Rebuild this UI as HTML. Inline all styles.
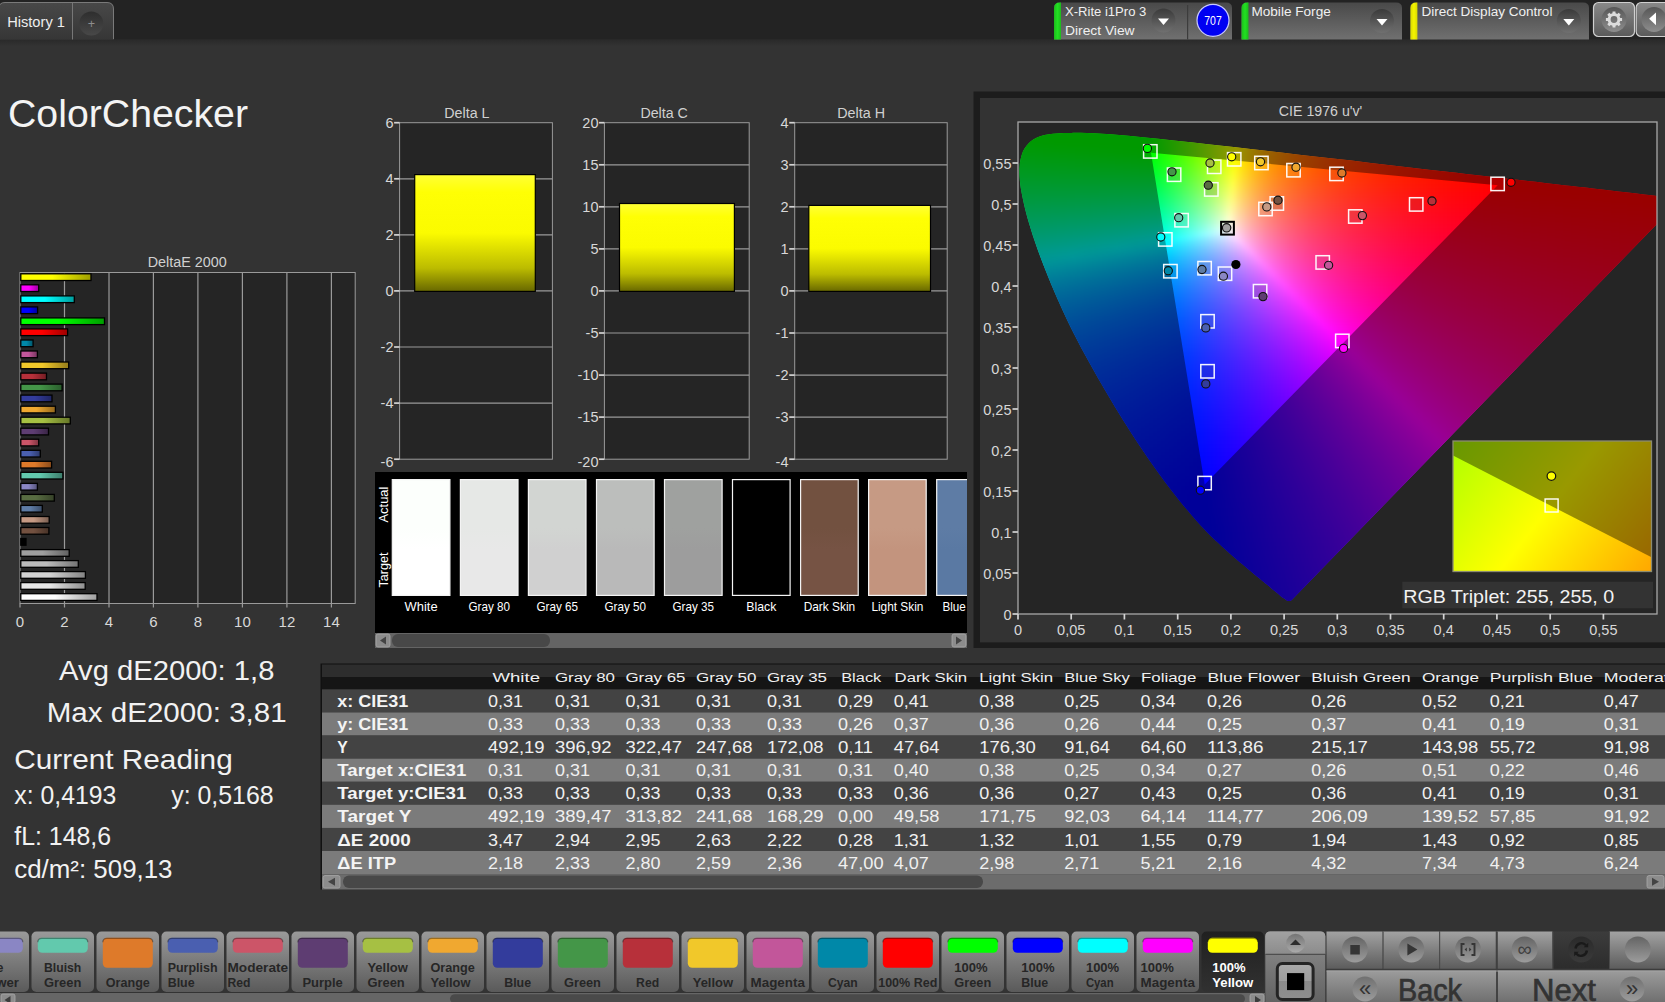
<!DOCTYPE html>
<html lang="en"><head><meta charset="utf-8"><title>ColorChecker</title>
<style>
html,body{margin:0;padding:0;background:#333;overflow:hidden}
body{width:1665px;height:1002px;position:relative;font-family:'Liberation Sans', sans-serif}
svg{display:block;position:absolute;left:0;top:0}
svg text{font-family:'Liberation Sans', sans-serif}
.cfo rect{width:9px;height:9px}
.cfi rect{width:5px;height:5px}
</style></head><body>
<svg width="1665" height="1002" viewBox="0 0 1665 1002">
<defs>
<linearGradient id="g1" x1="0" y1="0" x2="0" y2="1"><stop offset="0" stop-color="#484848"/><stop offset="1" stop-color="#363636"/></linearGradient>
<linearGradient id="g2" x1="0" y1="0" x2="0" y2="1"><stop offset="0" stop-color="#292929"/><stop offset="1" stop-color="#333"/></linearGradient>
<linearGradient id="g3" x1="0" y1="0" x2="0" y2="1"><stop offset="0" stop-color="#2e2e2e"/><stop offset="1" stop-color="#484848"/></linearGradient>
<linearGradient id="g4" x1="0" y1="0" x2="0" y2="1"><stop offset="0" stop-color="#494949"/><stop offset="1" stop-color="#707070"/></linearGradient>
<linearGradient id="g5" x1="0" y1="0" x2="0" y2="1"><stop offset="0" stop-color="#3a3a3a"/><stop offset="1" stop-color="#707070"/></linearGradient>
<linearGradient id="g6" x1="0" y1="0" x2="1" y2="0"><stop offset="0" stop-color="#1dbb1d"/><stop offset="0.5" stop-color="#22e022"/><stop offset="1" stop-color="#1dbb1d"/></linearGradient>
<linearGradient id="g7" x1="0" y1="0" x2="1" y2="0"><stop offset="0" stop-color="#1dbb1d"/><stop offset="0.5" stop-color="#22e022"/><stop offset="1" stop-color="#1dbb1d"/></linearGradient>
<linearGradient id="g8" x1="0" y1="0" x2="1" y2="0"><stop offset="0" stop-color="#d8d800"/><stop offset="0.5" stop-color="#f4f400"/><stop offset="1" stop-color="#d8d800"/></linearGradient>
<linearGradient id="g9" x1="0" y1="0" x2="0" y2="1"><stop offset="0" stop-color="#888888"/><stop offset="1" stop-color="#5a5a5a"/></linearGradient>
<linearGradient id="g10" x1="0" y1="0" x2="0" y2="1"><stop offset="0" stop-color="#565656"/><stop offset="1" stop-color="#8e8e8e"/></linearGradient>
<linearGradient id="g11" x1="0" y1="0" x2="1" y2="0"><stop offset="0" stop-color="#ffff00"/><stop offset="0.45" stop-color="#ffff00"/><stop offset="1" stop-color="#9e9e00"/></linearGradient>
<linearGradient id="g12" x1="0" y1="0" x2="1" y2="0"><stop offset="0" stop-color="#ff00ff"/><stop offset="0.45" stop-color="#ff00ff"/><stop offset="1" stop-color="#9e009e"/></linearGradient>
<linearGradient id="g13" x1="0" y1="0" x2="1" y2="0"><stop offset="0" stop-color="#00ffff"/><stop offset="0.45" stop-color="#00ffff"/><stop offset="1" stop-color="#009e9e"/></linearGradient>
<linearGradient id="g14" x1="0" y1="0" x2="1" y2="0"><stop offset="0" stop-color="#0000ff"/><stop offset="0.45" stop-color="#0000ff"/><stop offset="1" stop-color="#00009e"/></linearGradient>
<linearGradient id="g15" x1="0" y1="0" x2="1" y2="0"><stop offset="0" stop-color="#00ff00"/><stop offset="0.45" stop-color="#00ff00"/><stop offset="1" stop-color="#009e00"/></linearGradient>
<linearGradient id="g16" x1="0" y1="0" x2="1" y2="0"><stop offset="0" stop-color="#ff0000"/><stop offset="0.45" stop-color="#ff0000"/><stop offset="1" stop-color="#9e0000"/></linearGradient>
<linearGradient id="g17" x1="0" y1="0" x2="1" y2="0"><stop offset="0" stop-color="#0088a8"/><stop offset="0.45" stop-color="#0088a8"/><stop offset="1" stop-color="#005468"/></linearGradient>
<linearGradient id="g18" x1="0" y1="0" x2="1" y2="0"><stop offset="0" stop-color="#c2569a"/><stop offset="0.45" stop-color="#c2569a"/><stop offset="1" stop-color="#78355f"/></linearGradient>
<linearGradient id="g19" x1="0" y1="0" x2="1" y2="0"><stop offset="0" stop-color="#f1c82a"/><stop offset="0.45" stop-color="#f1c82a"/><stop offset="1" stop-color="#957c1a"/></linearGradient>
<linearGradient id="g20" x1="0" y1="0" x2="1" y2="0"><stop offset="0" stop-color="#b7303a"/><stop offset="0.45" stop-color="#b7303a"/><stop offset="1" stop-color="#711d23"/></linearGradient>
<linearGradient id="g21" x1="0" y1="0" x2="1" y2="0"><stop offset="0" stop-color="#449648"/><stop offset="0.45" stop-color="#449648"/><stop offset="1" stop-color="#2a5d2c"/></linearGradient>
<linearGradient id="g22" x1="0" y1="0" x2="1" y2="0"><stop offset="0" stop-color="#333c9c"/><stop offset="0.45" stop-color="#333c9c"/><stop offset="1" stop-color="#1f2560"/></linearGradient>
<linearGradient id="g23" x1="0" y1="0" x2="1" y2="0"><stop offset="0" stop-color="#f0a830"/><stop offset="0.45" stop-color="#f0a830"/><stop offset="1" stop-color="#94681d"/></linearGradient>
<linearGradient id="g24" x1="0" y1="0" x2="1" y2="0"><stop offset="0" stop-color="#a6c043"/><stop offset="0.45" stop-color="#a6c043"/><stop offset="1" stop-color="#667729"/></linearGradient>
<linearGradient id="g25" x1="0" y1="0" x2="1" y2="0"><stop offset="0" stop-color="#5e3d72"/><stop offset="0.45" stop-color="#5e3d72"/><stop offset="1" stop-color="#3a2546"/></linearGradient>
<linearGradient id="g26" x1="0" y1="0" x2="1" y2="0"><stop offset="0" stop-color="#cc5568"/><stop offset="0.45" stop-color="#cc5568"/><stop offset="1" stop-color="#7e3440"/></linearGradient>
<linearGradient id="g27" x1="0" y1="0" x2="1" y2="0"><stop offset="0" stop-color="#4a5fb0"/><stop offset="0.45" stop-color="#4a5fb0"/><stop offset="1" stop-color="#2d3a6d"/></linearGradient>
<linearGradient id="g28" x1="0" y1="0" x2="1" y2="0"><stop offset="0" stop-color="#de7a2a"/><stop offset="0.45" stop-color="#de7a2a"/><stop offset="1" stop-color="#894b1a"/></linearGradient>
<linearGradient id="g29" x1="0" y1="0" x2="1" y2="0"><stop offset="0" stop-color="#62c9ad"/><stop offset="0.45" stop-color="#62c9ad"/><stop offset="1" stop-color="#3c7c6b"/></linearGradient>
<linearGradient id="g30" x1="0" y1="0" x2="1" y2="0"><stop offset="0" stop-color="#8a86c4"/><stop offset="0.45" stop-color="#8a86c4"/><stop offset="1" stop-color="#555379"/></linearGradient>
<linearGradient id="g31" x1="0" y1="0" x2="1" y2="0"><stop offset="0" stop-color="#586c42"/><stop offset="0.45" stop-color="#586c42"/><stop offset="1" stop-color="#364228"/></linearGradient>
<linearGradient id="g32" x1="0" y1="0" x2="1" y2="0"><stop offset="0" stop-color="#5e7ca5"/><stop offset="0.45" stop-color="#5e7ca5"/><stop offset="1" stop-color="#3a4c66"/></linearGradient>
<linearGradient id="g33" x1="0" y1="0" x2="1" y2="0"><stop offset="0" stop-color="#c69a84"/><stop offset="0.45" stop-color="#c69a84"/><stop offset="1" stop-color="#7a5f51"/></linearGradient>
<linearGradient id="g34" x1="0" y1="0" x2="1" y2="0"><stop offset="0" stop-color="#735140"/><stop offset="0.45" stop-color="#735140"/><stop offset="1" stop-color="#473227"/></linearGradient>
<linearGradient id="g35" x1="0" y1="0" x2="1" y2="0"><stop offset="0" stop-color="#000000"/><stop offset="0.45" stop-color="#000000"/><stop offset="1" stop-color="#000000"/></linearGradient>
<linearGradient id="g36" x1="0" y1="0" x2="1" y2="0"><stop offset="0" stop-color="#9f9f9f"/><stop offset="0.45" stop-color="#9f9f9f"/><stop offset="1" stop-color="#626262"/></linearGradient>
<linearGradient id="g37" x1="0" y1="0" x2="1" y2="0"><stop offset="0" stop-color="#bcbcbc"/><stop offset="0.45" stop-color="#bcbcbc"/><stop offset="1" stop-color="#747474"/></linearGradient>
<linearGradient id="g38" x1="0" y1="0" x2="1" y2="0"><stop offset="0" stop-color="#d2d2d2"/><stop offset="0.45" stop-color="#d2d2d2"/><stop offset="1" stop-color="#828282"/></linearGradient>
<linearGradient id="g39" x1="0" y1="0" x2="1" y2="0"><stop offset="0" stop-color="#e6e6e6"/><stop offset="0.45" stop-color="#e6e6e6"/><stop offset="1" stop-color="#8e8e8e"/></linearGradient>
<linearGradient id="g40" x1="0" y1="0" x2="1" y2="0"><stop offset="0" stop-color="#ffffff"/><stop offset="0.45" stop-color="#ffffff"/><stop offset="1" stop-color="#9e9e9e"/></linearGradient>
<linearGradient id="g41" x1="0" y1="0" x2="0" y2="1"><stop offset="0" stop-color="#ffff36"/><stop offset="0.15" stop-color="#ffff04"/><stop offset="0.5" stop-color="#fbfb00"/><stop offset="0.8" stop-color="#bcbc00"/><stop offset="1" stop-color="#686800"/></linearGradient>
<linearGradient id="g42" x1="0" y1="0" x2="0" y2="1"><stop offset="0" stop-color="#fcfffc"/><stop offset="0.42" stop-color="#fcfffc"/><stop offset="0.6" stop-color="#ffffff"/><stop offset="1" stop-color="#ffffff"/></linearGradient>
<linearGradient id="g43" x1="0" y1="0" x2="0" y2="1"><stop offset="0" stop-color="#e6e8e6"/><stop offset="0.42" stop-color="#e6e8e6"/><stop offset="0.6" stop-color="#e8e8e8"/><stop offset="1" stop-color="#e8e8e8"/></linearGradient>
<linearGradient id="g44" x1="0" y1="0" x2="0" y2="1"><stop offset="0" stop-color="#d2d5d2"/><stop offset="0.42" stop-color="#d2d5d2"/><stop offset="0.6" stop-color="#d0d0d0"/><stop offset="1" stop-color="#d0d0d0"/></linearGradient>
<linearGradient id="g45" x1="0" y1="0" x2="0" y2="1"><stop offset="0" stop-color="#bcbebc"/><stop offset="0.42" stop-color="#bcbebc"/><stop offset="0.6" stop-color="#b9b9b9"/><stop offset="1" stop-color="#b9b9b9"/></linearGradient>
<linearGradient id="g46" x1="0" y1="0" x2="0" y2="1"><stop offset="0" stop-color="#9fa19f"/><stop offset="0.42" stop-color="#9fa19f"/><stop offset="0.6" stop-color="#9d9d9d"/><stop offset="1" stop-color="#9d9d9d"/></linearGradient>
<linearGradient id="g47" x1="0" y1="0" x2="0" y2="1"><stop offset="0" stop-color="#725140"/><stop offset="0.42" stop-color="#725140"/><stop offset="0.6" stop-color="#765344"/><stop offset="1" stop-color="#765344"/></linearGradient>
<linearGradient id="g48" x1="0" y1="0" x2="0" y2="1"><stop offset="0" stop-color="#c69a84"/><stop offset="0.42" stop-color="#c69a84"/><stop offset="0.6" stop-color="#c3947e"/><stop offset="1" stop-color="#c3947e"/></linearGradient>
<linearGradient id="g49" x1="0" y1="0" x2="0" y2="1"><stop offset="0" stop-color="#5e7ca5"/><stop offset="0.42" stop-color="#5e7ca5"/><stop offset="0.6" stop-color="#5a79a3"/><stop offset="1" stop-color="#5a79a3"/></linearGradient>
<clipPath id="plotc"><rect x="1018" y="122" width="639" height="492"/></clipPath>
<clipPath id="locc"><path d="M1291.3 600.4 C1291.3 600.4 1291.2 600.3 1291.1 600.4 C1291.1 600.4 1291.0 600.6 1290.9 600.7 C1290.8 600.7 1290.7 600.6 1290.6 600.7 C1290.4 600.7 1290.3 600.9 1290.1 600.9 C1290.0 601.0 1289.8 600.9 1289.6 600.9 C1289.4 600.9 1289.2 600.9 1288.9 600.9 C1288.6 600.9 1288.4 601.1 1288.0 600.9 C1287.6 600.8 1287.2 600.6 1286.4 600.2 C1285.7 599.7 1284.8 599.1 1283.7 598.3 C1282.6 597.5 1281.5 596.7 1280.0 595.4 C1278.4 594.2 1276.6 592.8 1274.6 591.1 C1272.5 589.4 1270.3 587.4 1267.8 585.3 C1265.2 583.1 1262.5 580.9 1259.2 578.2 C1255.9 575.5 1252.1 572.4 1248.0 568.9 C1243.8 565.5 1239.4 562.0 1234.4 557.6 C1229.4 553.2 1223.9 548.5 1217.8 542.6 C1211.7 536.7 1205.6 530.9 1197.8 522.2 C1190.1 513.5 1181.0 502.8 1171.3 490.2 C1161.7 477.6 1150.9 462.8 1140.1 446.4 C1129.2 430.0 1117.2 410.8 1106.1 391.9 C1095.0 373.0 1083.2 352.2 1073.5 333.0 C1063.8 313.7 1055.1 293.8 1048.0 276.4 C1040.8 259.0 1035.0 242.6 1030.7 228.7 C1026.3 214.9 1023.6 203.3 1021.7 193.3 C1019.8 183.3 1019.3 175.5 1019.5 168.6 C1019.7 161.7 1021.0 156.3 1022.9 151.6 C1024.9 147.0 1027.8 143.6 1031.1 140.9 C1034.4 138.2 1038.4 136.6 1042.6 135.4 C1046.8 134.1 1051.5 133.8 1056.3 133.4 C1061.1 132.9 1066.3 132.9 1071.3 132.9 C1076.3 132.8 1081.3 132.9 1086.5 133.1 C1091.6 133.2 1096.8 133.5 1102.3 133.8 C1107.8 134.1 1113.5 134.5 1119.4 135.0 C1125.3 135.5 1131.5 136.1 1138.0 136.7 C1144.4 137.3 1151.2 138.0 1158.3 138.8 C1165.5 139.5 1173.0 140.3 1181.0 141.2 C1188.9 142.1 1197.2 143.0 1205.9 144.0 C1214.7 145.0 1223.9 146.0 1233.6 147.1 C1243.3 148.2 1253.4 149.4 1264.0 150.6 C1274.6 151.8 1285.7 153.1 1297.2 154.4 C1308.7 155.8 1320.7 157.2 1333.0 158.6 C1345.3 160.0 1358.1 161.4 1370.9 162.9 C1383.6 164.4 1397.0 165.9 1409.7 167.4 C1422.5 168.9 1435.0 170.3 1447.4 171.7 C1459.8 173.2 1472.5 174.6 1484.1 176.0 C1495.8 177.3 1506.9 178.6 1517.4 179.8 C1527.8 181.0 1537.7 182.1 1546.7 183.2 C1555.8 184.2 1564.1 185.2 1571.7 186.0 C1579.4 186.9 1586.2 187.7 1592.7 188.4 C1599.1 189.2 1604.8 189.8 1610.3 190.5 C1615.8 191.1 1620.9 191.7 1625.6 192.2 C1630.3 192.8 1634.6 193.3 1638.5 193.7 C1642.4 194.2 1645.9 194.6 1649.0 194.9 C1652.1 195.3 1654.7 195.6 1657.1 195.9 C1659.5 196.1 1661.6 196.4 1663.5 196.6 C1665.3 196.8 1666.9 197.0 1668.2 197.1 C1669.5 197.3 1670.3 197.4 1671.3 197.5 C1672.2 197.6 1673.0 197.7 1673.8 197.8 C1674.6 197.9 1675.1 197.9 1675.8 198.0 C1676.4 198.1 1677.2 198.2 1677.8 198.2 C1678.4 198.3 1679.0 198.4 1679.5 198.4 C1680.0 198.5 1680.4 198.5 1680.6 198.6 C1680.9 198.6 1681.1 198.6 1681.2 198.6 C1681.4 198.7 1681.5 198.7 1681.5 198.7Z"/></clipPath>
<clipPath id="tric"><path d="M1497.7 185.2 L1151.0 152.8 L1204.7 484.5Z"/></clipPath>
<filter id="blo" x="-5%" y="-5%" width="110%" height="110%" color-interpolation-filters="sRGB"><feGaussianBlur stdDeviation="4"/></filter>
<filter id="bli" x="-5%" y="-5%" width="110%" height="110%" color-interpolation-filters="sRGB"><feGaussianBlur stdDeviation="2"/></filter>
<clipPath id="insc"><rect x="1453" y="441" width="198.5" height="130.5"/></clipPath>
<linearGradient id="insg" gradientUnits="userSpaceOnUse" x1="1456.4" y1="431.1" x2="1645.6" y2="578.9"><stop offset="0" stop-color="#abff00"/><stop offset="0.5" stop-color="#ffff00"/><stop offset="1" stop-color="#ffa700"/></linearGradient>
<linearGradient id="g50" x1="0" y1="0" x2="0" y2="1"><stop offset="0" stop-color="#9a9a9a"/><stop offset="1" stop-color="#5a5a5a"/></linearGradient>
<linearGradient id="g51" x1="0" y1="0" x2="0" y2="1"><stop offset="0" stop-color="#202020"/><stop offset="1" stop-color="#313131"/></linearGradient>
<linearGradient id="g52" x1="0" y1="0" x2="0" y2="1"><stop offset="0" stop-color="#8e8e8e"/><stop offset="1" stop-color="#606060"/></linearGradient>
<linearGradient id="g53" x1="0" y1="0" x2="0" y2="1"><stop offset="0" stop-color="#a2a2a2"/><stop offset="1" stop-color="#8c8c8c"/></linearGradient>
<linearGradient id="g54" x1="0" y1="0" x2="0" y2="1"><stop offset="0" stop-color="#747474"/><stop offset="1" stop-color="#ababab"/></linearGradient>
<linearGradient id="g55" x1="0" y1="0" x2="0" y2="1"><stop offset="0" stop-color="#a9a9a9"/><stop offset="0.5" stop-color="#9d9d9d"/><stop offset="0.5" stop-color="#8a8a8a"/><stop offset="1" stop-color="#8f8f8f"/></linearGradient>
<linearGradient id="g56" x1="0" y1="0" x2="0" y2="1"><stop offset="0" stop-color="#a2a2a2"/><stop offset="1" stop-color="#5c5c5c"/></linearGradient>
<linearGradient id="g57" x1="0" y1="0" x2="0" y2="1"><stop offset="0" stop-color="#3c3c3c"/><stop offset="1" stop-color="#2c2c2c"/></linearGradient>
<linearGradient id="g58" x1="0" y1="0" x2="0" y2="1"><stop offset="0" stop-color="#646464"/><stop offset="1" stop-color="#9c9c9c"/></linearGradient>
<linearGradient id="g59" x1="0" y1="0" x2="0" y2="1"><stop offset="0" stop-color="#646464"/><stop offset="1" stop-color="#9c9c9c"/></linearGradient>
<linearGradient id="g60" x1="0" y1="0" x2="0" y2="1"><stop offset="0" stop-color="#646464"/><stop offset="1" stop-color="#9c9c9c"/></linearGradient>
<linearGradient id="g61" x1="0" y1="0" x2="0" y2="1"><stop offset="0" stop-color="#646464"/><stop offset="1" stop-color="#9c9c9c"/></linearGradient>
<linearGradient id="g62" x1="0" y1="0" x2="0" y2="1"><stop offset="0" stop-color="#2a2a2a"/><stop offset="1" stop-color="#3a3a3a"/></linearGradient>
<linearGradient id="g63" x1="0" y1="0" x2="0" y2="1"><stop offset="0" stop-color="#646464"/><stop offset="1" stop-color="#9c9c9c"/></linearGradient>
<linearGradient id="g64" x1="0" y1="0" x2="0" y2="1"><stop offset="0" stop-color="#9c9c9c"/><stop offset="1" stop-color="#6c6c6c"/></linearGradient>
<linearGradient id="g65" x1="0" y1="0" x2="0" y2="1"><stop offset="0" stop-color="#707070"/><stop offset="1" stop-color="#9c9c9c"/></linearGradient>
</defs>
<rect x="0.0" y="0.0" width="1665.0" height="1002.0" fill="#333"/>
<rect x="0.0" y="0.0" width="1665.0" height="40.0" fill="#232323"/>
<path d="M-1 40 V8 Q-1 2.5 5 2.5 H107 Q113.5 2.5 113.5 9 V40 Z" fill="url(#g1)" stroke="#7a7a7a" stroke-width="1"/>
<rect x="-2.0" y="39.2" width="1669.0" height="7.0" fill="url(#g2)"/>
<line x1="72.5" y1="3.0" x2="72.5" y2="39.5" stroke="#777" stroke-width="1"/>
<circle cx="91.3" cy="23.5" r="12" fill="url(#g3)"/>
<text x="7.2" y="26.7" font-size="14" fill="#eee" textLength="57.7" lengthAdjust="spacingAndGlyphs">History 1</text>
<text x="91.3" y="28.2" font-size="12.5" fill="#8e8e8e" text-anchor="middle">+</text>
<path d="M1054.0 39.5 V8 Q1054.0 2.5 1060.0 2.5 H1226.0 Q1232.0 2.5 1232.0 8 V39.5 Z" fill="url(#g4)"/>
<path d="M1054.0 39.5 V8 Q1054.0 2.5 1060.0 2.5 H1061.0 V39.5 Z" fill="url(#g6)"/>
<line x1="1187.6" y1="5.0" x2="1187.6" y2="39.5" stroke="#3c3c3c" stroke-width="1.2"/>
<circle cx="1163.5" cy="20.5" r="12" fill="url(#g5)"/>
<path d="M1158.0 18.5 h11 l-5.5 6.5 Z" fill="#fff"/>
<circle cx="1213" cy="20.3" r="16" fill="#0000f2" stroke="#c8c8ff" stroke-width="1.2"/>
<text x="1213.0" y="25.3" font-size="13.5" fill="#fff" text-anchor="middle" textLength="17.5" lengthAdjust="spacingAndGlyphs">707</text>
<text x="1065.0" y="15.8" font-size="13" fill="#f0f0f0" textLength="81.3" lengthAdjust="spacingAndGlyphs">X-Rite i1Pro 3</text>
<text x="1065.0" y="34.6" font-size="13" fill="#f0f0f0" textLength="69.6" lengthAdjust="spacingAndGlyphs">Direct View</text>
<path d="M1241.5 39.5 V8 Q1241.5 2.5 1247.5 2.5 H1396.0 Q1402.0 2.5 1402.0 8 V39.5 Z" fill="url(#g4)"/>
<path d="M1241.5 39.5 V8 Q1241.5 2.5 1247.5 2.5 H1248.5 V39.5 Z" fill="url(#g7)"/>
<circle cx="1382.0" cy="21.0" r="12" fill="url(#g5)"/>
<path d="M1376.5 19.0 h11 l-5.5 6.5 Z" fill="#fff"/>
<text x="1251.4" y="15.8" font-size="13" fill="#f0f0f0" textLength="79.4" lengthAdjust="spacingAndGlyphs">Mobile Forge</text>
<path d="M1410.4 39.5 V8 Q1410.4 2.5 1416.4 2.5 H1583.0 Q1589.0 2.5 1589.0 8 V39.5 Z" fill="url(#g4)"/>
<path d="M1410.4 39.5 V8 Q1410.4 2.5 1416.4 2.5 H1417.4 V39.5 Z" fill="url(#g8)"/>
<circle cx="1568.8" cy="21.0" r="12" fill="url(#g5)"/>
<path d="M1563.3 19.0 h11 l-5.5 6.5 Z" fill="#fff"/>
<text x="1421.4" y="15.8" font-size="13" fill="#f0f0f0" textLength="131.0" lengthAdjust="spacingAndGlyphs">Direct Display Control</text>
<rect x="1593.5" y="2.5" width="41.0" height="34.0" fill="url(#g9)" rx="5" stroke="#cfcfcf" stroke-width="1.2"/>
<rect x="1636.2" y="2.5" width="41.0" height="34.0" fill="url(#g9)" rx="5" stroke="#cfcfcf" stroke-width="1.2"/>
<circle cx="1614" cy="19.5" r="12.5" fill="url(#g10)"/>
<circle cx="1654" cy="19.5" r="12.5" fill="url(#g10)"/>
<path d="M1622.08 18.09 L1622.08 20.91 L1620.20 21.09 L1619.51 22.76 L1620.71 24.22 L1618.72 26.21 L1617.26 25.01 L1615.59 25.70 L1615.41 27.58 L1612.59 27.58 L1612.41 25.70 L1610.74 25.01 L1609.28 26.21 L1607.29 24.22 L1608.49 22.76 L1607.80 21.09 L1605.92 20.91 L1605.92 18.09 L1607.80 17.91 L1608.49 16.24 L1607.29 14.78 L1609.28 12.79 L1610.74 13.99 L1612.41 13.30 L1612.59 11.42 L1615.41 11.42 L1615.59 13.30 L1617.26 13.99 L1618.72 12.79 L1620.71 14.78 L1619.51 16.24 L1620.20 17.91Z M1610.60 19.50 a3.40 3.40 0 1 0 6.80 0 a3.40 3.40 0 1 0 -6.80 0Z" fill="#dcdcdc" fill-rule="evenodd"/>
<path d="M1656 12.4 v12.8 l-6.9 -6.4 Z" fill="#fff"/>
<text x="8.0" y="127.0" font-size="39.6" fill="#f4f4f4" textLength="240.0" lengthAdjust="spacingAndGlyphs">ColorChecker</text>
<rect x="20.0" y="272.5" width="335.2" height="331.0" fill="#252525" stroke="#9a9a9a" stroke-width="1"/>
<line x1="64.5" y1="272.5" x2="64.5" y2="603.5" stroke="#9a9a9a" stroke-width="1.2"/>
<line x1="109.0" y1="272.5" x2="109.0" y2="603.5" stroke="#9a9a9a" stroke-width="1.2"/>
<line x1="153.4" y1="272.5" x2="153.4" y2="603.5" stroke="#9a9a9a" stroke-width="1.2"/>
<line x1="197.9" y1="272.5" x2="197.9" y2="603.5" stroke="#9a9a9a" stroke-width="1.2"/>
<line x1="242.4" y1="272.5" x2="242.4" y2="603.5" stroke="#9a9a9a" stroke-width="1.2"/>
<line x1="286.9" y1="272.5" x2="286.9" y2="603.5" stroke="#9a9a9a" stroke-width="1.2"/>
<line x1="331.4" y1="272.5" x2="331.4" y2="603.5" stroke="#9a9a9a" stroke-width="1.2"/>
<text x="187.2" y="267.1" font-size="14" fill="#d0d0d0" text-anchor="middle" textLength="79.0" lengthAdjust="spacingAndGlyphs">DeltaE 2000</text>
<line x1="20.0" y1="603.5" x2="20.0" y2="607.5" stroke="#9a9a9a" stroke-width="1.2"/>
<text x="20.0" y="626.6" font-size="15" fill="#d8d8d8" text-anchor="middle">0</text>
<line x1="64.5" y1="603.5" x2="64.5" y2="607.5" stroke="#9a9a9a" stroke-width="1.2"/>
<text x="64.5" y="626.6" font-size="15" fill="#d8d8d8" text-anchor="middle">2</text>
<line x1="109.0" y1="603.5" x2="109.0" y2="607.5" stroke="#9a9a9a" stroke-width="1.2"/>
<text x="109.0" y="626.6" font-size="15" fill="#d8d8d8" text-anchor="middle">4</text>
<line x1="153.4" y1="603.5" x2="153.4" y2="607.5" stroke="#9a9a9a" stroke-width="1.2"/>
<text x="153.4" y="626.6" font-size="15" fill="#d8d8d8" text-anchor="middle">6</text>
<line x1="197.9" y1="603.5" x2="197.9" y2="607.5" stroke="#9a9a9a" stroke-width="1.2"/>
<text x="197.9" y="626.6" font-size="15" fill="#d8d8d8" text-anchor="middle">8</text>
<line x1="242.4" y1="603.5" x2="242.4" y2="607.5" stroke="#9a9a9a" stroke-width="1.2"/>
<text x="242.4" y="626.6" font-size="15" fill="#d8d8d8" text-anchor="middle">10</text>
<line x1="286.9" y1="603.5" x2="286.9" y2="607.5" stroke="#9a9a9a" stroke-width="1.2"/>
<text x="286.9" y="626.6" font-size="15" fill="#d8d8d8" text-anchor="middle">12</text>
<line x1="331.4" y1="603.5" x2="331.4" y2="607.5" stroke="#9a9a9a" stroke-width="1.2"/>
<text x="331.4" y="626.6" font-size="15" fill="#d8d8d8" text-anchor="middle">14</text>
<rect x="20.8" y="273.8" width="70.2" height="6.7" fill="url(#g11)" stroke="#000" stroke-width="1.3"/>
<rect x="20.8" y="284.8" width="17.9" height="6.7" fill="url(#g12)" stroke="#000" stroke-width="1.3"/>
<rect x="20.8" y="295.9" width="53.5" height="6.7" fill="url(#g13)" stroke="#000" stroke-width="1.3"/>
<rect x="20.8" y="306.9" width="16.8" height="6.7" fill="url(#g14)" stroke="#000" stroke-width="1.3"/>
<rect x="20.8" y="317.9" width="83.7" height="6.7" fill="url(#g15)" stroke="#000" stroke-width="1.3"/>
<rect x="20.8" y="328.9" width="46.8" height="6.7" fill="url(#g16)" stroke="#000" stroke-width="1.3"/>
<rect x="20.8" y="340.0" width="12.3" height="6.7" fill="url(#g17)" stroke="#000" stroke-width="1.3"/>
<rect x="20.8" y="351.0" width="16.6" height="6.7" fill="url(#g18)" stroke="#000" stroke-width="1.3"/>
<rect x="20.8" y="362.0" width="47.9" height="6.7" fill="url(#g19)" stroke="#000" stroke-width="1.3"/>
<rect x="20.8" y="373.1" width="25.7" height="6.7" fill="url(#g20)" stroke="#000" stroke-width="1.3"/>
<rect x="20.8" y="384.1" width="41.3" height="6.7" fill="url(#g21)" stroke="#000" stroke-width="1.3"/>
<rect x="20.8" y="395.1" width="31.2" height="6.7" fill="url(#g22)" stroke="#000" stroke-width="1.3"/>
<rect x="20.8" y="406.2" width="34.6" height="6.7" fill="url(#g23)" stroke="#000" stroke-width="1.3"/>
<rect x="20.8" y="417.2" width="49.5" height="6.7" fill="url(#g24)" stroke="#000" stroke-width="1.3"/>
<rect x="20.8" y="428.2" width="27.7" height="6.7" fill="url(#g25)" stroke="#000" stroke-width="1.3"/>
<rect x="20.8" y="439.2" width="17.9" height="6.7" fill="url(#g26)" stroke="#000" stroke-width="1.3"/>
<rect x="20.8" y="450.3" width="19.5" height="6.7" fill="url(#g27)" stroke="#000" stroke-width="1.3"/>
<rect x="20.8" y="461.3" width="30.8" height="6.7" fill="url(#g28)" stroke="#000" stroke-width="1.3"/>
<rect x="20.8" y="472.3" width="42.1" height="6.7" fill="url(#g29)" stroke="#000" stroke-width="1.3"/>
<rect x="20.8" y="483.4" width="16.6" height="6.7" fill="url(#g30)" stroke="#000" stroke-width="1.3"/>
<rect x="20.8" y="494.4" width="33.5" height="6.7" fill="url(#g31)" stroke="#000" stroke-width="1.3"/>
<rect x="20.8" y="505.4" width="21.5" height="6.7" fill="url(#g32)" stroke="#000" stroke-width="1.3"/>
<rect x="20.8" y="516.5" width="28.4" height="6.7" fill="url(#g33)" stroke="#000" stroke-width="1.3"/>
<rect x="20.8" y="527.5" width="28.1" height="6.7" fill="url(#g34)" stroke="#000" stroke-width="1.3"/>
<rect x="20.8" y="538.5" width="5.2" height="6.7" fill="url(#g35)" stroke="#000" stroke-width="1.3"/>
<rect x="20.8" y="549.6" width="48.4" height="6.7" fill="url(#g36)" stroke="#000" stroke-width="1.3"/>
<rect x="20.8" y="560.6" width="57.5" height="6.7" fill="url(#g37)" stroke="#000" stroke-width="1.3"/>
<rect x="20.8" y="571.6" width="64.6" height="6.7" fill="url(#g38)" stroke="#000" stroke-width="1.3"/>
<rect x="20.8" y="582.6" width="64.4" height="6.7" fill="url(#g39)" stroke="#000" stroke-width="1.3"/>
<rect x="20.8" y="593.7" width="76.2" height="6.7" fill="url(#g40)" stroke="#000" stroke-width="1.3"/>
<rect x="399.6" y="122.7" width="152.8" height="336.5" fill="#252525" stroke="#9a9a9a" stroke-width="1"/>
<line x1="394.1" y1="122.7" x2="399.6" y2="122.7" stroke="#d4d4d4" stroke-width="1.7"/>
<text x="393.5" y="128.0" font-size="14.5" fill="#d8d8d8" text-anchor="end">6</text>
<line x1="399.6" y1="178.8" x2="552.4" y2="178.8" stroke="#9a9a9a" stroke-width="1.2"/>
<line x1="394.1" y1="178.8" x2="399.6" y2="178.8" stroke="#d4d4d4" stroke-width="1.7"/>
<text x="393.5" y="184.1" font-size="14.5" fill="#d8d8d8" text-anchor="end">4</text>
<line x1="399.6" y1="234.9" x2="552.4" y2="234.9" stroke="#9a9a9a" stroke-width="1.2"/>
<line x1="394.1" y1="234.9" x2="399.6" y2="234.9" stroke="#d4d4d4" stroke-width="1.7"/>
<text x="393.5" y="240.2" font-size="14.5" fill="#d8d8d8" text-anchor="end">2</text>
<line x1="399.6" y1="290.9" x2="552.4" y2="290.9" stroke="#9a9a9a" stroke-width="1.2"/>
<line x1="394.1" y1="290.9" x2="399.6" y2="290.9" stroke="#d4d4d4" stroke-width="1.7"/>
<text x="393.5" y="296.2" font-size="14.5" fill="#d8d8d8" text-anchor="end">0</text>
<line x1="399.6" y1="347.0" x2="552.4" y2="347.0" stroke="#9a9a9a" stroke-width="1.2"/>
<line x1="394.1" y1="347.0" x2="399.6" y2="347.0" stroke="#d4d4d4" stroke-width="1.7"/>
<text x="393.5" y="352.3" font-size="14.5" fill="#d8d8d8" text-anchor="end">-2</text>
<line x1="399.6" y1="403.1" x2="552.4" y2="403.1" stroke="#9a9a9a" stroke-width="1.2"/>
<line x1="394.1" y1="403.1" x2="399.6" y2="403.1" stroke="#d4d4d4" stroke-width="1.7"/>
<text x="393.5" y="408.4" font-size="14.5" fill="#d8d8d8" text-anchor="end">-4</text>
<line x1="394.1" y1="459.2" x2="399.6" y2="459.2" stroke="#d4d4d4" stroke-width="1.7"/>
<text x="393.5" y="466.8" font-size="14.5" fill="#d8d8d8" text-anchor="end">-6</text>
<text x="466.9" y="117.8" font-size="14" fill="#d0d0d0" text-anchor="middle" textLength="45.2" lengthAdjust="spacingAndGlyphs">Delta L</text>
<rect x="414.7" y="174.6" width="120.6" height="116.8" fill="url(#g41)" stroke="#000" stroke-width="1.2"/>
<rect x="604.4" y="122.7" width="144.8" height="336.5" fill="#252525" stroke="#9a9a9a" stroke-width="1"/>
<line x1="598.9" y1="122.7" x2="604.4" y2="122.7" stroke="#d4d4d4" stroke-width="1.7"/>
<text x="598.5" y="128.0" font-size="14.5" fill="#d8d8d8" text-anchor="end">20</text>
<line x1="604.4" y1="164.8" x2="749.2" y2="164.8" stroke="#9a9a9a" stroke-width="1.2"/>
<line x1="598.9" y1="164.8" x2="604.4" y2="164.8" stroke="#d4d4d4" stroke-width="1.7"/>
<text x="598.5" y="170.1" font-size="14.5" fill="#d8d8d8" text-anchor="end">15</text>
<line x1="604.4" y1="206.8" x2="749.2" y2="206.8" stroke="#9a9a9a" stroke-width="1.2"/>
<line x1="598.9" y1="206.8" x2="604.4" y2="206.8" stroke="#d4d4d4" stroke-width="1.7"/>
<text x="598.5" y="212.1" font-size="14.5" fill="#d8d8d8" text-anchor="end">10</text>
<line x1="604.4" y1="248.9" x2="749.2" y2="248.9" stroke="#9a9a9a" stroke-width="1.2"/>
<line x1="598.9" y1="248.9" x2="604.4" y2="248.9" stroke="#d4d4d4" stroke-width="1.7"/>
<text x="598.5" y="254.2" font-size="14.5" fill="#d8d8d8" text-anchor="end">5</text>
<line x1="604.4" y1="290.9" x2="749.2" y2="290.9" stroke="#9a9a9a" stroke-width="1.2"/>
<line x1="598.9" y1="290.9" x2="604.4" y2="290.9" stroke="#d4d4d4" stroke-width="1.7"/>
<text x="598.5" y="296.2" font-size="14.5" fill="#d8d8d8" text-anchor="end">0</text>
<line x1="604.4" y1="333.0" x2="749.2" y2="333.0" stroke="#9a9a9a" stroke-width="1.2"/>
<line x1="598.9" y1="333.0" x2="604.4" y2="333.0" stroke="#d4d4d4" stroke-width="1.7"/>
<text x="598.5" y="338.3" font-size="14.5" fill="#d8d8d8" text-anchor="end">-5</text>
<line x1="604.4" y1="375.1" x2="749.2" y2="375.1" stroke="#9a9a9a" stroke-width="1.2"/>
<line x1="598.9" y1="375.1" x2="604.4" y2="375.1" stroke="#d4d4d4" stroke-width="1.7"/>
<text x="598.5" y="380.4" font-size="14.5" fill="#d8d8d8" text-anchor="end">-10</text>
<line x1="604.4" y1="417.1" x2="749.2" y2="417.1" stroke="#9a9a9a" stroke-width="1.2"/>
<line x1="598.9" y1="417.1" x2="604.4" y2="417.1" stroke="#d4d4d4" stroke-width="1.7"/>
<text x="598.5" y="422.4" font-size="14.5" fill="#d8d8d8" text-anchor="end">-15</text>
<line x1="598.9" y1="459.2" x2="604.4" y2="459.2" stroke="#d4d4d4" stroke-width="1.7"/>
<text x="598.5" y="466.8" font-size="14.5" fill="#d8d8d8" text-anchor="end">-20</text>
<text x="664.1" y="117.8" font-size="14" fill="#d0d0d0" text-anchor="middle" textLength="47.4" lengthAdjust="spacingAndGlyphs">Delta C</text>
<rect x="619.5" y="203.5" width="114.9" height="87.9" fill="url(#g41)" stroke="#000" stroke-width="1.2"/>
<rect x="794.7" y="122.7" width="152.5" height="336.5" fill="#252525" stroke="#9a9a9a" stroke-width="1"/>
<line x1="789.2" y1="122.7" x2="794.7" y2="122.7" stroke="#d4d4d4" stroke-width="1.7"/>
<text x="788.5" y="128.0" font-size="14.5" fill="#d8d8d8" text-anchor="end">4</text>
<line x1="794.7" y1="164.8" x2="947.2" y2="164.8" stroke="#9a9a9a" stroke-width="1.2"/>
<line x1="789.2" y1="164.8" x2="794.7" y2="164.8" stroke="#d4d4d4" stroke-width="1.7"/>
<text x="788.5" y="170.1" font-size="14.5" fill="#d8d8d8" text-anchor="end">3</text>
<line x1="794.7" y1="206.8" x2="947.2" y2="206.8" stroke="#9a9a9a" stroke-width="1.2"/>
<line x1="789.2" y1="206.8" x2="794.7" y2="206.8" stroke="#d4d4d4" stroke-width="1.7"/>
<text x="788.5" y="212.1" font-size="14.5" fill="#d8d8d8" text-anchor="end">2</text>
<line x1="794.7" y1="248.9" x2="947.2" y2="248.9" stroke="#9a9a9a" stroke-width="1.2"/>
<line x1="789.2" y1="248.9" x2="794.7" y2="248.9" stroke="#d4d4d4" stroke-width="1.7"/>
<text x="788.5" y="254.2" font-size="14.5" fill="#d8d8d8" text-anchor="end">1</text>
<line x1="794.7" y1="290.9" x2="947.2" y2="290.9" stroke="#9a9a9a" stroke-width="1.2"/>
<line x1="789.2" y1="290.9" x2="794.7" y2="290.9" stroke="#d4d4d4" stroke-width="1.7"/>
<text x="788.5" y="296.2" font-size="14.5" fill="#d8d8d8" text-anchor="end">0</text>
<line x1="794.7" y1="333.0" x2="947.2" y2="333.0" stroke="#9a9a9a" stroke-width="1.2"/>
<line x1="789.2" y1="333.0" x2="794.7" y2="333.0" stroke="#d4d4d4" stroke-width="1.7"/>
<text x="788.5" y="338.3" font-size="14.5" fill="#d8d8d8" text-anchor="end">-1</text>
<line x1="794.7" y1="375.1" x2="947.2" y2="375.1" stroke="#9a9a9a" stroke-width="1.2"/>
<line x1="789.2" y1="375.1" x2="794.7" y2="375.1" stroke="#d4d4d4" stroke-width="1.7"/>
<text x="788.5" y="380.4" font-size="14.5" fill="#d8d8d8" text-anchor="end">-2</text>
<line x1="794.7" y1="417.1" x2="947.2" y2="417.1" stroke="#9a9a9a" stroke-width="1.2"/>
<line x1="789.2" y1="417.1" x2="794.7" y2="417.1" stroke="#d4d4d4" stroke-width="1.7"/>
<text x="788.5" y="422.4" font-size="14.5" fill="#d8d8d8" text-anchor="end">-3</text>
<line x1="789.2" y1="459.2" x2="794.7" y2="459.2" stroke="#d4d4d4" stroke-width="1.7"/>
<text x="788.5" y="466.8" font-size="14.5" fill="#d8d8d8" text-anchor="end">-4</text>
<text x="861.1" y="117.8" font-size="14" fill="#d0d0d0" text-anchor="middle" textLength="47.8" lengthAdjust="spacingAndGlyphs">Delta H</text>
<rect x="808.8" y="205.4" width="121.7" height="86.0" fill="url(#g41)" stroke="#000" stroke-width="1.2"/>
<rect x="375.0" y="472.0" width="592.0" height="176.0" fill="#000"/>
<clipPath id="swc"><rect x="375" y="472" width="592" height="160"/></clipPath>
<g clip-path="url(#swc)">
<rect x="392.3" y="479.6" width="57.6" height="115.8" fill="url(#g42)"/>
<rect x="392.3" y="479.6" width="57.6" height="115.8" fill="none" stroke="#f4f4f4" stroke-width="1.2"/>
<text x="421.1" y="610.8" font-size="13" fill="#fff" text-anchor="middle" textLength="33.0" lengthAdjust="spacingAndGlyphs">White</text>
<rect x="460.4" y="479.6" width="57.6" height="115.8" fill="url(#g43)"/>
<rect x="460.4" y="479.6" width="57.6" height="115.8" fill="none" stroke="#f4f4f4" stroke-width="1.2"/>
<text x="489.2" y="610.8" font-size="13" fill="#fff" text-anchor="middle" textLength="41.5" lengthAdjust="spacingAndGlyphs">Gray 80</text>
<rect x="528.4" y="479.6" width="57.6" height="115.8" fill="url(#g44)"/>
<rect x="528.4" y="479.6" width="57.6" height="115.8" fill="none" stroke="#f4f4f4" stroke-width="1.2"/>
<text x="557.2" y="610.8" font-size="13" fill="#fff" text-anchor="middle" textLength="41.5" lengthAdjust="spacingAndGlyphs">Gray 65</text>
<rect x="596.5" y="479.6" width="57.6" height="115.8" fill="url(#g45)"/>
<rect x="596.5" y="479.6" width="57.6" height="115.8" fill="none" stroke="#f4f4f4" stroke-width="1.2"/>
<text x="625.2" y="610.8" font-size="13" fill="#fff" text-anchor="middle" textLength="41.5" lengthAdjust="spacingAndGlyphs">Gray 50</text>
<rect x="664.5" y="479.6" width="57.6" height="115.8" fill="url(#g46)"/>
<rect x="664.5" y="479.6" width="57.6" height="115.8" fill="none" stroke="#f4f4f4" stroke-width="1.2"/>
<text x="693.3" y="610.8" font-size="13" fill="#fff" text-anchor="middle" textLength="41.5" lengthAdjust="spacingAndGlyphs">Gray 35</text>
<rect x="732.5" y="479.6" width="57.6" height="115.8" fill="#000000"/>
<rect x="732.5" y="479.6" width="57.6" height="115.8" fill="none" stroke="#f4f4f4" stroke-width="1.2"/>
<text x="761.3" y="610.8" font-size="13" fill="#fff" text-anchor="middle" textLength="30.0" lengthAdjust="spacingAndGlyphs">Black</text>
<rect x="800.6" y="479.6" width="57.6" height="115.8" fill="url(#g47)"/>
<rect x="800.6" y="479.6" width="57.6" height="115.8" fill="none" stroke="#f4f4f4" stroke-width="1.2"/>
<text x="829.4" y="610.8" font-size="13" fill="#fff" text-anchor="middle" textLength="51.5" lengthAdjust="spacingAndGlyphs">Dark Skin</text>
<rect x="868.6" y="479.6" width="57.6" height="115.8" fill="url(#g48)"/>
<rect x="868.6" y="479.6" width="57.6" height="115.8" fill="none" stroke="#f4f4f4" stroke-width="1.2"/>
<text x="897.4" y="610.8" font-size="13" fill="#fff" text-anchor="middle" textLength="52.0" lengthAdjust="spacingAndGlyphs">Light Skin</text>
<rect x="936.7" y="479.6" width="57.6" height="115.8" fill="url(#g49)"/>
<rect x="936.7" y="479.6" width="57.6" height="115.8" fill="none" stroke="#f4f4f4" stroke-width="1.2"/>
<text x="965.5" y="610.8" font-size="13" fill="#fff" text-anchor="middle" textLength="46.0" lengthAdjust="spacingAndGlyphs">Blue Sky</text>
</g>
<text transform="translate(387.5 504.6) rotate(-90)" font-size="12.5" fill="#fff" text-anchor="middle" textLength="36" lengthAdjust="spacingAndGlyphs">Actual</text>
<text transform="translate(387.5 570) rotate(-90)" font-size="12.5" fill="#fff" text-anchor="middle" textLength="35" lengthAdjust="spacingAndGlyphs">Target</text>
<rect x="375.0" y="633.0" width="592.0" height="15.0" fill="#646464"/>
<rect x="376.0" y="634.0" width="14.0" height="13.0" fill="#8c8c8c" rx="2" stroke="#aaa" stroke-width="0.8"/>
<rect x="952.0" y="634.0" width="14.0" height="13.0" fill="#8c8c8c" rx="2" stroke="#aaa" stroke-width="0.8"/>
<path d="M386 636.5 v8 l-6 -4 Z" fill="#444"/>
<path d="M956 636.5 v8 l6 -4 Z" fill="#444"/>
<rect x="392.0" y="634.0" width="158.0" height="13.0" fill="#484848" rx="6"/>
<text x="59.1" y="680.2" font-size="27" fill="#f2f2f2" textLength="215.3" lengthAdjust="spacingAndGlyphs">Avg dE2000: 1,8</text>
<text x="46.7" y="721.7" font-size="27" fill="#f2f2f2" textLength="240.0" lengthAdjust="spacingAndGlyphs">Max dE2000: 3,81</text>
<text x="14.3" y="769.0" font-size="28" fill="#f2f2f2" textLength="218.4" lengthAdjust="spacingAndGlyphs">Current Reading</text>
<text x="14.3" y="804.2" font-size="25" fill="#f2f2f2" textLength="102.0" lengthAdjust="spacingAndGlyphs">x: 0,4193</text>
<text x="171.2" y="804.2" font-size="25" fill="#f2f2f2" textLength="102.5" lengthAdjust="spacingAndGlyphs">y: 0,5168</text>
<text x="14.3" y="845.0" font-size="25" fill="#f2f2f2" textLength="96.7" lengthAdjust="spacingAndGlyphs">fL: 148,6</text>
<text x="14.3" y="878.1" font-size="25" fill="#f2f2f2" textLength="158.2" lengthAdjust="spacingAndGlyphs">cd/m²: 509,13</text>
<rect x="973.5" y="91.5" width="700.0" height="556.5" fill="#1c1c1c"/>
<rect x="980.0" y="98.0" width="690.0" height="544.4" fill="#333"/>
<rect x="1018.0" y="122.0" width="639.0" height="492.0" fill="#252525"/>
<g clip-path="url(#plotc)">
<g clip-path="url(#locc)"><g class="cfo" filter="url(#blo)">
<g transform="translate(1003 116)"><rect x="24" style="width:121px" fill="#0f0"/></g>
<g transform="translate(1003 124)"><rect x="8" style="width:137px" fill="#0f0"/><rect x="144" fill="#09ff00"/><rect x="152" fill="#1bff00"/><rect x="160" fill="#2eff00"/><rect x="168" fill="#41ff00"/><rect x="176" fill="#56ff00"/><rect x="184" fill="#6bff00"/><rect x="192" fill="#81ff00"/><rect x="200" fill="#9f0"/><rect x="208" fill="#b1ff00"/></g>
<g transform="translate(1003 132)"><rect x="0" style="width:145px" fill="#0f0"/><rect x="144" fill="#06ff00"/><rect x="152" fill="#18ff00"/><rect x="160" fill="#2cff00"/><rect x="168" fill="#40ff00"/><rect x="176" fill="#54ff00"/><rect x="184" fill="#6aff00"/><rect x="192" fill="#81ff00"/><rect x="200" fill="#9f0"/><rect x="208" fill="#b2ff00"/><rect x="216" fill="#cf0"/><rect x="224" fill="#e8ff00"/><rect x="232" fill="#fff900"/><rect x="240" fill="#ffdf00"/><rect x="248" fill="#ffc900"/><rect x="256" fill="#ffb600"/><rect x="264" fill="#ffa500"/><rect x="272" fill="#ff9600"/><rect x="280" fill="#ff8900"/></g>
<g transform="translate(1003 140)"><rect x="0" fill="#00ff07"/><rect x="8" fill="#00ff06"/><rect x="16" fill="#00ff05"/><rect x="24" fill="#00ff04"/><rect x="32" fill="#00ff03"/><rect x="40" fill="#00ff02"/><rect x="48" style="width:97px" fill="#0f0"/><rect x="144" fill="#03ff00"/><rect x="152" fill="#16ff00"/><rect x="160" fill="#29ff00"/><rect x="168" fill="#3eff00"/><rect x="176" fill="#53ff00"/><rect x="184" fill="#69ff00"/><rect x="192" fill="#81ff00"/><rect x="200" fill="#9f0"/><rect x="208" fill="#b3ff00"/><rect x="216" fill="#ceff00"/><rect x="224" fill="#eaff00"/><rect x="232" fill="#fff600"/><rect x="240" fill="#ffdc00"/><rect x="248" fill="#ffc600"/><rect x="256" fill="#ffb300"/><rect x="264" fill="#ffa200"/><rect x="272" fill="#ff9300"/><rect x="280" fill="#ff8600"/><rect x="288" fill="#ff7b00"/><rect x="296" fill="#ff7100"/><rect x="304" fill="#ff6800"/><rect x="312" fill="#ff5f00"/><rect x="320" fill="#ff5800"/><rect x="328" fill="#ff5100"/><rect x="336" fill="#ff4a00"/><rect x="344" fill="#f40"/><rect x="352" fill="#ff3f00"/></g>
<g transform="translate(1003 148)"><rect x="0" fill="#00ff14"/><rect x="8" fill="#00ff13"/><rect x="16" fill="#00ff12"/><rect x="24" fill="#0f1"/><rect x="32" fill="#00ff10"/><rect x="40" fill="#00ff0f"/><rect x="48" fill="#00ff0e"/><rect x="56" fill="#00ff0d"/><rect x="64" fill="#00ff0c"/><rect x="72" fill="#00ff0b"/><rect x="80" fill="#00ff0a"/><rect x="88" fill="#00ff08"/><rect x="96" fill="#00ff07"/><rect x="104" fill="#00ff06"/><rect x="112" fill="#00ff04"/><rect x="120" fill="#00ff03"/><rect x="128" fill="#00ff02"/><rect x="136" style="width:17px" fill="#0f0"/><rect x="152" fill="#13ff00"/><rect x="160" fill="#27ff00"/><rect x="168" fill="#3cff00"/><rect x="176" fill="#52ff00"/><rect x="184" fill="#68ff00"/><rect x="192" fill="#80ff00"/><rect x="200" fill="#9f0"/><rect x="208" fill="#b4ff00"/><rect x="216" fill="#cfff00"/><rect x="224" fill="#ecff00"/><rect x="232" fill="#fff300"/><rect x="240" fill="#ffd900"/><rect x="248" fill="#ffc300"/><rect x="256" fill="#ffaf00"/><rect x="264" fill="#ff9f00"/><rect x="272" fill="#ff9000"/><rect x="280" fill="#ff8400"/><rect x="288" fill="#ff7800"/><rect x="296" fill="#ff6e00"/><rect x="304" fill="#ff6500"/><rect x="312" fill="#ff5c00"/><rect x="320" fill="#f50"/><rect x="328" fill="#ff4e00"/><rect x="336" fill="#ff4800"/><rect x="344" fill="#ff4200"/><rect x="352" fill="#ff3d00"/><rect x="360" fill="#ff3800"/><rect x="368" fill="#f30"/><rect x="376" fill="#ff2f00"/><rect x="384" fill="#ff2b00"/><rect x="392" fill="#ff2700"/><rect x="400" fill="#ff2300"/><rect x="408" fill="#ff2000"/><rect x="416" fill="#ff1d00"/></g>
<g transform="translate(1003 156)"><rect x="0" fill="#00ff21"/><rect x="8" style="width:17px" fill="#00ff20"/><rect x="24" fill="#00ff1f"/><rect x="32" fill="#00ff1e"/><rect x="40" style="width:17px" fill="#00ff1d"/><rect x="56" fill="#00ff1c"/><rect x="64" fill="#00ff1b"/><rect x="72" fill="#00ff1a"/><rect x="80" fill="#00ff19"/><rect x="88" fill="#00ff18"/><rect x="96" fill="#00ff17"/><rect x="104" fill="#00ff16"/><rect x="112" fill="#00ff15"/><rect x="120" fill="#00ff14"/><rect x="128" fill="#00ff13"/><rect x="136" fill="#0f1"/><rect x="144" fill="#00ff10"/><rect x="152" fill="#10ff0f"/><rect x="160" fill="#25ff0d"/><rect x="168" fill="#3aff0c"/><rect x="176" fill="#50ff0a"/><rect x="184" fill="#67ff09"/><rect x="192" fill="#80ff07"/><rect x="200" fill="#99ff05"/><rect x="208" fill="#b4ff03"/><rect x="216" fill="#d1ff01"/><rect x="224" fill="#efff00"/><rect x="232" fill="#fff000"/><rect x="240" fill="#ffd600"/><rect x="248" fill="#ffbf00"/><rect x="256" fill="#ffac00"/><rect x="264" fill="#ff9c00"/><rect x="272" fill="#ff8d00"/><rect x="280" fill="#ff8100"/><rect x="288" fill="#ff7500"/><rect x="296" fill="#ff6b00"/><rect x="304" fill="#ff6200"/><rect x="312" fill="#ff5a00"/><rect x="320" fill="#ff5200"/><rect x="328" fill="#ff4b00"/><rect x="336" fill="#ff4500"/><rect x="344" fill="#ff3f00"/><rect x="352" fill="#ff3a00"/><rect x="360" fill="#ff3500"/><rect x="368" fill="#ff3100"/><rect x="376" fill="#ff2c00"/><rect x="384" fill="#ff2800"/><rect x="392" fill="#ff2500"/><rect x="400" fill="#ff2100"/><rect x="408" fill="#ff1e00"/><rect x="416" fill="#ff1b00"/><rect x="424" fill="#ff1800"/><rect x="432" fill="#ff1500"/><rect x="440" fill="#ff1300"/><rect x="448" fill="#ff1000"/><rect x="456" fill="#ff0e00"/><rect x="464" fill="#ff0c00"/><rect x="472" fill="#ff0a00"/><rect x="480" fill="#ff0800"/><rect x="488" fill="#ff0600"/></g>
<g transform="translate(1003 164)"><rect x="0" fill="#00ff2f"/><rect x="8" style="width:17px" fill="#00ff2e"/><rect x="24" fill="#00ff2d"/><rect x="32" style="width:17px" fill="#00ff2c"/><rect x="48" style="width:17px" fill="#00ff2b"/><rect x="64" fill="#00ff2a"/><rect x="72" style="width:17px" fill="#00ff29"/><rect x="88" fill="#00ff28"/><rect x="96" style="width:17px" fill="#00ff27"/><rect x="112" fill="#00ff26"/><rect x="120" fill="#00ff25"/><rect x="128" fill="#00ff24"/><rect x="136" fill="#00ff23"/><rect x="144" fill="#0f2"/><rect x="152" fill="#0eff22"/><rect x="160" fill="#22ff21"/><rect x="168" fill="#38ff1f"/><rect x="176" fill="#4fff1e"/><rect x="184" fill="#66ff1d"/><rect x="192" fill="#7fff1c"/><rect x="200" fill="#9aff1b"/><rect x="208" fill="#b5ff19"/><rect x="216" fill="#d3ff18"/><rect x="224" fill="#f1ff16"/><rect x="232" fill="#ffed13"/><rect x="240" fill="#ffd310"/><rect x="248" fill="#ffbc0d"/><rect x="256" fill="#ffa90a"/><rect x="264" fill="#ff9908"/><rect x="272" fill="#ff8a06"/><rect x="280" fill="#ff7d04"/><rect x="288" fill="#ff7203"/><rect x="296" fill="#ff6802"/><rect x="304" fill="#ff5f00"/><rect x="312" fill="#ff5700"/><rect x="320" fill="#ff5000"/><rect x="328" fill="#ff4900"/><rect x="336" fill="#ff4300"/><rect x="344" fill="#ff3d00"/><rect x="352" fill="#ff3800"/><rect x="360" fill="#f30"/><rect x="368" fill="#ff2e00"/><rect x="376" fill="#ff2a00"/><rect x="384" fill="#ff2600"/><rect x="392" fill="#ff2300"/><rect x="400" fill="#ff1f00"/><rect x="408" fill="#ff1c00"/><rect x="416" fill="#ff1900"/><rect x="424" fill="#ff1600"/><rect x="432" fill="#ff1300"/><rect x="440" fill="#f10"/><rect x="448" fill="#ff0f00"/><rect x="456" fill="#ff0c00"/><rect x="464" fill="#ff0a00"/><rect x="472" fill="#ff0800"/><rect x="480" fill="#ff0600"/><rect x="488" fill="#ff0400"/><rect x="496" fill="#ff0200"/><rect x="504" fill="#ff0100"/><rect x="512" style="width:57px" fill="#f00"/></g>
<g transform="translate(1003 172)"><rect x="0" style="width:33px" fill="#00ff3c"/><rect x="32" style="width:25px" fill="#00ff3b"/><rect x="56" style="width:25px" fill="#00ff3a"/><rect x="80" style="width:17px" fill="#00ff39"/><rect x="96" style="width:25px" fill="#00ff38"/><rect x="120" style="width:17px" fill="#00ff37"/><rect x="136" style="width:17px" fill="#00ff36"/><rect x="152" fill="#0bff35"/><rect x="160" fill="#20ff35"/><rect x="168" fill="#36ff34"/><rect x="176" fill="#4dff33"/><rect x="184" fill="#65ff33"/><rect x="192" fill="#7fff32"/><rect x="200" fill="#9aff31"/><rect x="208" fill="#b6ff31"/><rect x="216" fill="#d4ff30"/><rect x="224" fill="#f4ff2f"/><rect x="232" fill="#ffea2a"/><rect x="240" fill="#ffcf25"/><rect x="248" fill="#ffb920"/><rect x="256" fill="#ffa61c"/><rect x="264" fill="#ff9519"/><rect x="272" fill="#ff8715"/><rect x="280" fill="#ff7a13"/><rect x="288" fill="#ff6f11"/><rect x="296" fill="#ff650e"/><rect x="304" fill="#ff5c0d"/><rect x="312" fill="#ff540b"/><rect x="320" fill="#ff4d09"/><rect x="328" fill="#ff4608"/><rect x="336" fill="#ff4007"/><rect x="344" fill="#ff3a05"/><rect x="352" fill="#ff3504"/><rect x="360" fill="#ff3003"/><rect x="368" fill="#ff2c02"/><rect x="376" fill="#ff2802"/><rect x="384" fill="#ff2401"/><rect x="392" fill="#ff2000"/><rect x="400" fill="#ff1d00"/><rect x="408" fill="#ff1a00"/><rect x="416" fill="#ff1700"/><rect x="424" fill="#ff1400"/><rect x="432" fill="#ff1200"/><rect x="440" fill="#ff0f00"/><rect x="448" fill="#ff0d00"/><rect x="456" fill="#ff0a00"/><rect x="464" fill="#ff0800"/><rect x="472" fill="#ff0600"/><rect x="480" fill="#ff0400"/><rect x="488" fill="#ff0300"/><rect x="496" fill="#ff0100"/><rect x="504" style="width:137px" fill="#f00"/></g>
<g transform="translate(1003 180)"><rect x="0" style="width:49px" fill="#00ff4b"/><rect x="48" style="width:105px" fill="#00ff4a"/><rect x="152" fill="#08ff4a"/><rect x="160" fill="#1dff4a"/><rect x="168" fill="#34ff4a"/><rect x="176" fill="#4bff49"/><rect x="200" fill="#9aff49"/><rect x="208" fill="#b7ff49"/><rect x="216" fill="#d6ff49"/><rect x="224" fill="#f7ff49"/><rect x="232" fill="#ffe742"/><rect x="240" fill="#ffcc3a"/><rect x="248" fill="#ffb534"/><rect x="256" fill="#ffa22e"/><rect x="264" fill="#ff9229"/><rect x="272" fill="#ff8425"/><rect x="280" fill="#f72"/><rect x="288" fill="#ff6c1e"/><rect x="296" fill="#ff621b"/><rect x="304" fill="#ff5919"/><rect x="312" fill="#ff5117"/><rect x="320" fill="#ff4a14"/><rect x="328" fill="#ff4313"/><rect x="336" fill="#ff3d11"/><rect x="344" fill="#ff380f"/><rect x="352" fill="#ff330e"/><rect x="360" fill="#ff2e0c"/><rect x="368" fill="#ff2a0b"/><rect x="376" fill="#ff260a"/><rect x="384" fill="#ff2209"/><rect x="392" fill="#ff1e08"/><rect x="400" fill="#ff1b07"/><rect x="408" fill="#ff1806"/><rect x="416" fill="#ff1505"/><rect x="424" fill="#ff1204"/><rect x="432" fill="#ff1004"/><rect x="440" fill="#ff0d03"/><rect x="448" fill="#ff0b02"/><rect x="456" fill="#ff0902"/><rect x="464" fill="#ff0701"/><rect x="472" fill="#ff0500"/><rect x="480" fill="#ff0300"/><rect x="488" fill="#ff0100"/><rect x="496" style="width:177px" fill="#f00"/></g>
<g transform="translate(1003 188)"><rect x="0" style="width:41px" fill="#00ff5a"/><rect x="40" style="width:33px" fill="#00ff5b"/><rect x="72" style="width:25px" fill="#00ff5c"/><rect x="96" style="width:25px" fill="#00ff5d"/><rect x="120" style="width:25px" fill="#00ff5e"/><rect x="144" fill="#00ff5f"/><rect x="152" fill="#04ff5f"/><rect x="160" fill="#1aff60"/><rect x="168" fill="#31ff60"/><rect x="176" fill="#49ff61"/><rect x="288" fill="#ff692c"/><rect x="296" fill="#ff5f29"/><rect x="304" fill="#ff5625"/><rect x="312" fill="#ff4e22"/><rect x="320" fill="#ff4720"/><rect x="328" fill="#ff411d"/><rect x="336" fill="#ff3b1b"/><rect x="344" fill="#ff3519"/><rect x="352" fill="#ff3017"/><rect x="360" fill="#ff2c16"/><rect x="368" fill="#ff2714"/><rect x="376" fill="#ff2312"/><rect x="384" fill="#ff2011"/><rect x="392" fill="#ff1c10"/><rect x="400" fill="#ff190e"/><rect x="408" fill="#ff160d"/><rect x="416" fill="#ff130c"/><rect x="424" fill="#ff100b"/><rect x="432" fill="#ff0e0a"/><rect x="440" fill="#ff0b09"/><rect x="448" fill="#ff0909"/><rect x="456" fill="#ff0708"/><rect x="464" fill="#ff0507"/><rect x="472" fill="#ff0306"/><rect x="480" fill="#ff0106"/><rect x="488" fill="#ff0005"/><rect x="496" style="width:17px" fill="#ff0004"/><rect x="512" style="width:17px" fill="#ff0003"/><rect x="528" style="width:17px" fill="#ff0002"/><rect x="544" style="width:17px" fill="#ff0001"/><rect x="560" style="width:113px" fill="#f00"/></g>
<g transform="translate(1003 196)"><rect x="0" style="width:17px" fill="#00ff69"/><rect x="16" style="width:17px" fill="#00ff6a"/><rect x="32" style="width:17px" fill="#00ff6b"/><rect x="48" style="width:17px" fill="#00ff6c"/><rect x="64" fill="#00ff6d"/><rect x="72" style="width:17px" fill="#00ff6e"/><rect x="88" fill="#00ff6f"/><rect x="96" fill="#00ff70"/><rect x="104" style="width:17px" fill="#00ff71"/><rect x="120" fill="#00ff72"/><rect x="128" fill="#00ff73"/><rect x="136" fill="#00ff74"/><rect x="144" fill="#00ff75"/><rect x="152" fill="#01ff76"/><rect x="160" fill="#17ff77"/><rect x="168" fill="#2fff78"/><rect x="176" fill="#48ff79"/><rect x="376" fill="#ff211b"/><rect x="384" fill="#ff1d19"/><rect x="392" fill="#ff1a18"/><rect x="400" fill="#ff1716"/><rect x="408" fill="#ff1415"/><rect x="416" fill="#ff1114"/><rect x="424" fill="#ff0e12"/><rect x="432" fill="#ff0c11"/><rect x="440" fill="#ff0910"/><rect x="448" fill="#ff070f"/><rect x="456" fill="#ff050e"/><rect x="464" fill="#ff030d"/><rect x="472" fill="#ff010c"/><rect x="480" style="width:17px" fill="#ff000b"/><rect x="496" fill="#ff000a"/><rect x="504" fill="#ff0009"/><rect x="512" style="width:17px" fill="#ff0008"/><rect x="528" fill="#ff0007"/><rect x="536" style="width:17px" fill="#ff0006"/><rect x="552" style="width:17px" fill="#ff0005"/><rect x="568" style="width:17px" fill="#ff0004"/><rect x="584" style="width:17px" fill="#ff0003"/><rect x="600" style="width:25px" fill="#ff0002"/><rect x="624" style="width:17px" fill="#ff0001"/><rect x="640" style="width:33px" fill="#f00"/></g>
<g transform="translate(1003 204)"><rect x="0" style="width:17px" fill="#00ff79"/><rect x="16" fill="#00ff7a"/><rect x="24" fill="#00ff7b"/><rect x="32" fill="#00ff7c"/><rect x="40" fill="#00ff7d"/><rect x="48" style="width:17px" fill="#00ff7e"/><rect x="64" fill="#00ff7f"/><rect x="72" fill="#00ff80"/><rect x="80" fill="#00ff82"/><rect x="88" fill="#00ff83"/><rect x="96" fill="#00ff84"/><rect x="104" fill="#00ff85"/><rect x="112" fill="#00ff86"/><rect x="120" fill="#0f8"/><rect x="128" fill="#00ff89"/><rect x="136" fill="#00ff8a"/><rect x="144" fill="#00ff8c"/><rect x="152" fill="#00ff8e"/><rect x="160" fill="#14ff8f"/><rect x="168" fill="#2cff91"/><rect x="176" fill="#46ff93"/><rect x="424" fill="#ff0c19"/><rect x="432" fill="#ff0a18"/><rect x="440" fill="#ff0717"/><rect x="448" fill="#ff0516"/><rect x="456" fill="#ff0314"/><rect x="464" fill="#ff0113"/><rect x="472" fill="#ff0012"/><rect x="480" fill="#f01"/><rect x="488" fill="#ff0010"/><rect x="496" style="width:17px" fill="#ff000f"/><rect x="512" fill="#ff000e"/><rect x="520" fill="#ff000d"/><rect x="528" fill="#ff000c"/><rect x="536" style="width:17px" fill="#ff000b"/><rect x="552" fill="#ff000a"/><rect x="560" style="width:17px" fill="#ff0009"/><rect x="576" style="width:17px" fill="#ff0008"/><rect x="592" style="width:17px" fill="#ff0007"/><rect x="608" style="width:17px" fill="#ff0006"/><rect x="624" style="width:17px" fill="#ff0005"/><rect x="640" style="width:17px" fill="#ff0004"/><rect x="656" style="width:17px" fill="#ff0003"/></g>
<g transform="translate(1003 212)"><rect x="8" fill="#00ff8a"/><rect x="16" fill="#00ff8b"/><rect x="24" fill="#00ff8c"/><rect x="32" fill="#00ff8d"/><rect x="40" fill="#00ff8f"/><rect x="48" fill="#00ff90"/><rect x="56" fill="#00ff91"/><rect x="64" fill="#00ff93"/><rect x="72" fill="#00ff94"/><rect x="80" fill="#00ff95"/><rect x="88" fill="#00ff97"/><rect x="96" fill="#0f9"/><rect x="104" fill="#00ff9a"/><rect x="112" fill="#00ff9c"/><rect x="120" fill="#00ff9e"/><rect x="128" fill="#00ffa0"/><rect x="136" fill="#00ffa2"/><rect x="144" fill="#00ffa4"/><rect x="152" fill="#00ffa6"/><rect x="160" fill="#11ffa9"/><rect x="168" fill="#29ffab"/><rect x="176" fill="#43ffae"/><rect x="416" fill="#ff0d22"/><rect x="424" fill="#ff0a21"/><rect x="432" fill="#ff081f"/><rect x="440" fill="#ff051d"/><rect x="448" fill="#ff031c"/><rect x="456" fill="#ff011b"/><rect x="464" fill="#ff0019"/><rect x="472" fill="#ff0018"/><rect x="480" fill="#ff0017"/><rect x="488" fill="#ff0016"/><rect x="496" fill="#ff0015"/><rect x="504" fill="#ff0014"/><rect x="512" fill="#ff0013"/><rect x="520" fill="#ff0012"/><rect x="528" fill="#f01"/><rect x="536" style="width:17px" fill="#ff0010"/><rect x="552" fill="#ff000f"/><rect x="560" fill="#ff000e"/><rect x="568" style="width:17px" fill="#ff000d"/><rect x="584" style="width:17px" fill="#ff000c"/><rect x="600" fill="#ff000b"/><rect x="608" style="width:17px" fill="#ff000a"/><rect x="624" style="width:17px" fill="#ff0009"/><rect x="640" style="width:17px" fill="#ff0008"/><rect x="656" style="width:17px" fill="#ff0007"/></g>
<g transform="translate(1003 220)"><rect x="8" fill="#00ff9b"/><rect x="16" fill="#00ff9d"/><rect x="24" fill="#00ff9e"/><rect x="32" fill="#00ffa0"/><rect x="40" fill="#00ffa1"/><rect x="48" fill="#00ffa3"/><rect x="56" fill="#00ffa5"/><rect x="64" fill="#00ffa6"/><rect x="72" fill="#00ffa8"/><rect x="80" fill="#0fa"/><rect x="88" fill="#00ffac"/><rect x="96" fill="#00ffae"/><rect x="104" fill="#00ffb1"/><rect x="112" fill="#00ffb3"/><rect x="120" fill="#00ffb5"/><rect x="128" fill="#00ffb8"/><rect x="136" fill="#0fb"/><rect x="144" fill="#00ffbe"/><rect x="152" fill="#00ffc1"/><rect x="160" fill="#0dffc4"/><rect x="168" fill="#27ffc7"/><rect x="176" fill="#41ffcb"/><rect x="408" fill="#ff0d2c"/><rect x="416" fill="#ff0a2a"/><rect x="424" fill="#ff0828"/><rect x="432" fill="#ff0626"/><rect x="440" fill="#ff0324"/><rect x="448" fill="#ff0123"/><rect x="456" fill="#ff0021"/><rect x="464" fill="#ff0020"/><rect x="472" fill="#ff001e"/><rect x="480" fill="#ff001d"/><rect x="488" fill="#ff001c"/><rect x="496" fill="#ff001b"/><rect x="504" fill="#ff001a"/><rect x="512" fill="#ff0018"/><rect x="520" fill="#ff0017"/><rect x="528" style="width:17px" fill="#ff0016"/><rect x="544" fill="#ff0015"/><rect x="552" fill="#ff0014"/><rect x="560" fill="#ff0013"/><rect x="568" fill="#ff0012"/><rect x="576" style="width:17px" fill="#f01"/><rect x="592" fill="#ff0010"/><rect x="600" style="width:17px" fill="#ff000f"/><rect x="616" fill="#ff000e"/><rect x="624" style="width:17px" fill="#ff000d"/><rect x="640" style="width:17px" fill="#ff000c"/><rect x="656" style="width:17px" fill="#ff000b"/></g>
<g transform="translate(1003 228)"><rect x="8" fill="#00ffad"/><rect x="16" fill="#00ffaf"/><rect x="24" fill="#00ffb1"/><rect x="32" fill="#00ffb3"/><rect x="40" fill="#00ffb5"/><rect x="48" fill="#00ffb7"/><rect x="56" fill="#00ffb9"/><rect x="64" fill="#0fb"/><rect x="72" fill="#00ffbd"/><rect x="80" fill="#00ffc0"/><rect x="88" fill="#00ffc2"/><rect x="96" fill="#00ffc5"/><rect x="104" fill="#00ffc8"/><rect x="112" fill="#00ffcb"/><rect x="120" fill="#00ffce"/><rect x="128" fill="#00ffd1"/><rect x="136" fill="#00ffd5"/><rect x="144" fill="#00ffd8"/><rect x="152" fill="#00ffdc"/><rect x="160" fill="#0affe0"/><rect x="168" fill="#24ffe4"/><rect x="176" fill="#3fffe9"/><rect x="184" fill="#5cffee"/><rect x="400" fill="#ff0e36"/><rect x="408" fill="#ff0b33"/><rect x="416" fill="#ff0831"/><rect x="424" fill="#ff062f"/><rect x="432" fill="#ff032d"/><rect x="440" fill="#ff012b"/><rect x="448" fill="#ff0029"/><rect x="456" fill="#ff0028"/><rect x="464" fill="#ff0026"/><rect x="472" fill="#ff0025"/><rect x="480" fill="#ff0023"/><rect x="488" fill="#f02"/><rect x="496" fill="#ff0020"/><rect x="504" fill="#ff001f"/><rect x="512" fill="#ff001e"/><rect x="520" fill="#ff001d"/><rect x="528" fill="#ff001c"/><rect x="536" fill="#ff001b"/><rect x="544" fill="#ff001a"/><rect x="552" fill="#ff0019"/><rect x="560" fill="#ff0018"/><rect x="568" fill="#ff0017"/><rect x="576" fill="#ff0016"/><rect x="584" fill="#ff0015"/><rect x="592" style="width:17px" fill="#ff0014"/><rect x="608" fill="#ff0013"/><rect x="616" fill="#ff0012"/><rect x="624" style="width:17px" fill="#f01"/><rect x="640" fill="#ff0010"/><rect x="648" style="width:17px" fill="#ff000f"/><rect x="664" fill="#ff000e"/></g>
<g transform="translate(1003 236)"><rect x="8" fill="#00ffbf"/><rect x="16" fill="#00ffc2"/><rect x="24" fill="#00ffc4"/><rect x="32" fill="#00ffc6"/><rect x="40" fill="#00ffc9"/><rect x="48" fill="#00ffcb"/><rect x="56" fill="#00ffce"/><rect x="64" fill="#00ffd1"/><rect x="72" fill="#00ffd4"/><rect x="80" fill="#00ffd7"/><rect x="88" fill="#00ffda"/><rect x="96" fill="#0fd"/><rect x="104" fill="#00ffe0"/><rect x="112" fill="#00ffe4"/><rect x="120" fill="#00ffe8"/><rect x="128" fill="#00ffec"/><rect x="136" fill="#00fff0"/><rect x="144" fill="#00fff5"/><rect x="152" fill="#00fff9"/><rect x="160" fill="#06fffe"/><rect x="168" fill="#20fbff"/><rect x="176" fill="#3af5ff"/><rect x="184" fill="#55f0ff"/><rect x="392" fill="#ff0e41"/><rect x="400" fill="#ff0b3e"/><rect x="408" fill="#ff093b"/><rect x="416" fill="#ff0639"/><rect x="424" fill="#ff0436"/><rect x="432" fill="#ff0134"/><rect x="440" fill="#ff0032"/><rect x="448" fill="#ff0030"/><rect x="456" fill="#ff002e"/><rect x="464" fill="#ff002c"/><rect x="472" fill="#ff002b"/><rect x="480" fill="#ff0029"/><rect x="488" fill="#ff0028"/><rect x="496" fill="#ff0026"/><rect x="504" fill="#ff0025"/><rect x="512" fill="#ff0023"/><rect x="520" fill="#f02"/><rect x="528" fill="#ff0021"/><rect x="536" fill="#ff0020"/><rect x="544" fill="#ff001f"/><rect x="552" fill="#ff001e"/><rect x="560" fill="#ff001c"/><rect x="568" style="width:17px" fill="#ff001b"/><rect x="584" fill="#ff001a"/><rect x="592" fill="#ff0019"/><rect x="600" fill="#ff0018"/><rect x="608" fill="#ff0017"/><rect x="616" style="width:17px" fill="#ff0016"/><rect x="632" fill="#ff0015"/><rect x="640" fill="#ff0014"/><rect x="648" style="width:17px" fill="#ff0013"/><rect x="664" fill="#ff0012"/></g>
<g transform="translate(1003 244)"><rect x="16" fill="#00ffd5"/><rect x="24" fill="#00ffd8"/><rect x="32" fill="#00ffdb"/><rect x="40" fill="#00ffde"/><rect x="48" fill="#00ffe1"/><rect x="56" fill="#00ffe4"/><rect x="64" fill="#00ffe7"/><rect x="72" fill="#00ffeb"/><rect x="80" fill="#0fe"/><rect x="88" fill="#00fff2"/><rect x="96" fill="#00fff6"/><rect x="104" fill="#00fffa"/><rect x="112" fill="#00fffe"/><rect x="120" fill="#00fbff"/><rect x="128" fill="#00f6ff"/><rect x="136" fill="#00f2ff"/><rect x="144" fill="#00edff"/><rect x="152" fill="#00e8ff"/><rect x="160" fill="#02e3ff"/><rect x="168" fill="#19deff"/><rect x="176" fill="#31d9ff"/><rect x="184" fill="#4ad4ff"/><rect x="384" fill="#ff0f4d"/><rect x="392" fill="#ff0c49"/><rect x="400" fill="#ff0946"/><rect x="408" fill="#ff0643"/><rect x="416" fill="#ff0440"/><rect x="424" fill="#ff013e"/><rect x="432" fill="#ff003b"/><rect x="440" fill="#ff0039"/><rect x="448" fill="#ff0037"/><rect x="456" fill="#ff0035"/><rect x="464" fill="#f03"/><rect x="472" fill="#ff0031"/><rect x="480" fill="#ff002f"/><rect x="488" fill="#ff002d"/><rect x="496" fill="#ff002c"/><rect x="504" fill="#ff002a"/><rect x="512" fill="#ff0029"/><rect x="520" fill="#ff0027"/><rect x="528" fill="#ff0026"/><rect x="536" fill="#ff0025"/><rect x="544" fill="#ff0024"/><rect x="552" fill="#f02"/><rect x="560" fill="#ff0021"/><rect x="568" fill="#ff0020"/><rect x="576" fill="#ff001f"/><rect x="584" fill="#ff001e"/><rect x="592" fill="#ff001d"/><rect x="600" fill="#ff001c"/><rect x="608" fill="#ff001b"/><rect x="616" style="width:17px" fill="#ff001a"/><rect x="632" fill="#ff0019"/><rect x="640" fill="#ff0018"/><rect x="648" style="width:17px" fill="#ff0017"/></g>
<g transform="translate(1003 252)"><rect x="16" fill="#00ffea"/><rect x="24" fill="#00ffed"/><rect x="32" fill="#00fff0"/><rect x="40" fill="#00fff3"/><rect x="48" fill="#00fff7"/><rect x="56" fill="#00fffb"/><rect x="64" fill="#0ff"/><rect x="72" fill="#00fbff"/><rect x="80" fill="#00f7ff"/><rect x="88" fill="#00f3ff"/><rect x="96" fill="#00efff"/><rect x="104" fill="#00ebff"/><rect x="112" fill="#00e7ff"/><rect x="120" fill="#00e2ff"/><rect x="128" fill="#00deff"/><rect x="136" fill="#00d9ff"/><rect x="144" fill="#00d5ff"/><rect x="152" fill="#00d0ff"/><rect x="160" fill="#00cbff"/><rect x="168" fill="#14c7ff"/><rect x="176" fill="#2ac2ff"/><rect x="184" fill="#40bdff"/><rect x="376" fill="#ff105a"/><rect x="384" fill="#ff0c56"/><rect x="392" fill="#ff0952"/><rect x="400" fill="#ff074f"/><rect x="408" fill="#ff044b"/><rect x="416" fill="#ff0248"/><rect x="424" fill="#ff0045"/><rect x="432" fill="#ff0043"/><rect x="440" fill="#ff0040"/><rect x="448" fill="#ff003e"/><rect x="456" fill="#ff003b"/><rect x="464" fill="#ff0039"/><rect x="472" fill="#ff0037"/><rect x="480" fill="#ff0035"/><rect x="488" fill="#f03"/><rect x="496" fill="#ff0032"/><rect x="504" fill="#ff0030"/><rect x="512" fill="#ff002e"/><rect x="520" fill="#ff002d"/><rect x="528" fill="#ff002b"/><rect x="536" fill="#ff002a"/><rect x="544" fill="#ff0029"/><rect x="552" fill="#ff0027"/><rect x="560" fill="#ff0026"/><rect x="568" fill="#ff0025"/><rect x="576" fill="#ff0024"/><rect x="584" fill="#ff0023"/><rect x="592" fill="#f02"/><rect x="600" fill="#ff0021"/><rect x="608" fill="#ff0020"/><rect x="616" fill="#ff001f"/><rect x="624" fill="#ff001e"/><rect x="632" fill="#ff001d"/><rect x="640" fill="#ff001c"/><rect x="648" fill="#ff001b"/></g>
<g transform="translate(1003 260)"><rect x="16" fill="#0ff"/><rect x="24" fill="#00fcff"/><rect x="32" fill="#00f8ff"/><rect x="40" fill="#00f4ff"/><rect x="48" fill="#00f1ff"/><rect x="56" fill="#00edff"/><rect x="64" fill="#00e9ff"/><rect x="72" fill="#00e5ff"/><rect x="80" fill="#00e1ff"/><rect x="88" fill="#0df"/><rect x="96" fill="#00d9ff"/><rect x="104" fill="#00d5ff"/><rect x="112" fill="#00d1ff"/><rect x="120" fill="#00cdff"/><rect x="128" fill="#00c8ff"/><rect x="136" fill="#00c4ff"/><rect x="144" fill="#00c0ff"/><rect x="152" fill="#0bf"/><rect x="160" fill="#00b7ff"/><rect x="168" fill="#0fb2ff"/><rect x="176" fill="#23aeff"/><rect x="184" fill="#38a9ff"/><rect x="368" fill="#ff1068"/><rect x="376" fill="#ff0d63"/><rect x="384" fill="#ff0a5f"/><rect x="392" fill="#ff075b"/><rect x="400" fill="#ff0457"/><rect x="408" fill="#ff0253"/><rect x="416" fill="#ff0050"/><rect x="424" fill="#ff004d"/><rect x="432" fill="#ff004a"/><rect x="440" fill="#ff0047"/><rect x="448" fill="#ff0045"/><rect x="456" fill="#ff0042"/><rect x="464" fill="#ff0040"/><rect x="472" fill="#ff003e"/><rect x="480" fill="#ff003b"/><rect x="488" fill="#ff0039"/><rect x="496" fill="#ff0038"/><rect x="504" fill="#ff0036"/><rect x="512" fill="#ff0034"/><rect x="520" fill="#ff0032"/><rect x="528" fill="#ff0031"/><rect x="536" fill="#ff002f"/><rect x="544" fill="#ff002e"/><rect x="552" fill="#ff002c"/><rect x="560" fill="#ff002b"/><rect x="568" fill="#ff002a"/><rect x="576" fill="#ff0029"/><rect x="584" fill="#ff0027"/><rect x="592" fill="#ff0026"/><rect x="600" fill="#ff0025"/><rect x="608" fill="#ff0024"/><rect x="616" fill="#ff0023"/><rect x="624" fill="#f02"/><rect x="632" fill="#ff0021"/><rect x="640" fill="#ff0020"/></g>
<g transform="translate(1003 268)"><rect x="24" fill="#00e8ff"/><rect x="32" fill="#00e4ff"/><rect x="40" fill="#00e0ff"/><rect x="48" fill="#0df"/><rect x="56" fill="#00d9ff"/><rect x="64" fill="#00d5ff"/><rect x="72" fill="#00d2ff"/><rect x="80" fill="#00ceff"/><rect x="88" fill="#00caff"/><rect x="96" fill="#00c6ff"/><rect x="104" fill="#00c2ff"/><rect x="112" fill="#00beff"/><rect x="120" fill="#00baff"/><rect x="128" fill="#00b6ff"/><rect x="136" fill="#00b2ff"/><rect x="144" fill="#00aeff"/><rect x="152" fill="#0af"/><rect x="160" fill="#00a5ff"/><rect x="168" fill="#0ba1ff"/><rect x="176" fill="#1e9cff"/><rect x="184" fill="#3198ff"/><rect x="360" fill="#f17"/><rect x="368" fill="#ff0e72"/><rect x="376" fill="#ff0a6d"/><rect x="384" fill="#ff0768"/><rect x="392" fill="#ff0464"/><rect x="400" fill="#ff025f"/><rect x="408" fill="#ff005c"/><rect x="416" fill="#ff0058"/><rect x="424" fill="#f05"/><rect x="432" fill="#ff0051"/><rect x="440" fill="#ff004e"/><rect x="448" fill="#ff004c"/><rect x="456" fill="#ff0049"/><rect x="464" fill="#ff0046"/><rect x="472" fill="#f04"/><rect x="480" fill="#ff0042"/><rect x="488" fill="#ff0040"/><rect x="496" fill="#ff003d"/><rect x="504" fill="#ff003c"/><rect x="512" fill="#ff003a"/><rect x="520" fill="#ff0038"/><rect x="528" fill="#ff0036"/><rect x="536" fill="#ff0034"/><rect x="544" fill="#f03"/><rect x="552" fill="#ff0031"/><rect x="560" fill="#ff0030"/><rect x="568" fill="#ff002f"/><rect x="576" fill="#ff002d"/><rect x="584" fill="#ff002c"/><rect x="592" fill="#ff002b"/><rect x="600" fill="#ff002a"/><rect x="608" fill="#ff0028"/><rect x="616" fill="#ff0027"/><rect x="624" fill="#ff0026"/><rect x="632" fill="#ff0025"/></g>
<g transform="translate(1003 276)"><rect x="24" fill="#00d6ff"/><rect x="32" fill="#00d2ff"/><rect x="40" fill="#00cfff"/><rect x="48" fill="#00cbff"/><rect x="56" fill="#00c8ff"/><rect x="64" fill="#00c4ff"/><rect x="72" fill="#00c1ff"/><rect x="80" fill="#00bdff"/><rect x="88" fill="#00b9ff"/><rect x="96" fill="#00b5ff"/><rect x="104" fill="#00b2ff"/><rect x="112" fill="#00aeff"/><rect x="120" fill="#0af"/><rect x="128" fill="#00a6ff"/><rect x="136" fill="#00a2ff"/><rect x="144" fill="#009eff"/><rect x="152" fill="#009aff"/><rect x="160" fill="#0096ff"/><rect x="168" fill="#0792ff"/><rect x="176" fill="#198dff"/><rect x="184" fill="#2b89ff"/><rect x="192" fill="#3d85ff"/><rect x="352" fill="#ff1288"/><rect x="360" fill="#ff0e82"/><rect x="368" fill="#ff0b7c"/><rect x="376" fill="#ff0876"/><rect x="384" fill="#ff0571"/><rect x="392" fill="#ff026c"/><rect x="400" fill="#ff0068"/><rect x="408" fill="#ff0064"/><rect x="416" fill="#ff0060"/><rect x="424" fill="#ff005c"/><rect x="432" fill="#ff0059"/><rect x="440" fill="#ff0056"/><rect x="448" fill="#ff0053"/><rect x="456" fill="#ff0050"/><rect x="464" fill="#ff004d"/><rect x="472" fill="#ff004a"/><rect x="480" fill="#ff0048"/><rect x="488" fill="#ff0046"/><rect x="496" fill="#ff0043"/><rect x="504" fill="#ff0041"/><rect x="512" fill="#ff003f"/><rect x="520" fill="#ff003d"/><rect x="528" fill="#ff003c"/><rect x="536" fill="#ff003a"/><rect x="544" fill="#ff0038"/><rect x="552" fill="#ff0036"/><rect x="560" fill="#ff0035"/><rect x="568" fill="#f03"/><rect x="576" fill="#ff0032"/><rect x="584" fill="#ff0031"/><rect x="592" fill="#ff002f"/><rect x="600" fill="#ff002e"/><rect x="608" fill="#ff002d"/><rect x="616" fill="#ff002c"/><rect x="624" fill="#ff002a"/></g>
<g transform="translate(1003 284)"><rect x="24" fill="#00c6ff"/><rect x="32" fill="#00c2ff"/><rect x="40" fill="#00bfff"/><rect x="48" fill="#00bcff"/><rect x="56" fill="#00b8ff"/><rect x="64" fill="#00b5ff"/><rect x="72" fill="#00b1ff"/><rect x="80" fill="#00aeff"/><rect x="88" fill="#0af"/><rect x="96" fill="#00a7ff"/><rect x="104" fill="#00a3ff"/><rect x="112" fill="#009fff"/><rect x="120" fill="#009bff"/><rect x="128" fill="#0098ff"/><rect x="136" fill="#0094ff"/><rect x="144" fill="#0090ff"/><rect x="152" fill="#008cff"/><rect x="160" fill="#08f"/><rect x="168" fill="#0484ff"/><rect x="176" fill="#1580ff"/><rect x="184" fill="#267cff"/><rect x="192" fill="#3778ff"/><rect x="344" fill="#ff139b"/><rect x="352" fill="#ff0f93"/><rect x="360" fill="#ff0b8c"/><rect x="368" fill="#ff0886"/><rect x="376" fill="#ff0580"/><rect x="384" fill="#ff027b"/><rect x="392" fill="#ff0075"/><rect x="400" fill="#ff0071"/><rect x="408" fill="#ff006c"/><rect x="416" fill="#ff0068"/><rect x="424" fill="#ff0064"/><rect x="432" fill="#ff0060"/><rect x="440" fill="#ff005d"/><rect x="448" fill="#ff005a"/><rect x="456" fill="#ff0057"/><rect x="464" fill="#ff0054"/><rect x="472" fill="#ff0051"/><rect x="480" fill="#ff004e"/><rect x="488" fill="#ff004c"/><rect x="496" fill="#ff0049"/><rect x="504" fill="#ff0047"/><rect x="512" fill="#ff0045"/><rect x="520" fill="#ff0043"/><rect x="528" fill="#ff0041"/><rect x="536" fill="#ff003f"/><rect x="544" fill="#ff003d"/><rect x="552" fill="#ff003c"/><rect x="560" fill="#ff003a"/><rect x="568" fill="#ff0038"/><rect x="576" fill="#ff0037"/><rect x="584" fill="#ff0035"/><rect x="592" fill="#ff0034"/><rect x="600" fill="#f03"/><rect x="608" fill="#ff0031"/><rect x="616" fill="#ff0030"/></g>
<g transform="translate(1003 292)"><rect x="32" fill="#00b4ff"/><rect x="40" fill="#00b1ff"/><rect x="48" fill="#00aeff"/><rect x="56" fill="#0af"/><rect x="64" fill="#00a7ff"/><rect x="72" fill="#00a4ff"/><rect x="80" fill="#00a0ff"/><rect x="88" fill="#009dff"/><rect x="96" fill="#09f"/><rect x="104" fill="#0096ff"/><rect x="112" fill="#0092ff"/><rect x="120" fill="#008fff"/><rect x="128" fill="#008bff"/><rect x="136" fill="#0087ff"/><rect x="144" fill="#0084ff"/><rect x="152" fill="#0080ff"/><rect x="160" fill="#007cff"/><rect x="168" fill="#0278ff"/><rect x="176" fill="#1174ff"/><rect x="184" fill="#2170ff"/><rect x="192" fill="#316dff"/><rect x="336" fill="#ff14b0"/><rect x="344" fill="#ff10a7"/><rect x="352" fill="#ff0c9f"/><rect x="360" fill="#ff0997"/><rect x="368" fill="#ff0590"/><rect x="376" fill="#ff028a"/><rect x="384" fill="#ff0084"/><rect x="392" fill="#ff007f"/><rect x="400" fill="#ff0079"/><rect x="408" fill="#ff0075"/><rect x="416" fill="#ff0070"/><rect x="424" fill="#ff006c"/><rect x="432" fill="#ff0068"/><rect x="440" fill="#ff0064"/><rect x="448" fill="#ff0061"/><rect x="456" fill="#ff005e"/><rect x="464" fill="#ff005a"/><rect x="472" fill="#ff0058"/><rect x="480" fill="#f05"/><rect x="488" fill="#ff0052"/><rect x="496" fill="#ff0050"/><rect x="504" fill="#ff004d"/><rect x="512" fill="#ff004b"/><rect x="520" fill="#ff0049"/><rect x="528" fill="#ff0046"/><rect x="536" fill="#f04"/><rect x="544" fill="#ff0043"/><rect x="552" fill="#ff0041"/><rect x="560" fill="#ff003f"/><rect x="568" fill="#ff003d"/><rect x="576" fill="#ff003c"/><rect x="584" fill="#ff003a"/><rect x="592" fill="#ff0039"/><rect x="600" fill="#ff0037"/><rect x="608" fill="#ff0036"/></g>
<g transform="translate(1003 300)"><rect x="32" fill="#00a8ff"/><rect x="40" fill="#00a4ff"/><rect x="48" fill="#00a1ff"/><rect x="56" fill="#009eff"/><rect x="64" fill="#009bff"/><rect x="72" fill="#0098ff"/><rect x="80" fill="#0094ff"/><rect x="88" fill="#0091ff"/><rect x="96" fill="#008eff"/><rect x="104" fill="#008aff"/><rect x="112" fill="#0087ff"/><rect x="120" fill="#0083ff"/><rect x="128" fill="#0080ff"/><rect x="136" fill="#007cff"/><rect x="144" fill="#0079ff"/><rect x="152" fill="#0075ff"/><rect x="160" fill="#0071ff"/><rect x="168" fill="#006eff"/><rect x="176" fill="#0e6aff"/><rect x="184" fill="#1d66ff"/><rect x="192" fill="#2c62ff"/><rect x="328" fill="#ff15c7"/><rect x="336" fill="#ff11bd"/><rect x="344" fill="#ff0db3"/><rect x="352" fill="#ff09aa"/><rect x="360" fill="#ff06a2"/><rect x="368" fill="#ff029b"/><rect x="376" fill="#ff0094"/><rect x="384" fill="#ff008e"/><rect x="392" fill="#f08"/><rect x="400" fill="#ff0082"/><rect x="408" fill="#ff007d"/><rect x="416" fill="#ff0078"/><rect x="424" fill="#ff0074"/><rect x="432" fill="#ff0070"/><rect x="440" fill="#ff006c"/><rect x="448" fill="#ff0068"/><rect x="456" fill="#ff0065"/><rect x="464" fill="#ff0061"/><rect x="472" fill="#ff005e"/><rect x="480" fill="#ff005b"/><rect x="488" fill="#ff0058"/><rect x="496" fill="#ff0056"/><rect x="504" fill="#ff0053"/><rect x="512" fill="#ff0051"/><rect x="520" fill="#ff004e"/><rect x="528" fill="#ff004c"/><rect x="536" fill="#ff004a"/><rect x="544" fill="#ff0048"/><rect x="552" fill="#ff0046"/><rect x="560" fill="#f04"/><rect x="568" fill="#ff0042"/><rect x="576" fill="#ff0040"/><rect x="584" fill="#ff003f"/><rect x="592" fill="#ff003d"/><rect x="600" fill="#ff003c"/></g>
<g transform="translate(1003 308)"><rect x="40" fill="#09f"/><rect x="48" fill="#0096ff"/><rect x="56" fill="#0093ff"/><rect x="64" fill="#0090ff"/><rect x="72" fill="#008cff"/><rect x="80" fill="#0089ff"/><rect x="88" fill="#0086ff"/><rect x="96" fill="#0083ff"/><rect x="104" fill="#0080ff"/><rect x="112" fill="#007cff"/><rect x="120" fill="#0079ff"/><rect x="128" fill="#0075ff"/><rect x="136" fill="#0072ff"/><rect x="144" fill="#006fff"/><rect x="152" fill="#006bff"/><rect x="160" fill="#0068ff"/><rect x="168" fill="#0064ff"/><rect x="176" fill="#0b61ff"/><rect x="184" fill="#195dff"/><rect x="192" fill="#2759ff"/><rect x="320" fill="#ff17e1"/><rect x="328" fill="#ff12d5"/><rect x="336" fill="#ff0eca"/><rect x="344" fill="#ff0abf"/><rect x="352" fill="#ff06b6"/><rect x="360" fill="#ff03ad"/><rect x="368" fill="#ff00a5"/><rect x="376" fill="#ff009e"/><rect x="384" fill="#ff0097"/><rect x="392" fill="#ff0091"/><rect x="400" fill="#ff008b"/><rect x="408" fill="#ff0086"/><rect x="416" fill="#ff0081"/><rect x="424" fill="#ff007c"/><rect x="432" fill="#ff0078"/><rect x="440" fill="#ff0073"/><rect x="448" fill="#ff006f"/><rect x="456" fill="#ff006c"/><rect x="464" fill="#ff0068"/><rect x="472" fill="#ff0065"/><rect x="480" fill="#ff0062"/><rect x="488" fill="#ff005f"/><rect x="496" fill="#ff005c"/><rect x="504" fill="#ff0059"/><rect x="512" fill="#ff0056"/><rect x="520" fill="#ff0054"/><rect x="528" fill="#ff0052"/><rect x="536" fill="#ff004f"/><rect x="544" fill="#ff004d"/><rect x="552" fill="#ff004b"/><rect x="560" fill="#ff0049"/><rect x="568" fill="#ff0047"/><rect x="576" fill="#ff0045"/><rect x="584" fill="#f04"/><rect x="592" fill="#ff0042"/></g>
<g transform="translate(1003 316)"><rect x="40" fill="#008fff"/><rect x="48" fill="#008cff"/><rect x="56" fill="#0089ff"/><rect x="64" fill="#0086ff"/><rect x="72" fill="#0082ff"/><rect x="80" fill="#007fff"/><rect x="88" fill="#007cff"/><rect x="96" fill="#0079ff"/><rect x="104" fill="#0076ff"/><rect x="112" fill="#0073ff"/><rect x="120" fill="#0070ff"/><rect x="128" fill="#006cff"/><rect x="136" fill="#0069ff"/><rect x="144" fill="#06f"/><rect x="152" fill="#0062ff"/><rect x="160" fill="#005fff"/><rect x="168" fill="#005cff"/><rect x="176" fill="#0858ff"/><rect x="184" fill="#1655ff"/><rect x="192" fill="#2351ff"/><rect x="312" fill="#ff18ff"/><rect x="320" fill="#ff13f0"/><rect x="328" fill="#ff0ee3"/><rect x="336" fill="#ff0ad7"/><rect x="344" fill="#ff06cc"/><rect x="352" fill="#ff03c2"/><rect x="360" fill="#ff00b9"/><rect x="368" fill="#ff00b0"/><rect x="376" fill="#ff00a8"/><rect x="384" fill="#ff00a1"/><rect x="392" fill="#ff009b"/><rect x="400" fill="#ff0094"/><rect x="408" fill="#ff008f"/><rect x="416" fill="#ff0089"/><rect x="424" fill="#ff0084"/><rect x="432" fill="#ff007f"/><rect x="440" fill="#ff007b"/><rect x="448" fill="#f07"/><rect x="456" fill="#ff0073"/><rect x="464" fill="#ff006f"/><rect x="472" fill="#ff006c"/><rect x="480" fill="#ff0068"/><rect x="488" fill="#ff0065"/><rect x="496" fill="#ff0062"/><rect x="504" fill="#ff005f"/><rect x="512" fill="#ff005c"/><rect x="520" fill="#ff005a"/><rect x="528" fill="#ff0057"/><rect x="536" fill="#f05"/><rect x="544" fill="#ff0053"/><rect x="552" fill="#ff0050"/><rect x="560" fill="#ff004e"/><rect x="568" fill="#ff004c"/><rect x="576" fill="#ff004a"/><rect x="584" fill="#ff0048"/></g>
<g transform="translate(1003 324)"><rect x="48" fill="#0082ff"/><rect x="56" fill="#007fff"/><rect x="64" fill="#007cff"/><rect x="72" fill="#0079ff"/><rect x="80" fill="#0076ff"/><rect x="88" fill="#0073ff"/><rect x="96" fill="#0070ff"/><rect x="104" fill="#006dff"/><rect x="112" fill="#006aff"/><rect x="120" fill="#0067ff"/><rect x="128" fill="#0064ff"/><rect x="136" fill="#0061ff"/><rect x="144" fill="#005dff"/><rect x="152" fill="#005aff"/><rect x="160" fill="#0057ff"/><rect x="168" fill="#0054ff"/><rect x="176" fill="#0650ff"/><rect x="184" fill="#134dff"/><rect x="192" fill="#1f4aff"/><rect x="200" fill="#2d46ff"/><rect x="304" fill="#e117ff"/><rect x="312" fill="#f013ff"/><rect x="320" fill="#ff0fff"/><rect x="328" fill="#ff0bf1"/><rect x="336" fill="#ff07e4"/><rect x="344" fill="#ff03d8"/><rect x="352" fill="#ff00ce"/><rect x="360" fill="#ff00c4"/><rect x="368" fill="#f0b"/><rect x="376" fill="#ff00b3"/><rect x="384" fill="#ff00ab"/><rect x="392" fill="#ff00a4"/><rect x="400" fill="#ff009e"/><rect x="408" fill="#ff0097"/><rect x="416" fill="#ff0092"/><rect x="424" fill="#ff008c"/><rect x="432" fill="#ff0087"/><rect x="440" fill="#ff0083"/><rect x="448" fill="#ff007e"/><rect x="456" fill="#ff007a"/><rect x="464" fill="#ff0076"/><rect x="472" fill="#ff0072"/><rect x="480" fill="#ff006f"/><rect x="488" fill="#ff006b"/><rect x="496" fill="#ff0068"/><rect x="504" fill="#ff0065"/><rect x="512" fill="#ff0062"/><rect x="520" fill="#ff005f"/><rect x="528" fill="#ff005d"/><rect x="536" fill="#ff005a"/><rect x="544" fill="#ff0058"/><rect x="552" fill="#ff0056"/><rect x="560" fill="#ff0053"/><rect x="568" fill="#ff0051"/><rect x="576" fill="#ff004f"/></g>
<g transform="translate(1003 332)"><rect x="48" fill="#007aff"/><rect x="56" fill="#07f"/><rect x="64" fill="#0074ff"/><rect x="72" fill="#0071ff"/><rect x="80" fill="#006eff"/><rect x="88" fill="#006bff"/><rect x="96" fill="#0068ff"/><rect x="104" fill="#0065ff"/><rect x="112" fill="#0062ff"/><rect x="120" fill="#005fff"/><rect x="128" fill="#005cff"/><rect x="136" fill="#0059ff"/><rect x="144" fill="#0056ff"/><rect x="152" fill="#0053ff"/><rect x="160" fill="#0050ff"/><rect x="168" fill="#004dff"/><rect x="176" fill="#0449ff"/><rect x="184" fill="#1046ff"/><rect x="192" fill="#1c43ff"/><rect x="200" fill="#2940ff"/><rect x="296" fill="#c616ff"/><rect x="304" fill="#d412ff"/><rect x="312" fill="#e20fff"/><rect x="320" fill="#f10bff"/><rect x="328" fill="#ff07ff"/><rect x="336" fill="#ff03f1"/><rect x="344" fill="#ff00e5"/><rect x="352" fill="#ff00da"/><rect x="360" fill="#ff00cf"/><rect x="368" fill="#ff00c6"/><rect x="376" fill="#ff00bd"/><rect x="384" fill="#ff00b5"/><rect x="392" fill="#ff00ae"/><rect x="400" fill="#ff00a7"/><rect x="408" fill="#ff00a0"/><rect x="416" fill="#ff009a"/><rect x="424" fill="#ff0095"/><rect x="432" fill="#ff008f"/><rect x="440" fill="#ff008a"/><rect x="448" fill="#ff0086"/><rect x="456" fill="#ff0081"/><rect x="464" fill="#ff007d"/><rect x="472" fill="#ff0079"/><rect x="480" fill="#ff0075"/><rect x="488" fill="#ff0072"/><rect x="496" fill="#ff006f"/><rect x="504" fill="#ff006b"/><rect x="512" fill="#ff0068"/><rect x="520" fill="#ff0065"/><rect x="528" fill="#ff0063"/><rect x="536" fill="#ff0060"/><rect x="544" fill="#ff005d"/><rect x="552" fill="#ff005b"/><rect x="560" fill="#ff0059"/><rect x="568" fill="#ff0056"/></g>
<g transform="translate(1003 340)"><rect x="56" fill="#006fff"/><rect x="64" fill="#006cff"/><rect x="72" fill="#0069ff"/><rect x="80" fill="#06f"/><rect x="88" fill="#0064ff"/><rect x="96" fill="#0061ff"/><rect x="104" fill="#005eff"/><rect x="112" fill="#005bff"/><rect x="120" fill="#0058ff"/><rect x="128" fill="#05f"/><rect x="136" fill="#0052ff"/><rect x="144" fill="#004fff"/><rect x="152" fill="#004cff"/><rect x="160" fill="#0049ff"/><rect x="168" fill="#0046ff"/><rect x="176" fill="#0143ff"/><rect x="184" fill="#0d40ff"/><rect x="192" fill="#193dff"/><rect x="200" fill="#253aff"/><rect x="288" fill="#ae15ff"/><rect x="296" fill="#bc12ff"/><rect x="304" fill="#c90eff"/><rect x="312" fill="#d60bff"/><rect x="320" fill="#e407ff"/><rect x="328" fill="#f103ff"/><rect x="336" fill="#f0f"/><rect x="344" fill="#ff00f2"/><rect x="352" fill="#ff00e6"/><rect x="360" fill="#ff00db"/><rect x="368" fill="#ff00d1"/><rect x="376" fill="#ff00c8"/><rect x="384" fill="#ff00bf"/><rect x="392" fill="#ff00b8"/><rect x="400" fill="#ff00b0"/><rect x="408" fill="#ff00a9"/><rect x="416" fill="#ff00a3"/><rect x="424" fill="#ff009d"/><rect x="432" fill="#ff0098"/><rect x="440" fill="#ff0092"/><rect x="448" fill="#ff008d"/><rect x="456" fill="#ff0089"/><rect x="464" fill="#ff0084"/><rect x="472" fill="#ff0080"/><rect x="480" fill="#ff007c"/><rect x="488" fill="#ff0078"/><rect x="496" fill="#ff0075"/><rect x="504" fill="#ff0072"/><rect x="512" fill="#ff006e"/><rect x="520" fill="#ff006b"/><rect x="528" fill="#ff0068"/><rect x="536" fill="#ff0065"/><rect x="544" fill="#ff0063"/><rect x="552" fill="#ff0060"/><rect x="560" fill="#ff005e"/></g>
<g transform="translate(1003 348)"><rect x="56" fill="#0068ff"/><rect x="64" fill="#0065ff"/><rect x="72" fill="#0062ff"/><rect x="80" fill="#005fff"/><rect x="88" fill="#005dff"/><rect x="96" fill="#005aff"/><rect x="104" fill="#0057ff"/><rect x="112" fill="#0054ff"/><rect x="120" fill="#0051ff"/><rect x="128" fill="#004fff"/><rect x="136" fill="#004cff"/><rect x="144" fill="#0049ff"/><rect x="152" fill="#0046ff"/><rect x="160" fill="#0043ff"/><rect x="168" fill="#0040ff"/><rect x="176" fill="#003dff"/><rect x="184" fill="#0b3aff"/><rect x="192" fill="#1637ff"/><rect x="200" fill="#2234ff"/><rect x="280" fill="#9914ff"/><rect x="288" fill="#a511ff"/><rect x="296" fill="#b10dff"/><rect x="304" fill="#be0aff"/><rect x="312" fill="#cb07ff"/><rect x="320" fill="#d803ff"/><rect x="328" fill="#e500ff"/><rect x="336" fill="#f200ff"/><rect x="344" fill="#f0f"/><rect x="352" fill="#ff00f3"/><rect x="360" fill="#ff00e7"/><rect x="368" fill="#ff00dc"/><rect x="376" fill="#ff00d3"/><rect x="384" fill="#ff00ca"/><rect x="392" fill="#ff00c1"/><rect x="400" fill="#ff00ba"/><rect x="408" fill="#ff00b3"/><rect x="416" fill="#ff00ac"/><rect x="424" fill="#ff00a6"/><rect x="432" fill="#ff00a0"/><rect x="440" fill="#ff009a"/><rect x="448" fill="#ff0095"/><rect x="456" fill="#ff0090"/><rect x="464" fill="#ff008b"/><rect x="472" fill="#ff0087"/><rect x="480" fill="#ff0083"/><rect x="488" fill="#ff007f"/><rect x="496" fill="#ff007b"/><rect x="504" fill="#ff0078"/><rect x="512" fill="#ff0074"/><rect x="520" fill="#ff0071"/><rect x="528" fill="#ff006e"/><rect x="536" fill="#ff006b"/><rect x="544" fill="#ff0068"/><rect x="552" fill="#f06"/></g>
<g transform="translate(1003 356)"><rect x="64" fill="#005eff"/><rect x="72" fill="#005cff"/><rect x="80" fill="#0059ff"/><rect x="88" fill="#0056ff"/><rect x="96" fill="#0054ff"/><rect x="104" fill="#0051ff"/><rect x="112" fill="#004eff"/><rect x="120" fill="#004bff"/><rect x="128" fill="#0049ff"/><rect x="136" fill="#0046ff"/><rect x="144" fill="#0043ff"/><rect x="152" fill="#0040ff"/><rect x="160" fill="#003dff"/><rect x="168" fill="#003bff"/><rect x="176" fill="#0038ff"/><rect x="184" fill="#0935ff"/><rect x="192" fill="#1432ff"/><rect x="200" fill="#1e2fff"/><rect x="280" fill="#9010ff"/><rect x="288" fill="#9c0dff"/><rect x="296" fill="#a80aff"/><rect x="304" fill="#b406ff"/><rect x="312" fill="#c103ff"/><rect x="320" fill="#cd00ff"/><rect x="328" fill="#d900ff"/><rect x="336" fill="#e600ff"/><rect x="344" fill="#f200ff"/><rect x="352" fill="#f0f"/><rect x="360" fill="#ff00f3"/><rect x="368" fill="#ff00e8"/><rect x="376" fill="#ff00de"/><rect x="384" fill="#ff00d4"/><rect x="392" fill="#ff00cb"/><rect x="400" fill="#ff00c3"/><rect x="408" fill="#ff00bc"/><rect x="416" fill="#ff00b5"/><rect x="424" fill="#ff00ae"/><rect x="432" fill="#ff00a8"/><rect x="440" fill="#ff00a2"/><rect x="448" fill="#ff009d"/><rect x="456" fill="#ff0098"/><rect x="464" fill="#ff0093"/><rect x="472" fill="#ff008e"/><rect x="480" fill="#ff008a"/><rect x="488" fill="#ff0086"/><rect x="496" fill="#ff0082"/><rect x="504" fill="#ff007e"/><rect x="512" fill="#ff007a"/><rect x="520" fill="#f07"/><rect x="528" fill="#ff0074"/><rect x="536" fill="#ff0071"/><rect x="544" fill="#ff006e"/></g>
<g transform="translate(1003 364)"><rect x="64" fill="#0058ff"/><rect x="72" fill="#05f"/><rect x="80" fill="#0053ff"/><rect x="88" fill="#0050ff"/><rect x="96" fill="#004eff"/><rect x="104" fill="#004bff"/><rect x="112" fill="#0048ff"/><rect x="120" fill="#0046ff"/><rect x="128" fill="#0043ff"/><rect x="136" fill="#0040ff"/><rect x="144" fill="#003eff"/><rect x="152" fill="#003bff"/><rect x="160" fill="#0038ff"/><rect x="168" fill="#0035ff"/><rect x="176" fill="#03f"/><rect x="184" fill="#0730ff"/><rect x="192" fill="#112dff"/><rect x="200" fill="#1c2aff"/><rect x="272" fill="#7e0fff"/><rect x="280" fill="#890cff"/><rect x="288" fill="#9409ff"/><rect x="296" fill="#a006ff"/><rect x="304" fill="#ab03ff"/><rect x="312" fill="#b700ff"/><rect x="320" fill="#c300ff"/><rect x="328" fill="#cf00ff"/><rect x="336" fill="#da00ff"/><rect x="344" fill="#e600ff"/><rect x="352" fill="#f300ff"/><rect x="360" fill="#f0f"/><rect x="368" fill="#ff00f4"/><rect x="376" fill="#ff00e9"/><rect x="384" fill="#ff00df"/><rect x="392" fill="#ff00d6"/><rect x="400" fill="#ff00cd"/><rect x="408" fill="#ff00c5"/><rect x="416" fill="#ff00be"/><rect x="424" fill="#ff00b7"/><rect x="432" fill="#ff00b0"/><rect x="440" fill="#f0a"/><rect x="448" fill="#ff00a5"/><rect x="456" fill="#ff009f"/><rect x="464" fill="#ff009a"/><rect x="472" fill="#ff0095"/><rect x="480" fill="#ff0091"/><rect x="488" fill="#ff008c"/><rect x="496" fill="#f08"/><rect x="504" fill="#ff0084"/><rect x="512" fill="#ff0081"/><rect x="520" fill="#ff007d"/><rect x="528" fill="#ff007a"/><rect x="536" fill="#f07"/></g>
<g transform="translate(1003 372)"><rect x="72" fill="#0050ff"/><rect x="80" fill="#004dff"/><rect x="88" fill="#004bff"/><rect x="96" fill="#0048ff"/><rect x="104" fill="#0046ff"/><rect x="112" fill="#0043ff"/><rect x="120" fill="#0041ff"/><rect x="128" fill="#003eff"/><rect x="136" fill="#003bff"/><rect x="144" fill="#0039ff"/><rect x="152" fill="#0036ff"/><rect x="160" fill="#03f"/><rect x="168" fill="#0031ff"/><rect x="176" fill="#002eff"/><rect x="184" fill="#052bff"/><rect x="192" fill="#0f29ff"/><rect x="200" fill="#1926ff"/><rect x="208" fill="#2323ff"/><rect x="264" fill="#6c0fff"/><rect x="272" fill="#770cff"/><rect x="280" fill="#8209ff"/><rect x="288" fill="#8d06ff"/><rect x="296" fill="#9803ff"/><rect x="304" fill="#a300ff"/><rect x="312" fill="#ae00ff"/><rect x="320" fill="#ba00ff"/><rect x="328" fill="#c500ff"/><rect x="336" fill="#d000ff"/><rect x="344" fill="#dc00ff"/><rect x="352" fill="#e700ff"/><rect x="360" fill="#f300ff"/><rect x="368" fill="#f0f"/><rect x="376" fill="#ff00f4"/><rect x="384" fill="#ff00ea"/><rect x="392" fill="#ff00e0"/><rect x="400" fill="#ff00d7"/><rect x="408" fill="#ff00cf"/><rect x="416" fill="#ff00c7"/><rect x="424" fill="#ff00c0"/><rect x="432" fill="#ff00b9"/><rect x="440" fill="#ff00b2"/><rect x="448" fill="#ff00ac"/><rect x="456" fill="#ff00a7"/><rect x="464" fill="#ff00a1"/><rect x="472" fill="#ff009c"/><rect x="480" fill="#ff0098"/><rect x="488" fill="#ff0093"/><rect x="496" fill="#ff008f"/><rect x="504" fill="#ff008b"/><rect x="512" fill="#ff0087"/><rect x="520" fill="#ff0083"/><rect x="528" fill="#ff0080"/></g>
<g transform="translate(1003 380)"><rect x="72" fill="#004bff"/><rect x="80" fill="#0048ff"/><rect x="88" fill="#0046ff"/><rect x="96" fill="#0043ff"/><rect x="104" fill="#0041ff"/><rect x="112" fill="#003eff"/><rect x="120" fill="#003cff"/><rect x="128" fill="#0039ff"/><rect x="136" fill="#0037ff"/><rect x="144" fill="#0034ff"/><rect x="152" fill="#0031ff"/><rect x="160" fill="#002fff"/><rect x="168" fill="#002cff"/><rect x="176" fill="#002aff"/><rect x="184" fill="#0327ff"/><rect x="192" fill="#0d24ff"/><rect x="200" fill="#1722ff"/><rect x="208" fill="#201fff"/><rect x="256" fill="#5d0eff"/><rect x="264" fill="#670cff"/><rect x="272" fill="#7109ff"/><rect x="280" fill="#7c06ff"/><rect x="288" fill="#8603ff"/><rect x="296" fill="#9100ff"/><rect x="304" fill="#9b00ff"/><rect x="312" fill="#a600ff"/><rect x="320" fill="#b100ff"/><rect x="328" fill="#bc00ff"/><rect x="336" fill="#c700ff"/><rect x="344" fill="#d200ff"/><rect x="352" fill="#d0f"/><rect x="360" fill="#e800ff"/><rect x="368" fill="#f300ff"/><rect x="376" fill="#f0f"/><rect x="384" fill="#ff00f4"/><rect x="392" fill="#ff00ea"/><rect x="400" fill="#ff00e1"/><rect x="408" fill="#ff00d8"/><rect x="416" fill="#ff00d0"/><rect x="424" fill="#ff00c8"/><rect x="432" fill="#ff00c1"/><rect x="440" fill="#f0b"/><rect x="448" fill="#ff00b4"/><rect x="456" fill="#ff00ae"/><rect x="464" fill="#ff00a9"/><rect x="472" fill="#ff00a4"/><rect x="480" fill="#ff009f"/><rect x="488" fill="#ff009a"/><rect x="496" fill="#ff0095"/><rect x="504" fill="#ff0091"/><rect x="512" fill="#ff008d"/><rect x="520" fill="#ff0089"/></g>
<g transform="translate(1003 388)"><rect x="80" fill="#0043ff"/><rect x="88" fill="#0041ff"/><rect x="96" fill="#003eff"/><rect x="104" fill="#003cff"/><rect x="112" fill="#003aff"/><rect x="120" fill="#0037ff"/><rect x="128" fill="#0035ff"/><rect x="136" fill="#0032ff"/><rect x="144" fill="#0030ff"/><rect x="152" fill="#002dff"/><rect x="160" fill="#002bff"/><rect x="168" fill="#0028ff"/><rect x="176" fill="#0026ff"/><rect x="184" fill="#0123ff"/><rect x="192" fill="#0b20ff"/><rect x="200" fill="#141eff"/><rect x="208" fill="#1e1bff"/><rect x="248" fill="#4e0eff"/><rect x="256" fill="#580bff"/><rect x="264" fill="#6208ff"/><rect x="272" fill="#6c06ff"/><rect x="280" fill="#7603ff"/><rect x="288" fill="#8000ff"/><rect x="296" fill="#8a00ff"/><rect x="304" fill="#9400ff"/><rect x="312" fill="#9f00ff"/><rect x="320" fill="#a900ff"/><rect x="328" fill="#b300ff"/><rect x="336" fill="#be00ff"/><rect x="344" fill="#c900ff"/><rect x="352" fill="#d300ff"/><rect x="360" fill="#de00ff"/><rect x="368" fill="#e900ff"/><rect x="376" fill="#f400ff"/><rect x="384" fill="#f0f"/><rect x="392" fill="#ff00f5"/><rect x="400" fill="#ff00eb"/><rect x="408" fill="#ff00e2"/><rect x="416" fill="#ff00d9"/><rect x="424" fill="#ff00d1"/><rect x="432" fill="#ff00ca"/><rect x="440" fill="#ff00c3"/><rect x="448" fill="#ff00bc"/><rect x="456" fill="#ff00b6"/><rect x="464" fill="#ff00b0"/><rect x="472" fill="#ff00ab"/><rect x="480" fill="#ff00a6"/><rect x="488" fill="#ff00a1"/><rect x="496" fill="#ff009c"/><rect x="504" fill="#ff0098"/><rect x="512" fill="#ff0093"/></g>
<g transform="translate(1003 396)"><rect x="80" fill="#003fff"/><rect x="88" fill="#003cff"/><rect x="96" fill="#003aff"/><rect x="104" fill="#0038ff"/><rect x="112" fill="#0035ff"/><rect x="120" fill="#03f"/><rect x="128" fill="#0031ff"/><rect x="136" fill="#002eff"/><rect x="144" fill="#002cff"/><rect x="152" fill="#0029ff"/><rect x="160" fill="#0027ff"/><rect x="168" fill="#0024ff"/><rect x="176" fill="#02f"/><rect x="184" fill="#001fff"/><rect x="192" fill="#091dff"/><rect x="200" fill="#121aff"/><rect x="208" fill="#1b18ff"/><rect x="240" fill="#400dff"/><rect x="248" fill="#4a0bff"/><rect x="256" fill="#5308ff"/><rect x="264" fill="#5d06ff"/><rect x="272" fill="#6703ff"/><rect x="280" fill="#7000ff"/><rect x="288" fill="#7a00ff"/><rect x="296" fill="#8400ff"/><rect x="304" fill="#8e00ff"/><rect x="312" fill="#9800ff"/><rect x="320" fill="#a200ff"/><rect x="328" fill="#ac00ff"/><rect x="336" fill="#b600ff"/><rect x="344" fill="#c000ff"/><rect x="352" fill="#ca00ff"/><rect x="360" fill="#d500ff"/><rect x="368" fill="#df00ff"/><rect x="376" fill="#e900ff"/><rect x="384" fill="#f400ff"/><rect x="392" fill="#f0f"/><rect x="400" fill="#ff00f5"/><rect x="408" fill="#ff00ec"/><rect x="416" fill="#ff00e3"/><rect x="424" fill="#ff00da"/><rect x="432" fill="#ff00d3"/><rect x="440" fill="#ff00cb"/><rect x="448" fill="#ff00c4"/><rect x="456" fill="#ff00be"/><rect x="464" fill="#ff00b8"/><rect x="472" fill="#ff00b2"/><rect x="480" fill="#ff00ad"/><rect x="488" fill="#ff00a8"/><rect x="496" fill="#ff00a3"/><rect x="504" fill="#ff009e"/></g>
<g transform="translate(1003 404)"><rect x="88" fill="#0038ff"/><rect x="96" fill="#0036ff"/><rect x="104" fill="#0034ff"/><rect x="112" fill="#0031ff"/><rect x="120" fill="#002fff"/><rect x="128" fill="#002dff"/><rect x="136" fill="#002aff"/><rect x="144" fill="#0028ff"/><rect x="152" fill="#0026ff"/><rect x="160" fill="#0023ff"/><rect x="168" fill="#0021ff"/><rect x="176" fill="#001eff"/><rect x="184" fill="#001cff"/><rect x="192" fill="#0719ff"/><rect x="200" fill="#1017ff"/><rect x="208" fill="#1915ff"/><rect x="232" fill="#340dff"/><rect x="240" fill="#3d0aff"/><rect x="248" fill="#4608ff"/><rect x="256" fill="#4f05ff"/><rect x="264" fill="#5803ff"/><rect x="272" fill="#6200ff"/><rect x="280" fill="#6b00ff"/><rect x="288" fill="#7400ff"/><rect x="296" fill="#7e00ff"/><rect x="304" fill="#8700ff"/><rect x="312" fill="#9100ff"/><rect x="320" fill="#9b00ff"/><rect x="328" fill="#a400ff"/><rect x="336" fill="#ae00ff"/><rect x="344" fill="#b800ff"/><rect x="352" fill="#c200ff"/><rect x="360" fill="#c0f"/><rect x="368" fill="#d600ff"/><rect x="376" fill="#e000ff"/><rect x="384" fill="#ea00ff"/><rect x="392" fill="#f400ff"/><rect x="400" fill="#f0f"/><rect x="408" fill="#ff00f5"/><rect x="416" fill="#ff00ec"/><rect x="424" fill="#ff00e3"/><rect x="432" fill="#ff00db"/><rect x="440" fill="#ff00d4"/><rect x="448" fill="#ff00cd"/><rect x="456" fill="#ff00c6"/><rect x="464" fill="#ff00c0"/><rect x="472" fill="#ff00ba"/><rect x="480" fill="#ff00b4"/><rect x="488" fill="#ff00af"/><rect x="496" fill="#f0a"/></g>
<g transform="translate(1003 412)"><rect x="96" fill="#0032ff"/><rect x="104" fill="#0030ff"/><rect x="112" fill="#002dff"/><rect x="120" fill="#002bff"/><rect x="128" fill="#0029ff"/><rect x="136" fill="#0027ff"/><rect x="144" fill="#0024ff"/><rect x="152" fill="#02f"/><rect x="160" fill="#0020ff"/><rect x="168" fill="#001dff"/><rect x="176" fill="#001bff"/><rect x="184" fill="#0019ff"/><rect x="192" fill="#0616ff"/><rect x="200" fill="#0e14ff"/><rect x="208" fill="#1711ff"/><rect x="224" fill="#280dff"/><rect x="232" fill="#310aff"/><rect x="240" fill="#3a08ff"/><rect x="248" fill="#4205ff"/><rect x="256" fill="#4b03ff"/><rect x="264" fill="#5400ff"/><rect x="272" fill="#5d00ff"/><rect x="280" fill="#60f"/><rect x="288" fill="#6f00ff"/><rect x="296" fill="#7800ff"/><rect x="304" fill="#8200ff"/><rect x="312" fill="#8b00ff"/><rect x="320" fill="#9400ff"/><rect x="328" fill="#9e00ff"/><rect x="336" fill="#a700ff"/><rect x="344" fill="#b100ff"/><rect x="352" fill="#ba00ff"/><rect x="360" fill="#c400ff"/><rect x="368" fill="#cd00ff"/><rect x="376" fill="#d700ff"/><rect x="384" fill="#e100ff"/><rect x="392" fill="#eb00ff"/><rect x="400" fill="#f500ff"/><rect x="408" fill="#f0f"/><rect x="416" fill="#ff00f6"/><rect x="424" fill="#ff00ed"/><rect x="432" fill="#ff00e4"/><rect x="440" fill="#ff00dc"/><rect x="448" fill="#ff00d5"/><rect x="456" fill="#ff00ce"/><rect x="464" fill="#ff00c7"/><rect x="472" fill="#ff00c1"/><rect x="480" fill="#f0b"/><rect x="488" fill="#ff00b6"/></g>
<g transform="translate(1003 420)"><rect x="96" fill="#002eff"/><rect x="104" fill="#002cff"/><rect x="112" fill="#002aff"/><rect x="120" fill="#0028ff"/><rect x="128" fill="#0025ff"/><rect x="136" fill="#0023ff"/><rect x="144" fill="#0021ff"/><rect x="152" fill="#001fff"/><rect x="160" fill="#001cff"/><rect x="168" fill="#001aff"/><rect x="176" fill="#0018ff"/><rect x="184" fill="#0016ff"/><rect x="192" fill="#0413ff"/><rect x="200" fill="#0c11ff"/><rect x="208" fill="#150fff"/><rect x="216" fill="#1d0cff"/><rect x="224" fill="#260aff"/><rect x="232" fill="#2e08ff"/><rect x="240" fill="#3605ff"/><rect x="248" fill="#3f03ff"/><rect x="256" fill="#4800ff"/><rect x="264" fill="#5000ff"/><rect x="272" fill="#5900ff"/><rect x="280" fill="#6200ff"/><rect x="288" fill="#6a00ff"/><rect x="296" fill="#7300ff"/><rect x="304" fill="#7c00ff"/><rect x="312" fill="#8500ff"/><rect x="320" fill="#8e00ff"/><rect x="328" fill="#9700ff"/><rect x="336" fill="#a000ff"/><rect x="344" fill="#a0f"/><rect x="352" fill="#b300ff"/><rect x="360" fill="#bc00ff"/><rect x="368" fill="#c500ff"/><rect x="376" fill="#cf00ff"/><rect x="384" fill="#d800ff"/><rect x="392" fill="#e200ff"/><rect x="400" fill="#eb00ff"/><rect x="408" fill="#f500ff"/><rect x="416" fill="#f0f"/><rect x="424" fill="#ff00f6"/><rect x="432" fill="#ff00ed"/><rect x="440" fill="#ff00e5"/><rect x="448" fill="#f0d"/><rect x="456" fill="#ff00d6"/><rect x="464" fill="#ff00cf"/><rect x="472" fill="#ff00c9"/><rect x="480" fill="#ff00c3"/></g>
<g transform="translate(1003 428)"><rect x="104" fill="#0029ff"/><rect x="112" fill="#0026ff"/><rect x="120" fill="#0024ff"/><rect x="128" fill="#02f"/><rect x="136" fill="#0020ff"/><rect x="144" fill="#001eff"/><rect x="152" fill="#001cff"/><rect x="160" fill="#0019ff"/><rect x="168" fill="#0017ff"/><rect x="176" fill="#0015ff"/><rect x="184" fill="#0013ff"/><rect x="192" fill="#0310ff"/><rect x="200" fill="#0b0eff"/><rect x="208" fill="#130cff"/><rect x="216" fill="#1b0aff"/><rect x="224" fill="#2307ff"/><rect x="232" fill="#2b05ff"/><rect x="240" fill="#3403ff"/><rect x="248" fill="#3c00ff"/><rect x="256" fill="#40f"/><rect x="264" fill="#4d00ff"/><rect x="272" fill="#50f"/><rect x="280" fill="#5d00ff"/><rect x="288" fill="#60f"/><rect x="296" fill="#6f00ff"/><rect x="304" fill="#70f"/><rect x="312" fill="#8000ff"/><rect x="320" fill="#8900ff"/><rect x="328" fill="#9100ff"/><rect x="336" fill="#9a00ff"/><rect x="344" fill="#a300ff"/><rect x="352" fill="#ac00ff"/><rect x="360" fill="#b500ff"/><rect x="368" fill="#be00ff"/><rect x="376" fill="#c700ff"/><rect x="384" fill="#d000ff"/><rect x="392" fill="#d900ff"/><rect x="400" fill="#e200ff"/><rect x="408" fill="#ec00ff"/><rect x="416" fill="#f500ff"/><rect x="424" fill="#f0f"/><rect x="432" fill="#ff00f6"/><rect x="440" fill="#f0e"/><rect x="448" fill="#ff00e6"/><rect x="456" fill="#ff00de"/><rect x="464" fill="#ff00d7"/><rect x="472" fill="#ff00d0"/></g>
<g transform="translate(1003 436)"><rect x="104" fill="#0025ff"/><rect x="112" fill="#0023ff"/><rect x="120" fill="#0021ff"/><rect x="128" fill="#001fff"/><rect x="136" fill="#001dff"/><rect x="144" fill="#001bff"/><rect x="152" fill="#0019ff"/><rect x="160" fill="#0017ff"/><rect x="168" fill="#0014ff"/><rect x="176" fill="#0012ff"/><rect x="184" fill="#0010ff"/><rect x="192" fill="#010eff"/><rect x="200" fill="#090cff"/><rect x="208" fill="#1109ff"/><rect x="216" fill="#1907ff"/><rect x="224" fill="#2105ff"/><rect x="232" fill="#2903ff"/><rect x="240" fill="#3100ff"/><rect x="248" fill="#3900ff"/><rect x="256" fill="#4100ff"/><rect x="264" fill="#4900ff"/><rect x="272" fill="#5100ff"/><rect x="280" fill="#5900ff"/><rect x="288" fill="#6200ff"/><rect x="296" fill="#6a00ff"/><rect x="304" fill="#7200ff"/><rect x="312" fill="#7b00ff"/><rect x="320" fill="#8300ff"/><rect x="328" fill="#8c00ff"/><rect x="336" fill="#9400ff"/><rect x="344" fill="#9d00ff"/><rect x="352" fill="#a500ff"/><rect x="360" fill="#ae00ff"/><rect x="368" fill="#b700ff"/><rect x="376" fill="#c000ff"/><rect x="384" fill="#c800ff"/><rect x="392" fill="#d100ff"/><rect x="400" fill="#da00ff"/><rect x="408" fill="#e300ff"/><rect x="416" fill="#ec00ff"/><rect x="424" fill="#f500ff"/><rect x="432" fill="#fe00ff"/><rect x="440" fill="#ff00f7"/><rect x="448" fill="#f0e"/><rect x="456" fill="#ff00e6"/><rect x="464" fill="#ff00df"/></g>
<g transform="translate(1003 444)"><rect x="112" fill="#0020ff"/><rect x="120" fill="#001eff"/><rect x="128" fill="#001cff"/><rect x="136" fill="#001aff"/><rect x="144" fill="#0018ff"/><rect x="152" fill="#0016ff"/><rect x="160" fill="#0014ff"/><rect x="168" fill="#0012ff"/><rect x="176" fill="#0010ff"/><rect x="184" fill="#000dff"/><rect x="192" fill="#000bff"/><rect x="200" fill="#0809ff"/><rect x="208" fill="#0f07ff"/><rect x="216" fill="#1705ff"/><rect x="224" fill="#1f03ff"/><rect x="232" fill="#2600ff"/><rect x="240" fill="#2e00ff"/><rect x="248" fill="#3600ff"/><rect x="256" fill="#3e00ff"/><rect x="264" fill="#4600ff"/><rect x="272" fill="#4e00ff"/><rect x="280" fill="#5600ff"/><rect x="288" fill="#5e00ff"/><rect x="296" fill="#60f"/><rect x="304" fill="#6e00ff"/><rect x="312" fill="#7600ff"/><rect x="320" fill="#7e00ff"/><rect x="328" fill="#8600ff"/><rect x="336" fill="#8f00ff"/><rect x="344" fill="#9700ff"/><rect x="352" fill="#9f00ff"/><rect x="360" fill="#a800ff"/><rect x="368" fill="#b000ff"/><rect x="376" fill="#b900ff"/><rect x="384" fill="#c100ff"/><rect x="392" fill="#ca00ff"/><rect x="400" fill="#d300ff"/><rect x="408" fill="#db00ff"/><rect x="416" fill="#e400ff"/><rect x="424" fill="#ed00ff"/><rect x="432" fill="#f600ff"/><rect x="440" fill="#fe00ff"/><rect x="448" fill="#ff00f7"/><rect x="456" fill="#ff00ef"/></g>
<g transform="translate(1003 452)"><rect x="120" fill="#001bff"/><rect x="128" fill="#0019ff"/><rect x="136" fill="#0017ff"/><rect x="144" fill="#0015ff"/><rect x="152" fill="#0013ff"/><rect x="160" fill="#01f"/><rect x="168" fill="#000fff"/><rect x="176" fill="#000dff"/><rect x="184" fill="#000bff"/><rect x="192" fill="#0009ff"/><rect x="200" fill="#0607ff"/><rect x="208" fill="#0e05ff"/><rect x="216" fill="#1503ff"/><rect x="224" fill="#1d00ff"/><rect x="232" fill="#2400ff"/><rect x="240" fill="#2c00ff"/><rect x="248" fill="#30f"/><rect x="256" fill="#3b00ff"/><rect x="264" fill="#4300ff"/><rect x="272" fill="#4a00ff"/><rect x="280" fill="#5200ff"/><rect x="288" fill="#5a00ff"/><rect x="296" fill="#6200ff"/><rect x="304" fill="#6a00ff"/><rect x="312" fill="#7100ff"/><rect x="320" fill="#7900ff"/><rect x="328" fill="#8100ff"/><rect x="336" fill="#8900ff"/><rect x="344" fill="#9100ff"/><rect x="352" fill="#9a00ff"/><rect x="360" fill="#a200ff"/><rect x="368" fill="#a0f"/><rect x="376" fill="#b200ff"/><rect x="384" fill="#ba00ff"/><rect x="392" fill="#c300ff"/><rect x="400" fill="#cb00ff"/><rect x="408" fill="#d400ff"/><rect x="416" fill="#dc00ff"/><rect x="424" fill="#e500ff"/><rect x="432" fill="#ed00ff"/><rect x="440" fill="#f600ff"/><rect x="448" fill="#fe00ff"/><rect x="456" fill="#ff00f7"/></g>
<g transform="translate(1003 460)"><rect x="120" fill="#0019ff"/><rect x="128" fill="#0017ff"/><rect x="136" fill="#0015ff"/><rect x="144" fill="#0013ff"/><rect x="152" fill="#01f"/><rect x="160" fill="#000fff"/><rect x="168" fill="#000dff"/><rect x="176" fill="#000bff"/><rect x="184" fill="#0009ff"/><rect x="192" fill="#0007ff"/><rect x="200" fill="#0505ff"/><rect x="208" fill="#0c03ff"/><rect x="216" fill="#1300ff"/><rect x="224" fill="#1b00ff"/><rect x="232" fill="#20f"/><rect x="240" fill="#2900ff"/><rect x="248" fill="#3100ff"/><rect x="256" fill="#3800ff"/><rect x="264" fill="#4000ff"/><rect x="272" fill="#4700ff"/><rect x="280" fill="#4f00ff"/><rect x="288" fill="#5600ff"/><rect x="296" fill="#5e00ff"/><rect x="304" fill="#6500ff"/><rect x="312" fill="#6d00ff"/><rect x="320" fill="#7500ff"/><rect x="328" fill="#7d00ff"/><rect x="336" fill="#8400ff"/><rect x="344" fill="#8c00ff"/><rect x="352" fill="#9400ff"/><rect x="360" fill="#9c00ff"/><rect x="368" fill="#a400ff"/><rect x="376" fill="#ac00ff"/><rect x="384" fill="#b400ff"/><rect x="392" fill="#bc00ff"/><rect x="400" fill="#c400ff"/><rect x="408" fill="#c0f"/><rect x="416" fill="#d500ff"/><rect x="424" fill="#d0f"/><rect x="432" fill="#e500ff"/><rect x="440" fill="#e0f"/><rect x="448" fill="#f600ff"/></g>
<g transform="translate(1003 468)"><rect x="128" fill="#0014ff"/><rect x="136" fill="#0012ff"/><rect x="144" fill="#0010ff"/><rect x="152" fill="#000eff"/><rect x="160" fill="#000cff"/><rect x="168" fill="#000aff"/><rect x="176" fill="#0009ff"/><rect x="184" fill="#0007ff"/><rect x="192" fill="#0005ff"/><rect x="200" fill="#0403ff"/><rect x="208" fill="#0b01ff"/><rect x="216" fill="#1200ff"/><rect x="224" fill="#1900ff"/><rect x="232" fill="#2000ff"/><rect x="240" fill="#2700ff"/><rect x="248" fill="#2e00ff"/><rect x="256" fill="#3600ff"/><rect x="264" fill="#3d00ff"/><rect x="272" fill="#40f"/><rect x="280" fill="#4b00ff"/><rect x="288" fill="#5300ff"/><rect x="296" fill="#5a00ff"/><rect x="304" fill="#6200ff"/><rect x="312" fill="#6900ff"/><rect x="320" fill="#7100ff"/><rect x="328" fill="#7800ff"/><rect x="336" fill="#8000ff"/><rect x="344" fill="#8700ff"/><rect x="352" fill="#8f00ff"/><rect x="360" fill="#9700ff"/><rect x="368" fill="#9e00ff"/><rect x="376" fill="#a600ff"/><rect x="384" fill="#ae00ff"/><rect x="392" fill="#b600ff"/><rect x="400" fill="#be00ff"/><rect x="408" fill="#c600ff"/><rect x="416" fill="#ce00ff"/><rect x="424" fill="#d600ff"/><rect x="432" fill="#de00ff"/><rect x="440" fill="#e600ff"/></g>
<g transform="translate(1003 476)"><rect x="136" fill="#0010ff"/><rect x="144" fill="#000eff"/><rect x="152" fill="#000cff"/><rect x="160" fill="#000aff"/><rect x="168" fill="#0008ff"/><rect x="176" fill="#0006ff"/><rect x="184" fill="#0004ff"/><rect x="192" fill="#0002ff"/><rect x="200" fill="#0301ff"/><rect x="208" fill="#0900ff"/><rect x="216" fill="#1000ff"/><rect x="224" fill="#1700ff"/><rect x="232" fill="#1e00ff"/><rect x="240" fill="#2500ff"/><rect x="248" fill="#2c00ff"/><rect x="256" fill="#30f"/><rect x="264" fill="#3a00ff"/><rect x="272" fill="#4100ff"/><rect x="280" fill="#4800ff"/><rect x="288" fill="#5000ff"/><rect x="296" fill="#5700ff"/><rect x="304" fill="#5e00ff"/><rect x="312" fill="#6500ff"/><rect x="320" fill="#6d00ff"/><rect x="328" fill="#7400ff"/><rect x="336" fill="#7b00ff"/><rect x="344" fill="#8300ff"/><rect x="352" fill="#8a00ff"/><rect x="360" fill="#9200ff"/><rect x="368" fill="#90f"/><rect x="376" fill="#a100ff"/><rect x="384" fill="#a800ff"/><rect x="392" fill="#b000ff"/><rect x="400" fill="#b800ff"/><rect x="408" fill="#bf00ff"/><rect x="416" fill="#c700ff"/><rect x="424" fill="#cf00ff"/><rect x="432" fill="#d700ff"/></g>
<g transform="translate(1003 484)"><rect x="136" fill="#000eff"/><rect x="144" fill="#000cff"/><rect x="152" fill="#000aff"/><rect x="160" fill="#0008ff"/><rect x="168" fill="#0006ff"/><rect x="176" fill="#0004ff"/><rect x="184" fill="#0002ff"/><rect x="192" fill="#0001ff"/><rect x="200" fill="#0100ff"/><rect x="208" fill="#0800ff"/><rect x="216" fill="#0f00ff"/><rect x="224" fill="#1600ff"/><rect x="232" fill="#1c00ff"/><rect x="240" fill="#2300ff"/><rect x="248" fill="#2a00ff"/><rect x="256" fill="#3100ff"/><rect x="264" fill="#3800ff"/><rect x="272" fill="#3f00ff"/><rect x="280" fill="#4500ff"/><rect x="288" fill="#4c00ff"/><rect x="296" fill="#5300ff"/><rect x="304" fill="#5b00ff"/><rect x="312" fill="#6200ff"/><rect x="320" fill="#6900ff"/><rect x="328" fill="#7000ff"/><rect x="336" fill="#70f"/><rect x="344" fill="#7e00ff"/><rect x="352" fill="#8600ff"/><rect x="360" fill="#8d00ff"/><rect x="368" fill="#9400ff"/><rect x="376" fill="#9b00ff"/><rect x="384" fill="#a300ff"/><rect x="392" fill="#a0f"/><rect x="400" fill="#b200ff"/><rect x="408" fill="#b900ff"/><rect x="416" fill="#c100ff"/><rect x="424" fill="#c800ff"/></g>
<g transform="translate(1003 492)"><rect x="144" fill="#000aff"/><rect x="152" fill="#0008ff"/><rect x="160" fill="#0006ff"/><rect x="168" fill="#0004ff"/><rect x="176" fill="#0002ff"/><rect x="184" fill="#0001ff"/><rect x="192" style="width:17px" fill="#00f"/><rect x="208" fill="#0700ff"/><rect x="216" fill="#0d00ff"/><rect x="224" fill="#1400ff"/><rect x="232" fill="#1b00ff"/><rect x="240" fill="#2100ff"/><rect x="248" fill="#2800ff"/><rect x="256" fill="#2f00ff"/><rect x="264" fill="#3500ff"/><rect x="272" fill="#3c00ff"/><rect x="280" fill="#4300ff"/><rect x="288" fill="#4a00ff"/><rect x="296" fill="#5000ff"/><rect x="304" fill="#5700ff"/><rect x="312" fill="#5e00ff"/><rect x="320" fill="#6500ff"/><rect x="328" fill="#6c00ff"/><rect x="336" fill="#7300ff"/><rect x="344" fill="#7a00ff"/><rect x="352" fill="#8100ff"/><rect x="360" fill="#80f"/><rect x="368" fill="#8f00ff"/><rect x="376" fill="#9700ff"/><rect x="384" fill="#9e00ff"/><rect x="392" fill="#a500ff"/><rect x="400" fill="#ac00ff"/><rect x="408" fill="#b300ff"/><rect x="416" fill="#b0f"/></g>
<g transform="translate(1003 500)"><rect x="152" fill="#0006ff"/><rect x="160" fill="#0004ff"/><rect x="168" fill="#0002ff"/><rect x="176" fill="#0001ff"/><rect x="184" style="width:25px" fill="#00f"/><rect x="208" fill="#0600ff"/><rect x="216" fill="#0c00ff"/><rect x="224" fill="#1200ff"/><rect x="232" fill="#1900ff"/><rect x="240" fill="#1f00ff"/><rect x="248" fill="#2600ff"/><rect x="256" fill="#2c00ff"/><rect x="264" fill="#30f"/><rect x="272" fill="#3a00ff"/><rect x="280" fill="#4000ff"/><rect x="288" fill="#4700ff"/><rect x="296" fill="#4d00ff"/><rect x="304" fill="#5400ff"/><rect x="312" fill="#5b00ff"/><rect x="320" fill="#6200ff"/><rect x="328" fill="#6800ff"/><rect x="336" fill="#6f00ff"/><rect x="344" fill="#7600ff"/><rect x="352" fill="#7d00ff"/><rect x="360" fill="#8400ff"/><rect x="368" fill="#8b00ff"/><rect x="376" fill="#9200ff"/><rect x="384" fill="#90f"/><rect x="392" fill="#a000ff"/><rect x="400" fill="#a700ff"/><rect x="408" fill="#ae00ff"/></g>
<g transform="translate(1003 508)"><rect x="160" fill="#0002ff"/><rect x="168" fill="#0001ff"/><rect x="176" style="width:33px" fill="#00f"/><rect x="208" fill="#0500ff"/><rect x="216" fill="#0b00ff"/><rect x="224" fill="#10f"/><rect x="232" fill="#1700ff"/><rect x="240" fill="#1e00ff"/><rect x="248" fill="#2400ff"/><rect x="256" fill="#2a00ff"/><rect x="264" fill="#3100ff"/><rect x="272" fill="#3700ff"/><rect x="280" fill="#3e00ff"/><rect x="288" fill="#40f"/><rect x="296" fill="#4b00ff"/><rect x="304" fill="#5100ff"/><rect x="312" fill="#5800ff"/><rect x="320" fill="#5e00ff"/><rect x="328" fill="#6500ff"/><rect x="336" fill="#6c00ff"/><rect x="344" fill="#7200ff"/><rect x="352" fill="#7900ff"/><rect x="360" fill="#8000ff"/><rect x="368" fill="#8600ff"/><rect x="376" fill="#8d00ff"/><rect x="384" fill="#9400ff"/><rect x="392" fill="#9b00ff"/><rect x="400" fill="#a200ff"/></g>
<g transform="translate(1003 516)"><rect x="160" fill="#0001ff"/><rect x="168" style="width:41px" fill="#00f"/><rect x="208" fill="#0300ff"/><rect x="216" fill="#0a00ff"/><rect x="224" fill="#1000ff"/><rect x="232" fill="#1600ff"/><rect x="240" fill="#1c00ff"/><rect x="248" fill="#20f"/><rect x="256" fill="#2800ff"/><rect x="264" fill="#2f00ff"/><rect x="272" fill="#3500ff"/><rect x="280" fill="#3b00ff"/><rect x="288" fill="#4200ff"/><rect x="296" fill="#4800ff"/><rect x="304" fill="#4e00ff"/><rect x="312" fill="#50f"/><rect x="320" fill="#5b00ff"/><rect x="328" fill="#6200ff"/><rect x="336" fill="#6800ff"/><rect x="344" fill="#6f00ff"/><rect x="352" fill="#7500ff"/><rect x="360" fill="#7c00ff"/><rect x="368" fill="#8200ff"/><rect x="376" fill="#8900ff"/><rect x="384" fill="#9000ff"/><rect x="392" fill="#9600ff"/></g>
<g transform="translate(1003 524)"><rect x="168" style="width:41px" fill="#00f"/><rect x="208" fill="#0200ff"/><rect x="216" fill="#0800ff"/><rect x="224" fill="#0e00ff"/><rect x="232" fill="#1400ff"/><rect x="240" fill="#1a00ff"/><rect x="248" fill="#2000ff"/><rect x="256" fill="#2700ff"/><rect x="264" fill="#2d00ff"/><rect x="272" fill="#30f"/><rect x="280" fill="#3900ff"/><rect x="288" fill="#3f00ff"/><rect x="296" fill="#4500ff"/><rect x="304" fill="#4c00ff"/><rect x="312" fill="#5200ff"/><rect x="320" fill="#5800ff"/><rect x="328" fill="#5e00ff"/><rect x="336" fill="#6500ff"/><rect x="344" fill="#6b00ff"/><rect x="352" fill="#7200ff"/><rect x="360" fill="#7800ff"/><rect x="368" fill="#7e00ff"/><rect x="376" fill="#8500ff"/><rect x="384" fill="#8b00ff"/></g>
<g transform="translate(1003 532)"><rect x="176" style="width:33px" fill="#00f"/><rect x="208" fill="#0100ff"/><rect x="216" fill="#0700ff"/><rect x="224" fill="#0d00ff"/><rect x="232" fill="#1300ff"/><rect x="240" fill="#1900ff"/><rect x="248" fill="#1f00ff"/><rect x="256" fill="#2500ff"/><rect x="264" fill="#2b00ff"/><rect x="272" fill="#3100ff"/><rect x="280" fill="#3700ff"/><rect x="288" fill="#3d00ff"/><rect x="296" fill="#4300ff"/><rect x="304" fill="#4900ff"/><rect x="312" fill="#4f00ff"/><rect x="320" fill="#50f"/><rect x="328" fill="#5b00ff"/><rect x="336" fill="#6200ff"/><rect x="344" fill="#6800ff"/><rect x="352" fill="#6e00ff"/><rect x="360" fill="#7400ff"/><rect x="368" fill="#7b00ff"/><rect x="376" fill="#8100ff"/></g>
<g transform="translate(1003 540)"><rect x="184" style="width:33px" fill="#00f"/><rect x="216" fill="#0600ff"/><rect x="224" fill="#0c00ff"/><rect x="232" fill="#1200ff"/><rect x="240" fill="#1700ff"/><rect x="248" fill="#1d00ff"/><rect x="256" fill="#2300ff"/><rect x="264" fill="#2900ff"/><rect x="272" fill="#2f00ff"/><rect x="280" fill="#3500ff"/><rect x="288" fill="#3b00ff"/><rect x="296" fill="#4000ff"/><rect x="304" fill="#4600ff"/><rect x="312" fill="#4c00ff"/><rect x="320" fill="#5200ff"/><rect x="328" fill="#5800ff"/><rect x="336" fill="#5f00ff"/><rect x="344" fill="#6500ff"/><rect x="352" fill="#6b00ff"/><rect x="360" fill="#7100ff"/><rect x="368" fill="#70f"/></g>
<g transform="translate(1003 548)"><rect x="192" style="width:25px" fill="#00f"/><rect x="216" fill="#0500ff"/><rect x="224" fill="#0b00ff"/><rect x="232" fill="#1000ff"/><rect x="240" fill="#1600ff"/><rect x="248" fill="#1c00ff"/><rect x="256" fill="#2100ff"/><rect x="264" fill="#2700ff"/><rect x="272" fill="#2d00ff"/><rect x="280" fill="#30f"/><rect x="288" fill="#3800ff"/><rect x="296" fill="#3e00ff"/><rect x="304" fill="#40f"/><rect x="312" fill="#4a00ff"/><rect x="320" fill="#5000ff"/><rect x="328" fill="#5600ff"/><rect x="336" fill="#5c00ff"/><rect x="344" fill="#6200ff"/><rect x="352" fill="#6800ff"/><rect x="360" fill="#6e00ff"/></g>
<g transform="translate(1003 556)"><rect x="200" style="width:17px" fill="#00f"/><rect x="216" fill="#0400ff"/><rect x="224" fill="#0a00ff"/><rect x="232" fill="#0f00ff"/><rect x="240" fill="#1500ff"/><rect x="248" fill="#1a00ff"/><rect x="256" fill="#2000ff"/><rect x="264" fill="#2500ff"/><rect x="272" fill="#2b00ff"/><rect x="280" fill="#3100ff"/><rect x="288" fill="#3600ff"/><rect x="296" fill="#3c00ff"/><rect x="304" fill="#4200ff"/><rect x="312" fill="#4800ff"/><rect x="320" fill="#4d00ff"/><rect x="328" fill="#5300ff"/><rect x="336" fill="#5900ff"/><rect x="344" fill="#5f00ff"/><rect x="352" fill="#6400ff"/></g>
<g transform="translate(1003 564)"><rect x="208" fill="#00f"/><rect x="216" fill="#0300ff"/><rect x="224" fill="#0900ff"/><rect x="232" fill="#0e00ff"/><rect x="240" fill="#1300ff"/><rect x="248" fill="#1900ff"/><rect x="256" fill="#1e00ff"/><rect x="264" fill="#2400ff"/><rect x="272" fill="#2900ff"/><rect x="280" fill="#2f00ff"/><rect x="288" fill="#3400ff"/><rect x="296" fill="#3a00ff"/><rect x="304" fill="#4000ff"/><rect x="312" fill="#4500ff"/><rect x="320" fill="#4b00ff"/><rect x="328" fill="#5000ff"/><rect x="336" fill="#5600ff"/><rect x="344" fill="#5c00ff"/></g>
<g transform="translate(1003 572)"><rect x="216" fill="#0200ff"/><rect x="224" fill="#0800ff"/><rect x="232" fill="#0d00ff"/><rect x="240" fill="#1200ff"/><rect x="248" fill="#1800ff"/><rect x="256" fill="#1d00ff"/><rect x="264" fill="#20f"/><rect x="272" fill="#2800ff"/><rect x="280" fill="#2d00ff"/><rect x="288" fill="#30f"/><rect x="296" fill="#3800ff"/><rect x="304" fill="#3d00ff"/><rect x="312" fill="#4300ff"/><rect x="320" fill="#4800ff"/><rect x="328" fill="#4e00ff"/><rect x="336" fill="#5400ff"/></g>
<g transform="translate(1003 580)"><rect x="224" fill="#0700ff"/><rect x="232" fill="#0c00ff"/><rect x="240" fill="#10f"/><rect x="248" fill="#1600ff"/><rect x="256" fill="#1b00ff"/><rect x="264" fill="#2100ff"/><rect x="272" fill="#2600ff"/><rect x="280" fill="#2b00ff"/><rect x="288" fill="#3100ff"/><rect x="296" fill="#3600ff"/><rect x="304" fill="#3b00ff"/><rect x="312" fill="#4100ff"/><rect x="320" fill="#4600ff"/><rect x="328" fill="#4c00ff"/></g>
<g transform="translate(1003 588)"><rect x="240" fill="#1000ff"/><rect x="248" fill="#1500ff"/><rect x="256" fill="#1a00ff"/><rect x="264" fill="#1f00ff"/><rect x="272" fill="#2500ff"/><rect x="280" fill="#2a00ff"/><rect x="288" fill="#2f00ff"/><rect x="296" fill="#3400ff"/><rect x="304" fill="#3900ff"/><rect x="312" fill="#3f00ff"/><rect x="320" fill="#40f"/></g>
<g transform="translate(1003 596)"><rect x="248" fill="#1400ff"/><rect x="256" fill="#1900ff"/><rect x="264" fill="#1e00ff"/><rect x="272" fill="#2300ff"/><rect x="280" fill="#2800ff"/><rect x="288" fill="#2d00ff"/><rect x="296" fill="#3200ff"/><rect x="304" fill="#3800ff"/><rect x="312" fill="#3d00ff"/></g>
<g transform="translate(1003 604)"><rect x="256" fill="#1800ff"/><rect x="264" fill="#1d00ff"/><rect x="272" fill="#20f"/><rect x="280" fill="#2700ff"/><rect x="288" fill="#2c00ff"/><rect x="296" fill="#3100ff"/><rect x="304" fill="#3600ff"/></g>
<g transform="translate(1003 612)"><rect x="264" fill="#1b00ff"/><rect x="272" fill="#2000ff"/><rect x="280" fill="#2500ff"/><rect x="288" fill="#2a00ff"/><rect x="296" fill="#2f00ff"/></g>
</g>
<g clip-path="url(#tric)"><g class="cfi" filter="url(#bli)">
<g transform="translate(1143 144)"><rect x="0" style="width:9px" fill="#0f0"/><rect x="8" fill="#07ff00"/><rect x="12" fill="#10ff00"/><rect x="16" fill="#1aff00"/><rect x="20" fill="#24ff00"/><rect x="24" fill="#2eff00"/></g>
<g transform="translate(1143 148)"><rect x="0" style="width:9px" fill="#0f0"/><rect x="8" fill="#06ff00"/><rect x="12" fill="#0fff00"/><rect x="16" fill="#19ff00"/><rect x="20" fill="#23ff00"/><rect x="24" fill="#2dff00"/><rect x="28" fill="#37ff00"/><rect x="32" fill="#42ff00"/><rect x="36" fill="#4cff00"/><rect x="40" fill="#58ff00"/><rect x="44" fill="#63ff00"/><rect x="48" fill="#6eff00"/><rect x="52" fill="#7aff00"/><rect x="56" fill="#86ff00"/><rect x="60" fill="#93ff00"/><rect x="64" fill="#a0ff00"/><rect x="68" fill="#adff00"/></g>
<g transform="translate(1143 152)"><rect x="0" fill="#00ff04"/><rect x="4" fill="#00ff03"/><rect x="8" fill="#04ff02"/><rect x="12" fill="#0eff02"/><rect x="16" fill="#17ff01"/><rect x="20" fill="#21ff00"/><rect x="24" fill="#2cff00"/><rect x="28" fill="#36ff00"/><rect x="32" fill="#41ff00"/><rect x="36" fill="#4cff00"/><rect x="40" fill="#57ff00"/><rect x="44" fill="#62ff00"/><rect x="48" fill="#6eff00"/><rect x="52" fill="#7aff00"/><rect x="56" fill="#86ff00"/><rect x="60" fill="#93ff00"/><rect x="64" fill="#a0ff00"/><rect x="68" fill="#adff00"/><rect x="72" fill="#bf0"/><rect x="76" fill="#c9ff00"/><rect x="80" fill="#d7ff00"/><rect x="84" fill="#e6ff00"/><rect x="88" fill="#f5ff00"/><rect x="92" fill="#fffa00"/><rect x="96" fill="#ffec00"/><rect x="100" fill="#ffde00"/><rect x="104" fill="#ffd200"/><rect x="108" fill="#ffc700"/><rect x="112" fill="#ffbd00"/></g>
<g transform="translate(1143 156)"><rect x="0" fill="#00ff0d"/><rect x="4" fill="#00ff0c"/><rect x="8" fill="#03ff0b"/><rect x="12" fill="#0cff0a"/><rect x="16" fill="#16ff0a"/><rect x="20" fill="#20ff09"/><rect x="24" fill="#2bff08"/><rect x="28" fill="#35ff07"/><rect x="32" fill="#40ff07"/><rect x="36" fill="#4bff06"/><rect x="40" fill="#56ff05"/><rect x="44" fill="#62ff04"/><rect x="48" fill="#6eff03"/><rect x="52" fill="#7aff02"/><rect x="56" fill="#86ff01"/><rect x="60" fill="#93ff00"/><rect x="64" fill="#a0ff00"/><rect x="68" fill="#adff00"/><rect x="72" fill="#bf0"/><rect x="76" fill="#c9ff00"/><rect x="80" fill="#d8ff00"/><rect x="84" fill="#e7ff00"/><rect x="88" fill="#f6ff00"/><rect x="92" fill="#fff800"/><rect x="96" fill="#ffea00"/><rect x="100" fill="#fd0"/><rect x="104" fill="#ffd100"/><rect x="108" fill="#ffc600"/><rect x="112" fill="#fb0"/><rect x="116" fill="#ffb200"/><rect x="120" fill="#ffa900"/><rect x="124" fill="#ffa000"/><rect x="128" fill="#f90"/><rect x="132" fill="#ff9100"/><rect x="136" fill="#ff8b00"/><rect x="140" fill="#ff8400"/><rect x="144" fill="#ff7e00"/><rect x="148" fill="#ff7900"/><rect x="152" fill="#ff7300"/></g>
<g transform="translate(1143 160)"><rect x="0" style="width:9px" fill="#00ff15"/><rect x="8" fill="#01ff14"/><rect x="12" fill="#0bff14"/><rect x="16" fill="#15ff13"/><rect x="20" fill="#1fff12"/><rect x="24" fill="#29ff12"/><rect x="28" fill="#34ff11"/><rect x="32" fill="#3fff10"/><rect x="36" fill="#4aff10"/><rect x="40" fill="#56ff0f"/><rect x="44" fill="#61ff0e"/><rect x="48" fill="#6dff0d"/><rect x="52" fill="#79ff0d"/><rect x="56" fill="#86ff0c"/><rect x="60" fill="#93ff0b"/><rect x="64" fill="#a0ff0a"/><rect x="68" fill="#aeff09"/><rect x="72" fill="#bcff08"/><rect x="76" fill="#caff07"/><rect x="80" fill="#d9ff06"/><rect x="84" fill="#e8ff05"/><rect x="88" fill="#f7ff04"/><rect x="92" fill="#fff703"/><rect x="96" fill="#ffe802"/><rect x="100" fill="#ffdb01"/><rect x="104" fill="#ffcf00"/><rect x="108" fill="#ffc400"/><rect x="112" fill="#ffba00"/><rect x="116" fill="#ffb000"/><rect x="120" fill="#ffa700"/><rect x="124" fill="#ff9f00"/><rect x="128" fill="#ff9700"/><rect x="132" fill="#ff9000"/><rect x="136" fill="#ff8900"/><rect x="140" fill="#ff8300"/><rect x="144" fill="#ff7d00"/><rect x="148" fill="#f70"/><rect x="152" fill="#ff7200"/><rect x="156" fill="#ff6d00"/><rect x="160" fill="#ff6800"/><rect x="164" fill="#ff6300"/><rect x="168" fill="#ff5f00"/><rect x="172" fill="#ff5b00"/><rect x="176" fill="#ff5700"/><rect x="180" fill="#ff5300"/><rect x="184" fill="#ff5000"/><rect x="188" fill="#ff4c00"/><rect x="192" fill="#ff4900"/><rect x="196" fill="#ff4600"/></g>
<g transform="translate(1143 164)"><rect x="0" fill="#00ff1f"/><rect x="4" style="width:9px" fill="#00ff1e"/><rect x="12" fill="#09ff1d"/><rect x="16" fill="#13ff1c"/><rect x="20" fill="#1eff1c"/><rect x="24" fill="#28ff1b"/><rect x="28" fill="#33ff1b"/><rect x="32" fill="#3eff1a"/><rect x="36" fill="#49ff1a"/><rect x="40" fill="#55ff19"/><rect x="44" fill="#61ff18"/><rect x="48" fill="#6dff18"/><rect x="52" fill="#79ff17"/><rect x="56" fill="#86ff16"/><rect x="60" fill="#93ff16"/><rect x="64" fill="#a0ff15"/><rect x="68" fill="#aeff14"/><rect x="72" fill="#bcff13"/><rect x="76" fill="#cbff13"/><rect x="80" fill="#daff12"/><rect x="84" fill="#e9ff11"/><rect x="88" fill="#f9ff10"/><rect x="92" fill="#fff50f"/><rect x="96" fill="#ffe70d"/><rect x="100" fill="#ffda0b"/><rect x="104" fill="#ffcd0a"/><rect x="108" fill="#ffc209"/><rect x="112" fill="#ffb808"/><rect x="116" fill="#ffae06"/><rect x="120" fill="#ffa605"/><rect x="124" fill="#ff9d04"/><rect x="128" fill="#ff9604"/><rect x="132" fill="#ff8e03"/><rect x="136" fill="#ff8802"/><rect x="140" fill="#ff8101"/><rect x="144" fill="#ff7b01"/><rect x="148" fill="#ff7600"/><rect x="152" fill="#ff7000"/><rect x="156" fill="#ff6b00"/><rect x="160" fill="#ff6700"/><rect x="164" fill="#ff6200"/><rect x="168" fill="#ff5e00"/><rect x="172" fill="#ff5a00"/><rect x="176" fill="#ff5600"/><rect x="180" fill="#ff5200"/><rect x="184" fill="#ff4e00"/><rect x="188" fill="#ff4b00"/><rect x="192" fill="#ff4800"/><rect x="196" fill="#ff4500"/><rect x="200" fill="#ff4200"/><rect x="204" fill="#ff3f00"/><rect x="208" fill="#ff3c00"/><rect x="212" fill="#ff3a00"/><rect x="216" fill="#ff3700"/><rect x="220" fill="#ff3500"/><rect x="224" fill="#ff3200"/><rect x="228" fill="#ff3000"/><rect x="232" fill="#ff2e00"/><rect x="236" fill="#ff2c00"/><rect x="240" fill="#ff2a00"/></g>
<g transform="translate(1143 168)"><rect x="0" fill="#00ff28"/><rect x="4" style="width:9px" fill="#00ff27"/><rect x="12" fill="#08ff27"/><rect x="16" fill="#12ff26"/><rect x="20" fill="#1cff26"/><rect x="24" fill="#27ff25"/><rect x="28" fill="#32ff25"/><rect x="32" fill="#3dff24"/><rect x="36" fill="#48ff24"/><rect x="40" fill="#54ff23"/><rect x="44" fill="#60ff23"/><rect x="48" fill="#6cff22"/><rect x="52" fill="#79ff22"/><rect x="56" fill="#86ff21"/><rect x="60" fill="#93ff21"/><rect x="64" fill="#a1ff20"/><rect x="68" fill="#aeff1f"/><rect x="72" fill="#bdff1f"/><rect x="76" fill="#ccff1e"/><rect x="80" fill="#dbff1d"/><rect x="84" fill="#eaff1d"/><rect x="88" fill="#faff1c"/><rect x="92" fill="#fff41a"/><rect x="96" fill="#ffe518"/><rect x="100" fill="#ffd816"/><rect x="104" fill="#ffcc14"/><rect x="108" fill="#ffc112"/><rect x="112" fill="#ffb611"/><rect x="116" fill="#ffad0f"/><rect x="120" fill="#ffa40e"/><rect x="124" fill="#ff9c0d"/><rect x="128" fill="#ff940c"/><rect x="132" fill="#ff8d0a"/><rect x="136" fill="#ff8609"/><rect x="140" fill="#ff8008"/><rect x="144" fill="#ff7a08"/><rect x="148" fill="#ff7407"/><rect x="152" fill="#ff6f06"/><rect x="156" fill="#ff6a05"/><rect x="160" fill="#ff6504"/><rect x="164" fill="#ff6104"/><rect x="168" fill="#ff5c03"/><rect x="172" fill="#ff5802"/><rect x="176" fill="#ff5402"/><rect x="180" fill="#ff5101"/><rect x="184" fill="#ff4d01"/><rect x="188" fill="#ff4a00"/><rect x="192" fill="#ff4700"/><rect x="196" fill="#ff4300"/><rect x="200" fill="#ff4100"/><rect x="204" fill="#ff3e00"/><rect x="208" fill="#ff3b00"/><rect x="212" fill="#ff3800"/><rect x="216" fill="#ff3600"/><rect x="220" fill="#f30"/><rect x="224" fill="#ff3100"/><rect x="228" fill="#ff2f00"/><rect x="232" fill="#ff2d00"/><rect x="236" fill="#ff2b00"/><rect x="240" fill="#ff2900"/><rect x="244" fill="#ff2700"/><rect x="248" fill="#ff2500"/><rect x="252" fill="#ff2300"/><rect x="256" fill="#ff2100"/><rect x="260" fill="#ff2000"/><rect x="264" fill="#ff1e00"/><rect x="268" fill="#ff1c00"/><rect x="272" fill="#ff1b00"/><rect x="276" fill="#ff1900"/><rect x="280" fill="#ff1800"/></g>
<g transform="translate(1143 172)"><rect x="4" style="width:9px" fill="#00ff31"/><rect x="12" fill="#06ff30"/><rect x="16" fill="#11ff30"/><rect x="20" fill="#1bff30"/><rect x="24" fill="#26ff2f"/><rect x="28" fill="#31ff2f"/><rect x="32" fill="#3cff2f"/><rect x="36" fill="#48ff2e"/><rect x="40" fill="#53ff2e"/><rect x="44" fill="#5fff2d"/><rect x="48" fill="#6cff2d"/><rect x="52" fill="#79ff2d"/><rect x="56" fill="#86ff2c"/><rect x="60" fill="#93ff2c"/><rect x="64" fill="#a1ff2b"/><rect x="68" fill="#afff2b"/><rect x="72" fill="#bdff2a"/><rect x="76" fill="#ccff2a"/><rect x="80" fill="#dcff29"/><rect x="84" fill="#ebff29"/><rect x="88" fill="#fcff28"/><rect x="92" fill="#fff226"/><rect x="96" fill="#ffe423"/><rect x="100" fill="#ffd621"/><rect x="104" fill="#ffca1e"/><rect x="108" fill="#ffbf1c"/><rect x="112" fill="#ffb51a"/><rect x="116" fill="#ffab18"/><rect x="120" fill="#ffa217"/><rect x="124" fill="#ff9a15"/><rect x="128" fill="#ff9214"/><rect x="132" fill="#ff8b12"/><rect x="136" fill="#ff8411"/><rect x="140" fill="#ff7e10"/><rect x="144" fill="#ff780f"/><rect x="148" fill="#ff730e"/><rect x="152" fill="#ff6d0d"/><rect x="156" fill="#ff680c"/><rect x="160" fill="#ff640b"/><rect x="164" fill="#ff5f0a"/><rect x="168" fill="#ff5b09"/><rect x="172" fill="#ff5708"/><rect x="176" fill="#ff5308"/><rect x="180" fill="#ff4f07"/><rect x="184" fill="#ff4c06"/><rect x="188" fill="#ff4806"/><rect x="192" fill="#ff4505"/><rect x="196" fill="#ff4204"/><rect x="200" fill="#ff3f04"/><rect x="204" fill="#ff3c03"/><rect x="208" fill="#ff3a03"/><rect x="212" fill="#ff3702"/><rect x="216" fill="#ff3502"/><rect x="220" fill="#ff3201"/><rect x="224" fill="#ff3001"/><rect x="228" fill="#ff2e00"/><rect x="232" fill="#ff2c00"/><rect x="236" fill="#ff2900"/><rect x="240" fill="#ff2700"/><rect x="244" fill="#ff2600"/><rect x="248" fill="#ff2400"/><rect x="252" fill="#f20"/><rect x="256" fill="#ff2000"/><rect x="260" fill="#ff1e00"/><rect x="264" fill="#ff1d00"/><rect x="268" fill="#ff1b00"/><rect x="272" fill="#ff1a00"/><rect x="276" fill="#ff1800"/><rect x="280" fill="#ff1700"/><rect x="284" fill="#ff1500"/><rect x="288" fill="#ff1400"/><rect x="292" fill="#ff1300"/><rect x="296" fill="#f10"/><rect x="300" fill="#ff1000"/><rect x="304" fill="#ff0f00"/><rect x="308" fill="#ff0e00"/><rect x="312" fill="#ff0d00"/><rect x="316" fill="#ff0b00"/><rect x="320" fill="#ff0a00"/><rect x="324" fill="#ff0900"/></g>
<g transform="translate(1143 176)"><rect x="4" style="width:9px" fill="#00ff3b"/><rect x="12" fill="#05ff3a"/><rect x="16" fill="#0fff3a"/><rect x="20" fill="#1aff3a"/><rect x="24" fill="#25ff3a"/><rect x="28" fill="#30ff39"/><rect x="32" fill="#3bff39"/><rect x="36" fill="#47ff39"/><rect x="40" fill="#53ff39"/><rect x="44" fill="#5fff38"/><rect x="48" fill="#6bff38"/><rect x="52" fill="#78ff38"/><rect x="56" fill="#85ff38"/><rect x="60" fill="#93ff37"/><rect x="64" fill="#a1ff37"/><rect x="68" fill="#afff37"/><rect x="72" fill="#beff36"/><rect x="76" fill="#cdff36"/><rect x="80" fill="#ddff36"/><rect x="84" fill="#edff35"/><rect x="88" fill="#fdff35"/><rect x="92" fill="#fff132"/><rect x="96" fill="#ffe22e"/><rect x="100" fill="#ffd52b"/><rect x="104" fill="#ffc929"/><rect x="108" fill="#ffbd26"/><rect x="112" fill="#ffb324"/><rect x="116" fill="#ffa921"/><rect x="120" fill="#ffa11f"/><rect x="124" fill="#ff981e"/><rect x="128" fill="#ff911c"/><rect x="132" fill="#ff8a1a"/><rect x="136" fill="#ff8319"/><rect x="140" fill="#ff7d17"/><rect x="144" fill="#ff7716"/><rect x="148" fill="#ff7115"/><rect x="152" fill="#ff6c13"/><rect x="156" fill="#ff6712"/><rect x="160" fill="#ff6211"/><rect x="164" fill="#ff5e10"/><rect x="168" fill="#ff590f"/><rect x="172" fill="#ff550e"/><rect x="176" fill="#ff520d"/><rect x="180" fill="#ff4e0c"/><rect x="184" fill="#ff4a0c"/><rect x="188" fill="#ff470b"/><rect x="192" fill="#ff440a"/><rect x="196" fill="#ff410a"/><rect x="200" fill="#ff3e09"/><rect x="204" fill="#ff3b08"/><rect x="208" fill="#ff3808"/><rect x="212" fill="#ff3607"/><rect x="216" fill="#ff3306"/><rect x="220" fill="#ff3106"/><rect x="224" fill="#ff2f05"/><rect x="228" fill="#ff2d05"/><rect x="232" fill="#ff2a04"/><rect x="236" fill="#ff2804"/><rect x="240" fill="#ff2603"/><rect x="244" fill="#ff2403"/><rect x="248" fill="#ff2303"/><rect x="252" fill="#ff2102"/><rect x="256" fill="#ff1f02"/><rect x="260" fill="#ff1d01"/><rect x="264" fill="#ff1c01"/><rect x="268" fill="#ff1a01"/><rect x="272" fill="#ff1900"/><rect x="276" fill="#ff1700"/><rect x="280" fill="#ff1600"/><rect x="284" fill="#ff1400"/><rect x="288" fill="#ff1300"/><rect x="292" fill="#ff1200"/><rect x="296" fill="#ff1000"/><rect x="300" fill="#ff0f00"/><rect x="304" fill="#ff0e00"/><rect x="308" fill="#ff0d00"/><rect x="312" fill="#ff0c00"/><rect x="316" fill="#ff0b00"/><rect x="320" fill="#ff0900"/><rect x="324" fill="#ff0800"/><rect x="328" fill="#ff0700"/><rect x="332" fill="#ff0600"/><rect x="336" fill="#ff0500"/><rect x="340" fill="#ff0400"/><rect x="344" style="width:9px" fill="#ff0300"/><rect x="352" fill="#ff0200"/><rect x="356" fill="#ff0100"/></g>
<g transform="translate(1143 180)"><rect x="4" style="width:9px" fill="#00ff45"/><rect x="12" fill="#03ff45"/><rect x="16" fill="#0eff44"/><rect x="20" fill="#18ff44"/><rect x="24" fill="#23ff44"/><rect x="28" fill="#2eff44"/><rect x="32" fill="#3aff44"/><rect x="36" fill="#46ff44"/><rect x="40" fill="#52ff44"/><rect x="44" fill="#5eff44"/><rect x="48" fill="#6bff44"/><rect x="52" fill="#78ff43"/><rect x="56" fill="#85ff43"/><rect x="60" fill="#93ff43"/><rect x="64" fill="#a1ff43"/><rect x="68" fill="#b0ff43"/><rect x="72" fill="#bfff43"/><rect x="76" fill="#ceff43"/><rect x="80" fill="#deff42"/><rect x="84" fill="#eeff42"/><rect x="88" fill="#ffff42"/><rect x="92" fill="#ffef3e"/><rect x="96" fill="#ffe03a"/><rect x="100" fill="#ffd336"/><rect x="104" fill="#ffc733"/><rect x="108" fill="#ffbc30"/><rect x="112" fill="#ffb12d"/><rect x="116" fill="#ffa82b"/><rect x="120" fill="#ff9f28"/><rect x="124" fill="#ff9726"/><rect x="128" fill="#ff8f24"/><rect x="132" fill="#f82"/><rect x="136" fill="#ff8120"/><rect x="140" fill="#ff7b1f"/><rect x="144" fill="#ff751d"/><rect x="148" fill="#ff6f1c"/><rect x="152" fill="#ff6a1a"/><rect x="156" fill="#ff6519"/><rect x="160" fill="#ff6118"/><rect x="164" fill="#ff5c16"/><rect x="168" fill="#ff5815"/><rect x="172" fill="#ff5414"/><rect x="176" fill="#ff5013"/><rect x="180" fill="#ff4c12"/><rect x="184" fill="#ff4911"/><rect x="188" fill="#ff4610"/><rect x="192" fill="#ff430f"/><rect x="196" fill="#ff400f"/><rect x="200" fill="#ff3d0e"/><rect x="204" fill="#ff3a0d"/><rect x="208" fill="#ff370c"/><rect x="212" fill="#ff350c"/><rect x="216" fill="#ff320b"/><rect x="220" fill="#ff300a"/><rect x="224" fill="#ff2e0a"/><rect x="228" fill="#ff2b09"/><rect x="232" fill="#ff2909"/><rect x="236" fill="#ff2708"/><rect x="240" fill="#ff2508"/><rect x="244" fill="#ff2307"/><rect x="248" fill="#ff2107"/><rect x="252" fill="#ff2006"/><rect x="256" fill="#ff1e06"/><rect x="260" fill="#ff1c05"/><rect x="264" fill="#ff1b05"/><rect x="268" fill="#ff1904"/><rect x="272" fill="#ff1804"/><rect x="276" fill="#ff1604"/><rect x="280" fill="#ff1503"/><rect x="284" fill="#ff1303"/><rect x="288" fill="#ff1202"/><rect x="292" fill="#ff1102"/><rect x="296" fill="#ff0f02"/><rect x="300" fill="#ff0e01"/><rect x="304" fill="#ff0d01"/><rect x="308" fill="#ff0c01"/><rect x="312" fill="#ff0b00"/><rect x="316" fill="#ff0a00"/><rect x="320" fill="#ff0900"/><rect x="324" fill="#ff0700"/><rect x="328" fill="#ff0600"/><rect x="332" fill="#ff0500"/><rect x="336" style="width:9px" fill="#ff0400"/><rect x="344" fill="#ff0300"/><rect x="348" fill="#ff0200"/><rect x="352" fill="#ff0100"/><rect x="356" fill="#f00"/></g>
<g transform="translate(1143 184)"><rect x="4" style="width:9px" fill="#00ff4f"/><rect x="12" fill="#02ff4f"/><rect x="16" fill="#0cff4f"/><rect x="20" fill="#17ff4f"/><rect x="24" fill="#22ff4f"/><rect x="28" fill="#2dff4f"/><rect x="32" fill="#39ff4f"/><rect x="36" fill="#45ff4f"/><rect x="40" fill="#51ff4f"/><rect x="44" fill="#5dff4f"/><rect x="48" fill="#6aff4f"/><rect x="52" fill="#78ff4f"/><rect x="56" fill="#85ff4f"/><rect x="60" fill="#93ff4f"/><rect x="64" fill="#a1ff4f"/><rect x="68" fill="#b0ff4f"/><rect x="72" fill="#bfff4f"/><rect x="76" fill="#cfff4f"/><rect x="80" fill="#dfff50"/><rect x="84" fill="#efff50"/><rect x="88" fill="#fffe4f"/><rect x="92" fill="#ffed4a"/><rect x="96" fill="#ffdf46"/><rect x="100" fill="#ffd141"/><rect x="104" fill="#ffc53e"/><rect x="108" fill="#ffba3a"/><rect x="112" fill="#ffb037"/><rect x="116" fill="#ffa634"/><rect x="120" fill="#ff9d31"/><rect x="124" fill="#ff952f"/><rect x="128" fill="#ff8d2c"/><rect x="132" fill="#ff862a"/><rect x="136" fill="#ff8028"/><rect x="140" fill="#ff7926"/><rect x="144" fill="#ff7324"/><rect x="148" fill="#ff6e23"/><rect x="152" fill="#ff6921"/><rect x="156" fill="#ff641f"/><rect x="160" fill="#ff5f1e"/><rect x="164" fill="#ff5b1d"/><rect x="168" fill="#ff561b"/><rect x="172" fill="#ff521a"/><rect x="176" fill="#ff4f19"/><rect x="180" fill="#ff4b18"/><rect x="184" fill="#ff4817"/><rect x="188" fill="#ff4416"/><rect x="192" fill="#ff4115"/><rect x="196" fill="#ff3e14"/><rect x="200" fill="#ff3b13"/><rect x="204" fill="#ff3912"/><rect x="208" fill="#ff3611"/><rect x="212" fill="#ff3310"/><rect x="216" fill="#ff3110"/><rect x="220" fill="#ff2f0f"/><rect x="224" fill="#ff2c0e"/><rect x="228" fill="#ff2a0e"/><rect x="232" fill="#ff280d"/><rect x="236" fill="#ff260c"/><rect x="240" fill="#ff240c"/><rect x="244" fill="#ff220b"/><rect x="248" fill="#ff200b"/><rect x="252" fill="#ff1f0a"/><rect x="256" fill="#ff1d0a"/><rect x="260" fill="#ff1b09"/><rect x="264" fill="#ff1a09"/><rect x="268" fill="#ff1808"/><rect x="272" fill="#ff1708"/><rect x="276" fill="#ff1507"/><rect x="280" fill="#ff1407"/><rect x="284" fill="#ff1206"/><rect x="288" fill="#ff1106"/><rect x="292" fill="#ff1005"/><rect x="296" fill="#ff0e05"/><rect x="300" fill="#ff0d05"/><rect x="304" fill="#ff0c04"/><rect x="308" fill="#ff0b04"/><rect x="312" fill="#ff0a04"/><rect x="316" fill="#ff0903"/><rect x="320" fill="#ff0803"/><rect x="324" fill="#ff0703"/><rect x="328" fill="#ff0602"/><rect x="332" fill="#ff0502"/><rect x="336" fill="#ff0402"/><rect x="340" fill="#ff0301"/><rect x="344" fill="#ff0201"/><rect x="348" fill="#ff0101"/><rect x="352" fill="#ff0001"/><rect x="356" fill="#f00"/></g>
<g transform="translate(1143 188)"><rect x="4" fill="#00ff59"/><rect x="8" style="width:9px" fill="#00ff5a"/><rect x="16" fill="#0aff5a"/><rect x="20" fill="#15ff5a"/><rect x="24" fill="#21ff5a"/><rect x="28" fill="#2cff5a"/><rect x="32" fill="#38ff5b"/><rect x="36" fill="#44ff5b"/><rect x="40" fill="#50ff5b"/><rect x="44" fill="#5dff5b"/><rect x="48" fill="#6aff5b"/><rect x="52" fill="#77ff5b"/><rect x="56" fill="#85ff5c"/><rect x="60" fill="#93ff5c"/><rect x="64" fill="#a2ff5c"/><rect x="68" fill="#b0ff5c"/><rect x="72" fill="#c0ff5c"/><rect x="76" fill="#d0ff5d"/><rect x="80" fill="#e0ff5d"/><rect x="84" fill="#f1ff5d"/><rect x="88" fill="#fffc5c"/><rect x="92" fill="#ffec57"/><rect x="96" fill="#ffdd51"/><rect x="100" fill="#ffd04d"/><rect x="104" fill="#ffc348"/><rect x="108" fill="#ffb844"/><rect x="112" fill="#ffae41"/><rect x="116" fill="#ffa43d"/><rect x="120" fill="#ff9b3a"/><rect x="124" fill="#ff9337"/><rect x="128" fill="#ff8c35"/><rect x="132" fill="#ff8532"/><rect x="136" fill="#ff7e30"/><rect x="140" fill="#ff782e"/><rect x="144" fill="#ff722c"/><rect x="148" fill="#ff6c2a"/><rect x="152" fill="#ff6728"/><rect x="156" fill="#ff6226"/><rect x="160" fill="#ff5e25"/><rect x="164" fill="#ff5923"/><rect x="168" fill="#f52"/><rect x="172" fill="#ff5120"/><rect x="176" fill="#ff4d1f"/><rect x="180" fill="#ff4a1e"/><rect x="184" fill="#ff461c"/><rect x="188" fill="#ff431b"/><rect x="192" fill="#ff401a"/><rect x="196" fill="#ff3d19"/><rect x="200" fill="#ff3a18"/><rect x="204" fill="#ff3717"/><rect x="208" fill="#ff3516"/><rect x="212" fill="#ff3215"/><rect x="216" fill="#ff3014"/><rect x="220" fill="#ff2d14"/><rect x="224" fill="#ff2b13"/><rect x="228" fill="#ff2912"/><rect x="232" fill="#ff2711"/><rect x="236" fill="#ff2511"/><rect x="240" fill="#ff2310"/><rect x="244" fill="#ff210f"/><rect x="248" fill="#ff1f0f"/><rect x="252" fill="#ff1d0e"/><rect x="256" fill="#ff1c0d"/><rect x="260" fill="#ff1a0d"/><rect x="264" fill="#ff190c"/><rect x="268" fill="#ff170c"/><rect x="272" fill="#ff160b"/><rect x="276" fill="#ff140b"/><rect x="280" fill="#ff130a"/><rect x="284" fill="#ff110a"/><rect x="288" fill="#ff1009"/><rect x="292" fill="#ff0f09"/><rect x="296" fill="#ff0d08"/><rect x="300" fill="#ff0c08"/><rect x="304" fill="#ff0b08"/><rect x="308" fill="#ff0a07"/><rect x="312" fill="#ff0907"/><rect x="316" fill="#ff0806"/><rect x="320" fill="#ff0706"/><rect x="324" fill="#ff0606"/><rect x="328" fill="#ff0505"/><rect x="332" fill="#ff0405"/><rect x="336" fill="#ff0305"/><rect x="340" fill="#ff0204"/><rect x="344" fill="#ff0104"/><rect x="348" fill="#ff0004"/><rect x="352" style="width:9px" fill="#ff0003"/></g>
<g transform="translate(1143 192)"><rect x="4" style="width:9px" fill="#00ff64"/><rect x="12" fill="#00ff65"/><rect x="16" fill="#09ff65"/><rect x="20" fill="#14ff65"/><rect x="24" fill="#1fff66"/><rect x="28" fill="#2bff66"/><rect x="32" fill="#37ff66"/><rect x="36" fill="#43ff66"/><rect x="40" fill="#4fff67"/><rect x="44" fill="#5cff67"/><rect x="48" fill="#69ff68"/><rect x="52" fill="#77ff68"/><rect x="56" fill="#85ff68"/><rect x="60" fill="#93ff69"/><rect x="64" fill="#a2ff69"/><rect x="68" fill="#b1ff69"/><rect x="72" fill="#c1ff6a"/><rect x="76" fill="#d1ff6a"/><rect x="80" fill="#e1ff6b"/><rect x="84" fill="#f2ff6b"/><rect x="88" fill="#fffa6a"/><rect x="92" fill="#ffea63"/><rect x="96" fill="#ffdb5d"/><rect x="100" fill="#ffce58"/><rect x="104" fill="#ffc253"/><rect x="108" fill="#ffb64f"/><rect x="112" fill="#ffac4b"/><rect x="116" fill="#ffa347"/><rect x="120" fill="#ff9a44"/><rect x="124" fill="#ff9240"/><rect x="128" fill="#ff8a3d"/><rect x="132" fill="#ff833b"/><rect x="136" fill="#ff7c38"/><rect x="140" fill="#ff7635"/><rect x="144" fill="#ff7033"/><rect x="148" fill="#ff6b31"/><rect x="152" fill="#ff662f"/><rect x="156" fill="#ff612d"/><rect x="160" fill="#ff5c2b"/><rect x="164" fill="#ff5829"/><rect x="168" fill="#ff5328"/><rect x="172" fill="#ff5026"/><rect x="176" fill="#ff4c25"/><rect x="180" fill="#ff4823"/><rect x="184" fill="#ff4522"/><rect x="188" fill="#ff4221"/><rect x="192" fill="#ff3e20"/><rect x="196" fill="#ff3b1e"/><rect x="200" fill="#ff391d"/><rect x="204" fill="#ff361c"/><rect x="208" fill="#ff331b"/><rect x="212" fill="#ff311a"/><rect x="216" fill="#ff2e19"/><rect x="220" fill="#ff2c18"/><rect x="224" fill="#ff2a17"/><rect x="228" fill="#ff2817"/><rect x="232" fill="#ff2616"/><rect x="236" fill="#ff2415"/><rect x="240" fill="#ff2214"/><rect x="244" fill="#ff2013"/><rect x="248" fill="#ff1e13"/><rect x="252" fill="#ff1c12"/><rect x="256" fill="#ff1b11"/><rect x="260" fill="#ff1911"/><rect x="264" fill="#ff1710"/><rect x="268" fill="#ff1610"/><rect x="272" fill="#ff140f"/><rect x="276" fill="#ff130e"/><rect x="280" fill="#ff120e"/><rect x="284" fill="#ff100d"/><rect x="288" fill="#ff0f0d"/><rect x="292" fill="#ff0e0c"/><rect x="296" fill="#ff0c0c"/><rect x="300" fill="#ff0b0b"/><rect x="304" fill="#ff0a0b"/><rect x="308" fill="#ff090a"/><rect x="312" fill="#ff080a"/><rect x="316" fill="#ff070a"/><rect x="320" fill="#ff0609"/><rect x="324" fill="#ff0509"/><rect x="328" fill="#ff0408"/><rect x="332" fill="#ff0308"/><rect x="336" fill="#ff0208"/><rect x="340" fill="#ff0107"/><rect x="344" style="width:9px" fill="#ff0007"/><rect x="352" style="width:9px" fill="#ff0006"/></g>
<g transform="translate(1143 196)"><rect x="8" fill="#00ff6f"/><rect x="12" fill="#00ff70"/><rect x="16" fill="#07ff70"/><rect x="20" fill="#12ff71"/><rect x="24" fill="#1eff71"/><rect x="28" fill="#29ff72"/><rect x="32" fill="#35ff72"/><rect x="36" fill="#42ff73"/><rect x="40" fill="#4eff73"/><rect x="44" fill="#5bff74"/><rect x="48" fill="#69ff74"/><rect x="52" fill="#76ff75"/><rect x="56" fill="#85ff75"/><rect x="60" fill="#93ff76"/><rect x="64" fill="#a2ff76"/><rect x="68" fill="#b1ff77"/><rect x="72" fill="#c1ff78"/><rect x="76" fill="#d1ff78"/><rect x="80" fill="#e2ff79"/><rect x="84" fill="#f4ff7a"/><rect x="88" fill="#fff977"/><rect x="92" fill="#ffe870"/><rect x="96" fill="#ffd96a"/><rect x="100" fill="#ffcc64"/><rect x="104" fill="#ffc05e"/><rect x="108" fill="#ffb559"/><rect x="112" fill="#fa5"/><rect x="116" fill="#ffa151"/><rect x="120" fill="#ff984d"/><rect x="124" fill="#ff9049"/><rect x="128" fill="#ff8846"/><rect x="132" fill="#ff8143"/><rect x="136" fill="#ff7b40"/><rect x="140" fill="#ff743d"/><rect x="144" fill="#ff6f3b"/><rect x="148" fill="#ff6938"/><rect x="152" fill="#ff6436"/><rect x="156" fill="#ff5f34"/><rect x="160" fill="#ff5a32"/><rect x="164" fill="#ff5630"/><rect x="168" fill="#ff522e"/><rect x="172" fill="#ff4e2c"/><rect x="176" fill="#ff4a2b"/><rect x="180" fill="#ff4729"/><rect x="184" fill="#ff4328"/><rect x="188" fill="#ff4026"/><rect x="192" fill="#ff3d25"/><rect x="196" fill="#ff3a24"/><rect x="200" fill="#ff3722"/><rect x="204" fill="#ff3521"/><rect x="208" fill="#ff3220"/><rect x="212" fill="#ff2f1f"/><rect x="216" fill="#ff2d1e"/><rect x="220" fill="#ff2b1d"/><rect x="224" fill="#ff291c"/><rect x="228" fill="#ff261b"/><rect x="232" fill="#ff241a"/><rect x="236" fill="#ff2219"/><rect x="240" fill="#ff2118"/><rect x="244" fill="#ff1f18"/><rect x="248" fill="#ff1d17"/><rect x="252" fill="#ff1b16"/><rect x="256" fill="#ff1a15"/><rect x="260" fill="#ff1815"/><rect x="264" fill="#ff1614"/><rect x="268" fill="#ff1513"/><rect x="272" fill="#ff1313"/><rect x="276" fill="#ff1212"/><rect x="280" fill="#f11"/><rect x="284" fill="#ff0f11"/><rect x="288" fill="#ff0e10"/><rect x="292" fill="#ff0d10"/><rect x="296" fill="#ff0c0f"/><rect x="300" fill="#ff0a0f"/><rect x="304" fill="#ff090e"/><rect x="308" fill="#ff080e"/><rect x="312" fill="#ff070d"/><rect x="316" fill="#ff060d"/><rect x="320" fill="#ff050c"/><rect x="324" fill="#ff040c"/><rect x="328" fill="#ff030b"/><rect x="332" fill="#ff020b"/><rect x="336" fill="#ff010b"/><rect x="340" style="width:9px" fill="#ff000a"/><rect x="348" style="width:13px" fill="#ff0009"/></g>
<g transform="translate(1143 200)"><rect x="8" style="width:9px" fill="#00ff7b"/><rect x="16" fill="#05ff7c"/><rect x="20" fill="#11ff7d"/><rect x="24" fill="#1cff7d"/><rect x="28" fill="#28ff7e"/><rect x="32" fill="#34ff7e"/><rect x="36" fill="#41ff7f"/><rect x="40" fill="#4eff80"/><rect x="44" fill="#5bff80"/><rect x="48" fill="#68ff81"/><rect x="52" fill="#76ff82"/><rect x="56" fill="#84ff83"/><rect x="60" fill="#93ff83"/><rect x="64" fill="#a2ff84"/><rect x="68" fill="#b2ff85"/><rect x="72" fill="#c2ff86"/><rect x="76" fill="#d2ff87"/><rect x="80" fill="#e4ff88"/><rect x="84" fill="#f5ff89"/><rect x="88" fill="#fff785"/><rect x="92" fill="#ffe77d"/><rect x="96" fill="#ffd876"/><rect x="100" fill="#ffca70"/><rect x="104" fill="#ffbe6a"/><rect x="108" fill="#ffb364"/><rect x="112" fill="#ffa85f"/><rect x="116" fill="#ff9f5b"/><rect x="120" fill="#ff9656"/><rect x="124" fill="#ff8e52"/><rect x="128" fill="#ff864f"/><rect x="132" fill="#ff7f4b"/><rect x="136" fill="#ff7948"/><rect x="140" fill="#ff7345"/><rect x="144" fill="#ff6d42"/><rect x="148" fill="#ff6740"/><rect x="152" fill="#ff623d"/><rect x="156" fill="#ff5d3b"/><rect x="160" fill="#ff5939"/><rect x="164" fill="#ff5536"/><rect x="168" fill="#ff5034"/><rect x="172" fill="#ff4d33"/><rect x="176" fill="#ff4931"/><rect x="180" fill="#ff452f"/><rect x="184" fill="#ff422d"/><rect x="188" fill="#ff3f2c"/><rect x="192" fill="#ff3c2a"/><rect x="196" fill="#ff3929"/><rect x="200" fill="#ff3628"/><rect x="204" fill="#ff3326"/><rect x="208" fill="#ff3125"/><rect x="212" fill="#ff2e24"/><rect x="216" fill="#ff2c23"/><rect x="220" fill="#ff2a22"/><rect x="224" fill="#ff2721"/><rect x="228" fill="#ff2520"/><rect x="232" fill="#ff231f"/><rect x="236" fill="#ff211e"/><rect x="240" fill="#ff1f1d"/><rect x="244" fill="#ff1e1c"/><rect x="248" fill="#ff1c1b"/><rect x="252" fill="#ff1a1a"/><rect x="256" fill="#ff1819"/><rect x="260" fill="#ff1719"/><rect x="264" fill="#ff1518"/><rect x="268" fill="#ff1417"/><rect x="272" fill="#ff1216"/><rect x="276" fill="#ff1116"/><rect x="280" fill="#ff1015"/><rect x="284" fill="#ff0e14"/><rect x="288" fill="#ff0d14"/><rect x="292" fill="#ff0c13"/><rect x="296" fill="#ff0b13"/><rect x="300" fill="#ff0912"/><rect x="304" fill="#ff0811"/><rect x="308" fill="#ff0711"/><rect x="312" fill="#ff0610"/><rect x="316" fill="#ff0510"/><rect x="320" fill="#ff040f"/><rect x="324" fill="#ff030f"/><rect x="328" fill="#ff020e"/><rect x="332" fill="#ff010e"/><rect x="336" style="width:13px" fill="#ff000d"/><rect x="348" style="width:9px" fill="#ff000c"/></g>
<g transform="translate(1143 204)"><rect x="8" fill="#00ff86"/><rect x="12" fill="#00ff87"/><rect x="16" fill="#04ff88"/><rect x="20" fill="#0fff89"/><rect x="24" fill="#1bff89"/><rect x="28" fill="#27ff8a"/><rect x="32" fill="#33ff8b"/><rect x="36" fill="#40ff8c"/><rect x="40" fill="#4dff8d"/><rect x="44" fill="#5aff8e"/><rect x="48" fill="#68ff8e"/><rect x="52" fill="#76ff8f"/><rect x="56" fill="#84ff90"/><rect x="60" fill="#93ff91"/><rect x="64" fill="#a2ff92"/><rect x="68" fill="#b2ff93"/><rect x="72" fill="#c3ff95"/><rect x="76" fill="#d3ff96"/><rect x="80" fill="#e5ff97"/><rect x="84" fill="#f7ff98"/><rect x="88" fill="#fff593"/><rect x="92" fill="#ffe58b"/><rect x="96" fill="#ffd683"/><rect x="100" fill="#ffc87b"/><rect x="104" fill="#ffbc75"/><rect x="108" fill="#ffb16f"/><rect x="112" fill="#ffa76a"/><rect x="116" fill="#ff9d64"/><rect x="120" fill="#ff9460"/><rect x="124" fill="#ff8c5b"/><rect x="128" fill="#ff8557"/><rect x="132" fill="#ff7e54"/><rect x="136" fill="#ff7750"/><rect x="140" fill="#ff714d"/><rect x="144" fill="#ff6b4a"/><rect x="148" fill="#ff6647"/><rect x="152" fill="#ff6144"/><rect x="156" fill="#ff5c42"/><rect x="160" fill="#ff573f"/><rect x="164" fill="#ff533d"/><rect x="168" fill="#ff4f3b"/><rect x="172" fill="#ff4b39"/><rect x="176" fill="#ff4737"/><rect x="180" fill="#ff4435"/><rect x="184" fill="#ff4033"/><rect x="188" fill="#ff3d32"/><rect x="192" fill="#ff3a30"/><rect x="196" fill="#ff372e"/><rect x="200" fill="#ff352d"/><rect x="204" fill="#ff322b"/><rect x="208" fill="#ff2f2a"/><rect x="212" fill="#ff2d29"/><rect x="216" fill="#ff2b28"/><rect x="220" fill="#ff2826"/><rect x="224" fill="#ff2625"/><rect x="228" fill="#ff2424"/><rect x="232" fill="#ff2223"/><rect x="236" fill="#ff2022"/><rect x="240" fill="#ff1e21"/><rect x="244" fill="#ff1c20"/><rect x="248" fill="#ff1b1f"/><rect x="252" fill="#ff191e"/><rect x="256" fill="#ff171d"/><rect x="260" fill="#ff161c"/><rect x="264" fill="#ff141c"/><rect x="268" fill="#ff131b"/><rect x="272" fill="#ff111a"/><rect x="276" fill="#ff1019"/><rect x="280" fill="#ff0f19"/><rect x="284" fill="#ff0d18"/><rect x="288" fill="#ff0c17"/><rect x="292" fill="#ff0b17"/><rect x="296" fill="#ff0a16"/><rect x="300" fill="#ff0815"/><rect x="304" fill="#ff0715"/><rect x="308" fill="#ff0614"/><rect x="312" fill="#ff0514"/><rect x="316" fill="#ff0413"/><rect x="320" fill="#ff0313"/><rect x="324" fill="#ff0212"/><rect x="328" fill="#ff0111"/><rect x="332" fill="#f01"/><rect x="336" style="width:13px" fill="#ff0010"/><rect x="348" fill="#ff000f"/></g>
<g transform="translate(1143 208)"><rect x="8" fill="#00ff92"/><rect x="12" fill="#00ff93"/><rect x="16" fill="#02ff94"/><rect x="20" fill="#0dff95"/><rect x="24" fill="#19ff96"/><rect x="28" fill="#25ff97"/><rect x="32" fill="#32ff98"/><rect x="36" fill="#3fff99"/><rect x="40" fill="#4cff9a"/><rect x="44" fill="#59ff9b"/><rect x="48" fill="#67ff9c"/><rect x="52" fill="#75ff9d"/><rect x="56" fill="#84ff9f"/><rect x="60" fill="#93ffa0"/><rect x="64" fill="#a3ffa1"/><rect x="68" fill="#b3ffa2"/><rect x="72" fill="#c3ffa4"/><rect x="76" fill="#d4ffa5"/><rect x="80" fill="#e6ffa6"/><rect x="84" fill="#f8ffa8"/><rect x="88" fill="#fff3a2"/><rect x="92" fill="#ffe398"/><rect x="96" fill="#ffd48f"/><rect x="100" fill="#ffc788"/><rect x="104" fill="#ffba80"/><rect x="108" fill="#ffaf7a"/><rect x="112" fill="#ffa574"/><rect x="116" fill="#ff9b6f"/><rect x="120" fill="#ff9369"/><rect x="124" fill="#ff8a65"/><rect x="128" fill="#ff8360"/><rect x="132" fill="#ff7c5c"/><rect x="136" fill="#ff7559"/><rect x="140" fill="#ff6f55"/><rect x="144" fill="#ff6952"/><rect x="148" fill="#ff644f"/><rect x="152" fill="#ff5f4c"/><rect x="156" fill="#ff5a49"/><rect x="160" fill="#ff5646"/><rect x="164" fill="#ff5144"/><rect x="168" fill="#ff4d41"/><rect x="172" fill="#ff493f"/><rect x="176" fill="#ff463d"/><rect x="180" fill="#ff423b"/><rect x="184" fill="#ff3f39"/><rect x="188" fill="#ff3c37"/><rect x="192" fill="#ff3935"/><rect x="196" fill="#ff3634"/><rect x="200" fill="#ff3332"/><rect x="204" fill="#ff3131"/><rect x="208" fill="#ff2e2f"/><rect x="212" fill="#ff2c2e"/><rect x="216" fill="#ff292c"/><rect x="220" fill="#ff272b"/><rect x="224" fill="#ff252a"/><rect x="228" fill="#ff2329"/><rect x="232" fill="#ff2127"/><rect x="236" fill="#ff1f26"/><rect x="240" fill="#ff1d25"/><rect x="244" fill="#ff1b24"/><rect x="248" fill="#ff1923"/><rect x="252" fill="#ff1822"/><rect x="256" fill="#ff1621"/><rect x="260" fill="#ff1520"/><rect x="264" fill="#ff1320"/><rect x="268" fill="#ff121f"/><rect x="272" fill="#ff101e"/><rect x="276" fill="#ff0f1d"/><rect x="280" fill="#ff0d1c"/><rect x="284" fill="#ff0c1c"/><rect x="288" fill="#ff0b1b"/><rect x="292" fill="#ff0a1a"/><rect x="296" fill="#ff0919"/><rect x="300" fill="#ff0719"/><rect x="304" fill="#ff0618"/><rect x="308" fill="#ff0517"/><rect x="312" fill="#ff0417"/><rect x="316" fill="#ff0316"/><rect x="320" fill="#ff0216"/><rect x="324" fill="#ff0115"/><rect x="328" fill="#ff0015"/><rect x="332" fill="#ff0014"/><rect x="336" style="width:9px" fill="#ff0013"/><rect x="344" fill="#ff0012"/></g>
<g transform="translate(1143 212)"><rect x="8" fill="#00ff9e"/><rect x="12" fill="#00ffa0"/><rect x="16" fill="#00ffa1"/><rect x="20" fill="#0cffa2"/><rect x="24" fill="#18ffa3"/><rect x="28" fill="#24ffa4"/><rect x="32" fill="#30ffa5"/><rect x="36" fill="#3dffa6"/><rect x="40" fill="#4bffa8"/><rect x="44" fill="#58ffa9"/><rect x="48" fill="#6fa"/><rect x="52" fill="#75ffac"/><rect x="56" fill="#84ffad"/><rect x="60" fill="#93ffaf"/><rect x="64" fill="#a3ffb0"/><rect x="68" fill="#b3ffb2"/><rect x="72" fill="#c4ffb3"/><rect x="76" fill="#d5ffb5"/><rect x="80" fill="#e7ffb6"/><rect x="84" fill="#faffb8"/><rect x="88" fill="#fff2b0"/><rect x="92" fill="#ffe1a6"/><rect x="96" fill="#ffd29c"/><rect x="100" fill="#ffc594"/><rect x="104" fill="#ffb88c"/><rect x="108" fill="#ffad85"/><rect x="112" fill="#ffa37f"/><rect x="116" fill="#ff9979"/><rect x="120" fill="#ff9173"/><rect x="124" fill="#ff896e"/><rect x="128" fill="#ff8169"/><rect x="132" fill="#ff7a65"/><rect x="136" fill="#ff7461"/><rect x="140" fill="#ff6d5d"/><rect x="144" fill="#ff6859"/><rect x="148" fill="#ff6256"/><rect x="152" fill="#ff5d53"/><rect x="156" fill="#ff5950"/><rect x="160" fill="#ff544d"/><rect x="164" fill="#ff504a"/><rect x="168" fill="#ff4c48"/><rect x="172" fill="#ff4845"/><rect x="176" fill="#ff4443"/><rect x="180" fill="#ff4141"/><rect x="184" fill="#ff3e3f"/><rect x="188" fill="#ff3a3d"/><rect x="192" fill="#ff373b"/><rect x="196" fill="#ff3539"/><rect x="200" fill="#ff3237"/><rect x="204" fill="#ff2f36"/><rect x="208" fill="#ff2d34"/><rect x="212" fill="#ff2a33"/><rect x="216" fill="#ff2831"/><rect x="220" fill="#ff2630"/><rect x="224" fill="#ff242f"/><rect x="228" fill="#ff222d"/><rect x="232" fill="#ff202c"/><rect x="236" fill="#ff1e2b"/><rect x="240" fill="#ff1c2a"/><rect x="244" fill="#ff1a28"/><rect x="248" fill="#ff1827"/><rect x="252" fill="#ff1726"/><rect x="256" fill="#ff1525"/><rect x="260" fill="#ff1324"/><rect x="264" fill="#ff1223"/><rect x="268" fill="#ff1123"/><rect x="272" fill="#ff0f22"/><rect x="276" fill="#ff0e21"/><rect x="280" fill="#ff0c20"/><rect x="284" fill="#ff0b1f"/><rect x="288" fill="#ff0a1e"/><rect x="292" fill="#ff091e"/><rect x="296" fill="#ff071d"/><rect x="300" fill="#ff061c"/><rect x="304" fill="#ff051b"/><rect x="308" fill="#ff041b"/><rect x="312" fill="#ff031a"/><rect x="316" fill="#ff0219"/><rect x="320" fill="#ff0119"/><rect x="324" style="width:9px" fill="#ff0018"/><rect x="332" fill="#ff0017"/><rect x="336" style="width:9px" fill="#ff0016"/></g>
<g transform="translate(1143 216)"><rect x="8" fill="#00ffab"/><rect x="12" fill="#00ffac"/><rect x="16" fill="#00ffad"/><rect x="20" fill="#0affaf"/><rect x="24" fill="#16ffb0"/><rect x="28" fill="#22ffb1"/><rect x="32" fill="#2fffb3"/><rect x="36" fill="#3cffb4"/><rect x="40" fill="#4affb6"/><rect x="44" fill="#58ffb7"/><rect x="48" fill="#66ffb9"/><rect x="52" fill="#74ffba"/><rect x="56" fill="#84ffbc"/><rect x="60" fill="#93ffbe"/><rect x="64" fill="#a3ffbf"/><rect x="68" fill="#b4ffc1"/><rect x="72" fill="#c5ffc3"/><rect x="76" fill="#d7ffc5"/><rect x="80" fill="#e9ffc7"/><rect x="84" fill="#fcffc9"/><rect x="88" fill="#fff0bf"/><rect x="92" fill="#ffdfb4"/><rect x="96" fill="#ffd0aa"/><rect x="100" fill="#ffc3a0"/><rect x="104" fill="#ffb698"/><rect x="108" fill="#ffab90"/><rect x="112" fill="#ffa189"/><rect x="116" fill="#ff9783"/><rect x="120" fill="#ff8f7d"/><rect x="124" fill="#ff8778"/><rect x="128" fill="#ff7f73"/><rect x="132" fill="#ff786e"/><rect x="136" fill="#ff7269"/><rect x="140" fill="#ff6c65"/><rect x="144" fill="#ff6661"/><rect x="148" fill="#ff615e"/><rect x="152" fill="#ff5c5a"/><rect x="156" fill="#ff5757"/><rect x="160" fill="#ff5254"/><rect x="164" fill="#ff4e51"/><rect x="168" fill="#ff4a4e"/><rect x="172" fill="#ff464c"/><rect x="176" fill="#ff4349"/><rect x="180" fill="#ff3f47"/><rect x="184" fill="#ff3c45"/><rect x="188" fill="#ff3943"/><rect x="192" fill="#ff3641"/><rect x="196" fill="#ff333f"/><rect x="200" fill="#ff303d"/><rect x="204" fill="#ff2e3b"/><rect x="208" fill="#ff2b39"/><rect x="212" fill="#ff2938"/><rect x="216" fill="#ff2736"/><rect x="220" fill="#ff2435"/><rect x="224" fill="#f23"/><rect x="228" fill="#ff2032"/><rect x="232" fill="#ff1e31"/><rect x="236" fill="#ff1c2f"/><rect x="240" fill="#ff1b2e"/><rect x="244" fill="#ff192d"/><rect x="248" fill="#ff172c"/><rect x="252" fill="#ff152b"/><rect x="256" fill="#ff1429"/><rect x="260" fill="#ff1228"/><rect x="264" fill="#ff1127"/><rect x="268" fill="#ff0f26"/><rect x="272" fill="#ff0e25"/><rect x="276" fill="#ff0d25"/><rect x="280" fill="#ff0b24"/><rect x="284" fill="#ff0a23"/><rect x="288" fill="#ff0922"/><rect x="292" fill="#ff0821"/><rect x="296" fill="#ff0620"/><rect x="300" fill="#ff0520"/><rect x="304" fill="#ff041f"/><rect x="308" fill="#ff031e"/><rect x="312" fill="#ff021d"/><rect x="316" fill="#ff011d"/><rect x="320" fill="#ff001c"/><rect x="324" style="width:9px" fill="#ff001b"/><rect x="332" fill="#ff001a"/><rect x="336" fill="#ff0019"/></g>
<g transform="translate(1143 220)"><rect x="8" fill="#00ffb8"/><rect x="12" fill="#00ffb9"/><rect x="16" fill="#0fb"/><rect x="20" fill="#08ffbc"/><rect x="24" fill="#14ffbe"/><rect x="28" fill="#21ffbf"/><rect x="32" fill="#2effc1"/><rect x="36" fill="#3bffc2"/><rect x="40" fill="#49ffc4"/><rect x="44" fill="#57ffc6"/><rect x="48" fill="#65ffc8"/><rect x="52" fill="#74ffca"/><rect x="56" fill="#83ffcb"/><rect x="60" fill="#93ffcd"/><rect x="64" fill="#a3ffcf"/><rect x="68" fill="#b4ffd2"/><rect x="72" fill="#c6ffd4"/><rect x="76" fill="#d8ffd6"/><rect x="80" fill="#eaffd8"/><rect x="84" fill="#fdffdb"/><rect x="88" fill="#ffeece"/><rect x="92" fill="#ffddc2"/><rect x="96" fill="#ffceb7"/><rect x="100" fill="#ffc1ad"/><rect x="104" fill="#ffb4a4"/><rect x="108" fill="#ffa99c"/><rect x="112" fill="#ff9f94"/><rect x="116" fill="#ff968e"/><rect x="120" fill="#ff8d87"/><rect x="124" fill="#ff8581"/><rect x="128" fill="#ff7d7c"/><rect x="132" fill="#ff7677"/><rect x="136" fill="#ff7072"/><rect x="140" fill="#ff6a6e"/><rect x="144" fill="#ff6469"/><rect x="148" fill="#ff5f65"/><rect x="152" fill="#ff5a62"/><rect x="156" fill="#ff555e"/><rect x="160" fill="#ff515b"/><rect x="164" fill="#ff4d58"/><rect x="168" fill="#ff4955"/><rect x="172" fill="#ff4552"/><rect x="176" fill="#ff4150"/><rect x="180" fill="#ff3e4d"/><rect x="184" fill="#ff3b4b"/><rect x="188" fill="#ff3748"/><rect x="192" fill="#ff3546"/><rect x="196" fill="#ff3244"/><rect x="200" fill="#ff2f42"/><rect x="204" fill="#ff2c40"/><rect x="208" fill="#ff2a3f"/><rect x="212" fill="#ff283d"/><rect x="216" fill="#ff253b"/><rect x="220" fill="#ff233a"/><rect x="224" fill="#ff2138"/><rect x="228" fill="#ff1f37"/><rect x="232" fill="#ff1d35"/><rect x="236" fill="#ff1b34"/><rect x="240" fill="#ff1932"/><rect x="244" fill="#ff1831"/><rect x="248" fill="#ff1630"/><rect x="252" fill="#ff142f"/><rect x="256" fill="#ff132e"/><rect x="260" fill="#ff112c"/><rect x="264" fill="#ff102b"/><rect x="268" fill="#ff0e2a"/><rect x="272" fill="#ff0d29"/><rect x="276" fill="#ff0c28"/><rect x="280" fill="#ff0a27"/><rect x="284" fill="#ff0926"/><rect x="288" fill="#ff0826"/><rect x="292" fill="#ff0725"/><rect x="296" fill="#ff0524"/><rect x="300" fill="#ff0423"/><rect x="304" fill="#ff0322"/><rect x="308" fill="#ff0221"/><rect x="312" fill="#ff0121"/><rect x="316" fill="#ff0020"/><rect x="320" fill="#ff001f"/><rect x="324" style="width:9px" fill="#ff001e"/><rect x="332" fill="#ff001d"/></g>
<g transform="translate(1143 224)"><rect x="12" fill="#00ffc7"/><rect x="16" fill="#00ffc8"/><rect x="20" fill="#06ffca"/><rect x="24" fill="#13ffcc"/><rect x="28" fill="#1fffcd"/><rect x="32" fill="#2cffcf"/><rect x="36" fill="#3affd1"/><rect x="40" fill="#48ffd3"/><rect x="44" fill="#56ffd5"/><rect x="48" fill="#64ffd7"/><rect x="52" fill="#74ffd9"/><rect x="56" fill="#83ffdb"/><rect x="60" fill="#93ffde"/><rect x="64" fill="#a4ffe0"/><rect x="68" fill="#b5ffe2"/><rect x="72" fill="#c7ffe5"/><rect x="76" fill="#d9ffe7"/><rect x="80" fill="#ecffea"/><rect x="84" fill="#ffffec"/><rect x="88" fill="#ffecde"/><rect x="92" fill="#ffdbd1"/><rect x="96" fill="#ffccc5"/><rect x="100" fill="#ffbfba"/><rect x="104" fill="#ffb2b0"/><rect x="108" fill="#ffa7a8"/><rect x="112" fill="#ff9da0"/><rect x="116" fill="#ff9498"/><rect x="120" fill="#ff8b91"/><rect x="124" fill="#ff838b"/><rect x="128" fill="#ff7c85"/><rect x="132" fill="#ff7580"/><rect x="136" fill="#ff6e7b"/><rect x="140" fill="#ff6876"/><rect x="144" fill="#ff6371"/><rect x="148" fill="#ff5d6d"/><rect x="152" fill="#ff5869"/><rect x="156" fill="#ff5466"/><rect x="160" fill="#ff4f62"/><rect x="164" fill="#ff4b5f"/><rect x="168" fill="#ff475c"/><rect x="172" fill="#ff4359"/><rect x="176" fill="#ff4056"/><rect x="180" fill="#ff3c53"/><rect x="184" fill="#ff3951"/><rect x="188" fill="#ff364e"/><rect x="192" fill="#ff334c"/><rect x="196" fill="#ff304a"/><rect x="200" fill="#ff2e48"/><rect x="204" fill="#ff2b46"/><rect x="208" fill="#ff2944"/><rect x="212" fill="#ff2642"/><rect x="216" fill="#ff2440"/><rect x="220" fill="#ff223e"/><rect x="224" fill="#ff203d"/><rect x="228" fill="#ff1e3b"/><rect x="232" fill="#ff1c3a"/><rect x="236" fill="#ff1a38"/><rect x="240" fill="#ff1837"/><rect x="244" fill="#ff1635"/><rect x="248" fill="#ff1534"/><rect x="252" fill="#ff1333"/><rect x="256" fill="#ff1232"/><rect x="260" fill="#ff1030"/><rect x="264" fill="#ff0f2f"/><rect x="268" fill="#ff0d2e"/><rect x="272" fill="#ff0c2d"/><rect x="276" fill="#ff0a2c"/><rect x="280" fill="#ff092b"/><rect x="284" fill="#ff082a"/><rect x="288" fill="#ff0729"/><rect x="292" fill="#ff0628"/><rect x="296" fill="#ff0427"/><rect x="300" fill="#ff0326"/><rect x="304" fill="#ff0226"/><rect x="308" fill="#ff0125"/><rect x="312" fill="#ff0024"/><rect x="316" fill="#ff0023"/><rect x="320" style="width:9px" fill="#f02"/><rect x="328" fill="#ff0021"/></g>
<g transform="translate(1143 228)"><rect x="12" fill="#00ffd4"/><rect x="16" fill="#00ffd6"/><rect x="20" fill="#04ffd8"/><rect x="24" fill="#11ffda"/><rect x="28" fill="#1effdc"/><rect x="32" fill="#2bffde"/><rect x="36" fill="#39ffe0"/><rect x="40" fill="#47ffe2"/><rect x="44" fill="#55ffe5"/><rect x="48" fill="#64ffe7"/><rect x="52" fill="#73ffe9"/><rect x="56" fill="#83ffec"/><rect x="60" fill="#93ffee"/><rect x="64" fill="#a4fff1"/><rect x="68" fill="#b5fff4"/><rect x="72" fill="#c7fff6"/><rect x="76" fill="#dafff9"/><rect x="80" fill="#edfffc"/><rect x="84" fill="#fffdfd"/><rect x="88" fill="#ffeaed"/><rect x="92" fill="#ffd9df"/><rect x="96" fill="#ffcad3"/><rect x="100" fill="#ffbdc7"/><rect x="104" fill="#ffb0bd"/><rect x="108" fill="#ffa5b3"/><rect x="112" fill="#ff9bab"/><rect x="116" fill="#ff92a3"/><rect x="120" fill="#ff899c"/><rect x="124" fill="#ff8195"/><rect x="128" fill="#ff7a8f"/><rect x="132" fill="#ff7389"/><rect x="136" fill="#ff6c83"/><rect x="140" fill="#ff667e"/><rect x="144" fill="#ff617a"/><rect x="148" fill="#ff5b75"/><rect x="152" fill="#ff5771"/><rect x="156" fill="#ff526d"/><rect x="160" fill="#ff4d69"/><rect x="164" fill="#ff4966"/><rect x="168" fill="#ff4562"/><rect x="172" fill="#ff425f"/><rect x="176" fill="#ff3e5c"/><rect x="180" fill="#ff3b59"/><rect x="184" fill="#ff3857"/><rect x="188" fill="#ff3454"/><rect x="192" fill="#ff3252"/><rect x="196" fill="#ff2f4f"/><rect x="200" fill="#ff2c4d"/><rect x="204" fill="#ff2a4b"/><rect x="208" fill="#ff2749"/><rect x="212" fill="#ff2547"/><rect x="216" fill="#ff2345"/><rect x="220" fill="#ff2043"/><rect x="224" fill="#ff1e42"/><rect x="228" fill="#ff1c40"/><rect x="232" fill="#ff1b3e"/><rect x="236" fill="#ff193d"/><rect x="240" fill="#ff173b"/><rect x="244" fill="#ff153a"/><rect x="248" fill="#ff1438"/><rect x="252" fill="#ff1237"/><rect x="256" fill="#ff1036"/><rect x="260" fill="#ff0f34"/><rect x="264" fill="#ff0d33"/><rect x="268" fill="#ff0c32"/><rect x="272" fill="#ff0b31"/><rect x="276" fill="#ff0930"/><rect x="280" fill="#ff082f"/><rect x="284" fill="#ff072e"/><rect x="288" fill="#ff062d"/><rect x="292" fill="#ff052c"/><rect x="296" fill="#ff032b"/><rect x="300" fill="#ff022a"/><rect x="304" fill="#ff0129"/><rect x="308" fill="#ff0028"/><rect x="312" fill="#ff0027"/><rect x="316" style="width:9px" fill="#ff0026"/><rect x="324" fill="#ff0025"/></g>
<g transform="translate(1143 232)"><rect x="12" fill="#00ffe2"/><rect x="16" fill="#00ffe4"/><rect x="20" fill="#03ffe6"/><rect x="24" fill="#0fffe9"/><rect x="28" fill="#1cffeb"/><rect x="32" fill="#29ffed"/><rect x="36" fill="#37fff0"/><rect x="40" fill="#45fff2"/><rect x="44" fill="#54fff5"/><rect x="48" fill="#63fff7"/><rect x="52" fill="#73fffa"/><rect x="56" fill="#83fffd"/><rect x="60" fill="#93feff"/><rect x="64" fill="#a2fcff"/><rect x="68" fill="#b1f9ff"/><rect x="72" fill="#c1f6ff"/><rect x="76" fill="#d1f3ff"/><rect x="80" fill="#e0f0ff"/><rect x="84" fill="#f0edff"/><rect x="88" fill="#ffe8fd"/><rect x="92" fill="#ffd7ee"/><rect x="96" fill="#ffc8e1"/><rect x="100" fill="#ffbbd5"/><rect x="104" fill="#ffaec9"/><rect x="108" fill="#ffa3bf"/><rect x="112" fill="#ff99b6"/><rect x="116" fill="#ff90ae"/><rect x="120" fill="#ff87a6"/><rect x="124" fill="#ff7f9f"/><rect x="128" fill="#ff7898"/><rect x="132" fill="#ff7192"/><rect x="136" fill="#ff6a8c"/><rect x="140" fill="#ff6487"/><rect x="144" fill="#ff5f82"/><rect x="148" fill="#ff5a7d"/><rect x="152" fill="#ff5579"/><rect x="156" fill="#ff5074"/><rect x="160" fill="#ff4c71"/><rect x="164" fill="#ff486d"/><rect x="168" fill="#ff4469"/><rect x="172" fill="#ff4066"/><rect x="176" fill="#ff3d63"/><rect x="180" fill="#ff3960"/><rect x="184" fill="#ff365d"/><rect x="188" fill="#ff335a"/><rect x="192" fill="#ff3058"/><rect x="196" fill="#ff2d55"/><rect x="200" fill="#ff2b53"/><rect x="204" fill="#ff2850"/><rect x="208" fill="#ff264e"/><rect x="212" fill="#ff234c"/><rect x="216" fill="#ff214a"/><rect x="220" fill="#ff1f48"/><rect x="224" fill="#ff1d46"/><rect x="228" fill="#ff1b45"/><rect x="232" fill="#ff1943"/><rect x="236" fill="#ff1741"/><rect x="240" fill="#ff1640"/><rect x="244" fill="#ff143e"/><rect x="248" fill="#ff123d"/><rect x="252" fill="#ff113b"/><rect x="256" fill="#ff0f3a"/><rect x="260" fill="#ff0e39"/><rect x="264" fill="#ff0c37"/><rect x="268" fill="#ff0b36"/><rect x="272" fill="#ff0a35"/><rect x="276" fill="#ff0834"/><rect x="280" fill="#ff0733"/><rect x="284" fill="#ff0631"/><rect x="288" fill="#ff0530"/><rect x="292" fill="#ff032f"/><rect x="296" fill="#ff022e"/><rect x="300" fill="#ff012d"/><rect x="304" fill="#ff002c"/><rect x="308" style="width:9px" fill="#ff002b"/><rect x="316" fill="#ff002a"/><rect x="320" fill="#ff0029"/></g>
<g transform="translate(1143 236)"><rect x="12" fill="#00fff1"/><rect x="16" fill="#00fff3"/><rect x="20" fill="#01fff5"/><rect x="24" fill="#0dfff8"/><rect x="28" fill="#1afffa"/><rect x="32" fill="#28fffd"/><rect x="36" fill="#36feff"/><rect x="40" fill="#43fcff"/><rect x="44" fill="#51f9ff"/><rect x="48" fill="#5ff6ff"/><rect x="52" fill="#6df4ff"/><rect x="56" fill="#7bf1ff"/><rect x="60" fill="#89eeff"/><rect x="64" fill="#98ebff"/><rect x="68" fill="#a6e8ff"/><rect x="72" fill="#b5e5ff"/><rect x="76" fill="#c4e2ff"/><rect x="80" fill="#d3dfff"/><rect x="84" fill="#e2dcff"/><rect x="88" fill="#f1d9ff"/><rect x="92" fill="#ffd5fe"/><rect x="96" fill="#ffc6ef"/><rect x="100" fill="#ffb9e2"/><rect x="104" fill="#ffacd6"/><rect x="108" fill="#ffa1cc"/><rect x="112" fill="#ff97c2"/><rect x="116" fill="#ff8eb9"/><rect x="120" fill="#ff85b0"/><rect x="124" fill="#ff7da9"/><rect x="128" fill="#ff76a2"/><rect x="132" fill="#ff6f9b"/><rect x="136" fill="#ff6995"/><rect x="140" fill="#ff638f"/><rect x="144" fill="#ff5d8a"/><rect x="148" fill="#ff5885"/><rect x="152" fill="#ff5380"/><rect x="156" fill="#ff4e7c"/><rect x="160" fill="#ff4a78"/><rect x="164" fill="#ff4674"/><rect x="168" fill="#ff4270"/><rect x="172" fill="#ff3e6d"/><rect x="176" fill="#ff3b69"/><rect x="180" fill="#ff3866"/><rect x="184" fill="#ff3463"/><rect x="188" fill="#ff3160"/><rect x="192" fill="#ff2f5d"/><rect x="196" fill="#ff2c5b"/><rect x="200" fill="#ff2958"/><rect x="204" fill="#ff2756"/><rect x="208" fill="#ff2454"/><rect x="212" fill="#ff2251"/><rect x="216" fill="#ff204f"/><rect x="220" fill="#ff1e4d"/><rect x="224" fill="#ff1c4b"/><rect x="228" fill="#ff1a49"/><rect x="232" fill="#ff1848"/><rect x="236" fill="#ff1646"/><rect x="240" fill="#ff1444"/><rect x="244" fill="#ff1343"/><rect x="248" fill="#ff1141"/><rect x="252" fill="#ff1040"/><rect x="256" fill="#ff0e3e"/><rect x="260" fill="#ff0d3d"/><rect x="264" fill="#ff0b3b"/><rect x="268" fill="#ff0a3a"/><rect x="272" fill="#ff0839"/><rect x="276" fill="#ff0737"/><rect x="280" fill="#ff0636"/><rect x="284" fill="#ff0535"/><rect x="288" fill="#ff0434"/><rect x="292" fill="#ff0233"/><rect x="296" fill="#ff0132"/><rect x="300" fill="#ff0031"/><rect x="304" fill="#ff0030"/><rect x="308" fill="#ff002f"/><rect x="312" fill="#ff002e"/><rect x="316" fill="#ff002d"/></g>
<g transform="translate(1143 240)"><rect x="12" fill="#00feff"/><rect x="16" fill="#00fcff"/><rect x="20" fill="#00f9ff"/><rect x="24" fill="#0bf7ff"/><rect x="28" fill="#18f4ff"/><rect x="32" fill="#24f2ff"/><rect x="36" fill="#31efff"/><rect x="40" fill="#3eecff"/><rect x="44" fill="#4beaff"/><rect x="48" fill="#58e7ff"/><rect x="52" fill="#66e4ff"/><rect x="56" fill="#73e2ff"/><rect x="60" fill="#81dfff"/><rect x="64" fill="#8edcff"/><rect x="68" fill="#9cd9ff"/><rect x="72" fill="#aad7ff"/><rect x="76" fill="#b8d4ff"/><rect x="80" fill="#c6d1ff"/><rect x="84" fill="#d5ceff"/><rect x="88" fill="#e3cbff"/><rect x="92" fill="#f2c8ff"/><rect x="96" fill="#ffc4fe"/><rect x="100" fill="#ffb6f0"/><rect x="104" fill="#ffaae3"/><rect x="108" fill="#ff9fd8"/><rect x="112" fill="#ff95cd"/><rect x="116" fill="#ff8cc4"/><rect x="120" fill="#ff83bb"/><rect x="124" fill="#ff7bb3"/><rect x="128" fill="#ff74ac"/><rect x="132" fill="#ff6da5"/><rect x="136" fill="#ff679e"/><rect x="140" fill="#ff6198"/><rect x="144" fill="#ff5b92"/><rect x="148" fill="#ff568d"/><rect x="152" fill="#ff5188"/><rect x="156" fill="#ff4d84"/><rect x="160" fill="#ff487f"/><rect x="164" fill="#ff447b"/><rect x="168" fill="#ff4077"/><rect x="172" fill="#ff3d73"/><rect x="176" fill="#ff3970"/><rect x="180" fill="#ff366c"/><rect x="184" fill="#ff3369"/><rect x="188" fill="#ff3066"/><rect x="192" fill="#ff2d63"/><rect x="196" fill="#ff2a61"/><rect x="200" fill="#ff285e"/><rect x="204" fill="#ff255b"/><rect x="208" fill="#ff2359"/><rect x="212" fill="#ff2157"/><rect x="216" fill="#ff1f54"/><rect x="220" fill="#ff1c52"/><rect x="224" fill="#ff1a50"/><rect x="228" fill="#ff194e"/><rect x="232" fill="#ff174c"/><rect x="236" fill="#ff154a"/><rect x="240" fill="#ff1349"/><rect x="244" fill="#ff1147"/><rect x="248" fill="#ff1045"/><rect x="252" fill="#ff0e44"/><rect x="256" fill="#ff0d42"/><rect x="260" fill="#ff0b41"/><rect x="264" fill="#ff0a3f"/><rect x="268" fill="#ff093e"/><rect x="272" fill="#ff073d"/><rect x="276" fill="#ff063b"/><rect x="280" fill="#ff053a"/><rect x="284" fill="#ff0439"/><rect x="288" fill="#ff0338"/><rect x="292" fill="#ff0137"/><rect x="296" fill="#ff0035"/><rect x="300" fill="#ff0034"/><rect x="304" fill="#f03"/><rect x="308" fill="#ff0032"/><rect x="312" fill="#ff0031"/></g>
<g transform="translate(1143 244)"><rect x="12" fill="#00f0ff"/><rect x="16" fill="#0ef"/><rect x="20" fill="#00ebff"/><rect x="24" fill="#09e9ff"/><rect x="28" fill="#15e6ff"/><rect x="32" fill="#21e4ff"/><rect x="36" fill="#2de1ff"/><rect x="40" fill="#39dfff"/><rect x="44" fill="#46dcff"/><rect x="48" fill="#53d9ff"/><rect x="52" fill="#5fd7ff"/><rect x="56" fill="#6cd4ff"/><rect x="60" fill="#79d1ff"/><rect x="64" fill="#86cfff"/><rect x="68" fill="#93ccff"/><rect x="72" fill="#a0c9ff"/><rect x="76" fill="#aec6ff"/><rect x="80" fill="#bbc4ff"/><rect x="84" fill="#c9c1ff"/><rect x="88" fill="#d6beff"/><rect x="92" fill="#e4bbff"/><rect x="96" fill="#f2b8ff"/><rect x="100" fill="#ffb4fe"/><rect x="104" fill="#ffa8f1"/><rect x="108" fill="#ff9de4"/><rect x="112" fill="#ff93d9"/><rect x="116" fill="#ff89cf"/><rect x="120" fill="#ff81c6"/><rect x="124" fill="#ff79bd"/><rect x="128" fill="#ff72b6"/><rect x="132" fill="#ff6bae"/><rect x="136" fill="#ff65a7"/><rect x="140" fill="#ff5fa1"/><rect x="144" fill="#ff599b"/><rect x="148" fill="#ff5495"/><rect x="152" fill="#ff4f90"/><rect x="156" fill="#ff4b8b"/><rect x="160" fill="#ff4787"/><rect x="164" fill="#ff4382"/><rect x="168" fill="#ff3f7e"/><rect x="172" fill="#ff3b7a"/><rect x="176" fill="#ff3876"/><rect x="180" fill="#ff3473"/><rect x="184" fill="#ff316f"/><rect x="188" fill="#ff2e6c"/><rect x="192" fill="#ff2c69"/><rect x="196" fill="#ff2966"/><rect x="200" fill="#ff2664"/><rect x="204" fill="#ff2461"/><rect x="208" fill="#ff225e"/><rect x="212" fill="#ff1f5c"/><rect x="216" fill="#ff1d5a"/><rect x="220" fill="#ff1b57"/><rect x="224" fill="#ff1955"/><rect x="228" fill="#ff1753"/><rect x="232" fill="#ff1551"/><rect x="236" fill="#ff144f"/><rect x="240" fill="#ff124d"/><rect x="244" fill="#ff104b"/><rect x="248" fill="#ff0f4a"/><rect x="252" fill="#ff0d48"/><rect x="256" fill="#ff0c46"/><rect x="260" fill="#ff0a45"/><rect x="264" fill="#ff0943"/><rect x="268" fill="#ff0842"/><rect x="272" fill="#ff0641"/><rect x="276" fill="#ff053f"/><rect x="280" fill="#ff043e"/><rect x="284" fill="#ff033d"/><rect x="288" fill="#ff013b"/><rect x="292" fill="#ff003a"/><rect x="296" fill="#ff0039"/><rect x="300" fill="#ff0038"/><rect x="304" fill="#ff0037"/><rect x="308" fill="#ff0036"/></g>
<g transform="translate(1143 248)"><rect x="16" fill="#00e1ff"/><rect x="20" fill="#00deff"/><rect x="24" fill="#06dcff"/><rect x="28" fill="#12d9ff"/><rect x="32" fill="#1ed7ff"/><rect x="36" fill="#29d4ff"/><rect x="40" fill="#35d2ff"/><rect x="44" fill="#41cfff"/><rect x="48" fill="#4dcdff"/><rect x="52" fill="#59caff"/><rect x="56" fill="#65c7ff"/><rect x="60" fill="#72c5ff"/><rect x="64" fill="#7ec2ff"/><rect x="68" fill="#8bc0ff"/><rect x="72" fill="#97bdff"/><rect x="76" fill="#a4baff"/><rect x="80" fill="#b1b7ff"/><rect x="84" fill="#beb5ff"/><rect x="88" fill="#cbb2ff"/><rect x="92" fill="#d8afff"/><rect x="96" fill="#e5acff"/><rect x="100" fill="#f3a9ff"/><rect x="104" fill="#ffa6fe"/><rect x="108" fill="#ff9bf1"/><rect x="112" fill="#ff91e5"/><rect x="116" fill="#ff87db"/><rect x="120" fill="#ff7fd1"/><rect x="124" fill="#ff77c8"/><rect x="128" fill="#ff70c0"/><rect x="132" fill="#ff69b8"/><rect x="136" fill="#ff63b1"/><rect x="140" fill="#ff5daa"/><rect x="144" fill="#ff57a4"/><rect x="148" fill="#ff529e"/><rect x="152" fill="#ff4e98"/><rect x="156" fill="#ff4993"/><rect x="160" fill="#ff458e"/><rect x="164" fill="#ff4189"/><rect x="168" fill="#ff3d85"/><rect x="172" fill="#ff3981"/><rect x="176" fill="#ff367d"/><rect x="180" fill="#ff3379"/><rect x="184" fill="#ff3076"/><rect x="188" fill="#ff2d72"/><rect x="192" fill="#ff2a6f"/><rect x="196" fill="#ff276c"/><rect x="200" fill="#ff2569"/><rect x="204" fill="#f26"/><rect x="208" fill="#ff2064"/><rect x="212" fill="#ff1e61"/><rect x="216" fill="#ff1c5f"/><rect x="220" fill="#ff1a5c"/><rect x="224" fill="#ff185a"/><rect x="228" fill="#ff1658"/><rect x="232" fill="#ff1456"/><rect x="236" fill="#ff1254"/><rect x="240" fill="#ff1152"/><rect x="244" fill="#ff0f50"/><rect x="248" fill="#ff0d4e"/><rect x="252" fill="#ff0c4c"/><rect x="256" fill="#ff0a4b"/><rect x="260" fill="#ff0949"/><rect x="264" fill="#ff0848"/><rect x="268" fill="#ff0646"/><rect x="272" fill="#ff0545"/><rect x="276" fill="#ff0443"/><rect x="280" fill="#ff0342"/><rect x="284" fill="#ff0140"/><rect x="288" fill="#ff003f"/><rect x="292" fill="#ff003e"/><rect x="296" fill="#ff003d"/><rect x="300" fill="#ff003b"/><rect x="304" fill="#ff003a"/></g>
<g transform="translate(1143 252)"><rect x="16" fill="#00d5ff"/><rect x="20" fill="#00d2ff"/><rect x="24" fill="#04d0ff"/><rect x="28" fill="#0fcdff"/><rect x="32" fill="#1bcbff"/><rect x="36" fill="#26c9ff"/><rect x="40" fill="#31c6ff"/><rect x="44" fill="#3dc4ff"/><rect x="48" fill="#48c1ff"/><rect x="52" fill="#54bfff"/><rect x="56" fill="#5fbcff"/><rect x="60" fill="#6bb9ff"/><rect x="64" fill="#77b7ff"/><rect x="68" fill="#83b4ff"/><rect x="72" fill="#8fb2ff"/><rect x="76" fill="#9bafff"/><rect x="80" fill="#a7acff"/><rect x="84" fill="#b4aaff"/><rect x="88" fill="#c0a7ff"/><rect x="92" fill="#cda4ff"/><rect x="96" fill="#d9a2ff"/><rect x="100" fill="#e69fff"/><rect x="104" fill="#f39cff"/><rect x="108" fill="#ff99fe"/><rect x="112" fill="#ff8ef2"/><rect x="116" fill="#ff85e6"/><rect x="120" fill="#ff7ddc"/><rect x="124" fill="#ff75d3"/><rect x="128" fill="#ff6eca"/><rect x="132" fill="#ff67c2"/><rect x="136" fill="#ff61ba"/><rect x="140" fill="#ff5bb3"/><rect x="144" fill="#ff56ac"/><rect x="148" fill="#ff51a6"/><rect x="152" fill="#ff4ca0"/><rect x="156" fill="#ff479b"/><rect x="160" fill="#ff4396"/><rect x="164" fill="#ff3f91"/><rect x="168" fill="#ff3b8c"/><rect x="172" fill="#ff3888"/><rect x="176" fill="#ff3484"/><rect x="180" fill="#ff3180"/><rect x="184" fill="#ff2e7c"/><rect x="188" fill="#ff2b79"/><rect x="192" fill="#ff2975"/><rect x="196" fill="#ff2672"/><rect x="200" fill="#ff236f"/><rect x="204" fill="#ff216c"/><rect x="208" fill="#ff1f69"/><rect x="212" fill="#ff1c66"/><rect x="216" fill="#ff1a64"/><rect x="220" fill="#ff1861"/><rect x="224" fill="#ff165f"/><rect x="228" fill="#ff155d"/><rect x="232" fill="#ff135b"/><rect x="236" fill="#ff1158"/><rect x="240" fill="#ff0f56"/><rect x="244" fill="#ff0e54"/><rect x="248" fill="#ff0c53"/><rect x="252" fill="#ff0b51"/><rect x="256" fill="#ff094f"/><rect x="260" fill="#ff084d"/><rect x="264" fill="#ff074c"/><rect x="268" fill="#ff054a"/><rect x="272" fill="#ff0449"/><rect x="276" fill="#ff0347"/><rect x="280" fill="#ff0246"/><rect x="284" fill="#f04"/><rect x="288" fill="#ff0043"/><rect x="292" fill="#ff0041"/><rect x="296" fill="#ff0040"/><rect x="300" fill="#ff003f"/></g>
<g transform="translate(1143 256)"><rect x="16" fill="#00c9ff"/><rect x="20" fill="#00c7ff"/><rect x="24" fill="#02c5ff"/><rect x="28" fill="#0dc2ff"/><rect x="32" fill="#18c0ff"/><rect x="36" fill="#23beff"/><rect x="40" fill="#2dbbff"/><rect x="44" fill="#38b9ff"/><rect x="48" fill="#43b6ff"/><rect x="52" fill="#4fb4ff"/><rect x="56" fill="#5ab1ff"/><rect x="60" fill="#65afff"/><rect x="64" fill="#70acff"/><rect x="68" fill="#7caaff"/><rect x="72" fill="#87a7ff"/><rect x="76" fill="#93a5ff"/><rect x="80" fill="#9fa2ff"/><rect x="84" fill="#aba0ff"/><rect x="88" fill="#b79dff"/><rect x="92" fill="#c39aff"/><rect x="96" fill="#cf98ff"/><rect x="100" fill="#db95ff"/><rect x="104" fill="#e792ff"/><rect x="108" fill="#f38fff"/><rect x="112" fill="#ff8cfe"/><rect x="116" fill="#ff83f2"/><rect x="120" fill="#ff7be7"/><rect x="124" fill="#ff73dd"/><rect x="128" fill="#ff6cd4"/><rect x="132" fill="#ff65cb"/><rect x="136" fill="#ff5fc3"/><rect x="140" fill="#ff59bc"/><rect x="144" fill="#ff54b5"/><rect x="148" fill="#ff4fae"/><rect x="152" fill="#ff4aa8"/><rect x="156" fill="#ff45a3"/><rect x="160" fill="#ff419d"/><rect x="164" fill="#ff3d98"/><rect x="168" fill="#ff3a93"/><rect x="172" fill="#ff368f"/><rect x="176" fill="#ff338a"/><rect x="180" fill="#ff3086"/><rect x="184" fill="#ff2d82"/><rect x="188" fill="#ff2a7f"/><rect x="192" fill="#ff277b"/><rect x="196" fill="#ff2478"/><rect x="200" fill="#ff2275"/><rect x="204" fill="#ff2072"/><rect x="208" fill="#ff1d6f"/><rect x="212" fill="#ff1b6c"/><rect x="216" fill="#ff1969"/><rect x="220" fill="#ff1767"/><rect x="224" fill="#ff1564"/><rect x="228" fill="#ff1362"/><rect x="232" fill="#ff115f"/><rect x="236" fill="#ff105d"/><rect x="240" fill="#ff0e5b"/><rect x="244" fill="#ff0c59"/><rect x="248" fill="#ff0b57"/><rect x="252" fill="#ff0955"/><rect x="256" fill="#ff0853"/><rect x="260" fill="#ff0752"/><rect x="264" fill="#ff0550"/><rect x="268" fill="#ff044e"/><rect x="272" fill="#ff034d"/><rect x="276" fill="#ff024b"/><rect x="280" fill="#ff0049"/><rect x="284" fill="#ff0048"/><rect x="288" fill="#ff0047"/><rect x="292" fill="#ff0045"/><rect x="296" fill="#f04"/></g>
<g transform="translate(1143 260)"><rect x="16" fill="#00bfff"/><rect x="20" fill="#00bdff"/><rect x="24" fill="#01bbff"/><rect x="28" fill="#0bb8ff"/><rect x="32" fill="#15b6ff"/><rect x="36" fill="#20b4ff"/><rect x="40" fill="#2ab1ff"/><rect x="44" fill="#35afff"/><rect x="48" fill="#3fadff"/><rect x="52" fill="#4aaaff"/><rect x="56" fill="#55a8ff"/><rect x="60" fill="#60a5ff"/><rect x="64" fill="#6aa3ff"/><rect x="68" fill="#75a0ff"/><rect x="72" fill="#809eff"/><rect x="76" fill="#8c9bff"/><rect x="80" fill="#9799ff"/><rect x="84" fill="#a296ff"/><rect x="88" fill="#ae94ff"/><rect x="92" fill="#b991ff"/><rect x="96" fill="#c58fff"/><rect x="100" fill="#d08cff"/><rect x="104" fill="#dc89ff"/><rect x="108" fill="#e887ff"/><rect x="112" fill="#f484ff"/><rect x="116" fill="#ff81fe"/><rect x="120" fill="#ff78f3"/><rect x="124" fill="#ff71e8"/><rect x="128" fill="#ff6ade"/><rect x="132" fill="#ff63d5"/><rect x="136" fill="#ff5dcd"/><rect x="140" fill="#ff57c5"/><rect x="144" fill="#ff52be"/><rect x="148" fill="#ff4db7"/><rect x="152" fill="#ff48b1"/><rect x="156" fill="#ff44ab"/><rect x="160" fill="#ff3fa5"/><rect x="164" fill="#ff3ca0"/><rect x="168" fill="#ff389b"/><rect x="172" fill="#ff3496"/><rect x="176" fill="#ff3191"/><rect x="180" fill="#ff2e8d"/><rect x="184" fill="#ff2b89"/><rect x="188" fill="#ff2885"/><rect x="192" fill="#ff2581"/><rect x="196" fill="#ff237e"/><rect x="200" fill="#ff207a"/><rect x="204" fill="#ff1e77"/><rect x="208" fill="#ff1c74"/><rect x="212" fill="#ff1a71"/><rect x="216" fill="#ff186e"/><rect x="220" fill="#ff166c"/><rect x="224" fill="#ff1469"/><rect x="228" fill="#ff1267"/><rect x="232" fill="#ff1064"/><rect x="236" fill="#ff0e62"/><rect x="240" fill="#ff0d60"/><rect x="244" fill="#ff0b5e"/><rect x="248" fill="#ff0a5c"/><rect x="252" fill="#ff085a"/><rect x="256" fill="#ff0758"/><rect x="260" fill="#ff0556"/><rect x="264" fill="#ff0454"/><rect x="268" fill="#ff0352"/><rect x="272" fill="#ff0251"/><rect x="276" fill="#ff004f"/><rect x="280" fill="#ff004d"/><rect x="284" fill="#ff004c"/><rect x="288" fill="#ff004a"/><rect x="292" fill="#ff0049"/></g>
<g transform="translate(1143 264)"><rect x="16" fill="#00b6ff"/><rect x="20" fill="#00b3ff"/><rect x="24" fill="#00b1ff"/><rect x="28" fill="#09afff"/><rect x="32" fill="#13adff"/><rect x="36" fill="#1daaff"/><rect x="40" fill="#27a8ff"/><rect x="44" fill="#31a6ff"/><rect x="48" fill="#3ba3ff"/><rect x="52" fill="#46a1ff"/><rect x="56" fill="#509fff"/><rect x="60" fill="#5a9cff"/><rect x="64" fill="#659aff"/><rect x="68" fill="#6f97ff"/><rect x="72" fill="#7a95ff"/><rect x="76" fill="#8593ff"/><rect x="80" fill="#9090ff"/><rect x="84" fill="#9a8eff"/><rect x="88" fill="#a58bff"/><rect x="92" fill="#b089ff"/><rect x="96" fill="#bb86ff"/><rect x="100" fill="#c784ff"/><rect x="104" fill="#d281ff"/><rect x="108" fill="#dd7eff"/><rect x="112" fill="#e97cff"/><rect x="116" fill="#f479ff"/><rect x="120" fill="#ff76fe"/><rect x="124" fill="#ff6ff3"/><rect x="128" fill="#ff67e9"/><rect x="132" fill="#ff61df"/><rect x="136" fill="#ff5bd7"/><rect x="140" fill="#ff55ce"/><rect x="144" fill="#ff50c7"/><rect x="148" fill="#ff4bc0"/><rect x="152" fill="#ff46b9"/><rect x="156" fill="#ff42b3"/><rect x="160" fill="#ff3ead"/><rect x="164" fill="#ff3aa7"/><rect x="168" fill="#ff36a2"/><rect x="172" fill="#ff339d"/><rect x="176" fill="#ff2f98"/><rect x="180" fill="#ff2c94"/><rect x="184" fill="#ff298f"/><rect x="188" fill="#ff278b"/><rect x="192" fill="#ff2488"/><rect x="196" fill="#ff2184"/><rect x="200" fill="#ff1f80"/><rect x="204" fill="#ff1d7d"/><rect x="208" fill="#ff1a7a"/><rect x="212" fill="#ff1877"/><rect x="216" fill="#ff1674"/><rect x="220" fill="#ff1471"/><rect x="224" fill="#ff126e"/><rect x="228" fill="#ff106c"/><rect x="232" fill="#ff0f69"/><rect x="236" fill="#ff0d67"/><rect x="240" fill="#ff0b64"/><rect x="244" fill="#ff0a62"/><rect x="248" fill="#ff0860"/><rect x="252" fill="#ff075e"/><rect x="256" fill="#ff065c"/><rect x="260" fill="#ff045a"/><rect x="264" fill="#ff0358"/><rect x="268" fill="#ff0256"/><rect x="272" fill="#f05"/><rect x="276" fill="#ff0053"/><rect x="280" fill="#ff0051"/><rect x="284" fill="#ff0050"/><rect x="288" fill="#ff004e"/></g>
<g transform="translate(1143 268)"><rect x="16" fill="#00adff"/><rect x="20" fill="#0af"/><rect x="24" fill="#00a8ff"/><rect x="28" fill="#07a6ff"/><rect x="32" fill="#11a4ff"/><rect x="36" fill="#1aa2ff"/><rect x="40" fill="#249fff"/><rect x="44" fill="#2e9dff"/><rect x="48" fill="#389bff"/><rect x="52" fill="#4299ff"/><rect x="56" fill="#4c96ff"/><rect x="60" fill="#5694ff"/><rect x="64" fill="#6092ff"/><rect x="68" fill="#6a8fff"/><rect x="72" fill="#748dff"/><rect x="76" fill="#7e8bff"/><rect x="80" fill="#8988ff"/><rect x="84" fill="#9386ff"/><rect x="88" fill="#9e83ff"/><rect x="92" fill="#a881ff"/><rect x="96" fill="#b37eff"/><rect x="100" fill="#be7cff"/><rect x="104" fill="#c879ff"/><rect x="108" fill="#d377ff"/><rect x="112" fill="#de74ff"/><rect x="116" fill="#e972ff"/><rect x="120" fill="#f46fff"/><rect x="124" fill="#ff6cfe"/><rect x="128" fill="#ff65f4"/><rect x="132" fill="#ff5fea"/><rect x="136" fill="#ff59e0"/><rect x="140" fill="#ff53d8"/><rect x="144" fill="#ff4ed0"/><rect x="148" fill="#ff49c8"/><rect x="152" fill="#ff44c1"/><rect x="156" fill="#ff40bb"/><rect x="160" fill="#ff3cb5"/><rect x="164" fill="#ff38af"/><rect x="168" fill="#ff34a9"/><rect x="172" fill="#ff31a4"/><rect x="176" fill="#ff2e9f"/><rect x="180" fill="#ff2b9a"/><rect x="184" fill="#ff2896"/><rect x="188" fill="#ff2592"/><rect x="192" fill="#ff228e"/><rect x="196" fill="#ff208a"/><rect x="200" fill="#ff1d86"/><rect x="204" fill="#ff1b83"/><rect x="208" fill="#ff197f"/><rect x="212" fill="#ff177c"/><rect x="216" fill="#ff1579"/><rect x="220" fill="#ff1376"/><rect x="224" fill="#ff1173"/><rect x="228" fill="#ff0f71"/><rect x="232" fill="#ff0d6e"/><rect x="236" fill="#ff0c6c"/><rect x="240" fill="#ff0a69"/><rect x="244" fill="#ff0967"/><rect x="248" fill="#ff0765"/><rect x="252" fill="#ff0662"/><rect x="256" fill="#ff0460"/><rect x="260" fill="#ff035e"/><rect x="264" fill="#ff025c"/><rect x="268" fill="#ff015a"/><rect x="272" fill="#ff0059"/><rect x="276" fill="#ff0057"/><rect x="280" fill="#f05"/><rect x="284" fill="#ff0053"/></g>
<g transform="translate(1143 272)"><rect x="20" fill="#00a2ff"/><rect x="24" fill="#00a0ff"/><rect x="28" fill="#059eff"/><rect x="32" fill="#0f9cff"/><rect x="36" fill="#189aff"/><rect x="40" fill="#2197ff"/><rect x="44" fill="#2b95ff"/><rect x="48" fill="#3493ff"/><rect x="52" fill="#3e91ff"/><rect x="56" fill="#478eff"/><rect x="60" fill="#518cff"/><rect x="64" fill="#5b8aff"/><rect x="68" fill="#6588ff"/><rect x="72" fill="#6e85ff"/><rect x="76" fill="#7883ff"/><rect x="80" fill="#8281ff"/><rect x="84" fill="#8c7eff"/><rect x="88" fill="#977cff"/><rect x="92" fill="#a17aff"/><rect x="96" fill="#ab77ff"/><rect x="100" fill="#b575ff"/><rect x="104" fill="#c072ff"/><rect x="108" fill="#ca70ff"/><rect x="112" fill="#d56dff"/><rect x="116" fill="#df6bff"/><rect x="120" fill="#ea68ff"/><rect x="124" fill="#f566ff"/><rect x="128" fill="#ff63fe"/><rect x="132" fill="#ff5df4"/><rect x="136" fill="#ff57ea"/><rect x="140" fill="#ff51e1"/><rect x="144" fill="#ff4cd9"/><rect x="148" fill="#ff47d1"/><rect x="152" fill="#ff42ca"/><rect x="156" fill="#ff3ec3"/><rect x="160" fill="#ff3abd"/><rect x="164" fill="#ff36b6"/><rect x="168" fill="#ff33b1"/><rect x="172" fill="#ff2fab"/><rect x="176" fill="#ff2ca6"/><rect x="180" fill="#ff29a1"/><rect x="184" fill="#ff269d"/><rect x="188" fill="#ff2398"/><rect x="192" fill="#ff2194"/><rect x="196" fill="#ff1e90"/><rect x="200" fill="#ff1c8c"/><rect x="204" fill="#ff1a89"/><rect x="208" fill="#ff1785"/><rect x="212" fill="#ff1582"/><rect x="216" fill="#ff137f"/><rect x="220" fill="#ff117b"/><rect x="224" fill="#ff1079"/><rect x="228" fill="#ff0e76"/><rect x="232" fill="#ff0c73"/><rect x="236" fill="#ff0a70"/><rect x="240" fill="#ff096e"/><rect x="244" fill="#ff076b"/><rect x="248" fill="#ff0669"/><rect x="252" fill="#ff0467"/><rect x="256" fill="#ff0365"/><rect x="260" fill="#ff0263"/><rect x="264" fill="#ff0161"/><rect x="268" fill="#ff005f"/><rect x="272" fill="#ff005d"/><rect x="276" fill="#ff005b"/><rect x="280" fill="#ff0059"/></g>
<g transform="translate(1143 276)"><rect x="20" fill="#009aff"/><rect x="24" fill="#0098ff"/><rect x="28" fill="#0496ff"/><rect x="32" fill="#0d94ff"/><rect x="36" fill="#1692ff"/><rect x="40" fill="#1f90ff"/><rect x="44" fill="#288eff"/><rect x="48" fill="#318cff"/><rect x="52" fill="#3a89ff"/><rect x="56" fill="#4487ff"/><rect x="60" fill="#4d85ff"/><rect x="64" fill="#5683ff"/><rect x="68" fill="#6080ff"/><rect x="72" fill="#697eff"/><rect x="76" fill="#737cff"/><rect x="80" fill="#7c7aff"/><rect x="84" fill="#8677ff"/><rect x="88" fill="#9075ff"/><rect x="92" fill="#9a73ff"/><rect x="96" fill="#a470ff"/><rect x="100" fill="#ae6eff"/><rect x="104" fill="#b86cff"/><rect x="108" fill="#c269ff"/><rect x="112" fill="#cc67ff"/><rect x="116" fill="#d664ff"/><rect x="120" fill="#e062ff"/><rect x="124" fill="#eb60ff"/><rect x="128" fill="#f55dff"/><rect x="132" fill="#ff5afe"/><rect x="136" fill="#ff54f4"/><rect x="140" fill="#ff4feb"/><rect x="144" fill="#ff4ae2"/><rect x="148" fill="#ff45da"/><rect x="152" fill="#ff40d2"/><rect x="156" fill="#ff3ccb"/><rect x="160" fill="#ff38c5"/><rect x="164" fill="#ff34be"/><rect x="168" fill="#ff31b8"/><rect x="172" fill="#ff2db3"/><rect x="176" fill="#ff2aad"/><rect x="180" fill="#ff27a8"/><rect x="184" fill="#ff24a3"/><rect x="188" fill="#ff229f"/><rect x="192" fill="#ff1f9a"/><rect x="196" fill="#ff1d96"/><rect x="200" fill="#ff1a92"/><rect x="204" fill="#ff188e"/><rect x="208" fill="#ff168b"/><rect x="212" fill="#ff1487"/><rect x="216" fill="#ff1284"/><rect x="220" fill="#ff1081"/><rect x="224" fill="#ff0e7e"/><rect x="228" fill="#ff0c7b"/><rect x="232" fill="#ff0b78"/><rect x="236" fill="#ff0975"/><rect x="240" fill="#ff0873"/><rect x="244" fill="#ff0670"/><rect x="248" fill="#ff056e"/><rect x="252" fill="#ff036b"/><rect x="256" fill="#ff0269"/><rect x="260" fill="#ff0167"/><rect x="264" fill="#ff0065"/><rect x="268" fill="#ff0063"/><rect x="272" fill="#ff0061"/><rect x="276" fill="#ff005f"/></g>
<g transform="translate(1143 280)"><rect x="20" fill="#0093ff"/><rect x="24" fill="#0091ff"/><rect x="28" fill="#028fff"/><rect x="32" fill="#0b8dff"/><rect x="36" fill="#148bff"/><rect x="40" fill="#1c89ff"/><rect x="44" fill="#2587ff"/><rect x="48" fill="#2e85ff"/><rect x="52" fill="#3782ff"/><rect x="56" fill="#4080ff"/><rect x="60" fill="#497eff"/><rect x="64" fill="#527cff"/><rect x="68" fill="#5b7aff"/><rect x="72" fill="#6478ff"/><rect x="76" fill="#6e75ff"/><rect x="80" fill="#7773ff"/><rect x="84" fill="#8071ff"/><rect x="88" fill="#8a6fff"/><rect x="92" fill="#936cff"/><rect x="96" fill="#9d6aff"/><rect x="100" fill="#a668ff"/><rect x="104" fill="#b066ff"/><rect x="108" fill="#ba63ff"/><rect x="112" fill="#c361ff"/><rect x="116" fill="#cd5eff"/><rect x="120" fill="#d75cff"/><rect x="124" fill="#e15aff"/><rect x="128" fill="#eb57ff"/><rect x="132" fill="#f555ff"/><rect x="136" fill="#ff52ff"/><rect x="140" fill="#ff4df5"/><rect x="144" fill="#ff48ec"/><rect x="148" fill="#ff43e3"/><rect x="152" fill="#ff3edb"/><rect x="156" fill="#ff3ad4"/><rect x="160" fill="#ff36cd"/><rect x="164" fill="#ff32c6"/><rect x="168" fill="#ff2fc0"/><rect x="172" fill="#ff2cba"/><rect x="176" fill="#ff28b4"/><rect x="180" fill="#ff25af"/><rect x="184" fill="#ff23aa"/><rect x="188" fill="#ff20a5"/><rect x="192" fill="#ff1da1"/><rect x="196" fill="#ff1b9c"/><rect x="200" fill="#ff1998"/><rect x="204" fill="#ff1694"/><rect x="208" fill="#ff1490"/><rect x="212" fill="#ff128d"/><rect x="216" fill="#ff1089"/><rect x="220" fill="#ff0e86"/><rect x="224" fill="#ff0d83"/><rect x="228" fill="#ff0b80"/><rect x="232" fill="#ff097d"/><rect x="236" fill="#ff087a"/><rect x="240" fill="#ff0677"/><rect x="244" fill="#ff0575"/><rect x="248" fill="#ff0372"/><rect x="252" fill="#ff0270"/><rect x="256" fill="#ff016e"/><rect x="260" fill="#ff006b"/><rect x="264" fill="#ff0069"/><rect x="268" fill="#ff0067"/><rect x="272" fill="#ff0065"/></g>
<g transform="translate(1143 284)"><rect x="20" fill="#008cff"/><rect x="24" fill="#008aff"/><rect x="28" fill="#0188ff"/><rect x="32" fill="#0986ff"/><rect x="36" fill="#1284ff"/><rect x="40" fill="#1a82ff"/><rect x="44" fill="#2380ff"/><rect x="48" fill="#2b7eff"/><rect x="52" fill="#347cff"/><rect x="56" fill="#3d7aff"/><rect x="60" fill="#4578ff"/><rect x="64" fill="#4e76ff"/><rect x="68" fill="#5774ff"/><rect x="72" fill="#6071ff"/><rect x="76" fill="#696fff"/><rect x="80" fill="#726dff"/><rect x="84" fill="#7b6bff"/><rect x="88" fill="#8469ff"/><rect x="92" fill="#8d66ff"/><rect x="96" fill="#9664ff"/><rect x="100" fill="#a062ff"/><rect x="104" fill="#a960ff"/><rect x="108" fill="#b25dff"/><rect x="112" fill="#bc5bff"/><rect x="116" fill="#c559ff"/><rect x="120" fill="#cf57ff"/><rect x="124" fill="#d854ff"/><rect x="128" fill="#e252ff"/><rect x="132" fill="#ec50ff"/><rect x="136" fill="#f64dff"/><rect x="140" fill="#ff4bff"/><rect x="144" fill="#ff46f5"/><rect x="148" fill="#ff41ec"/><rect x="152" fill="#ff3ce4"/><rect x="156" fill="#ff38dc"/><rect x="160" fill="#ff34d5"/><rect x="164" fill="#ff31ce"/><rect x="168" fill="#ff2dc7"/><rect x="172" fill="#ff2ac1"/><rect x="176" fill="#ff27bb"/><rect x="180" fill="#ff24b6"/><rect x="184" fill="#ff21b1"/><rect x="188" fill="#ff1eac"/><rect x="192" fill="#ff1ca7"/><rect x="196" fill="#ff19a3"/><rect x="200" fill="#ff179e"/><rect x="204" fill="#ff159a"/><rect x="208" fill="#ff1396"/><rect x="212" fill="#ff1193"/><rect x="216" fill="#ff0f8f"/><rect x="220" fill="#ff0d8b"/><rect x="224" fill="#ff0b88"/><rect x="228" fill="#ff0a85"/><rect x="232" fill="#ff0882"/><rect x="236" fill="#ff067f"/><rect x="240" fill="#ff057c"/><rect x="244" fill="#ff037a"/><rect x="248" fill="#ff0277"/><rect x="252" fill="#ff0174"/><rect x="256" fill="#ff0072"/><rect x="260" fill="#ff0070"/><rect x="264" fill="#ff006d"/><rect x="268" fill="#ff006b"/></g>
<g transform="translate(1143 288)"><rect x="20" fill="#0086ff"/><rect x="24" fill="#0084ff"/><rect x="28" fill="#0082ff"/><rect x="32" fill="#0880ff"/><rect x="36" fill="#107eff"/><rect x="40" fill="#187cff"/><rect x="44" fill="#207aff"/><rect x="48" fill="#2978ff"/><rect x="52" fill="#3176ff"/><rect x="56" fill="#3974ff"/><rect x="60" fill="#4272ff"/><rect x="64" fill="#4a70ff"/><rect x="68" fill="#536eff"/><rect x="72" fill="#5c6cff"/><rect x="76" fill="#6469ff"/><rect x="80" fill="#6d67ff"/><rect x="84" fill="#7665ff"/><rect x="88" fill="#7e63ff"/><rect x="92" fill="#8761ff"/><rect x="96" fill="#905fff"/><rect x="100" fill="#995dff"/><rect x="104" fill="#a25aff"/><rect x="108" fill="#ab58ff"/><rect x="112" fill="#b456ff"/><rect x="116" fill="#be54ff"/><rect x="120" fill="#c751ff"/><rect x="124" fill="#d04fff"/><rect x="128" fill="#d94dff"/><rect x="132" fill="#e34bff"/><rect x="136" fill="#ec48ff"/><rect x="140" fill="#f646ff"/><rect x="144" fill="#ff43ff"/><rect x="148" fill="#ff3ff5"/><rect x="152" fill="#ff3aed"/><rect x="156" fill="#ff36e5"/><rect x="160" fill="#ff32dd"/><rect x="164" fill="#ff2fd6"/><rect x="168" fill="#ff2bcf"/><rect x="172" fill="#ff28c9"/><rect x="176" fill="#ff25c3"/><rect x="180" fill="#ff22bd"/><rect x="184" fill="#ff1fb8"/><rect x="188" fill="#ff1db2"/><rect x="192" fill="#ff1aad"/><rect x="196" fill="#ff18a9"/><rect x="200" fill="#ff15a4"/><rect x="204" fill="#ff13a0"/><rect x="208" fill="#ff119c"/><rect x="212" fill="#ff0f98"/><rect x="216" fill="#ff0d94"/><rect x="220" fill="#ff0c91"/><rect x="224" fill="#ff0a8d"/><rect x="228" fill="#ff088a"/><rect x="232" fill="#ff0787"/><rect x="236" fill="#ff0584"/><rect x="240" fill="#ff0481"/><rect x="244" fill="#ff027e"/><rect x="248" fill="#ff017c"/><rect x="252" fill="#ff0079"/><rect x="256" fill="#ff0076"/><rect x="260" fill="#ff0074"/><rect x="264" fill="#ff0072"/></g>
<g transform="translate(1143 292)"><rect x="20" fill="#0080ff"/><rect x="24" fill="#007eff"/><rect x="28" fill="#007cff"/><rect x="32" fill="#067aff"/><rect x="36" fill="#0e78ff"/><rect x="40" fill="#1676ff"/><rect x="44" fill="#1e74ff"/><rect x="48" fill="#2672ff"/><rect x="52" fill="#2e70ff"/><rect x="56" fill="#366eff"/><rect x="60" fill="#3f6cff"/><rect x="64" fill="#476aff"/><rect x="68" fill="#4f68ff"/><rect x="72" fill="#5866ff"/><rect x="76" fill="#6064ff"/><rect x="80" fill="#6862ff"/><rect x="84" fill="#7160ff"/><rect x="88" fill="#795eff"/><rect x="92" fill="#825cff"/><rect x="96" fill="#8b5aff"/><rect x="100" fill="#9357ff"/><rect x="104" fill="#9c55ff"/><rect x="108" fill="#a553ff"/><rect x="112" fill="#ae51ff"/><rect x="116" fill="#b64fff"/><rect x="120" fill="#bf4dff"/><rect x="124" fill="#c84aff"/><rect x="128" fill="#d148ff"/><rect x="132" fill="#da46ff"/><rect x="136" fill="#e444ff"/><rect x="140" fill="#ed41ff"/><rect x="144" fill="#f63fff"/><rect x="148" fill="#ff3dff"/><rect x="152" fill="#ff38f6"/><rect x="156" fill="#ff34ed"/><rect x="160" fill="#ff30e5"/><rect x="164" fill="#ff2dde"/><rect x="168" fill="#ff29d7"/><rect x="172" fill="#ff26d0"/><rect x="176" fill="#ff23ca"/><rect x="180" fill="#ff20c4"/><rect x="184" fill="#ff1ebe"/><rect x="188" fill="#ff1bb9"/><rect x="192" fill="#ff18b4"/><rect x="196" fill="#ff16af"/><rect x="200" fill="#ff14ab"/><rect x="204" fill="#ff12a6"/><rect x="208" fill="#ff10a2"/><rect x="212" fill="#ff0e9e"/><rect x="216" fill="#ff0c9a"/><rect x="220" fill="#ff0a96"/><rect x="224" fill="#ff0893"/><rect x="228" fill="#ff078f"/><rect x="232" fill="#ff058c"/><rect x="236" fill="#ff0489"/><rect x="240" fill="#ff0286"/><rect x="244" fill="#ff0183"/><rect x="248" fill="#ff0080"/><rect x="252" fill="#ff007e"/><rect x="256" fill="#ff007b"/><rect x="260" fill="#ff0078"/></g>
<g transform="translate(1143 296)"><rect x="24" fill="#0078ff"/><rect x="28" fill="#0076ff"/><rect x="32" fill="#0575ff"/><rect x="36" fill="#0c73ff"/><rect x="40" fill="#1471ff"/><rect x="44" fill="#1c6fff"/><rect x="48" fill="#246dff"/><rect x="52" fill="#2c6bff"/><rect x="56" fill="#3469ff"/><rect x="60" fill="#3c67ff"/><rect x="64" fill="#4465ff"/><rect x="68" fill="#4c63ff"/><rect x="72" fill="#5461ff"/><rect x="76" fill="#5c5fff"/><rect x="80" fill="#645dff"/><rect x="84" fill="#6c5bff"/><rect x="88" fill="#7559ff"/><rect x="92" fill="#7d57ff"/><rect x="96" fill="#8555ff"/><rect x="100" fill="#8e53ff"/><rect x="104" fill="#9650ff"/><rect x="108" fill="#9f4eff"/><rect x="112" fill="#a74cff"/><rect x="116" fill="#b04aff"/><rect x="120" fill="#b848ff"/><rect x="124" fill="#c146ff"/><rect x="128" fill="#ca44ff"/><rect x="132" fill="#d341ff"/><rect x="136" fill="#db3fff"/><rect x="140" fill="#e43dff"/><rect x="144" fill="#ed3bff"/><rect x="148" fill="#f639ff"/><rect x="152" fill="#ff36ff"/><rect x="156" fill="#ff32f6"/><rect x="160" fill="#ff2eee"/><rect x="164" fill="#ff2be6"/><rect x="168" fill="#ff27df"/><rect x="172" fill="#ff24d8"/><rect x="176" fill="#ff21d1"/><rect x="180" fill="#ff1ecb"/><rect x="184" fill="#ff1cc5"/><rect x="188" fill="#ff19c0"/><rect x="192" fill="#ff17bb"/><rect x="196" fill="#ff14b6"/><rect x="200" fill="#ff12b1"/><rect x="204" fill="#ff10ac"/><rect x="208" fill="#ff0ea8"/><rect x="212" fill="#ff0ca4"/><rect x="216" fill="#ff0aa0"/><rect x="220" fill="#ff099c"/><rect x="224" fill="#ff0798"/><rect x="228" fill="#ff0595"/><rect x="232" fill="#ff0491"/><rect x="236" fill="#ff028e"/><rect x="240" fill="#ff018b"/><rect x="244" fill="#f08"/><rect x="248" fill="#ff0085"/><rect x="252" fill="#ff0082"/><rect x="256" fill="#ff0080"/></g>
<g transform="translate(1143 300)"><rect x="24" fill="#0073ff"/><rect x="28" fill="#0071ff"/><rect x="32" fill="#036fff"/><rect x="36" fill="#0b6dff"/><rect x="40" fill="#126cff"/><rect x="44" fill="#1a6aff"/><rect x="48" fill="#2268ff"/><rect x="52" fill="#2966ff"/><rect x="56" fill="#3164ff"/><rect x="60" fill="#3962ff"/><rect x="64" fill="#4060ff"/><rect x="68" fill="#485eff"/><rect x="72" fill="#505cff"/><rect x="76" fill="#585aff"/><rect x="80" fill="#6058ff"/><rect x="84" fill="#6856ff"/><rect x="88" fill="#7054ff"/><rect x="92" fill="#7852ff"/><rect x="96" fill="#8050ff"/><rect x="100" fill="#884eff"/><rect x="104" fill="#914cff"/><rect x="108" fill="#994aff"/><rect x="112" fill="#a148ff"/><rect x="116" fill="#a946ff"/><rect x="120" fill="#b244ff"/><rect x="124" fill="#ba42ff"/><rect x="128" fill="#c33fff"/><rect x="132" fill="#cb3dff"/><rect x="136" fill="#d43bff"/><rect x="140" fill="#dc39ff"/><rect x="144" fill="#e537ff"/><rect x="148" fill="#ee35ff"/><rect x="152" fill="#f632ff"/><rect x="156" fill="#ff30ff"/><rect x="160" fill="#ff2cf6"/><rect x="164" fill="#ff29ee"/><rect x="168" fill="#ff26e7"/><rect x="172" fill="#ff22e0"/><rect x="176" fill="#ff1fd9"/><rect x="180" fill="#ff1dd2"/><rect x="184" fill="#ff1acc"/><rect x="188" fill="#ff18c7"/><rect x="192" fill="#ff15c1"/><rect x="196" fill="#ff13bc"/><rect x="200" fill="#ff11b7"/><rect x="204" fill="#ff0fb2"/><rect x="208" fill="#ff0dae"/><rect x="212" fill="#ff0ba9"/><rect x="216" fill="#ff09a5"/><rect x="220" fill="#ff07a1"/><rect x="224" fill="#ff059e"/><rect x="228" fill="#ff049a"/><rect x="232" fill="#ff0296"/><rect x="236" fill="#ff0193"/><rect x="240" fill="#ff0090"/><rect x="244" fill="#ff008d"/><rect x="248" fill="#ff008a"/><rect x="252" fill="#ff0087"/></g>
<g transform="translate(1143 304)"><rect x="24" fill="#006eff"/><rect x="28" fill="#006cff"/><rect x="32" fill="#026aff"/><rect x="36" fill="#0968ff"/><rect x="40" fill="#1167ff"/><rect x="44" fill="#1865ff"/><rect x="48" fill="#2063ff"/><rect x="52" fill="#2761ff"/><rect x="56" fill="#2e5fff"/><rect x="60" fill="#365dff"/><rect x="64" fill="#3e5bff"/><rect x="68" fill="#4559ff"/><rect x="72" fill="#4d57ff"/><rect x="76" fill="#5456ff"/><rect x="80" fill="#5c54ff"/><rect x="84" fill="#6452ff"/><rect x="88" fill="#6c50ff"/><rect x="92" fill="#744eff"/><rect x="96" fill="#7b4cff"/><rect x="100" fill="#834aff"/><rect x="104" fill="#8b48ff"/><rect x="108" fill="#9346ff"/><rect x="112" fill="#9b44ff"/><rect x="116" fill="#a342ff"/><rect x="120" fill="#ac40ff"/><rect x="124" fill="#b43eff"/><rect x="128" fill="#bc3bff"/><rect x="132" fill="#c439ff"/><rect x="136" fill="#cc37ff"/><rect x="140" fill="#d535ff"/><rect x="144" fill="#d3f"/><rect x="148" fill="#e631ff"/><rect x="152" fill="#ee2fff"/><rect x="156" fill="#f72dff"/><rect x="160" fill="#ff2aff"/><rect x="164" fill="#ff27f6"/><rect x="168" fill="#ff24ef"/><rect x="172" fill="#ff21e7"/><rect x="176" fill="#ff1ee0"/><rect x="180" fill="#ff1bda"/><rect x="184" fill="#ff18d3"/><rect x="188" fill="#ff16cd"/><rect x="192" fill="#ff13c8"/><rect x="196" fill="#ff11c2"/><rect x="200" fill="#ff0fbd"/><rect x="204" fill="#ff0db8"/><rect x="208" fill="#ff0bb4"/><rect x="212" fill="#ff09af"/><rect x="216" fill="#ff07ab"/><rect x="220" fill="#ff06a7"/><rect x="224" fill="#ff04a3"/><rect x="228" fill="#ff029f"/><rect x="232" fill="#ff019c"/><rect x="236" fill="#ff0098"/><rect x="240" fill="#ff0095"/><rect x="244" fill="#ff0092"/><rect x="248" fill="#ff008f"/></g>
<g transform="translate(1143 308)"><rect x="24" fill="#0069ff"/><rect x="28" fill="#0067ff"/><rect x="32" fill="#0166ff"/><rect x="36" fill="#0864ff"/><rect x="40" fill="#0f62ff"/><rect x="44" fill="#1660ff"/><rect x="48" fill="#1e5eff"/><rect x="52" fill="#255cff"/><rect x="56" fill="#2c5bff"/><rect x="60" fill="#3359ff"/><rect x="64" fill="#3b57ff"/><rect x="68" fill="#4255ff"/><rect x="72" fill="#4a53ff"/><rect x="76" fill="#5151ff"/><rect x="80" fill="#594fff"/><rect x="84" fill="#604dff"/><rect x="88" fill="#684bff"/><rect x="92" fill="#6f4aff"/><rect x="96" fill="#7748ff"/><rect x="100" fill="#7f46ff"/><rect x="104" fill="#8644ff"/><rect x="108" fill="#8e42ff"/><rect x="112" fill="#9640ff"/><rect x="116" fill="#9e3eff"/><rect x="120" fill="#a63cff"/><rect x="124" fill="#ae3aff"/><rect x="128" fill="#b638ff"/><rect x="132" fill="#be36ff"/><rect x="136" fill="#c634ff"/><rect x="140" fill="#ce32ff"/><rect x="144" fill="#d62fff"/><rect x="148" fill="#de2dff"/><rect x="152" fill="#e62bff"/><rect x="156" fill="#ee29ff"/><rect x="160" fill="#f727ff"/><rect x="164" fill="#ff25ff"/><rect x="168" fill="#ff22f7"/><rect x="172" fill="#ff1fef"/><rect x="176" fill="#ff1ce8"/><rect x="180" fill="#ff19e1"/><rect x="184" fill="#ff16db"/><rect x="188" fill="#ff14d4"/><rect x="192" fill="#ff12cf"/><rect x="196" fill="#ff0fc9"/><rect x="200" fill="#ff0dc4"/><rect x="204" fill="#ff0bbf"/><rect x="208" fill="#ff09ba"/><rect x="212" fill="#ff08b5"/><rect x="216" fill="#ff06b1"/><rect x="220" fill="#ff04ad"/><rect x="224" fill="#ff03a8"/><rect x="228" fill="#ff01a5"/><rect x="232" fill="#ff00a1"/><rect x="236" fill="#ff009d"/><rect x="240" fill="#ff009a"/><rect x="244" fill="#ff0097"/></g>
<g transform="translate(1143 312)"><rect x="24" fill="#0065ff"/><rect x="28" fill="#0063ff"/><rect x="32" fill="#0061ff"/><rect x="36" fill="#075fff"/><rect x="40" fill="#0e5dff"/><rect x="44" fill="#155cff"/><rect x="48" fill="#1c5aff"/><rect x="52" fill="#2358ff"/><rect x="56" fill="#2a56ff"/><rect x="60" fill="#3154ff"/><rect x="64" fill="#3853ff"/><rect x="68" fill="#3f51ff"/><rect x="72" fill="#474fff"/><rect x="76" fill="#4e4dff"/><rect x="80" fill="#554bff"/><rect x="84" fill="#5c49ff"/><rect x="88" fill="#6447ff"/><rect x="92" fill="#6b46ff"/><rect x="96" fill="#7344ff"/><rect x="100" fill="#7a42ff"/><rect x="104" fill="#8240ff"/><rect x="108" fill="#893eff"/><rect x="112" fill="#913cff"/><rect x="116" fill="#983aff"/><rect x="120" fill="#a038ff"/><rect x="124" fill="#a836ff"/><rect x="128" fill="#b034ff"/><rect x="132" fill="#b732ff"/><rect x="136" fill="#bf30ff"/><rect x="140" fill="#c72eff"/><rect x="144" fill="#cf2cff"/><rect x="148" fill="#d72aff"/><rect x="152" fill="#df28ff"/><rect x="156" fill="#e726ff"/><rect x="160" fill="#ef24ff"/><rect x="164" fill="#f722ff"/><rect x="168" fill="#ff20ff"/><rect x="172" fill="#ff1df7"/><rect x="176" fill="#ff1aef"/><rect x="180" fill="#ff17e8"/><rect x="184" fill="#ff15e2"/><rect x="188" fill="#ff12db"/><rect x="192" fill="#ff10d5"/><rect x="196" fill="#ff0ed0"/><rect x="200" fill="#ff0cca"/><rect x="204" fill="#ff0ac5"/><rect x="208" fill="#ff08c0"/><rect x="212" fill="#ff06bb"/><rect x="216" fill="#ff04b7"/><rect x="220" fill="#ff03b2"/><rect x="224" fill="#ff01ae"/><rect x="228" fill="#f0a"/><rect x="232" fill="#ff00a6"/><rect x="236" fill="#ff00a2"/><rect x="240" fill="#ff009f"/></g>
<g transform="translate(1143 316)"><rect x="24" fill="#0060ff"/><rect x="28" fill="#005eff"/><rect x="32" fill="#005dff"/><rect x="36" fill="#055bff"/><rect x="40" fill="#0c59ff"/><rect x="44" fill="#1357ff"/><rect x="48" fill="#1a56ff"/><rect x="52" fill="#2154ff"/><rect x="56" fill="#2852ff"/><rect x="60" fill="#2f50ff"/><rect x="64" fill="#364fff"/><rect x="68" fill="#3d4dff"/><rect x="72" fill="#444bff"/><rect x="76" fill="#4b49ff"/><rect x="80" fill="#5247ff"/><rect x="84" fill="#5946ff"/><rect x="88" fill="#6044ff"/><rect x="92" fill="#6742ff"/><rect x="96" fill="#6f40ff"/><rect x="100" fill="#763eff"/><rect x="104" fill="#7d3cff"/><rect x="108" fill="#853aff"/><rect x="112" fill="#8c38ff"/><rect x="116" fill="#9337ff"/><rect x="120" fill="#9b35ff"/><rect x="124" fill="#a233ff"/><rect x="128" fill="#aa31ff"/><rect x="132" fill="#b12fff"/><rect x="136" fill="#b92dff"/><rect x="140" fill="#c12bff"/><rect x="144" fill="#c829ff"/><rect x="148" fill="#d027ff"/><rect x="152" fill="#d825ff"/><rect x="156" fill="#e023ff"/><rect x="160" fill="#e721ff"/><rect x="164" fill="#ef1fff"/><rect x="168" fill="#f71dff"/><rect x="172" fill="#ff1bff"/><rect x="176" fill="#ff18f7"/><rect x="180" fill="#ff15f0"/><rect x="184" fill="#ff13e9"/><rect x="188" fill="#ff10e2"/><rect x="192" fill="#ff0edc"/><rect x="196" fill="#ff0cd6"/><rect x="200" fill="#ff0ad1"/><rect x="204" fill="#ff08cb"/><rect x="208" fill="#ff06c6"/><rect x="212" fill="#ff04c1"/><rect x="216" fill="#ff03bc"/><rect x="220" fill="#ff01b8"/><rect x="224" fill="#ff00b4"/><rect x="228" fill="#ff00af"/><rect x="232" fill="#ff00ab"/><rect x="236" fill="#ff00a8"/></g>
<g transform="translate(1143 320)"><rect x="28" fill="#005aff"/><rect x="32" fill="#0059ff"/><rect x="36" fill="#0457ff"/><rect x="40" fill="#0b55ff"/><rect x="44" fill="#1254ff"/><rect x="48" fill="#1852ff"/><rect x="52" fill="#1f50ff"/><rect x="56" fill="#264eff"/><rect x="60" fill="#2c4dff"/><rect x="64" fill="#334bff"/><rect x="68" fill="#3a49ff"/><rect x="72" fill="#4147ff"/><rect x="76" fill="#4845ff"/><rect x="80" fill="#4f44ff"/><rect x="84" fill="#5642ff"/><rect x="88" fill="#5d40ff"/><rect x="92" fill="#643eff"/><rect x="96" fill="#6b3cff"/><rect x="100" fill="#723bff"/><rect x="104" fill="#7939ff"/><rect x="108" fill="#8037ff"/><rect x="112" fill="#8735ff"/><rect x="116" fill="#8e33ff"/><rect x="120" fill="#9631ff"/><rect x="124" fill="#9d2fff"/><rect x="128" fill="#a42eff"/><rect x="132" fill="#ac2cff"/><rect x="136" fill="#b32aff"/><rect x="140" fill="#bb28ff"/><rect x="144" fill="#c226ff"/><rect x="148" fill="#ca24ff"/><rect x="152" fill="#d122ff"/><rect x="156" fill="#d920ff"/><rect x="160" fill="#e01eff"/><rect x="164" fill="#e81cff"/><rect x="168" fill="#f01aff"/><rect x="172" fill="#f718ff"/><rect x="176" fill="#ff16ff"/><rect x="180" fill="#ff13f7"/><rect x="184" fill="#ff11f0"/><rect x="188" fill="#ff0fe9"/><rect x="192" fill="#ff0ce3"/><rect x="196" fill="#ff0add"/><rect x="200" fill="#ff08d7"/><rect x="204" fill="#ff06d1"/><rect x="208" fill="#ff05cc"/><rect x="212" fill="#ff03c7"/><rect x="216" fill="#ff01c2"/><rect x="220" fill="#ff00be"/><rect x="224" fill="#ff00b9"/><rect x="228" fill="#ff00b5"/><rect x="232" fill="#ff00b1"/></g>
<g transform="translate(1143 324)"><rect x="28" fill="#0056ff"/><rect x="32" fill="#05f"/><rect x="36" fill="#0353ff"/><rect x="40" fill="#0a51ff"/><rect x="44" fill="#1050ff"/><rect x="48" fill="#174eff"/><rect x="52" fill="#1d4cff"/><rect x="56" fill="#244bff"/><rect x="60" fill="#2a49ff"/><rect x="64" fill="#3147ff"/><rect x="68" fill="#3845ff"/><rect x="72" fill="#3e44ff"/><rect x="76" fill="#4542ff"/><rect x="80" fill="#4c40ff"/><rect x="84" fill="#533eff"/><rect x="88" fill="#593dff"/><rect x="92" fill="#603bff"/><rect x="96" fill="#6739ff"/><rect x="100" fill="#6e37ff"/><rect x="104" fill="#7536ff"/><rect x="108" fill="#7c34ff"/><rect x="112" fill="#8332ff"/><rect x="116" fill="#8a30ff"/><rect x="120" fill="#912eff"/><rect x="124" fill="#982cff"/><rect x="128" fill="#9f2bff"/><rect x="132" fill="#a629ff"/><rect x="136" fill="#ae27ff"/><rect x="140" fill="#b525ff"/><rect x="144" fill="#bc23ff"/><rect x="148" fill="#c321ff"/><rect x="152" fill="#cb1fff"/><rect x="156" fill="#d21dff"/><rect x="160" fill="#d91bff"/><rect x="164" fill="#e119ff"/><rect x="168" fill="#e817ff"/><rect x="172" fill="#f016ff"/><rect x="176" fill="#f714ff"/><rect x="180" fill="#ff12ff"/><rect x="184" fill="#ff0ff8"/><rect x="188" fill="#ff0df1"/><rect x="192" fill="#ff0bea"/><rect x="196" fill="#ff09e4"/><rect x="200" fill="#ff07de"/><rect x="204" fill="#ff05d8"/><rect x="208" fill="#ff03d2"/><rect x="212" fill="#ff01cd"/><rect x="216" fill="#ff00c8"/><rect x="220" fill="#ff00c3"/><rect x="224" fill="#ff00bf"/><rect x="228" fill="#ff00ba"/></g>
<g transform="translate(1143 328)"><rect x="28" fill="#0053ff"/><rect x="32" fill="#0051ff"/><rect x="36" fill="#024fff"/><rect x="40" fill="#084eff"/><rect x="44" fill="#0f4cff"/><rect x="48" fill="#154aff"/><rect x="52" fill="#1b49ff"/><rect x="56" fill="#2247ff"/><rect x="60" fill="#2845ff"/><rect x="64" fill="#2f44ff"/><rect x="68" fill="#3542ff"/><rect x="72" fill="#3c40ff"/><rect x="76" fill="#423fff"/><rect x="80" fill="#493dff"/><rect x="84" fill="#503bff"/><rect x="88" fill="#5639ff"/><rect x="92" fill="#5d38ff"/><rect x="96" fill="#6436ff"/><rect x="100" fill="#6a34ff"/><rect x="104" fill="#7132ff"/><rect x="108" fill="#7831ff"/><rect x="112" fill="#7f2fff"/><rect x="116" fill="#862dff"/><rect x="120" fill="#8c2bff"/><rect x="124" fill="#9329ff"/><rect x="128" fill="#9a28ff"/><rect x="132" fill="#a126ff"/><rect x="136" fill="#a824ff"/><rect x="140" fill="#af22ff"/><rect x="144" fill="#b620ff"/><rect x="148" fill="#be1eff"/><rect x="152" fill="#c51dff"/><rect x="156" fill="#cc1bff"/><rect x="160" fill="#d319ff"/><rect x="164" fill="#da17ff"/><rect x="168" fill="#e215ff"/><rect x="172" fill="#e913ff"/><rect x="176" fill="#f011ff"/><rect x="180" fill="#f80fff"/><rect x="184" fill="#ff0dff"/><rect x="188" fill="#ff0bf8"/><rect x="192" fill="#ff09f1"/><rect x="196" fill="#ff07ea"/><rect x="200" fill="#ff05e4"/><rect x="204" fill="#ff03de"/><rect x="208" fill="#ff01d9"/><rect x="212" fill="#ff00d3"/><rect x="216" fill="#ff00ce"/><rect x="220" fill="#ff00c9"/><rect x="224" fill="#ff00c4"/></g>
<g transform="translate(1143 332)"><rect x="28" fill="#004fff"/><rect x="32" fill="#004dff"/><rect x="36" fill="#014cff"/><rect x="40" fill="#074aff"/><rect x="44" fill="#0d49ff"/><rect x="48" fill="#1447ff"/><rect x="52" fill="#1a45ff"/><rect x="56" fill="#2044ff"/><rect x="60" fill="#2642ff"/><rect x="64" fill="#2d40ff"/><rect x="68" fill="#333fff"/><rect x="72" fill="#393dff"/><rect x="76" fill="#403bff"/><rect x="80" fill="#463aff"/><rect x="84" fill="#4d38ff"/><rect x="88" fill="#5336ff"/><rect x="92" fill="#5a35ff"/><rect x="96" fill="#6033ff"/><rect x="100" fill="#6731ff"/><rect x="104" fill="#6d2fff"/><rect x="108" fill="#742eff"/><rect x="112" fill="#7b2cff"/><rect x="116" fill="#812aff"/><rect x="120" fill="#8828ff"/><rect x="124" fill="#8f27ff"/><rect x="128" fill="#9625ff"/><rect x="132" fill="#9c23ff"/><rect x="136" fill="#a321ff"/><rect x="140" fill="#aa1fff"/><rect x="144" fill="#b11eff"/><rect x="148" fill="#b81cff"/><rect x="152" fill="#bf1aff"/><rect x="156" fill="#c618ff"/><rect x="160" fill="#cd16ff"/><rect x="164" fill="#d414ff"/><rect x="168" fill="#db13ff"/><rect x="172" fill="#e211ff"/><rect x="176" fill="#e90fff"/><rect x="180" fill="#f00dff"/><rect x="184" fill="#f80bff"/><rect x="188" fill="#ff09ff"/><rect x="192" fill="#ff07f8"/><rect x="196" fill="#ff05f1"/><rect x="200" fill="#ff03eb"/><rect x="204" fill="#ff01e5"/><rect x="208" fill="#ff00df"/><rect x="212" fill="#ff00d9"/><rect x="216" fill="#ff00d4"/><rect x="220" fill="#ff00cf"/></g>
<g transform="translate(1143 336)"><rect x="28" fill="#004cff"/><rect x="32" fill="#004aff"/><rect x="36" fill="#0049ff"/><rect x="40" fill="#0647ff"/><rect x="44" fill="#0c45ff"/><rect x="48" fill="#1244ff"/><rect x="52" fill="#1842ff"/><rect x="56" fill="#1e41ff"/><rect x="60" fill="#253fff"/><rect x="64" fill="#2b3dff"/><rect x="68" fill="#313cff"/><rect x="72" fill="#373aff"/><rect x="76" fill="#3d38ff"/><rect x="80" fill="#4437ff"/><rect x="84" fill="#4a35ff"/><rect x="88" fill="#5033ff"/><rect x="92" fill="#5732ff"/><rect x="96" fill="#5d30ff"/><rect x="100" fill="#632eff"/><rect x="104" fill="#6a2dff"/><rect x="108" fill="#702bff"/><rect x="112" fill="#7729ff"/><rect x="116" fill="#7d27ff"/><rect x="120" fill="#8426ff"/><rect x="124" fill="#8b24ff"/><rect x="128" fill="#9122ff"/><rect x="132" fill="#9820ff"/><rect x="136" fill="#9e1fff"/><rect x="140" fill="#a51dff"/><rect x="144" fill="#ac1bff"/><rect x="148" fill="#b319ff"/><rect x="152" fill="#b918ff"/><rect x="156" fill="#c016ff"/><rect x="160" fill="#c714ff"/><rect x="164" fill="#ce12ff"/><rect x="168" fill="#d510ff"/><rect x="172" fill="#dc0fff"/><rect x="176" fill="#e30dff"/><rect x="180" fill="#ea0bff"/><rect x="184" fill="#f109ff"/><rect x="188" fill="#f807ff"/><rect x="192" fill="#ff05ff"/><rect x="196" fill="#ff03f8"/><rect x="200" fill="#ff01f2"/><rect x="204" fill="#ff00eb"/><rect x="208" fill="#ff00e5"/><rect x="212" fill="#ff00e0"/><rect x="216" fill="#ff00da"/></g>
<g transform="translate(1143 340)"><rect x="28" fill="#0048ff"/><rect x="32" fill="#0047ff"/><rect x="36" fill="#0045ff"/><rect x="40" fill="#0544ff"/><rect x="44" fill="#0b42ff"/><rect x="48" fill="#1141ff"/><rect x="52" fill="#173fff"/><rect x="56" fill="#1d3dff"/><rect x="60" fill="#233cff"/><rect x="64" fill="#293aff"/><rect x="68" fill="#2f39ff"/><rect x="72" fill="#3537ff"/><rect x="76" fill="#3b35ff"/><rect x="80" fill="#4134ff"/><rect x="84" fill="#4732ff"/><rect x="88" fill="#4e30ff"/><rect x="92" fill="#542fff"/><rect x="96" fill="#5a2dff"/><rect x="100" fill="#602cff"/><rect x="104" fill="#672aff"/><rect x="108" fill="#6d28ff"/><rect x="112" fill="#7327ff"/><rect x="116" fill="#7a25ff"/><rect x="120" fill="#8023ff"/><rect x="124" fill="#8621ff"/><rect x="128" fill="#8d20ff"/><rect x="132" fill="#931eff"/><rect x="136" fill="#9a1cff"/><rect x="140" fill="#a01bff"/><rect x="144" fill="#a719ff"/><rect x="148" fill="#ae17ff"/><rect x="152" fill="#b415ff"/><rect x="156" fill="#bb14ff"/><rect x="160" fill="#c212ff"/><rect x="164" fill="#c810ff"/><rect x="168" fill="#cf0eff"/><rect x="172" fill="#d60cff"/><rect x="176" fill="#dc0bff"/><rect x="180" fill="#e309ff"/><rect x="184" fill="#ea07ff"/><rect x="188" fill="#f105ff"/><rect x="192" fill="#f803ff"/><rect x="196" fill="#ff01ff"/><rect x="200" fill="#ff00f8"/><rect x="204" fill="#ff00f2"/><rect x="208" fill="#ff00ec"/><rect x="212" fill="#ff00e6"/></g>
<g transform="translate(1143 344)"><rect x="32" fill="#04f"/><rect x="36" fill="#0042ff"/><rect x="40" fill="#0441ff"/><rect x="44" fill="#0a3fff"/><rect x="48" fill="#0f3eff"/><rect x="52" fill="#153cff"/><rect x="56" fill="#1b3aff"/><rect x="60" fill="#2139ff"/><rect x="64" fill="#2737ff"/><rect x="68" fill="#2d36ff"/><rect x="72" fill="#3334ff"/><rect x="76" fill="#3933ff"/><rect x="80" fill="#3f31ff"/><rect x="84" fill="#452fff"/><rect x="88" fill="#4b2eff"/><rect x="92" fill="#512cff"/><rect x="96" fill="#572bff"/><rect x="100" fill="#5d29ff"/><rect x="104" fill="#6327ff"/><rect x="108" fill="#6a26ff"/><rect x="112" fill="#7024ff"/><rect x="116" fill="#7622ff"/><rect x="120" fill="#7c21ff"/><rect x="124" fill="#831fff"/><rect x="128" fill="#891dff"/><rect x="132" fill="#8f1cff"/><rect x="136" fill="#951aff"/><rect x="140" fill="#9c18ff"/><rect x="144" fill="#a217ff"/><rect x="148" fill="#a915ff"/><rect x="152" fill="#af13ff"/><rect x="156" fill="#b611ff"/><rect x="160" fill="#bc10ff"/><rect x="164" fill="#c30eff"/><rect x="168" fill="#c90cff"/><rect x="172" fill="#d00aff"/><rect x="176" fill="#d709ff"/><rect x="180" fill="#dd07ff"/><rect x="184" fill="#e405ff"/><rect x="188" fill="#eb03ff"/><rect x="192" fill="#f101ff"/><rect x="196" fill="#f800ff"/><rect x="200" fill="#f0f"/><rect x="204" fill="#ff00f8"/><rect x="208" fill="#ff00f2"/></g>
<g transform="translate(1143 348)"><rect x="32" fill="#0041ff"/><rect x="36" fill="#003fff"/><rect x="40" fill="#033eff"/><rect x="44" fill="#093cff"/><rect x="48" fill="#0e3bff"/><rect x="52" fill="#1439ff"/><rect x="56" fill="#1a38ff"/><rect x="60" fill="#1f36ff"/><rect x="64" fill="#2535ff"/><rect x="68" fill="#2b33ff"/><rect x="72" fill="#3131ff"/><rect x="76" fill="#3730ff"/><rect x="80" fill="#3d2eff"/><rect x="84" fill="#422dff"/><rect x="88" fill="#482bff"/><rect x="92" fill="#4e2aff"/><rect x="96" fill="#5428ff"/><rect x="100" fill="#5a26ff"/><rect x="104" fill="#6025ff"/><rect x="108" fill="#6623ff"/><rect x="112" fill="#6c22ff"/><rect x="116" fill="#7320ff"/><rect x="120" fill="#791eff"/><rect x="124" fill="#7f1dff"/><rect x="128" fill="#851bff"/><rect x="132" fill="#8b19ff"/><rect x="136" fill="#9118ff"/><rect x="140" fill="#9816ff"/><rect x="144" fill="#9e14ff"/><rect x="148" fill="#a413ff"/><rect x="152" fill="#a1f"/><rect x="156" fill="#b10fff"/><rect x="160" fill="#b70eff"/><rect x="164" fill="#bd0cff"/><rect x="168" fill="#c40aff"/><rect x="172" fill="#ca08ff"/><rect x="176" fill="#d107ff"/><rect x="180" fill="#d705ff"/><rect x="184" fill="#de03ff"/><rect x="188" fill="#e401ff"/><rect x="192" fill="#eb00ff"/><rect x="196" fill="#f200ff"/><rect x="200" fill="#f800ff"/><rect x="204" fill="#f0f"/></g>
<g transform="translate(1143 352)"><rect x="32" fill="#003eff"/><rect x="36" fill="#003cff"/><rect x="40" fill="#023bff"/><rect x="44" fill="#0739ff"/><rect x="48" fill="#0d38ff"/><rect x="52" fill="#1336ff"/><rect x="56" fill="#1835ff"/><rect x="60" fill="#1e33ff"/><rect x="64" fill="#2432ff"/><rect x="68" fill="#2930ff"/><rect x="72" fill="#2f2fff"/><rect x="76" fill="#352dff"/><rect x="80" fill="#3a2cff"/><rect x="84" fill="#402aff"/><rect x="88" fill="#4629ff"/><rect x="92" fill="#4c27ff"/><rect x="96" fill="#5226ff"/><rect x="100" fill="#5824ff"/><rect x="104" fill="#5d22ff"/><rect x="108" fill="#6321ff"/><rect x="112" fill="#691fff"/><rect x="116" fill="#6f1eff"/><rect x="120" fill="#751cff"/><rect x="124" fill="#7b1aff"/><rect x="128" fill="#8119ff"/><rect x="132" fill="#8717ff"/><rect x="136" fill="#8d16ff"/><rect x="140" fill="#9314ff"/><rect x="144" fill="#9a12ff"/><rect x="148" fill="#a011ff"/><rect x="152" fill="#a60fff"/><rect x="156" fill="#ac0dff"/><rect x="160" fill="#b20cff"/><rect x="164" fill="#b80aff"/><rect x="168" fill="#bf08ff"/><rect x="172" fill="#c507ff"/><rect x="176" fill="#cb05ff"/><rect x="180" fill="#d203ff"/><rect x="184" fill="#d801ff"/><rect x="188" fill="#de00ff"/><rect x="192" fill="#e500ff"/><rect x="196" fill="#eb00ff"/><rect x="200" fill="#f200ff"/></g>
<g transform="translate(1143 356)"><rect x="32" fill="#003bff"/><rect x="36" fill="#003aff"/><rect x="40" fill="#0138ff"/><rect x="44" fill="#0637ff"/><rect x="48" fill="#0c35ff"/><rect x="52" fill="#1134ff"/><rect x="56" fill="#1732ff"/><rect x="60" fill="#1c31ff"/><rect x="64" fill="#222fff"/><rect x="68" fill="#282eff"/><rect x="72" fill="#2d2cff"/><rect x="76" fill="#332bff"/><rect x="80" fill="#3829ff"/><rect x="84" fill="#3e28ff"/><rect x="88" fill="#4426ff"/><rect x="92" fill="#4925ff"/><rect x="96" fill="#4f23ff"/><rect x="100" fill="#52f"/><rect x="104" fill="#5b20ff"/><rect x="108" fill="#601fff"/><rect x="112" fill="#661dff"/><rect x="116" fill="#6c1bff"/><rect x="120" fill="#721aff"/><rect x="124" fill="#7818ff"/><rect x="128" fill="#7e17ff"/><rect x="132" fill="#8415ff"/><rect x="136" fill="#8914ff"/><rect x="140" fill="#8f12ff"/><rect x="144" fill="#9510ff"/><rect x="148" fill="#9b0fff"/><rect x="152" fill="#a10dff"/><rect x="156" fill="#a70bff"/><rect x="160" fill="#ae0aff"/><rect x="164" fill="#b408ff"/><rect x="168" fill="#ba06ff"/><rect x="172" fill="#c005ff"/><rect x="176" fill="#c603ff"/><rect x="180" fill="#cc01ff"/><rect x="184" fill="#d300ff"/><rect x="188" fill="#d900ff"/><rect x="192" fill="#df00ff"/><rect x="196" fill="#e500ff"/></g>
<g transform="translate(1143 360)"><rect x="32" fill="#0039ff"/><rect x="36" fill="#0037ff"/><rect x="40" fill="#0036ff"/><rect x="44" fill="#0534ff"/><rect x="48" fill="#0b33ff"/><rect x="52" fill="#1031ff"/><rect x="56" fill="#1630ff"/><rect x="60" fill="#1b2eff"/><rect x="64" fill="#202dff"/><rect x="68" fill="#262bff"/><rect x="72" fill="#2b2aff"/><rect x="76" fill="#3128ff"/><rect x="80" fill="#3627ff"/><rect x="84" fill="#3c25ff"/><rect x="88" fill="#4124ff"/><rect x="92" fill="#4722ff"/><rect x="96" fill="#4d21ff"/><rect x="100" fill="#521fff"/><rect x="104" fill="#581eff"/><rect x="108" fill="#5e1cff"/><rect x="112" fill="#631bff"/><rect x="116" fill="#6919ff"/><rect x="120" fill="#6f18ff"/><rect x="124" fill="#7416ff"/><rect x="128" fill="#7a15ff"/><rect x="132" fill="#8013ff"/><rect x="136" fill="#8612ff"/><rect x="140" fill="#8c10ff"/><rect x="144" fill="#910eff"/><rect x="148" fill="#970dff"/><rect x="152" fill="#9d0bff"/><rect x="156" fill="#a30aff"/><rect x="160" fill="#a908ff"/><rect x="164" fill="#af06ff"/><rect x="168" fill="#b505ff"/><rect x="172" fill="#bb03ff"/><rect x="176" fill="#c102ff"/><rect x="180" fill="#c700ff"/><rect x="184" fill="#cd00ff"/><rect x="188" fill="#d300ff"/><rect x="192" fill="#d900ff"/></g>
<g transform="translate(1143 364)"><rect x="32" fill="#0036ff"/><rect x="36" fill="#0035ff"/><rect x="40" fill="#03f"/><rect x="44" fill="#0532ff"/><rect x="48" fill="#0a30ff"/><rect x="52" fill="#0f2fff"/><rect x="56" fill="#142dff"/><rect x="60" fill="#1a2cff"/><rect x="64" fill="#1f2bff"/><rect x="68" fill="#2429ff"/><rect x="72" fill="#2a28ff"/><rect x="76" fill="#2f26ff"/><rect x="80" fill="#3425ff"/><rect x="84" fill="#3a23ff"/><rect x="88" fill="#3f22ff"/><rect x="92" fill="#4520ff"/><rect x="96" fill="#4a1fff"/><rect x="100" fill="#501dff"/><rect x="104" fill="#551cff"/><rect x="108" fill="#5b1aff"/><rect x="112" fill="#6019ff"/><rect x="116" fill="#6617ff"/><rect x="120" fill="#6c16ff"/><rect x="124" fill="#7114ff"/><rect x="128" fill="#7713ff"/><rect x="132" fill="#7d11ff"/><rect x="136" fill="#8210ff"/><rect x="140" fill="#880eff"/><rect x="144" fill="#8e0dff"/><rect x="148" fill="#930bff"/><rect x="152" fill="#9909ff"/><rect x="156" fill="#9f08ff"/><rect x="160" fill="#a506ff"/><rect x="164" fill="#ab05ff"/><rect x="168" fill="#b003ff"/><rect x="172" fill="#b602ff"/><rect x="176" fill="#bc00ff"/><rect x="180" fill="#c200ff"/><rect x="184" fill="#c800ff"/><rect x="188" fill="#ce00ff"/></g>
<g transform="translate(1143 368)"><rect x="32" fill="#0034ff"/><rect x="36" fill="#0032ff"/><rect x="40" fill="#0031ff"/><rect x="44" fill="#042fff"/><rect x="48" fill="#092eff"/><rect x="52" fill="#0e2dff"/><rect x="56" fill="#132bff"/><rect x="60" fill="#182aff"/><rect x="64" fill="#1e28ff"/><rect x="68" fill="#2327ff"/><rect x="72" fill="#2825ff"/><rect x="76" fill="#2d24ff"/><rect x="80" fill="#3323ff"/><rect x="84" fill="#3821ff"/><rect x="88" fill="#3d20ff"/><rect x="92" fill="#431eff"/><rect x="96" fill="#481dff"/><rect x="100" fill="#4d1bff"/><rect x="104" fill="#531aff"/><rect x="108" fill="#5818ff"/><rect x="112" fill="#5e17ff"/><rect x="116" fill="#6315ff"/><rect x="120" fill="#6914ff"/><rect x="124" fill="#6e12ff"/><rect x="128" fill="#7411ff"/><rect x="132" fill="#790fff"/><rect x="136" fill="#7f0eff"/><rect x="140" fill="#840cff"/><rect x="144" fill="#8a0bff"/><rect x="148" fill="#9009ff"/><rect x="152" fill="#9508ff"/><rect x="156" fill="#9b06ff"/><rect x="160" fill="#a105ff"/><rect x="164" fill="#a603ff"/><rect x="168" fill="#ac02ff"/><rect x="172" fill="#b200ff"/><rect x="176" fill="#b800ff"/><rect x="180" fill="#bd00ff"/><rect x="184" fill="#c300ff"/></g>
<g transform="translate(1143 372)"><rect x="36" fill="#0030ff"/><rect x="40" fill="#002eff"/><rect x="44" fill="#032dff"/><rect x="48" fill="#082cff"/><rect x="52" fill="#0d2aff"/><rect x="56" fill="#1229ff"/><rect x="60" fill="#1728ff"/><rect x="64" fill="#1c26ff"/><rect x="68" fill="#2125ff"/><rect x="72" fill="#2623ff"/><rect x="76" fill="#2c22ff"/><rect x="80" fill="#3120ff"/><rect x="84" fill="#361fff"/><rect x="88" fill="#3b1eff"/><rect x="92" fill="#411cff"/><rect x="96" fill="#461bff"/><rect x="100" fill="#4b19ff"/><rect x="104" fill="#5018ff"/><rect x="108" fill="#5616ff"/><rect x="112" fill="#5b15ff"/><rect x="116" fill="#6013ff"/><rect x="120" fill="#6612ff"/><rect x="124" fill="#6b11ff"/><rect x="128" fill="#710fff"/><rect x="132" fill="#760eff"/><rect x="136" fill="#7c0cff"/><rect x="140" fill="#810bff"/><rect x="144" fill="#8709ff"/><rect x="148" fill="#8c08ff"/><rect x="152" fill="#9206ff"/><rect x="156" fill="#9705ff"/><rect x="160" fill="#9d03ff"/><rect x="164" fill="#a202ff"/><rect x="168" fill="#a800ff"/><rect x="172" fill="#ae00ff"/><rect x="176" fill="#b300ff"/><rect x="180" fill="#b900ff"/></g>
<g transform="translate(1143 376)"><rect x="36" fill="#002eff"/><rect x="40" fill="#002cff"/><rect x="44" fill="#022bff"/><rect x="48" fill="#0729ff"/><rect x="52" fill="#0c28ff"/><rect x="56" fill="#1127ff"/><rect x="60" fill="#1625ff"/><rect x="64" fill="#1b24ff"/><rect x="68" fill="#2023ff"/><rect x="72" fill="#2521ff"/><rect x="76" fill="#2a20ff"/><rect x="80" fill="#2f1eff"/><rect x="84" fill="#341dff"/><rect x="88" fill="#391cff"/><rect x="92" fill="#3f1aff"/><rect x="96" fill="#4419ff"/><rect x="100" fill="#4917ff"/><rect x="104" fill="#4e16ff"/><rect x="108" fill="#5315ff"/><rect x="112" fill="#5913ff"/><rect x="116" fill="#5e12ff"/><rect x="120" fill="#6310ff"/><rect x="124" fill="#680fff"/><rect x="128" fill="#6e0dff"/><rect x="132" fill="#730cff"/><rect x="136" fill="#780aff"/><rect x="140" fill="#7e09ff"/><rect x="144" fill="#8307ff"/><rect x="148" fill="#8906ff"/><rect x="152" fill="#8e04ff"/><rect x="156" fill="#9303ff"/><rect x="160" fill="#9902ff"/><rect x="164" fill="#9e00ff"/><rect x="168" fill="#a400ff"/><rect x="172" fill="#a900ff"/><rect x="176" fill="#af00ff"/></g>
<g transform="translate(1143 380)"><rect x="36" fill="#002bff"/><rect x="40" fill="#002aff"/><rect x="44" fill="#0129ff"/><rect x="48" fill="#0627ff"/><rect x="52" fill="#0b26ff"/><rect x="56" fill="#1025ff"/><rect x="60" fill="#1523ff"/><rect x="64" fill="#1a22ff"/><rect x="68" fill="#1f21ff"/><rect x="72" fill="#231fff"/><rect x="76" fill="#281eff"/><rect x="80" fill="#2d1dff"/><rect x="84" fill="#331bff"/><rect x="88" fill="#381aff"/><rect x="92" fill="#3d18ff"/><rect x="96" fill="#4217ff"/><rect x="100" fill="#4716ff"/><rect x="104" fill="#4c14ff"/><rect x="108" fill="#5113ff"/><rect x="112" fill="#5611ff"/><rect x="116" fill="#5b10ff"/><rect x="120" fill="#600fff"/><rect x="124" fill="#660dff"/><rect x="128" fill="#6b0cff"/><rect x="132" fill="#700aff"/><rect x="136" fill="#7509ff"/><rect x="140" fill="#7b07ff"/><rect x="144" fill="#8006ff"/><rect x="148" fill="#8504ff"/><rect x="152" fill="#8b03ff"/><rect x="156" fill="#9002ff"/><rect x="160" fill="#9500ff"/><rect x="164" fill="#9b00ff"/><rect x="168" fill="#a000ff"/><rect x="172" fill="#a500ff"/></g>
<g transform="translate(1143 384)"><rect x="36" fill="#0029ff"/><rect x="40" fill="#0028ff"/><rect x="44" fill="#0027ff"/><rect x="48" fill="#0525ff"/><rect x="52" fill="#0a24ff"/><rect x="56" fill="#0f23ff"/><rect x="60" fill="#1321ff"/><rect x="64" fill="#1820ff"/><rect x="68" fill="#1d1fff"/><rect x="72" fill="#221dff"/><rect x="76" fill="#271cff"/><rect x="80" fill="#2c1bff"/><rect x="84" fill="#3119ff"/><rect x="88" fill="#3618ff"/><rect x="92" fill="#3b17ff"/><rect x="96" fill="#4015ff"/><rect x="100" fill="#4514ff"/><rect x="104" fill="#4a12ff"/><rect x="108" fill="#4f11ff"/><rect x="112" fill="#5410ff"/><rect x="116" fill="#590eff"/><rect x="120" fill="#5e0dff"/><rect x="124" fill="#630bff"/><rect x="128" fill="#680aff"/><rect x="132" fill="#6d09ff"/><rect x="136" fill="#7207ff"/><rect x="140" fill="#7806ff"/><rect x="144" fill="#7d04ff"/><rect x="148" fill="#8203ff"/><rect x="152" fill="#8702ff"/><rect x="156" fill="#8c00ff"/><rect x="160" fill="#9200ff"/><rect x="164" fill="#9700ff"/><rect x="168" fill="#9c00ff"/><rect x="172" fill="#a200ff"/></g>
<g transform="translate(1143 388)"><rect x="36" fill="#0027ff"/><rect x="40" fill="#0026ff"/><rect x="44" fill="#0025ff"/><rect x="48" fill="#0423ff"/><rect x="52" fill="#0922ff"/><rect x="56" fill="#0e21ff"/><rect x="60" fill="#121fff"/><rect x="64" fill="#171eff"/><rect x="68" fill="#1c1dff"/><rect x="72" fill="#211bff"/><rect x="76" fill="#261aff"/><rect x="80" fill="#2a19ff"/><rect x="84" fill="#2f17ff"/><rect x="88" fill="#3416ff"/><rect x="92" fill="#3915ff"/><rect x="96" fill="#3e13ff"/><rect x="100" fill="#4312ff"/><rect x="104" fill="#4811ff"/><rect x="108" fill="#4d0fff"/><rect x="112" fill="#520eff"/><rect x="116" fill="#560dff"/><rect x="120" fill="#5b0bff"/><rect x="124" fill="#600aff"/><rect x="128" fill="#6609ff"/><rect x="132" fill="#6b07ff"/><rect x="136" fill="#7006ff"/><rect x="140" fill="#7504ff"/><rect x="144" fill="#7a03ff"/><rect x="148" fill="#7f02ff"/><rect x="152" fill="#8400ff"/><rect x="156" fill="#8900ff"/><rect x="160" fill="#8e00ff"/><rect x="164" fill="#9300ff"/><rect x="168" fill="#90f"/></g>
<g transform="translate(1143 392)"><rect x="36" fill="#0025ff"/><rect x="40" fill="#0024ff"/><rect x="44" fill="#0023ff"/><rect x="48" fill="#0321ff"/><rect x="52" fill="#0820ff"/><rect x="56" fill="#0d1fff"/><rect x="60" fill="#111eff"/><rect x="64" fill="#161cff"/><rect x="68" fill="#1b1bff"/><rect x="72" fill="#1f1aff"/><rect x="76" fill="#2418ff"/><rect x="80" fill="#2917ff"/><rect x="84" fill="#2e16ff"/><rect x="88" fill="#3214ff"/><rect x="92" fill="#3713ff"/><rect x="96" fill="#3c12ff"/><rect x="100" fill="#4110ff"/><rect x="104" fill="#460fff"/><rect x="108" fill="#4a0eff"/><rect x="112" fill="#4f0cff"/><rect x="116" fill="#540bff"/><rect x="120" fill="#590aff"/><rect x="124" fill="#5e08ff"/><rect x="128" fill="#6307ff"/><rect x="132" fill="#6806ff"/><rect x="136" fill="#6d04ff"/><rect x="140" fill="#7203ff"/><rect x="144" fill="#7702ff"/><rect x="148" fill="#7c00ff"/><rect x="152" fill="#8100ff"/><rect x="156" fill="#8600ff"/><rect x="160" fill="#8b00ff"/><rect x="164" fill="#9000ff"/></g>
<g transform="translate(1143 396)"><rect x="40" fill="#02f"/><rect x="44" fill="#0021ff"/><rect x="48" fill="#0320ff"/><rect x="52" fill="#071eff"/><rect x="56" fill="#0c1dff"/><rect x="60" fill="#101cff"/><rect x="64" fill="#151bff"/><rect x="68" fill="#1a19ff"/><rect x="72" fill="#1e18ff"/><rect x="76" fill="#2317ff"/><rect x="80" fill="#2715ff"/><rect x="84" fill="#2c14ff"/><rect x="88" fill="#3113ff"/><rect x="92" fill="#3611ff"/><rect x="96" fill="#3a10ff"/><rect x="100" fill="#3f0fff"/><rect x="104" fill="#440eff"/><rect x="108" fill="#480cff"/><rect x="112" fill="#4d0bff"/><rect x="116" fill="#520aff"/><rect x="120" fill="#5708ff"/><rect x="124" fill="#5c07ff"/><rect x="128" fill="#6106ff"/><rect x="132" fill="#6504ff"/><rect x="136" fill="#6a03ff"/><rect x="140" fill="#6f02ff"/><rect x="144" fill="#7400ff"/><rect x="148" fill="#7900ff"/><rect x="152" fill="#7e00ff"/><rect x="156" fill="#8300ff"/><rect x="160" fill="#80f"/></g>
<g transform="translate(1143 400)"><rect x="40" fill="#0020ff"/><rect x="44" fill="#001fff"/><rect x="48" fill="#021eff"/><rect x="52" fill="#061dff"/><rect x="56" fill="#0b1bff"/><rect x="60" fill="#0f1aff"/><rect x="64" fill="#1419ff"/><rect x="68" fill="#1818ff"/><rect x="72" fill="#1d16ff"/><rect x="76" fill="#2115ff"/><rect x="80" fill="#2614ff"/><rect x="84" fill="#2b12ff"/><rect x="88" fill="#2f11ff"/><rect x="92" fill="#3410ff"/><rect x="96" fill="#390fff"/><rect x="100" fill="#3d0dff"/><rect x="104" fill="#420cff"/><rect x="108" fill="#470bff"/><rect x="112" fill="#4b09ff"/><rect x="116" fill="#5008ff"/><rect x="120" fill="#5507ff"/><rect x="124" fill="#5905ff"/><rect x="128" fill="#5e04ff"/><rect x="132" fill="#6303ff"/><rect x="136" fill="#6802ff"/><rect x="140" fill="#6c00ff"/><rect x="144" fill="#7100ff"/><rect x="148" fill="#7600ff"/><rect x="152" fill="#7b00ff"/><rect x="156" fill="#8000ff"/></g>
<g transform="translate(1143 404)"><rect x="40" fill="#001fff"/><rect x="44" fill="#001dff"/><rect x="48" fill="#011cff"/><rect x="52" fill="#051bff"/><rect x="56" fill="#0a1aff"/><rect x="60" fill="#0e18ff"/><rect x="64" fill="#1317ff"/><rect x="68" fill="#1716ff"/><rect x="72" fill="#1c15ff"/><rect x="76" fill="#2013ff"/><rect x="80" fill="#2512ff"/><rect x="84" fill="#2911ff"/><rect x="88" fill="#2e10ff"/><rect x="92" fill="#320eff"/><rect x="96" fill="#370dff"/><rect x="100" fill="#3b0cff"/><rect x="104" fill="#400bff"/><rect x="108" fill="#4509ff"/><rect x="112" fill="#4908ff"/><rect x="116" fill="#4e07ff"/><rect x="120" fill="#5305ff"/><rect x="124" fill="#5704ff"/><rect x="128" fill="#5c03ff"/><rect x="132" fill="#6102ff"/><rect x="136" fill="#6500ff"/><rect x="140" fill="#6a00ff"/><rect x="144" fill="#6f00ff"/><rect x="148" fill="#7300ff"/><rect x="152" fill="#7800ff"/></g>
<g transform="translate(1143 408)"><rect x="40" fill="#001dff"/><rect x="44" fill="#001cff"/><rect x="48" fill="#001aff"/><rect x="52" fill="#0519ff"/><rect x="56" fill="#0918ff"/><rect x="60" fill="#0d17ff"/><rect x="64" fill="#1216ff"/><rect x="68" fill="#1614ff"/><rect x="72" fill="#1b13ff"/><rect x="76" fill="#1f12ff"/><rect x="80" fill="#2311ff"/><rect x="84" fill="#280fff"/><rect x="88" fill="#2c0eff"/><rect x="92" fill="#310dff"/><rect x="96" fill="#350cff"/><rect x="100" fill="#3a0aff"/><rect x="104" fill="#3e09ff"/><rect x="108" fill="#4308ff"/><rect x="112" fill="#4707ff"/><rect x="116" fill="#4c05ff"/><rect x="120" fill="#5004ff"/><rect x="124" fill="#5503ff"/><rect x="128" fill="#5a02ff"/><rect x="132" fill="#5e00ff"/><rect x="136" fill="#6300ff"/><rect x="140" fill="#6700ff"/><rect x="144" fill="#6c00ff"/><rect x="148" fill="#7100ff"/></g>
<g transform="translate(1143 412)"><rect x="40" fill="#001bff"/><rect x="44" fill="#001aff"/><rect x="48" fill="#0019ff"/><rect x="52" fill="#0418ff"/><rect x="56" fill="#0816ff"/><rect x="60" fill="#0d15ff"/><rect x="64" fill="#1114ff"/><rect x="68" fill="#1513ff"/><rect x="72" fill="#1912ff"/><rect x="76" fill="#1e10ff"/><rect x="80" fill="#220fff"/><rect x="84" fill="#270eff"/><rect x="88" fill="#2b0dff"/><rect x="92" fill="#2f0bff"/><rect x="96" fill="#340aff"/><rect x="100" fill="#3809ff"/><rect x="104" fill="#3d08ff"/><rect x="108" fill="#4107ff"/><rect x="112" fill="#4605ff"/><rect x="116" fill="#4a04ff"/><rect x="120" fill="#4e03ff"/><rect x="124" fill="#5302ff"/><rect x="128" fill="#5700ff"/><rect x="132" fill="#5c00ff"/><rect x="136" fill="#6100ff"/><rect x="140" fill="#6500ff"/><rect x="144" fill="#6a00ff"/></g>
<g transform="translate(1143 416)"><rect x="40" fill="#001aff"/><rect x="44" fill="#0018ff"/><rect x="48" fill="#0017ff"/><rect x="52" fill="#0316ff"/><rect x="56" fill="#0715ff"/><rect x="60" fill="#0c14ff"/><rect x="64" fill="#1013ff"/><rect x="68" fill="#1411ff"/><rect x="72" fill="#1810ff"/><rect x="76" fill="#1d0fff"/><rect x="80" fill="#210eff"/><rect x="84" fill="#250dff"/><rect x="88" fill="#2a0bff"/><rect x="92" fill="#2e0aff"/><rect x="96" fill="#3209ff"/><rect x="100" fill="#3708ff"/><rect x="104" fill="#3b06ff"/><rect x="108" fill="#3f05ff"/><rect x="112" fill="#4404ff"/><rect x="116" fill="#4803ff"/><rect x="120" fill="#4d02ff"/><rect x="124" fill="#5100ff"/><rect x="128" fill="#50f"/><rect x="132" fill="#5a00ff"/><rect x="136" fill="#5e00ff"/><rect x="140" fill="#6300ff"/></g>
<g transform="translate(1143 420)"><rect x="44" fill="#0017ff"/><rect x="48" fill="#0016ff"/><rect x="52" fill="#0215ff"/><rect x="56" fill="#0713ff"/><rect x="60" fill="#0b12ff"/><rect x="64" fill="#0f11ff"/><rect x="68" fill="#1310ff"/><rect x="72" fill="#170fff"/><rect x="76" fill="#1c0eff"/><rect x="80" fill="#200cff"/><rect x="84" fill="#240bff"/><rect x="88" fill="#280aff"/><rect x="92" fill="#2d09ff"/><rect x="96" fill="#3108ff"/><rect x="100" fill="#3506ff"/><rect x="104" fill="#3905ff"/><rect x="108" fill="#3e04ff"/><rect x="112" fill="#4203ff"/><rect x="116" fill="#4602ff"/><rect x="120" fill="#4b00ff"/><rect x="124" fill="#4f00ff"/><rect x="128" fill="#5300ff"/><rect x="132" fill="#5800ff"/><rect x="136" fill="#5c00ff"/></g>
<g transform="translate(1143 424)"><rect x="44" fill="#0015ff"/><rect x="48" fill="#0014ff"/><rect x="52" fill="#0213ff"/><rect x="56" fill="#0612ff"/><rect x="60" fill="#0a11ff"/><rect x="64" fill="#0e10ff"/><rect x="68" fill="#120fff"/><rect x="72" fill="#160dff"/><rect x="76" fill="#1a0cff"/><rect x="80" fill="#1f0bff"/><rect x="84" fill="#230aff"/><rect x="88" fill="#2709ff"/><rect x="92" fill="#2b07ff"/><rect x="96" fill="#2f06ff"/><rect x="100" fill="#3405ff"/><rect x="104" fill="#3804ff"/><rect x="108" fill="#3c03ff"/><rect x="112" fill="#4002ff"/><rect x="116" fill="#4500ff"/><rect x="120" fill="#4900ff"/><rect x="124" fill="#4d00ff"/><rect x="128" fill="#5100ff"/><rect x="132" fill="#5600ff"/></g>
<g transform="translate(1143 428)"><rect x="44" fill="#0014ff"/><rect x="48" fill="#0013ff"/><rect x="52" fill="#0112ff"/><rect x="56" fill="#0511ff"/><rect x="60" fill="#090fff"/><rect x="64" fill="#0d0eff"/><rect x="68" fill="#110dff"/><rect x="72" fill="#150cff"/><rect x="76" fill="#190bff"/><rect x="80" fill="#1e0aff"/><rect x="84" fill="#2209ff"/><rect x="88" fill="#2607ff"/><rect x="92" fill="#2a06ff"/><rect x="96" fill="#2e05ff"/><rect x="100" fill="#3204ff"/><rect x="104" fill="#3603ff"/><rect x="108" fill="#3b02ff"/><rect x="112" fill="#3f00ff"/><rect x="116" fill="#4300ff"/><rect x="120" fill="#4700ff"/><rect x="124" fill="#4b00ff"/><rect x="128" fill="#5000ff"/></g>
<g transform="translate(1143 432)"><rect x="44" fill="#0013ff"/><rect x="48" fill="#01f"/><rect x="52" fill="#0010ff"/><rect x="56" fill="#040fff"/><rect x="60" fill="#080eff"/><rect x="64" fill="#0c0dff"/><rect x="68" fill="#100cff"/><rect x="72" fill="#140bff"/><rect x="76" fill="#180aff"/><rect x="80" fill="#1c08ff"/><rect x="84" fill="#2007ff"/><rect x="88" fill="#2506ff"/><rect x="92" fill="#2905ff"/><rect x="96" fill="#2d04ff"/><rect x="100" fill="#3103ff"/><rect x="104" fill="#3502ff"/><rect x="108" fill="#3900ff"/><rect x="112" fill="#3d00ff"/><rect x="116" fill="#4100ff"/><rect x="120" fill="#4500ff"/><rect x="124" fill="#4a00ff"/></g>
<g transform="translate(1143 436)"><rect x="44" fill="#01f"/><rect x="48" fill="#0010ff"/><rect x="52" fill="#000fff"/><rect x="56" fill="#040eff"/><rect x="60" fill="#080dff"/><rect x="64" fill="#0c0cff"/><rect x="68" fill="#100bff"/><rect x="72" fill="#1309ff"/><rect x="76" fill="#1708ff"/><rect x="80" fill="#1b07ff"/><rect x="84" fill="#1f06ff"/><rect x="88" fill="#2305ff"/><rect x="92" fill="#2704ff"/><rect x="96" fill="#2b03ff"/><rect x="100" fill="#2f02ff"/><rect x="104" fill="#30f"/><rect x="108" fill="#3800ff"/><rect x="112" fill="#3c00ff"/><rect x="116" fill="#4000ff"/><rect x="120" fill="#40f"/></g>
<g transform="translate(1143 440)"><rect x="44" fill="#0010ff"/><rect x="48" fill="#000fff"/><rect x="52" fill="#000eff"/><rect x="56" fill="#030dff"/><rect x="60" fill="#070cff"/><rect x="64" fill="#0b0aff"/><rect x="68" fill="#0f09ff"/><rect x="72" fill="#1308ff"/><rect x="76" fill="#1607ff"/><rect x="80" fill="#1a06ff"/><rect x="84" fill="#1e05ff"/><rect x="88" fill="#2204ff"/><rect x="92" fill="#2603ff"/><rect x="96" fill="#2a02ff"/><rect x="100" fill="#2e00ff"/><rect x="104" fill="#3200ff"/><rect x="108" fill="#3600ff"/><rect x="112" fill="#3a00ff"/><rect x="116" fill="#3e00ff"/></g>
<g transform="translate(1143 444)"><rect x="48" fill="#000eff"/><rect x="52" fill="#000cff"/><rect x="56" fill="#020bff"/><rect x="60" fill="#060aff"/><rect x="64" fill="#0a09ff"/><rect x="68" fill="#0e08ff"/><rect x="72" fill="#1207ff"/><rect x="76" fill="#1606ff"/><rect x="80" fill="#1905ff"/><rect x="84" fill="#1d04ff"/><rect x="88" fill="#2103ff"/><rect x="92" fill="#2502ff"/><rect x="96" fill="#2900ff"/><rect x="100" fill="#2d00ff"/><rect x="104" fill="#3100ff"/><rect x="108" fill="#3500ff"/><rect x="112" fill="#3900ff"/></g>
<g transform="translate(1143 448)"><rect x="48" fill="#000cff"/><rect x="52" fill="#000bff"/><rect x="56" fill="#020aff"/><rect x="60" fill="#0609ff"/><rect x="64" fill="#0908ff"/><rect x="68" fill="#0d07ff"/><rect x="72" fill="#1106ff"/><rect x="76" fill="#1505ff"/><rect x="80" fill="#1804ff"/><rect x="84" fill="#1c03ff"/><rect x="88" fill="#2002ff"/><rect x="92" fill="#2400ff"/><rect x="96" fill="#2800ff"/><rect x="100" fill="#2c00ff"/><rect x="104" fill="#2f00ff"/><rect x="108" fill="#30f"/></g>
<g transform="translate(1143 452)"><rect x="48" fill="#000bff"/><rect x="52" fill="#000aff"/><rect x="56" fill="#0109ff"/><rect x="60" fill="#0508ff"/><rect x="64" fill="#0907ff"/><rect x="68" fill="#0c06ff"/><rect x="72" fill="#1005ff"/><rect x="76" fill="#1404ff"/><rect x="80" fill="#1703ff"/><rect x="84" fill="#1b02ff"/><rect x="88" fill="#1f00ff"/><rect x="92" fill="#2300ff"/><rect x="96" fill="#2700ff"/><rect x="100" fill="#2a00ff"/><rect x="104" fill="#2e00ff"/></g>
<g transform="translate(1143 456)"><rect x="48" fill="#000aff"/><rect x="52" fill="#0009ff"/><rect x="56" fill="#0108ff"/><rect x="60" fill="#0407ff"/><rect x="64" fill="#0806ff"/><rect x="68" fill="#0c05ff"/><rect x="72" fill="#0f04ff"/><rect x="76" fill="#1303ff"/><rect x="80" fill="#1702ff"/><rect x="84" fill="#1a00ff"/><rect x="88" fill="#1e00ff"/><rect x="92" fill="#20f"/><rect x="96" fill="#2500ff"/><rect x="100" fill="#2900ff"/></g>
<g transform="translate(1143 460)"><rect x="48" fill="#0009ff"/><rect x="52" fill="#0008ff"/><rect x="56" fill="#0007ff"/><rect x="60" fill="#0406ff"/><rect x="64" fill="#0705ff"/><rect x="68" fill="#0b04ff"/><rect x="72" fill="#0e03ff"/><rect x="76" fill="#1202ff"/><rect x="80" fill="#1600ff"/><rect x="84" fill="#1900ff"/><rect x="88" fill="#1d00ff"/><rect x="92" fill="#2100ff"/><rect x="96" fill="#2400ff"/></g>
<g transform="translate(1143 464)"><rect x="48" fill="#0008ff"/><rect x="52" fill="#0007ff"/><rect x="56" fill="#0006ff"/><rect x="60" fill="#0305ff"/><rect x="64" fill="#0604ff"/><rect x="68" fill="#0a03ff"/><rect x="72" fill="#0e02ff"/><rect x="76" fill="#10f"/><rect x="80" fill="#1500ff"/><rect x="84" fill="#1800ff"/><rect x="88" fill="#1c00ff"/><rect x="92" fill="#2000ff"/></g>
<g transform="translate(1143 468)"><rect x="52" fill="#0006ff"/><rect x="56" fill="#0005ff"/><rect x="60" fill="#0204ff"/><rect x="64" fill="#0603ff"/><rect x="68" fill="#0902ff"/><rect x="72" fill="#0d00ff"/><rect x="76" fill="#1000ff"/><rect x="80" fill="#1400ff"/><rect x="84" fill="#1800ff"/><rect x="88" fill="#1b00ff"/></g>
<g transform="translate(1143 472)"><rect x="52" fill="#0005ff"/><rect x="56" fill="#0004ff"/><rect x="60" fill="#0203ff"/><rect x="64" fill="#0502ff"/><rect x="68" fill="#0901ff"/><rect x="72" fill="#0c00ff"/><rect x="76" fill="#1000ff"/><rect x="80" fill="#1300ff"/><rect x="84" fill="#1700ff"/></g>
<g transform="translate(1143 476)"><rect x="52" fill="#0003ff"/><rect x="56" fill="#0002ff"/><rect x="60" fill="#0102ff"/><rect x="64" fill="#0501ff"/><rect x="68" fill="#0800ff"/><rect x="72" fill="#0b00ff"/><rect x="76" fill="#0f00ff"/><rect x="80" fill="#1200ff"/></g>
<g transform="translate(1143 480)"><rect x="52" style="width:9px" fill="#0002ff"/><rect x="60" fill="#0101ff"/><rect x="64" fill="#0400ff"/><rect x="68" fill="#0700ff"/><rect x="72" fill="#0b00ff"/><rect x="76" fill="#0e00ff"/></g>
<g transform="translate(1143 484)"><rect x="52" fill="#0002ff"/><rect x="56" fill="#0001ff"/><rect x="60" fill="#00f"/><rect x="64" fill="#0300ff"/><rect x="68" fill="#0700ff"/><rect x="72" fill="#0a00ff"/></g>
<g transform="translate(1143 488)"><rect x="52" fill="#0001ff"/><rect x="56" style="width:9px" fill="#00f"/><rect x="64" fill="#0300ff"/><rect x="68" fill="#0600ff"/></g>
</g></g>
<path d="M1291.3 600.4 C1291.3 600.4 1291.2 600.3 1291.1 600.4 C1291.1 600.4 1291.0 600.6 1290.9 600.7 C1290.8 600.7 1290.7 600.6 1290.6 600.7 C1290.4 600.7 1290.3 600.9 1290.1 600.9 C1290.0 601.0 1289.8 600.9 1289.6 600.9 C1289.4 600.9 1289.2 600.9 1288.9 600.9 C1288.6 600.9 1288.4 601.1 1288.0 600.9 C1287.6 600.8 1287.2 600.6 1286.4 600.2 C1285.7 599.7 1284.8 599.1 1283.7 598.3 C1282.6 597.5 1281.5 596.7 1280.0 595.4 C1278.4 594.2 1276.6 592.8 1274.6 591.1 C1272.5 589.4 1270.3 587.4 1267.8 585.3 C1265.2 583.1 1262.5 580.9 1259.2 578.2 C1255.9 575.5 1252.1 572.4 1248.0 568.9 C1243.8 565.5 1239.4 562.0 1234.4 557.6 C1229.4 553.2 1223.9 548.5 1217.8 542.6 C1211.7 536.7 1205.6 530.9 1197.8 522.2 C1190.1 513.5 1181.0 502.8 1171.3 490.2 C1161.7 477.6 1150.9 462.8 1140.1 446.4 C1129.2 430.0 1117.2 410.8 1106.1 391.9 C1095.0 373.0 1083.2 352.2 1073.5 333.0 C1063.8 313.7 1055.1 293.8 1048.0 276.4 C1040.8 259.0 1035.0 242.6 1030.7 228.7 C1026.3 214.9 1023.6 203.3 1021.7 193.3 C1019.8 183.3 1019.3 175.5 1019.5 168.6 C1019.7 161.7 1021.0 156.3 1022.9 151.6 C1024.9 147.0 1027.8 143.6 1031.1 140.9 C1034.4 138.2 1038.4 136.6 1042.6 135.4 C1046.8 134.1 1051.5 133.8 1056.3 133.4 C1061.1 132.9 1066.3 132.9 1071.3 132.9 C1076.3 132.8 1081.3 132.9 1086.5 133.1 C1091.6 133.2 1096.8 133.5 1102.3 133.8 C1107.8 134.1 1113.5 134.5 1119.4 135.0 C1125.3 135.5 1131.5 136.1 1138.0 136.7 C1144.4 137.3 1151.2 138.0 1158.3 138.8 C1165.5 139.5 1173.0 140.3 1181.0 141.2 C1188.9 142.1 1197.2 143.0 1205.9 144.0 C1214.7 145.0 1223.9 146.0 1233.6 147.1 C1243.3 148.2 1253.4 149.4 1264.0 150.6 C1274.6 151.8 1285.7 153.1 1297.2 154.4 C1308.7 155.8 1320.7 157.2 1333.0 158.6 C1345.3 160.0 1358.1 161.4 1370.9 162.9 C1383.6 164.4 1397.0 165.9 1409.7 167.4 C1422.5 168.9 1435.0 170.3 1447.4 171.7 C1459.8 173.2 1472.5 174.6 1484.1 176.0 C1495.8 177.3 1506.9 178.6 1517.4 179.8 C1527.8 181.0 1537.7 182.1 1546.7 183.2 C1555.8 184.2 1564.1 185.2 1571.7 186.0 C1579.4 186.9 1586.2 187.7 1592.7 188.4 C1599.1 189.2 1604.8 189.8 1610.3 190.5 C1615.8 191.1 1620.9 191.7 1625.6 192.2 C1630.3 192.8 1634.6 193.3 1638.5 193.7 C1642.4 194.2 1645.9 194.6 1649.0 194.9 C1652.1 195.3 1654.7 195.6 1657.1 195.9 C1659.5 196.1 1661.6 196.4 1663.5 196.6 C1665.3 196.8 1666.9 197.0 1668.2 197.1 C1669.5 197.3 1670.3 197.4 1671.3 197.5 C1672.2 197.6 1673.0 197.7 1673.8 197.8 C1674.6 197.9 1675.1 197.9 1675.8 198.0 C1676.4 198.1 1677.2 198.2 1677.8 198.2 C1678.4 198.3 1679.0 198.4 1679.5 198.4 C1680.0 198.5 1680.4 198.5 1680.6 198.6 C1680.9 198.6 1681.1 198.6 1681.2 198.6 C1681.4 198.7 1681.5 198.7 1681.5 198.7Z M1497.7 185.2 L1151.0 152.8 L1204.7 484.5Z" fill="#000" fill-opacity="0.4" fill-rule="evenodd"/>
</g>
<rect x="1143.6" y="144.7" width="13.4" height="13.4" fill="#00ff00" stroke="#fff" stroke-width="1.5" fill-opacity="0.22" stroke-opacity="0.95"/>
<rect x="1167.4" y="168.0" width="13.4" height="13.4" fill="#449648" stroke="#fff" stroke-width="1.5" fill-opacity="0.22" stroke-opacity="0.95"/>
<rect x="1207.5" y="160.1" width="13.4" height="13.4" fill="#a6c043" stroke="#fff" stroke-width="1.5" fill-opacity="0.22" stroke-opacity="0.95"/>
<rect x="1227.5" y="152.6" width="13.4" height="13.4" fill="#ffff00" stroke="#fff" stroke-width="1.5" fill-opacity="0.22" stroke-opacity="0.95"/>
<rect x="1254.7" y="156.3" width="13.4" height="13.4" fill="#f1c82a" stroke="#fff" stroke-width="1.5" fill-opacity="0.22" stroke-opacity="0.95"/>
<rect x="1286.8" y="163.5" width="13.4" height="13.4" fill="#f0a830" stroke="#fff" stroke-width="1.5" fill-opacity="0.22" stroke-opacity="0.95"/>
<rect x="1329.8" y="167.2" width="13.4" height="13.4" fill="#de7a2a" stroke="#fff" stroke-width="1.5" fill-opacity="0.22" stroke-opacity="0.95"/>
<rect x="1490.9" y="177.2" width="13.4" height="13.4" fill="#ff0000" stroke="#fff" stroke-width="1.5" fill-opacity="0.22" stroke-opacity="0.95"/>
<rect x="1204.6" y="182.7" width="13.4" height="13.4" fill="#586c42" stroke="#fff" stroke-width="1.5" fill-opacity="0.22" stroke-opacity="0.95"/>
<rect x="1270.1" y="196.8" width="13.4" height="13.4" fill="#735140" stroke="#fff" stroke-width="1.5" fill-opacity="0.22" stroke-opacity="0.95"/>
<rect x="1258.8" y="202.3" width="13.4" height="13.4" fill="#c69a84" stroke="#fff" stroke-width="1.5" fill-opacity="0.22" stroke-opacity="0.95"/>
<rect x="1409.5" y="197.7" width="13.4" height="13.4" fill="#b7303a" stroke="#fff" stroke-width="1.5" fill-opacity="0.22" stroke-opacity="0.95"/>
<rect x="1348.6" y="209.8" width="13.4" height="13.4" fill="#cc5568" stroke="#fff" stroke-width="1.5" fill-opacity="0.22" stroke-opacity="0.95"/>
<rect x="1174.9" y="213.5" width="13.4" height="13.4" fill="#62c9ad" stroke="#fff" stroke-width="1.5" fill-opacity="0.22" stroke-opacity="0.95"/>
<rect x="1158.6" y="232.7" width="13.4" height="13.4" fill="#00ffff" stroke="#fff" stroke-width="1.5" fill-opacity="0.22" stroke-opacity="0.95"/>
<rect x="1316.0" y="255.7" width="13.4" height="13.4" fill="#c2569a" stroke="#fff" stroke-width="1.5" fill-opacity="0.22" stroke-opacity="0.95"/>
<rect x="1163.7" y="264.5" width="13.4" height="13.4" fill="#0088a8" stroke="#fff" stroke-width="1.5" fill-opacity="0.22" stroke-opacity="0.95"/>
<rect x="1197.9" y="261.5" width="13.4" height="13.4" fill="#5e7ca5" stroke="#fff" stroke-width="1.5" fill-opacity="0.22" stroke-opacity="0.95"/>
<rect x="1218.3" y="267.0" width="13.4" height="13.4" fill="#8a86c4" stroke="#fff" stroke-width="1.5" fill-opacity="0.22" stroke-opacity="0.95"/>
<rect x="1253.4" y="284.5" width="13.4" height="13.4" fill="#5e3d72" stroke="#fff" stroke-width="1.5" fill-opacity="0.22" stroke-opacity="0.95"/>
<rect x="1200.8" y="314.6" width="13.4" height="13.4" fill="#4a5fb0" stroke="#fff" stroke-width="1.5" fill-opacity="0.22" stroke-opacity="0.95"/>
<rect x="1335.6" y="334.2" width="13.4" height="13.4" fill="#ff00ff" stroke="#fff" stroke-width="1.5" fill-opacity="0.22" stroke-opacity="0.95"/>
<rect x="1200.8" y="364.6" width="13.4" height="13.4" fill="#333c9c" stroke="#fff" stroke-width="1.5" fill-opacity="0.22" stroke-opacity="0.95"/>
<rect x="1197.9" y="476.4" width="13.4" height="13.4" fill="#0000ff" stroke="#fff" stroke-width="1.5" fill-opacity="0.22" stroke-opacity="0.95"/>
<circle cx="1147.4" cy="148.4" r="4.1" fill="#00ff00" stroke="#111" stroke-width="1.1"/>
<circle cx="1172.0" cy="171.8" r="4.1" fill="#449648" stroke="#111" stroke-width="1.1"/>
<circle cx="1210.0" cy="163.0" r="4.1" fill="#a6c043" stroke="#111" stroke-width="1.1"/>
<circle cx="1231.7" cy="156.8" r="4.1" fill="#ffff00" stroke="#111" stroke-width="1.1"/>
<circle cx="1260.5" cy="161.8" r="4.1" fill="#f1c82a" stroke="#111" stroke-width="1.1"/>
<circle cx="1296.0" cy="167.2" r="4.1" fill="#f0a830" stroke="#111" stroke-width="1.1"/>
<circle cx="1341.9" cy="173.0" r="4.1" fill="#de7a2a" stroke="#111" stroke-width="1.1"/>
<circle cx="1511.0" cy="182.3" r="4.1" fill="#ff0000" stroke="#111" stroke-width="1.1"/>
<circle cx="1208.3" cy="185.2" r="4.1" fill="#586c42" stroke="#111" stroke-width="1.1"/>
<circle cx="1278.0" cy="200.2" r="4.1" fill="#735140" stroke="#111" stroke-width="1.1"/>
<circle cx="1266.8" cy="206.9" r="4.1" fill="#c69a84" stroke="#111" stroke-width="1.1"/>
<circle cx="1432.0" cy="201.0" r="4.1" fill="#b7303a" stroke="#111" stroke-width="1.1"/>
<circle cx="1362.4" cy="215.6" r="4.1" fill="#cc5568" stroke="#111" stroke-width="1.1"/>
<circle cx="1178.7" cy="217.7" r="4.1" fill="#62c9ad" stroke="#111" stroke-width="1.1"/>
<circle cx="1160.8" cy="237.0" r="4.1" fill="#00ffff" stroke="#111" stroke-width="1.1"/>
<circle cx="1328.6" cy="265.3" r="4.1" fill="#c2569a" stroke="#111" stroke-width="1.1"/>
<circle cx="1168.3" cy="270.7" r="4.1" fill="#0088a8" stroke="#111" stroke-width="1.1"/>
<circle cx="1202.0" cy="269.5" r="4.1" fill="#5e7ca5" stroke="#111" stroke-width="1.1"/>
<circle cx="1223.4" cy="276.2" r="4.1" fill="#8a86c4" stroke="#111" stroke-width="1.1"/>
<circle cx="1263.0" cy="296.6" r="4.1" fill="#5e3d72" stroke="#111" stroke-width="1.1"/>
<circle cx="1205.8" cy="327.9" r="4.1" fill="#4a5fb0" stroke="#111" stroke-width="1.1"/>
<circle cx="1343.6" cy="348.4" r="4.1" fill="#ff00ff" stroke="#111" stroke-width="1.1"/>
<circle cx="1205.8" cy="383.9" r="4.1" fill="#333c9c" stroke="#111" stroke-width="1.1"/>
<circle cx="1200.4" cy="490.2" r="4.1" fill="#0000ff" stroke="#111" stroke-width="1.1"/>
<circle cx="1235.9" cy="264.5" r="4.6" fill="#000"/>
<rect x="1221.1" y="221.8" width="12.8" height="12.8" fill="#ddd" stroke="#000" stroke-width="2" fill-opacity="0.45"/>
<circle cx="1226.6" cy="227.8" r="4.2" fill="#a0a0a0" stroke="#111" stroke-width="1.2"/>
</g>
<rect x="1018.0" y="122.0" width="639.0" height="492.0" fill="none" stroke="#a8a8a8" stroke-width="1.3"/>
<text x="1320.6" y="116.3" font-size="14" fill="#d0d0d0" text-anchor="middle" textLength="83.5" lengthAdjust="spacingAndGlyphs">CIE 1976 u'v'</text>
<line x1="1012.5" y1="614.0" x2="1018.0" y2="614.0" stroke="#d4d4d4" stroke-width="1.7"/>
<text x="1011.5" y="620.3" font-size="14.5" fill="#d8d8d8" text-anchor="end">0</text>
<line x1="1018.0" y1="614.0" x2="1018.0" y2="619.5" stroke="#d4d4d4" stroke-width="1.7"/>
<text x="1018.0" y="634.8" font-size="14.5" fill="#d8d8d8" text-anchor="middle">0</text>
<line x1="1012.5" y1="573.0" x2="1018.0" y2="573.0" stroke="#d4d4d4" stroke-width="1.7"/>
<text x="1011.5" y="579.3" font-size="14.5" fill="#d8d8d8" text-anchor="end">0,05</text>
<line x1="1071.2" y1="614.0" x2="1071.2" y2="619.5" stroke="#d4d4d4" stroke-width="1.7"/>
<text x="1071.2" y="634.8" font-size="14.5" fill="#d8d8d8" text-anchor="middle">0,05</text>
<line x1="1012.5" y1="532.0" x2="1018.0" y2="532.0" stroke="#d4d4d4" stroke-width="1.7"/>
<text x="1011.5" y="538.3" font-size="14.5" fill="#d8d8d8" text-anchor="end">0,1</text>
<line x1="1124.4" y1="614.0" x2="1124.4" y2="619.5" stroke="#d4d4d4" stroke-width="1.7"/>
<text x="1124.4" y="634.8" font-size="14.5" fill="#d8d8d8" text-anchor="middle">0,1</text>
<line x1="1012.5" y1="491.0" x2="1018.0" y2="491.0" stroke="#d4d4d4" stroke-width="1.7"/>
<text x="1011.5" y="497.3" font-size="14.5" fill="#d8d8d8" text-anchor="end">0,15</text>
<line x1="1177.7" y1="614.0" x2="1177.7" y2="619.5" stroke="#d4d4d4" stroke-width="1.7"/>
<text x="1177.7" y="634.8" font-size="14.5" fill="#d8d8d8" text-anchor="middle">0,15</text>
<line x1="1012.5" y1="450.0" x2="1018.0" y2="450.0" stroke="#d4d4d4" stroke-width="1.7"/>
<text x="1011.5" y="456.3" font-size="14.5" fill="#d8d8d8" text-anchor="end">0,2</text>
<line x1="1230.9" y1="614.0" x2="1230.9" y2="619.5" stroke="#d4d4d4" stroke-width="1.7"/>
<text x="1230.9" y="634.8" font-size="14.5" fill="#d8d8d8" text-anchor="middle">0,2</text>
<line x1="1012.5" y1="409.0" x2="1018.0" y2="409.0" stroke="#d4d4d4" stroke-width="1.7"/>
<text x="1011.5" y="415.3" font-size="14.5" fill="#d8d8d8" text-anchor="end">0,25</text>
<line x1="1284.1" y1="614.0" x2="1284.1" y2="619.5" stroke="#d4d4d4" stroke-width="1.7"/>
<text x="1284.1" y="634.8" font-size="14.5" fill="#d8d8d8" text-anchor="middle">0,25</text>
<line x1="1012.5" y1="368.0" x2="1018.0" y2="368.0" stroke="#d4d4d4" stroke-width="1.7"/>
<text x="1011.5" y="374.3" font-size="14.5" fill="#d8d8d8" text-anchor="end">0,3</text>
<line x1="1337.3" y1="614.0" x2="1337.3" y2="619.5" stroke="#d4d4d4" stroke-width="1.7"/>
<text x="1337.3" y="634.8" font-size="14.5" fill="#d8d8d8" text-anchor="middle">0,3</text>
<line x1="1012.5" y1="327.0" x2="1018.0" y2="327.0" stroke="#d4d4d4" stroke-width="1.7"/>
<text x="1011.5" y="333.3" font-size="14.5" fill="#d8d8d8" text-anchor="end">0,35</text>
<line x1="1390.5" y1="614.0" x2="1390.5" y2="619.5" stroke="#d4d4d4" stroke-width="1.7"/>
<text x="1390.5" y="634.8" font-size="14.5" fill="#d8d8d8" text-anchor="middle">0,35</text>
<line x1="1012.5" y1="286.0" x2="1018.0" y2="286.0" stroke="#d4d4d4" stroke-width="1.7"/>
<text x="1011.5" y="292.3" font-size="14.5" fill="#d8d8d8" text-anchor="end">0,4</text>
<line x1="1443.7" y1="614.0" x2="1443.7" y2="619.5" stroke="#d4d4d4" stroke-width="1.7"/>
<text x="1443.7" y="634.8" font-size="14.5" fill="#d8d8d8" text-anchor="middle">0,4</text>
<line x1="1012.5" y1="245.0" x2="1018.0" y2="245.0" stroke="#d4d4d4" stroke-width="1.7"/>
<text x="1011.5" y="251.3" font-size="14.5" fill="#d8d8d8" text-anchor="end">0,45</text>
<line x1="1496.9" y1="614.0" x2="1496.9" y2="619.5" stroke="#d4d4d4" stroke-width="1.7"/>
<text x="1496.9" y="634.8" font-size="14.5" fill="#d8d8d8" text-anchor="middle">0,45</text>
<line x1="1012.5" y1="204.0" x2="1018.0" y2="204.0" stroke="#d4d4d4" stroke-width="1.7"/>
<text x="1011.5" y="210.3" font-size="14.5" fill="#d8d8d8" text-anchor="end">0,5</text>
<line x1="1550.2" y1="614.0" x2="1550.2" y2="619.5" stroke="#d4d4d4" stroke-width="1.7"/>
<text x="1550.2" y="634.8" font-size="14.5" fill="#d8d8d8" text-anchor="middle">0,5</text>
<line x1="1012.5" y1="163.0" x2="1018.0" y2="163.0" stroke="#d4d4d4" stroke-width="1.7"/>
<text x="1011.5" y="169.3" font-size="14.5" fill="#d8d8d8" text-anchor="end">0,55</text>
<line x1="1603.4" y1="614.0" x2="1603.4" y2="619.5" stroke="#d4d4d4" stroke-width="1.7"/>
<text x="1603.4" y="634.8" font-size="14.5" fill="#d8d8d8" text-anchor="middle">0,55</text>
<g clip-path="url(#insc)">
<rect x="1450" y="438" width="205" height="137" fill="url(#insg)"/>
<path d="M1453 441 H1652 V557.6 L1453 455.6 Z" fill="#000" fill-opacity="0.4"/>
</g>
<rect x="1453.0" y="441.0" width="198.5" height="130.5" fill="none" stroke="#8c8c70" stroke-width="1.3"/>
<rect x="1545.1" y="499.0" width="13.0" height="13.0" fill="none" stroke="#fff" stroke-width="1.4"/>
<circle cx="1551.4" cy="476.1" r="4.3" fill="#ffff00" stroke="#111" stroke-width="1.2"/>
<rect x="1402.3" y="581.7" width="250.7" height="26.6" fill="#333"/>
<text x="1403.2" y="602.8" font-size="19" fill="#f2f2f2" textLength="211.0" lengthAdjust="spacingAndGlyphs">RGB Triplet: 255, 255, 0</text>
<rect x="320.5" y="663.5" width="1349.5" height="226.0" fill="#111"/>
<rect x="322.0" y="664.5" width="1343.0" height="12.5" fill="#2d2d2d"/>
<rect x="322.0" y="677.0" width="1343.0" height="12.3" fill="#151515"/>
<text x="492.5" y="682.2" font-size="12.5" fill="#f0f0f0" textLength="47.5" lengthAdjust="spacingAndGlyphs">White</text>
<text x="555.0" y="682.2" font-size="12.5" fill="#f0f0f0" textLength="60.0" lengthAdjust="spacingAndGlyphs">Gray 80</text>
<text x="625.5" y="682.2" font-size="12.5" fill="#f0f0f0" textLength="60.0" lengthAdjust="spacingAndGlyphs">Gray 65</text>
<text x="696.0" y="682.2" font-size="12.5" fill="#f0f0f0" textLength="60.5" lengthAdjust="spacingAndGlyphs">Gray 50</text>
<text x="767.0" y="682.2" font-size="12.5" fill="#f0f0f0" textLength="60.0" lengthAdjust="spacingAndGlyphs">Gray 35</text>
<text x="841.2" y="682.2" font-size="12.5" fill="#f0f0f0" textLength="40.1" lengthAdjust="spacingAndGlyphs">Black</text>
<text x="894.6" y="682.2" font-size="12.5" fill="#f0f0f0" textLength="72.6" lengthAdjust="spacingAndGlyphs">Dark Skin</text>
<text x="979.2" y="682.2" font-size="12.5" fill="#f0f0f0" textLength="74.0" lengthAdjust="spacingAndGlyphs">Light Skin</text>
<text x="1064.3" y="682.2" font-size="12.5" fill="#f0f0f0" textLength="65.5" lengthAdjust="spacingAndGlyphs">Blue Sky</text>
<text x="1140.9" y="682.2" font-size="12.5" fill="#f0f0f0" textLength="55.5" lengthAdjust="spacingAndGlyphs">Foliage</text>
<text x="1207.5" y="682.2" font-size="12.5" fill="#f0f0f0" textLength="92.5" lengthAdjust="spacingAndGlyphs">Blue Flower</text>
<text x="1311.2" y="682.2" font-size="12.5" fill="#f0f0f0" textLength="99.5" lengthAdjust="spacingAndGlyphs">Bluish Green</text>
<text x="1421.9" y="682.2" font-size="12.5" fill="#f0f0f0" textLength="57.1" lengthAdjust="spacingAndGlyphs">Orange</text>
<text x="1489.7" y="682.2" font-size="12.5" fill="#f0f0f0" textLength="103.3" lengthAdjust="spacingAndGlyphs">Purplish Blue</text>
<text x="1603.7" y="682.2" font-size="12.5" fill="#f0f0f0" textLength="112.3" lengthAdjust="spacingAndGlyphs">Moderate Red</text>
<rect x="322.0" y="689.3" width="1343.0" height="23.3" fill="#434343"/>
<text x="337.3" y="706.9" font-size="16" fill="#f4f4f4" font-weight="bold" textLength="71.0" lengthAdjust="spacingAndGlyphs">x: CIE31</text>
<text x="488.1" y="706.9" font-size="16" fill="#f0f0f0" textLength="35.0" lengthAdjust="spacingAndGlyphs">0,31</text>
<text x="555.0" y="706.9" font-size="16" fill="#f0f0f0" textLength="35.0" lengthAdjust="spacingAndGlyphs">0,31</text>
<text x="625.5" y="706.9" font-size="16" fill="#f0f0f0" textLength="35.0" lengthAdjust="spacingAndGlyphs">0,31</text>
<text x="696.0" y="706.9" font-size="16" fill="#f0f0f0" textLength="35.0" lengthAdjust="spacingAndGlyphs">0,31</text>
<text x="767.0" y="706.9" font-size="16" fill="#f0f0f0" textLength="35.0" lengthAdjust="spacingAndGlyphs">0,31</text>
<text x="837.9" y="706.9" font-size="16" fill="#f0f0f0" textLength="35.0" lengthAdjust="spacingAndGlyphs">0,29</text>
<text x="893.8" y="706.9" font-size="16" fill="#f0f0f0" textLength="35.0" lengthAdjust="spacingAndGlyphs">0,41</text>
<text x="979.2" y="706.9" font-size="16" fill="#f0f0f0" textLength="35.0" lengthAdjust="spacingAndGlyphs">0,38</text>
<text x="1064.3" y="706.9" font-size="16" fill="#f0f0f0" textLength="35.0" lengthAdjust="spacingAndGlyphs">0,25</text>
<text x="1140.4" y="706.9" font-size="16" fill="#f0f0f0" textLength="35.0" lengthAdjust="spacingAndGlyphs">0,34</text>
<text x="1207.0" y="706.9" font-size="16" fill="#f0f0f0" textLength="35.0" lengthAdjust="spacingAndGlyphs">0,26</text>
<text x="1311.2" y="706.9" font-size="16" fill="#f0f0f0" textLength="35.0" lengthAdjust="spacingAndGlyphs">0,26</text>
<text x="1421.9" y="706.9" font-size="16" fill="#f0f0f0" textLength="35.0" lengthAdjust="spacingAndGlyphs">0,52</text>
<text x="1489.7" y="706.9" font-size="16" fill="#f0f0f0" textLength="35.0" lengthAdjust="spacingAndGlyphs">0,21</text>
<text x="1603.7" y="706.9" font-size="16" fill="#f0f0f0" textLength="35.0" lengthAdjust="spacingAndGlyphs">0,47</text>
<rect x="322.0" y="712.4" width="1343.0" height="23.3" fill="#7b7b7b"/>
<text x="337.3" y="730.0" font-size="16" fill="#f4f4f4" font-weight="bold" textLength="71.0" lengthAdjust="spacingAndGlyphs">y: CIE31</text>
<text x="488.1" y="730.0" font-size="16" fill="#f0f0f0" textLength="35.0" lengthAdjust="spacingAndGlyphs">0,33</text>
<text x="555.0" y="730.0" font-size="16" fill="#f0f0f0" textLength="35.0" lengthAdjust="spacingAndGlyphs">0,33</text>
<text x="625.5" y="730.0" font-size="16" fill="#f0f0f0" textLength="35.0" lengthAdjust="spacingAndGlyphs">0,33</text>
<text x="696.0" y="730.0" font-size="16" fill="#f0f0f0" textLength="35.0" lengthAdjust="spacingAndGlyphs">0,33</text>
<text x="767.0" y="730.0" font-size="16" fill="#f0f0f0" textLength="35.0" lengthAdjust="spacingAndGlyphs">0,33</text>
<text x="837.9" y="730.0" font-size="16" fill="#f0f0f0" textLength="35.0" lengthAdjust="spacingAndGlyphs">0,26</text>
<text x="893.8" y="730.0" font-size="16" fill="#f0f0f0" textLength="35.0" lengthAdjust="spacingAndGlyphs">0,37</text>
<text x="979.2" y="730.0" font-size="16" fill="#f0f0f0" textLength="35.0" lengthAdjust="spacingAndGlyphs">0,36</text>
<text x="1064.3" y="730.0" font-size="16" fill="#f0f0f0" textLength="35.0" lengthAdjust="spacingAndGlyphs">0,26</text>
<text x="1140.4" y="730.0" font-size="16" fill="#f0f0f0" textLength="35.0" lengthAdjust="spacingAndGlyphs">0,44</text>
<text x="1207.0" y="730.0" font-size="16" fill="#f0f0f0" textLength="35.0" lengthAdjust="spacingAndGlyphs">0,25</text>
<text x="1311.2" y="730.0" font-size="16" fill="#f0f0f0" textLength="35.0" lengthAdjust="spacingAndGlyphs">0,37</text>
<text x="1421.9" y="730.0" font-size="16" fill="#f0f0f0" textLength="35.0" lengthAdjust="spacingAndGlyphs">0,41</text>
<text x="1489.7" y="730.0" font-size="16" fill="#f0f0f0" textLength="35.0" lengthAdjust="spacingAndGlyphs">0,19</text>
<text x="1603.7" y="730.0" font-size="16" fill="#f0f0f0" textLength="35.0" lengthAdjust="spacingAndGlyphs">0,31</text>
<rect x="322.0" y="735.5" width="1343.0" height="23.3" fill="#434343"/>
<text x="337.3" y="753.1" font-size="16" fill="#f4f4f4" font-weight="bold" textLength="10.5" lengthAdjust="spacingAndGlyphs">Y</text>
<text x="488.1" y="753.1" font-size="16" fill="#f0f0f0" textLength="56.5" lengthAdjust="spacingAndGlyphs">492,19</text>
<text x="555.0" y="753.1" font-size="16" fill="#f0f0f0" textLength="56.5" lengthAdjust="spacingAndGlyphs">396,92</text>
<text x="625.5" y="753.1" font-size="16" fill="#f0f0f0" textLength="56.5" lengthAdjust="spacingAndGlyphs">322,47</text>
<text x="696.0" y="753.1" font-size="16" fill="#f0f0f0" textLength="56.5" lengthAdjust="spacingAndGlyphs">247,68</text>
<text x="767.0" y="753.1" font-size="16" fill="#f0f0f0" textLength="56.5" lengthAdjust="spacingAndGlyphs">172,08</text>
<text x="837.9" y="753.1" font-size="16" fill="#f0f0f0" textLength="35.0" lengthAdjust="spacingAndGlyphs">0,11</text>
<text x="893.8" y="753.1" font-size="16" fill="#f0f0f0" textLength="45.7" lengthAdjust="spacingAndGlyphs">47,64</text>
<text x="979.2" y="753.1" font-size="16" fill="#f0f0f0" textLength="56.5" lengthAdjust="spacingAndGlyphs">176,30</text>
<text x="1064.3" y="753.1" font-size="16" fill="#f0f0f0" textLength="45.7" lengthAdjust="spacingAndGlyphs">91,64</text>
<text x="1140.4" y="753.1" font-size="16" fill="#f0f0f0" textLength="45.7" lengthAdjust="spacingAndGlyphs">64,60</text>
<text x="1207.0" y="753.1" font-size="16" fill="#f0f0f0" textLength="56.5" lengthAdjust="spacingAndGlyphs">113,86</text>
<text x="1311.2" y="753.1" font-size="16" fill="#f0f0f0" textLength="56.5" lengthAdjust="spacingAndGlyphs">215,17</text>
<text x="1421.9" y="753.1" font-size="16" fill="#f0f0f0" textLength="56.5" lengthAdjust="spacingAndGlyphs">143,98</text>
<text x="1489.7" y="753.1" font-size="16" fill="#f0f0f0" textLength="45.7" lengthAdjust="spacingAndGlyphs">55,72</text>
<text x="1603.7" y="753.1" font-size="16" fill="#f0f0f0" textLength="45.7" lengthAdjust="spacingAndGlyphs">91,98</text>
<rect x="322.0" y="758.6" width="1343.0" height="23.3" fill="#7b7b7b"/>
<text x="337.3" y="776.2" font-size="16" fill="#f4f4f4" font-weight="bold" textLength="129.0" lengthAdjust="spacingAndGlyphs">Target x:CIE31</text>
<text x="488.1" y="776.2" font-size="16" fill="#f0f0f0" textLength="35.0" lengthAdjust="spacingAndGlyphs">0,31</text>
<text x="555.0" y="776.2" font-size="16" fill="#f0f0f0" textLength="35.0" lengthAdjust="spacingAndGlyphs">0,31</text>
<text x="625.5" y="776.2" font-size="16" fill="#f0f0f0" textLength="35.0" lengthAdjust="spacingAndGlyphs">0,31</text>
<text x="696.0" y="776.2" font-size="16" fill="#f0f0f0" textLength="35.0" lengthAdjust="spacingAndGlyphs">0,31</text>
<text x="767.0" y="776.2" font-size="16" fill="#f0f0f0" textLength="35.0" lengthAdjust="spacingAndGlyphs">0,31</text>
<text x="837.9" y="776.2" font-size="16" fill="#f0f0f0" textLength="35.0" lengthAdjust="spacingAndGlyphs">0,31</text>
<text x="893.8" y="776.2" font-size="16" fill="#f0f0f0" textLength="35.0" lengthAdjust="spacingAndGlyphs">0,40</text>
<text x="979.2" y="776.2" font-size="16" fill="#f0f0f0" textLength="35.0" lengthAdjust="spacingAndGlyphs">0,38</text>
<text x="1064.3" y="776.2" font-size="16" fill="#f0f0f0" textLength="35.0" lengthAdjust="spacingAndGlyphs">0,25</text>
<text x="1140.4" y="776.2" font-size="16" fill="#f0f0f0" textLength="35.0" lengthAdjust="spacingAndGlyphs">0,34</text>
<text x="1207.0" y="776.2" font-size="16" fill="#f0f0f0" textLength="35.0" lengthAdjust="spacingAndGlyphs">0,27</text>
<text x="1311.2" y="776.2" font-size="16" fill="#f0f0f0" textLength="35.0" lengthAdjust="spacingAndGlyphs">0,26</text>
<text x="1421.9" y="776.2" font-size="16" fill="#f0f0f0" textLength="35.0" lengthAdjust="spacingAndGlyphs">0,51</text>
<text x="1489.7" y="776.2" font-size="16" fill="#f0f0f0" textLength="35.0" lengthAdjust="spacingAndGlyphs">0,22</text>
<text x="1603.7" y="776.2" font-size="16" fill="#f0f0f0" textLength="35.0" lengthAdjust="spacingAndGlyphs">0,46</text>
<rect x="322.0" y="781.7" width="1343.0" height="23.3" fill="#434343"/>
<text x="337.3" y="799.3" font-size="16" fill="#f4f4f4" font-weight="bold" textLength="129.0" lengthAdjust="spacingAndGlyphs">Target y:CIE31</text>
<text x="488.1" y="799.3" font-size="16" fill="#f0f0f0" textLength="35.0" lengthAdjust="spacingAndGlyphs">0,33</text>
<text x="555.0" y="799.3" font-size="16" fill="#f0f0f0" textLength="35.0" lengthAdjust="spacingAndGlyphs">0,33</text>
<text x="625.5" y="799.3" font-size="16" fill="#f0f0f0" textLength="35.0" lengthAdjust="spacingAndGlyphs">0,33</text>
<text x="696.0" y="799.3" font-size="16" fill="#f0f0f0" textLength="35.0" lengthAdjust="spacingAndGlyphs">0,33</text>
<text x="767.0" y="799.3" font-size="16" fill="#f0f0f0" textLength="35.0" lengthAdjust="spacingAndGlyphs">0,33</text>
<text x="837.9" y="799.3" font-size="16" fill="#f0f0f0" textLength="35.0" lengthAdjust="spacingAndGlyphs">0,33</text>
<text x="893.8" y="799.3" font-size="16" fill="#f0f0f0" textLength="35.0" lengthAdjust="spacingAndGlyphs">0,36</text>
<text x="979.2" y="799.3" font-size="16" fill="#f0f0f0" textLength="35.0" lengthAdjust="spacingAndGlyphs">0,36</text>
<text x="1064.3" y="799.3" font-size="16" fill="#f0f0f0" textLength="35.0" lengthAdjust="spacingAndGlyphs">0,27</text>
<text x="1140.4" y="799.3" font-size="16" fill="#f0f0f0" textLength="35.0" lengthAdjust="spacingAndGlyphs">0,43</text>
<text x="1207.0" y="799.3" font-size="16" fill="#f0f0f0" textLength="35.0" lengthAdjust="spacingAndGlyphs">0,25</text>
<text x="1311.2" y="799.3" font-size="16" fill="#f0f0f0" textLength="35.0" lengthAdjust="spacingAndGlyphs">0,36</text>
<text x="1421.9" y="799.3" font-size="16" fill="#f0f0f0" textLength="35.0" lengthAdjust="spacingAndGlyphs">0,41</text>
<text x="1489.7" y="799.3" font-size="16" fill="#f0f0f0" textLength="35.0" lengthAdjust="spacingAndGlyphs">0,19</text>
<text x="1603.7" y="799.3" font-size="16" fill="#f0f0f0" textLength="35.0" lengthAdjust="spacingAndGlyphs">0,31</text>
<rect x="322.0" y="804.8" width="1343.0" height="23.3" fill="#7b7b7b"/>
<text x="337.3" y="822.4" font-size="16" fill="#f4f4f4" font-weight="bold" textLength="74.2" lengthAdjust="spacingAndGlyphs">Target Y</text>
<text x="488.1" y="822.4" font-size="16" fill="#f0f0f0" textLength="56.5" lengthAdjust="spacingAndGlyphs">492,19</text>
<text x="555.0" y="822.4" font-size="16" fill="#f0f0f0" textLength="56.5" lengthAdjust="spacingAndGlyphs">389,47</text>
<text x="625.5" y="822.4" font-size="16" fill="#f0f0f0" textLength="56.5" lengthAdjust="spacingAndGlyphs">313,82</text>
<text x="696.0" y="822.4" font-size="16" fill="#f0f0f0" textLength="56.5" lengthAdjust="spacingAndGlyphs">241,68</text>
<text x="767.0" y="822.4" font-size="16" fill="#f0f0f0" textLength="56.5" lengthAdjust="spacingAndGlyphs">168,29</text>
<text x="837.9" y="822.4" font-size="16" fill="#f0f0f0" textLength="35.0" lengthAdjust="spacingAndGlyphs">0,00</text>
<text x="893.8" y="822.4" font-size="16" fill="#f0f0f0" textLength="45.7" lengthAdjust="spacingAndGlyphs">49,58</text>
<text x="979.2" y="822.4" font-size="16" fill="#f0f0f0" textLength="56.5" lengthAdjust="spacingAndGlyphs">171,75</text>
<text x="1064.3" y="822.4" font-size="16" fill="#f0f0f0" textLength="45.7" lengthAdjust="spacingAndGlyphs">92,03</text>
<text x="1140.4" y="822.4" font-size="16" fill="#f0f0f0" textLength="45.7" lengthAdjust="spacingAndGlyphs">64,14</text>
<text x="1207.0" y="822.4" font-size="16" fill="#f0f0f0" textLength="56.5" lengthAdjust="spacingAndGlyphs">114,77</text>
<text x="1311.2" y="822.4" font-size="16" fill="#f0f0f0" textLength="56.5" lengthAdjust="spacingAndGlyphs">206,09</text>
<text x="1421.9" y="822.4" font-size="16" fill="#f0f0f0" textLength="56.5" lengthAdjust="spacingAndGlyphs">139,52</text>
<text x="1489.7" y="822.4" font-size="16" fill="#f0f0f0" textLength="45.7" lengthAdjust="spacingAndGlyphs">57,85</text>
<text x="1603.7" y="822.4" font-size="16" fill="#f0f0f0" textLength="45.7" lengthAdjust="spacingAndGlyphs">91,92</text>
<rect x="322.0" y="827.9" width="1343.0" height="23.3" fill="#434343"/>
<text x="337.3" y="845.5" font-size="16" fill="#f4f4f4" font-weight="bold" textLength="73.4" lengthAdjust="spacingAndGlyphs">ΔE 2000</text>
<text x="488.1" y="845.5" font-size="16" fill="#f0f0f0" textLength="35.0" lengthAdjust="spacingAndGlyphs">3,47</text>
<text x="555.0" y="845.5" font-size="16" fill="#f0f0f0" textLength="35.0" lengthAdjust="spacingAndGlyphs">2,94</text>
<text x="625.5" y="845.5" font-size="16" fill="#f0f0f0" textLength="35.0" lengthAdjust="spacingAndGlyphs">2,95</text>
<text x="696.0" y="845.5" font-size="16" fill="#f0f0f0" textLength="35.0" lengthAdjust="spacingAndGlyphs">2,63</text>
<text x="767.0" y="845.5" font-size="16" fill="#f0f0f0" textLength="35.0" lengthAdjust="spacingAndGlyphs">2,22</text>
<text x="837.9" y="845.5" font-size="16" fill="#f0f0f0" textLength="35.0" lengthAdjust="spacingAndGlyphs">0,28</text>
<text x="893.8" y="845.5" font-size="16" fill="#f0f0f0" textLength="35.0" lengthAdjust="spacingAndGlyphs">1,31</text>
<text x="979.2" y="845.5" font-size="16" fill="#f0f0f0" textLength="35.0" lengthAdjust="spacingAndGlyphs">1,32</text>
<text x="1064.3" y="845.5" font-size="16" fill="#f0f0f0" textLength="35.0" lengthAdjust="spacingAndGlyphs">1,01</text>
<text x="1140.4" y="845.5" font-size="16" fill="#f0f0f0" textLength="35.0" lengthAdjust="spacingAndGlyphs">1,55</text>
<text x="1207.0" y="845.5" font-size="16" fill="#f0f0f0" textLength="35.0" lengthAdjust="spacingAndGlyphs">0,79</text>
<text x="1311.2" y="845.5" font-size="16" fill="#f0f0f0" textLength="35.0" lengthAdjust="spacingAndGlyphs">1,94</text>
<text x="1421.9" y="845.5" font-size="16" fill="#f0f0f0" textLength="35.0" lengthAdjust="spacingAndGlyphs">1,43</text>
<text x="1489.7" y="845.5" font-size="16" fill="#f0f0f0" textLength="35.0" lengthAdjust="spacingAndGlyphs">0,92</text>
<text x="1603.7" y="845.5" font-size="16" fill="#f0f0f0" textLength="35.0" lengthAdjust="spacingAndGlyphs">0,85</text>
<rect x="322.0" y="851.0" width="1343.0" height="23.3" fill="#7b7b7b"/>
<text x="337.3" y="868.6" font-size="16" fill="#f4f4f4" font-weight="bold" textLength="58.8" lengthAdjust="spacingAndGlyphs">ΔE ITP</text>
<text x="488.1" y="868.6" font-size="16" fill="#f0f0f0" textLength="35.0" lengthAdjust="spacingAndGlyphs">2,18</text>
<text x="555.0" y="868.6" font-size="16" fill="#f0f0f0" textLength="35.0" lengthAdjust="spacingAndGlyphs">2,33</text>
<text x="625.5" y="868.6" font-size="16" fill="#f0f0f0" textLength="35.0" lengthAdjust="spacingAndGlyphs">2,80</text>
<text x="696.0" y="868.6" font-size="16" fill="#f0f0f0" textLength="35.0" lengthAdjust="spacingAndGlyphs">2,59</text>
<text x="767.0" y="868.6" font-size="16" fill="#f0f0f0" textLength="35.0" lengthAdjust="spacingAndGlyphs">2,36</text>
<text x="837.9" y="868.6" font-size="16" fill="#f0f0f0" textLength="45.7" lengthAdjust="spacingAndGlyphs">47,00</text>
<text x="893.8" y="868.6" font-size="16" fill="#f0f0f0" textLength="35.0" lengthAdjust="spacingAndGlyphs">4,07</text>
<text x="979.2" y="868.6" font-size="16" fill="#f0f0f0" textLength="35.0" lengthAdjust="spacingAndGlyphs">2,98</text>
<text x="1064.3" y="868.6" font-size="16" fill="#f0f0f0" textLength="35.0" lengthAdjust="spacingAndGlyphs">2,71</text>
<text x="1140.4" y="868.6" font-size="16" fill="#f0f0f0" textLength="35.0" lengthAdjust="spacingAndGlyphs">5,21</text>
<text x="1207.0" y="868.6" font-size="16" fill="#f0f0f0" textLength="35.0" lengthAdjust="spacingAndGlyphs">2,16</text>
<text x="1311.2" y="868.6" font-size="16" fill="#f0f0f0" textLength="35.0" lengthAdjust="spacingAndGlyphs">4,32</text>
<text x="1421.9" y="868.6" font-size="16" fill="#f0f0f0" textLength="35.0" lengthAdjust="spacingAndGlyphs">7,34</text>
<text x="1489.7" y="868.6" font-size="16" fill="#f0f0f0" textLength="35.0" lengthAdjust="spacingAndGlyphs">4,73</text>
<text x="1603.7" y="868.6" font-size="16" fill="#f0f0f0" textLength="35.0" lengthAdjust="spacingAndGlyphs">6,24</text>
<rect x="322.0" y="874.1" width="1343.0" height="15.5" fill="#6c6c6c"/>
<rect x="323.0" y="875.6" width="17.0" height="12.5" fill="#8c8c8c" rx="2" stroke="#aaa" stroke-width="0.8"/>
<path d="M335 877.8 v8 l-7 -4 Z" fill="#444"/>
<rect x="343.0" y="875.6" width="640.0" height="12.5" fill="#484848" rx="6"/>
<rect x="1647.0" y="875.6" width="17.0" height="12.5" fill="#8c8c8c" rx="2" stroke="#aaa" stroke-width="0.8"/>
<path d="M1652 877.8 v8 l7 -4 Z" fill="#444"/>
<rect x="-33.5" y="931.5" width="62.5" height="60.5" fill="url(#g50)" rx="5"/>
<rect x="-27.2" y="937.8" width="50.0" height="15.0" fill="#8a86c4" rx="4.5"/>
<path d="M-27.2 942.3 q0 -4 4 -4 h42 q4 0 4 4" fill="none" stroke="#000" stroke-opacity="0.35" stroke-width="1.2"/>
<text x="-23.5" y="971.5" font-size="13" fill="#262626" font-weight="bold" textLength="26.9" lengthAdjust="spacingAndGlyphs">Blue</text>
<text x="-23.5" y="986.9" font-size="13" fill="#262626" font-weight="bold" textLength="42.5" lengthAdjust="spacingAndGlyphs">Flower</text>
<rect x="31.5" y="931.5" width="62.5" height="60.5" fill="url(#g50)" rx="5"/>
<rect x="37.8" y="937.8" width="50.0" height="15.0" fill="#62c9ad" rx="4.5"/>
<path d="M37.8 942.3 q0 -4 4 -4 h42 q4 0 4 4" fill="none" stroke="#000" stroke-opacity="0.35" stroke-width="1.2"/>
<text x="44.0" y="971.5" font-size="13" fill="#262626" font-weight="bold" textLength="37.3" lengthAdjust="spacingAndGlyphs">Bluish</text>
<text x="44.0" y="986.9" font-size="13" fill="#262626" font-weight="bold" textLength="37.3" lengthAdjust="spacingAndGlyphs">Green</text>
<rect x="96.5" y="931.5" width="62.5" height="60.5" fill="url(#g50)" rx="5"/>
<rect x="102.8" y="937.8" width="50.0" height="30.0" fill="#de7a2a" rx="4.5"/>
<path d="M102.8 942.3 q0 -4 4 -4 h42 q4 0 4 4" fill="none" stroke="#000" stroke-opacity="0.35" stroke-width="1.2"/>
<text x="105.8" y="986.9" font-size="13" fill="#262626" font-weight="bold" textLength="44.0" lengthAdjust="spacingAndGlyphs">Orange</text>
<rect x="161.5" y="931.5" width="62.5" height="60.5" fill="url(#g50)" rx="5"/>
<rect x="167.8" y="937.8" width="50.0" height="15.0" fill="#4a5fb0" rx="4.5"/>
<path d="M167.8 942.3 q0 -4 4 -4 h42 q4 0 4 4" fill="none" stroke="#000" stroke-opacity="0.35" stroke-width="1.2"/>
<text x="167.7" y="971.5" font-size="13" fill="#262626" font-weight="bold" textLength="49.9" lengthAdjust="spacingAndGlyphs">Purplish</text>
<text x="167.7" y="986.9" font-size="13" fill="#262626" font-weight="bold" textLength="26.9" lengthAdjust="spacingAndGlyphs">Blue</text>
<rect x="226.5" y="931.5" width="62.5" height="60.5" fill="url(#g50)" rx="5"/>
<rect x="232.8" y="937.8" width="50.0" height="15.0" fill="#cc5568" rx="4.5"/>
<path d="M232.8 942.3 q0 -4 4 -4 h42 q4 0 4 4" fill="none" stroke="#000" stroke-opacity="0.35" stroke-width="1.2"/>
<text x="227.5" y="971.5" font-size="13" fill="#262626" font-weight="bold" textLength="60.6" lengthAdjust="spacingAndGlyphs">Moderate</text>
<text x="227.5" y="986.9" font-size="13" fill="#262626" font-weight="bold" textLength="23.0" lengthAdjust="spacingAndGlyphs">Red</text>
<rect x="291.5" y="931.5" width="62.5" height="60.5" fill="url(#g50)" rx="5"/>
<rect x="297.8" y="937.8" width="50.0" height="30.0" fill="#5e3d72" rx="4.5"/>
<path d="M297.8 942.3 q0 -4 4 -4 h42 q4 0 4 4" fill="none" stroke="#000" stroke-opacity="0.35" stroke-width="1.2"/>
<text x="302.4" y="986.9" font-size="13" fill="#262626" font-weight="bold" textLength="40.4" lengthAdjust="spacingAndGlyphs">Purple</text>
<rect x="356.5" y="931.5" width="62.5" height="60.5" fill="url(#g50)" rx="5"/>
<rect x="362.8" y="937.8" width="50.0" height="15.0" fill="#a6c043" rx="4.5"/>
<path d="M362.8 942.3 q0 -4 4 -4 h42 q4 0 4 4" fill="none" stroke="#000" stroke-opacity="0.35" stroke-width="1.2"/>
<text x="367.4" y="971.5" font-size="13" fill="#262626" font-weight="bold" textLength="40.4" lengthAdjust="spacingAndGlyphs">Yellow</text>
<text x="367.4" y="986.9" font-size="13" fill="#262626" font-weight="bold" textLength="37.3" lengthAdjust="spacingAndGlyphs">Green</text>
<rect x="421.5" y="931.5" width="62.5" height="60.5" fill="url(#g50)" rx="5"/>
<rect x="427.8" y="937.8" width="50.0" height="15.0" fill="#f0a830" rx="4.5"/>
<path d="M427.8 942.3 q0 -4 4 -4 h42 q4 0 4 4" fill="none" stroke="#000" stroke-opacity="0.35" stroke-width="1.2"/>
<text x="430.4" y="971.5" font-size="13" fill="#262626" font-weight="bold" textLength="44.4" lengthAdjust="spacingAndGlyphs">Orange</text>
<text x="430.4" y="986.9" font-size="13" fill="#262626" font-weight="bold" textLength="40.1" lengthAdjust="spacingAndGlyphs">Yellow</text>
<rect x="486.5" y="931.5" width="62.5" height="60.5" fill="url(#g50)" rx="5"/>
<rect x="492.8" y="937.8" width="50.0" height="30.0" fill="#333c9c" rx="4.5"/>
<path d="M492.8 942.3 q0 -4 4 -4 h42 q4 0 4 4" fill="none" stroke="#000" stroke-opacity="0.35" stroke-width="1.2"/>
<text x="504.2" y="986.9" font-size="13" fill="#262626" font-weight="bold" textLength="26.9" lengthAdjust="spacingAndGlyphs">Blue</text>
<rect x="551.5" y="931.5" width="62.5" height="60.5" fill="url(#g50)" rx="5"/>
<rect x="557.8" y="937.8" width="50.0" height="30.0" fill="#449648" rx="4.5"/>
<path d="M557.8 942.3 q0 -4 4 -4 h42 q4 0 4 4" fill="none" stroke="#000" stroke-opacity="0.35" stroke-width="1.2"/>
<text x="564.0" y="986.9" font-size="13" fill="#262626" font-weight="bold" textLength="36.9" lengthAdjust="spacingAndGlyphs">Green</text>
<rect x="616.5" y="931.5" width="62.5" height="60.5" fill="url(#g50)" rx="5"/>
<rect x="622.8" y="937.8" width="50.0" height="30.0" fill="#b7303a" rx="4.5"/>
<path d="M622.8 942.3 q0 -4 4 -4 h42 q4 0 4 4" fill="none" stroke="#000" stroke-opacity="0.35" stroke-width="1.2"/>
<text x="636.1" y="986.9" font-size="13" fill="#262626" font-weight="bold" textLength="23.0" lengthAdjust="spacingAndGlyphs">Red</text>
<rect x="681.5" y="931.5" width="62.5" height="60.5" fill="url(#g50)" rx="5"/>
<rect x="687.8" y="937.8" width="50.0" height="30.0" fill="#f1c82a" rx="4.5"/>
<path d="M687.8 942.3 q0 -4 4 -4 h42 q4 0 4 4" fill="none" stroke="#000" stroke-opacity="0.35" stroke-width="1.2"/>
<text x="692.7" y="986.9" font-size="13" fill="#262626" font-weight="bold" textLength="40.4" lengthAdjust="spacingAndGlyphs">Yellow</text>
<rect x="746.5" y="931.5" width="62.5" height="60.5" fill="url(#g50)" rx="5"/>
<rect x="752.8" y="937.8" width="50.0" height="30.0" fill="#c2569a" rx="4.5"/>
<path d="M752.8 942.3 q0 -4 4 -4 h42 q4 0 4 4" fill="none" stroke="#000" stroke-opacity="0.35" stroke-width="1.2"/>
<text x="750.6" y="986.9" font-size="13" fill="#262626" font-weight="bold" textLength="54.3" lengthAdjust="spacingAndGlyphs">Magenta</text>
<rect x="811.5" y="931.5" width="62.5" height="60.5" fill="url(#g50)" rx="5"/>
<rect x="817.8" y="937.8" width="50.0" height="30.0" fill="#0088a8" rx="4.5"/>
<path d="M817.8 942.3 q0 -4 4 -4 h42 q4 0 4 4" fill="none" stroke="#000" stroke-opacity="0.35" stroke-width="1.2"/>
<text x="827.9" y="986.9" font-size="13" fill="#262626" font-weight="bold" textLength="29.7" lengthAdjust="spacingAndGlyphs">Cyan</text>
<rect x="876.5" y="931.5" width="62.5" height="60.5" fill="url(#g50)" rx="5"/>
<rect x="882.8" y="937.8" width="50.0" height="30.0" fill="#ff0000" rx="4.5"/>
<path d="M882.8 942.3 q0 -4 4 -4 h42 q4 0 4 4" fill="none" stroke="#000" stroke-opacity="0.35" stroke-width="1.2"/>
<text x="878.2" y="986.9" font-size="13" fill="#262626" font-weight="bold" textLength="59.1" lengthAdjust="spacingAndGlyphs">100% Red</text>
<rect x="941.5" y="931.5" width="62.5" height="60.5" fill="url(#g50)" rx="5"/>
<rect x="947.8" y="937.8" width="50.0" height="15.0" fill="#00ff00" rx="4.5"/>
<path d="M947.8 942.3 q0 -4 4 -4 h42 q4 0 4 4" fill="none" stroke="#000" stroke-opacity="0.35" stroke-width="1.2"/>
<text x="954.3" y="971.5" font-size="13" fill="#262626" font-weight="bold" textLength="33.3" lengthAdjust="spacingAndGlyphs">100%</text>
<text x="954.3" y="986.9" font-size="13" fill="#262626" font-weight="bold" textLength="36.9" lengthAdjust="spacingAndGlyphs">Green</text>
<rect x="1006.5" y="931.5" width="62.5" height="60.5" fill="url(#g50)" rx="5"/>
<rect x="1012.8" y="937.8" width="50.0" height="15.0" fill="#0000ff" rx="4.5"/>
<path d="M1012.8 942.3 q0 -4 4 -4 h42 q4 0 4 4" fill="none" stroke="#000" stroke-opacity="0.35" stroke-width="1.2"/>
<text x="1021.3" y="971.5" font-size="13" fill="#262626" font-weight="bold" textLength="33.3" lengthAdjust="spacingAndGlyphs">100%</text>
<text x="1021.3" y="986.9" font-size="13" fill="#262626" font-weight="bold" textLength="26.9" lengthAdjust="spacingAndGlyphs">Blue</text>
<rect x="1071.5" y="931.5" width="62.5" height="60.5" fill="url(#g50)" rx="5"/>
<rect x="1077.8" y="937.8" width="50.0" height="15.0" fill="#00ffff" rx="4.5"/>
<path d="M1077.8 942.3 q0 -4 4 -4 h42 q4 0 4 4" fill="none" stroke="#000" stroke-opacity="0.35" stroke-width="1.2"/>
<text x="1085.9" y="971.5" font-size="13" fill="#262626" font-weight="bold" textLength="33.3" lengthAdjust="spacingAndGlyphs">100%</text>
<text x="1085.9" y="986.9" font-size="13" fill="#262626" font-weight="bold" textLength="27.7" lengthAdjust="spacingAndGlyphs">Cyan</text>
<rect x="1136.5" y="931.5" width="62.5" height="60.5" fill="url(#g50)" rx="5"/>
<rect x="1142.8" y="937.8" width="50.0" height="15.0" fill="#ff00ff" rx="4.5"/>
<path d="M1142.8 942.3 q0 -4 4 -4 h42 q4 0 4 4" fill="none" stroke="#000" stroke-opacity="0.35" stroke-width="1.2"/>
<text x="1140.6" y="971.5" font-size="13" fill="#262626" font-weight="bold" textLength="33.3" lengthAdjust="spacingAndGlyphs">100%</text>
<text x="1140.6" y="986.9" font-size="13" fill="#262626" font-weight="bold" textLength="54.3" lengthAdjust="spacingAndGlyphs">Magenta</text>
<rect x="1201.5" y="931.5" width="62.5" height="60.5" fill="url(#g51)" rx="5"/>
<rect x="1207.8" y="937.8" width="50.0" height="15.0" fill="#ffff00" rx="4.5"/>
<path d="M1207.8 942.3 q0 -4 4 -4 h42 q4 0 4 4" fill="none" stroke="#000" stroke-opacity="0.35" stroke-width="1.2"/>
<text x="1212.3" y="971.5" font-size="13" fill="#fff" font-weight="bold" textLength="33.3" lengthAdjust="spacingAndGlyphs">100%</text>
<text x="1212.3" y="986.9" font-size="13" fill="#fff" font-weight="bold" textLength="40.9" lengthAdjust="spacingAndGlyphs">Yellow</text>
<rect x="0.0" y="993.0" width="1265.0" height="9.0" fill="#666"/>
<rect x="1.0" y="994.0" width="14.0" height="9.0" fill="#8c8c8c" rx="2" stroke="#aaa" stroke-width="0.8"/>
<path d="M10.5 996 v8 l-6 -4 Z" fill="#3c3c3c"/>
<rect x="450.0" y="994.3" width="795.0" height="9.0" fill="#4a4a4a" rx="5"/>
<rect x="1250.0" y="994.0" width="14.0" height="9.0" fill="#8c8c8c" rx="2" stroke="#aaa" stroke-width="0.8"/>
<path d="M1255 996 v8 l6 -4 Z" fill="#3c3c3c"/>
<rect x="1265.3" y="931.4" width="60.0" height="75.0" fill="url(#g52)" rx="5"/>
<path d="M1265.3 954 V936.4 q0 -5 5 -5 h50 q5 0 5 5 V954 Z" fill="url(#g53)"/>
<line x1="1265.3" y1="954.3" x2="1325.3" y2="954.3" stroke="#4e4e4e" stroke-width="1.2"/>
<circle cx="1295.6" cy="943.2" r="9.4" fill="url(#g54)"/>
<path d="M1290 945 h11 l-5.5 -5.6 Z" fill="#2e2e2e"/>
<rect x="1277.3" y="963.6" width="35.8" height="35.8" fill="url(#g55)" rx="5" stroke="#242424" stroke-width="3"/>
<rect x="1287.0" y="973.1" width="17.2" height="17.0" fill="#000"/>
<rect x="1326.5" y="931.5" width="56.2" height="37.5" fill="url(#g56)"/>
<circle cx="1354.8" cy="949.5" r="13" fill="url(#g58)"/>
<rect x="1350.3" y="945.0" width="9.5" height="9.5" fill="#353535"/>
<rect x="1383.1" y="931.5" width="56.2" height="37.5" fill="url(#g56)"/>
<line x1="1383.1" y1="931.5" x2="1383.1" y2="969.0" stroke="#4a4a4a" stroke-width="1"/>
<circle cx="1411.4" cy="949.5" r="13" fill="url(#g59)"/>
<path d="M1407.4 943.5 v12 l10 -6 Z" fill="#353535"/>
<rect x="1439.7" y="931.5" width="56.2" height="37.5" fill="url(#g56)"/>
<line x1="1439.7" y1="931.5" x2="1439.7" y2="969.0" stroke="#4a4a4a" stroke-width="1"/>
<circle cx="1468.0" cy="949.5" r="13" fill="url(#g60)"/>
<path d="M1464.5 944.0 h-3 v11 h3 M1471.5 944.0 h3 v11 h-3" fill="none" stroke="#353535" stroke-width="1.9"/>
<path d="M1464.6 949.5 l2.2 -2 v4 Z M1471.4 949.5 l-2.2 -2 v4 Z" fill="#353535"/>
<rect x="1496.3" y="931.5" width="56.2" height="37.5" fill="url(#g56)"/>
<line x1="1496.3" y1="931.5" x2="1496.3" y2="969.0" stroke="#4a4a4a" stroke-width="1"/>
<circle cx="1524.6" cy="949.5" r="13" fill="url(#g61)"/>
<text x="1524.6" y="955.8" font-size="20" fill="#404040" text-anchor="middle">∞</text>
<rect x="1552.9" y="931.5" width="56.2" height="37.5" fill="url(#g57)"/>
<line x1="1552.9" y1="931.5" x2="1552.9" y2="969.0" stroke="#4a4a4a" stroke-width="1"/>
<circle cx="1581.2" cy="949.5" r="13" fill="url(#g62)"/>
<path d="M1575.5 948.5 a6 6 0 0 1 10.5 -3.2 M1586.9 950.5 a6 6 0 0 1 -10.5 3.2" fill="none" stroke="#1a1a1a" stroke-width="2.4"/>
<path d="M1583.7 947.3 l4.5 0 l0 -4.5 Z M1578.7 951.7 l-4.5 0 l0 4.5 Z" fill="#1a1a1a"/>
<rect x="1609.5" y="931.5" width="56.2" height="37.5" fill="url(#g56)"/>
<line x1="1609.5" y1="931.5" x2="1609.5" y2="969.0" stroke="#4a4a4a" stroke-width="1"/>
<circle cx="1637.8" cy="949.5" r="13" fill="url(#g63)"/>
<line x1="1326.5" y1="969.5" x2="1665.0" y2="969.5" stroke="#3c3c3c" stroke-width="1.5"/>
<rect x="1326.5" y="970.5" width="170.0" height="34.0" fill="url(#g64)"/>
<rect x="1497.5" y="970.5" width="170.0" height="34.0" fill="url(#g64)"/>
<line x1="1497.0" y1="931.5" x2="1497.0" y2="1002.0" stroke="#3c3c3c" stroke-width="1.5"/>
<line x1="1326.5" y1="971.0" x2="1665.0" y2="971.0" stroke="#a4a4a4" stroke-width="1"/>
<circle cx="1365" cy="989" r="12.5" fill="url(#g65)"/>
<circle cx="1632" cy="989" r="12.5" fill="url(#g65)"/>
<text x="1365.0" y="996.0" font-size="22" fill="#333" text-anchor="middle">«</text>
<text x="1632.0" y="996.0" font-size="22" fill="#333" text-anchor="middle">»</text>
<text x="1398.0" y="1000.5" font-size="31" fill="#333" textLength="64.0" lengthAdjust="spacingAndGlyphs" stroke="#333" stroke-width="0.7">Back</text>
<text x="1532.0" y="1000.5" font-size="31" fill="#333" textLength="64.0" lengthAdjust="spacingAndGlyphs" stroke="#333" stroke-width="0.7">Next</text>
</svg>
</body></html>
